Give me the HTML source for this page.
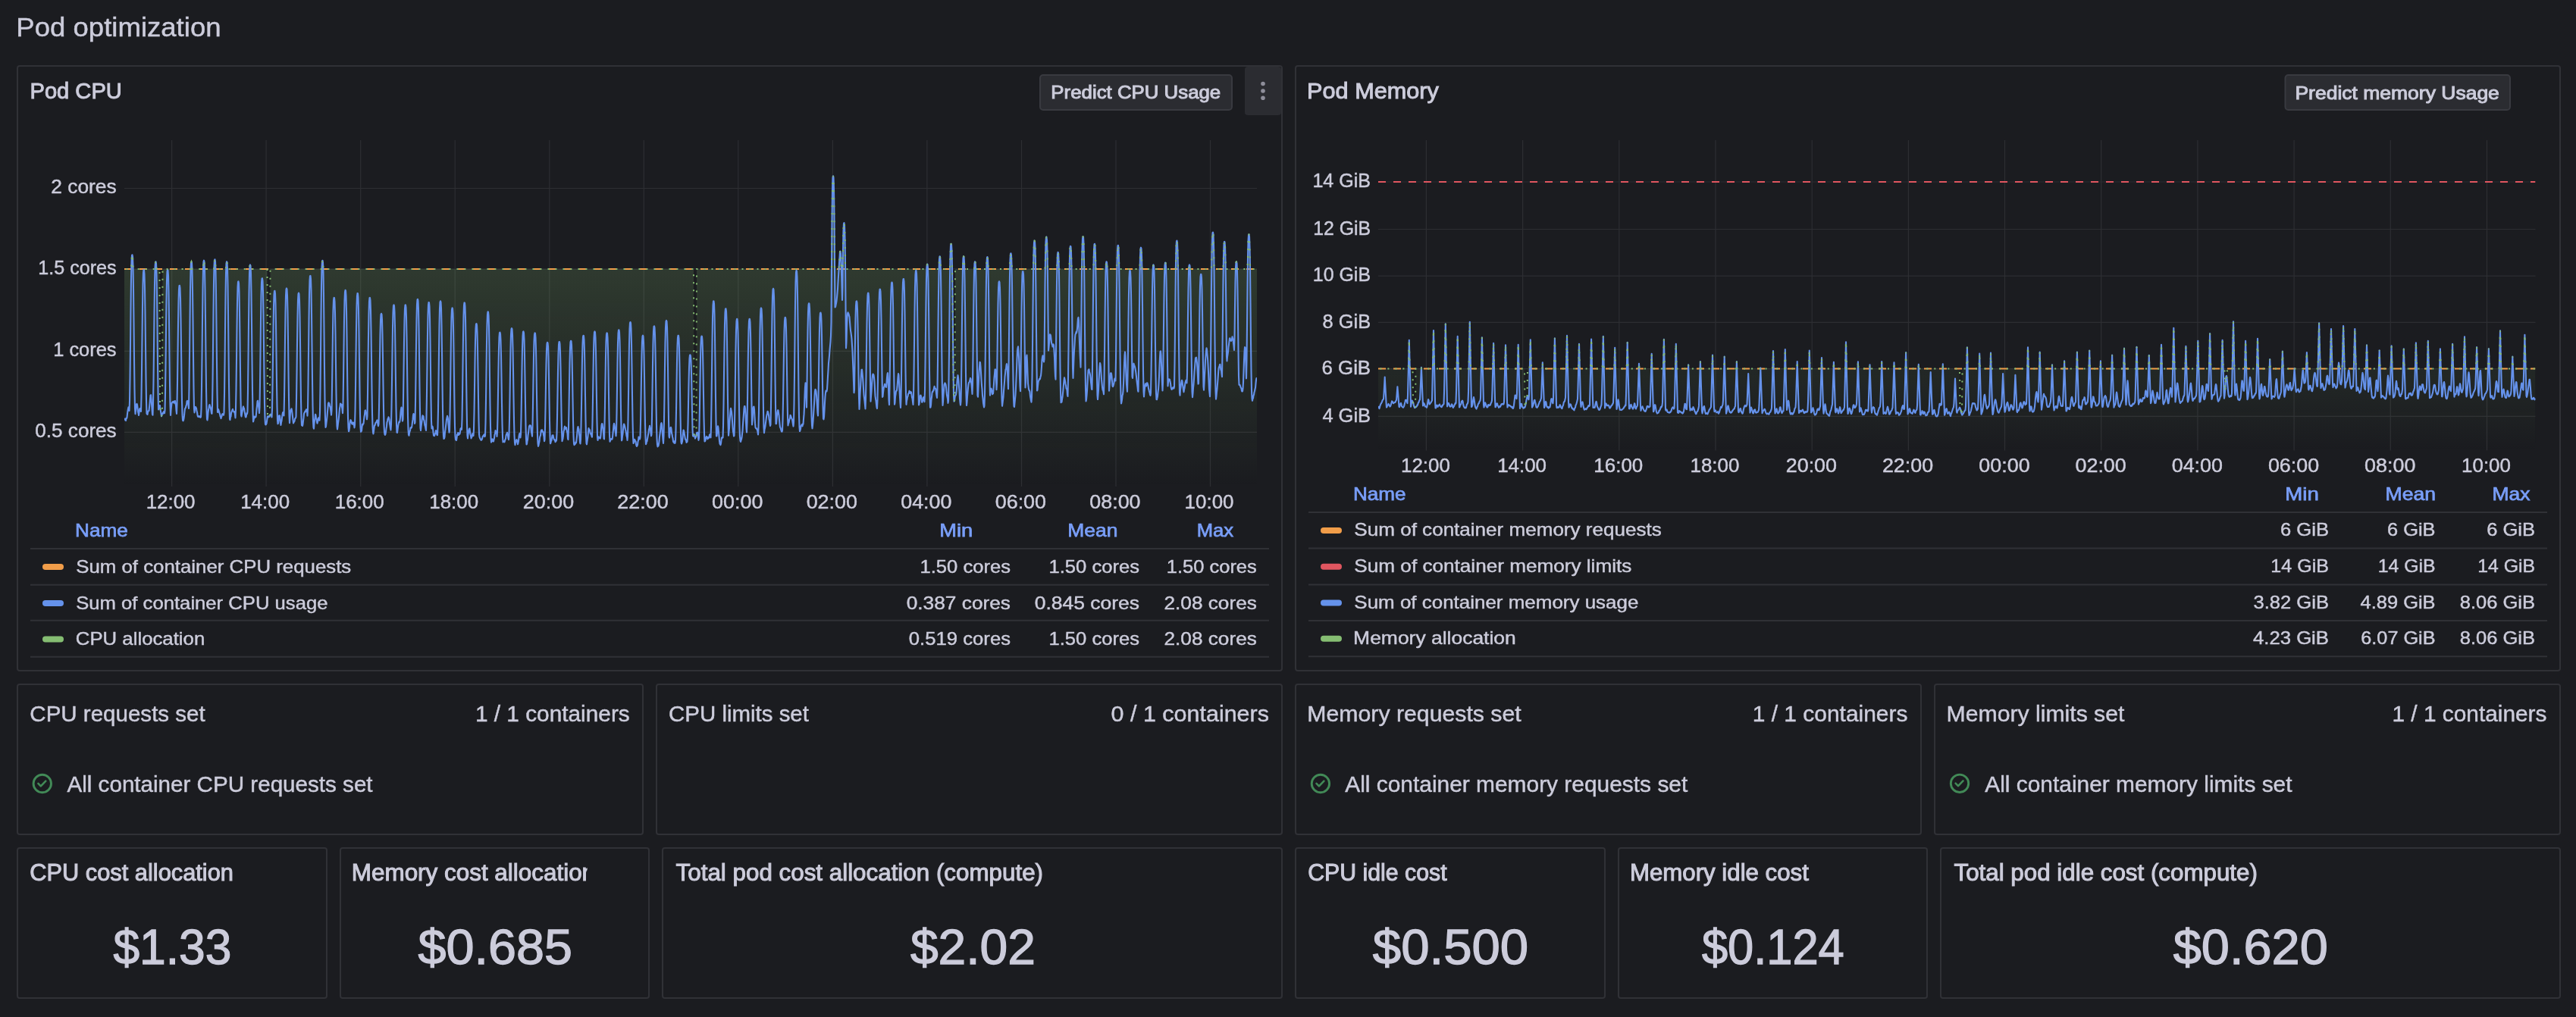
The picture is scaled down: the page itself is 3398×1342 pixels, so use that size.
<!DOCTYPE html>
<html><head><meta charset="utf-8"><title>Pod optimization</title>
<style>
html,body{margin:0;padding:0;background:#1b1c20;}
body{width:3398px;height:1342px;overflow:hidden;position:relative;font-family:"Liberation Sans", sans-serif;}
.p{position:absolute;box-sizing:border-box;border:2px solid #303136;border-radius:4px;background:#1b1c20;}
svg{position:absolute;left:0;top:0;will-change:transform;}
text{font-family:"Liberation Sans", sans-serif;fill:#ccccdb;stroke:#ccccdb;stroke-width:0.45px;}
text.m{stroke-width:1.0px;}
text.b{font-weight:700;}
text.v{stroke-width:1.3px;}
</style></head><body>
<div class="p" style="left:22px;top:86px;width:1670px;height:800px"></div>
<div class="p" style="left:1708px;top:86px;width:1670px;height:800px"></div>
<div class="p" style="left:22px;top:902px;width:827px;height:200px"></div>
<div class="p" style="left:865px;top:902px;width:827px;height:200px"></div>
<div class="p" style="left:1708px;top:902px;width:827px;height:200px"></div>
<div class="p" style="left:2551px;top:902px;width:827px;height:200px"></div>
<div class="p" style="left:22px;top:1118px;width:410px;height:200px"></div>
<div class="p" style="left:448px;top:1118px;width:409px;height:200px"></div>
<div class="p" style="left:873px;top:1118px;width:819px;height:200px"></div>
<div class="p" style="left:1708px;top:1118px;width:410px;height:200px"></div>
<div class="p" style="left:2134px;top:1118px;width:409px;height:200px"></div>
<div class="p" style="left:2559px;top:1118px;width:819px;height:200px"></div>
<svg width="3398" height="1342" viewBox="0 0 3398 1342">
<defs>
<linearGradient id="gc" gradientUnits="userSpaceOnUse" x1="0" y1="185" x2="0" y2="642"><stop offset="0" stop-color="#85bd72" stop-opacity="0.30"/><stop offset="1" stop-color="#85bd72" stop-opacity="0"/></linearGradient>
<linearGradient id="gm" gradientUnits="userSpaceOnUse" x1="0" y1="185" x2="0" y2="594.5"><stop offset="0" stop-color="#85bd72" stop-opacity="0.30"/><stop offset="1" stop-color="#85bd72" stop-opacity="0"/></linearGradient>
<clipPath id="cpc"><rect x="164" y="185" width="1494" height="457"/></clipPath>
<clipPath id="cpm"><rect x="1818" y="185" width="1526.5" height="409.5"/></clipPath>
<clipPath id="clip87"><rect x="448" y="1122.2" width="326.5" height="60"/></clipPath>
</defs>
<path d="M226.6,185V642 M351.1,185V642 M475.7,185V642 M600.2,185V642 M724.8,185V642 M849.3,185V642 M973.8,185V642 M1098.4,185V642 M1222.9,185V642 M1347.5,185V642 M1472.0,185V642 M1596.5,185V642 M164,248.5H1658 M164,354.9H1658 M164,463.4H1658 M164,570.4H1658 M1881.4,185V594.5 M2008.6,185V594.5 M2135.8,185V594.5 M2263.0,185V594.5 M2390.2,185V594.5 M2517.4,185V594.5 M2644.5,185V594.5 M2771.7,185V594.5 M2898.9,185V594.5 M3026.1,185V594.5 M3153.3,185V594.5 M3280.5,185V594.5 M1818,240.0H3344.5 M1818,302.5H3344.5 M1818,364.1H3344.5 M1818,425.4H3344.5 M1818,486.6H3344.5 M1818,549.3H3344.5" stroke="rgba(204,204,220,0.10)" stroke-width="1.2" fill="none"/>
<g clip-path="url(#cpc)">
<path d="M164.00,354.90 L164.50,354.90 L165.00,354.90 L165.50,354.90 L166.00,354.90 L166.50,354.90 L167.00,354.90 L167.50,354.90 L168.00,354.90 L168.50,354.90 L169.00,354.90 L169.50,354.90 L170.00,354.90 L170.50,354.90 L171.00,354.90 L171.50,354.90 L172.00,354.90 L172.50,354.90 L173.00,354.90 L173.50,345.03 L174.00,336.99 L174.40,336.20 L174.50,336.21 L175.00,338.85 L175.50,352.05 L176.00,354.90 L176.50,354.90 L177.00,354.90 L177.50,354.90 L178.00,354.90 L178.50,354.90 L179.00,354.90 L179.50,354.90 L180.00,354.90 L180.50,354.90 L181.00,354.90 L181.50,354.90 L182.00,354.90 L182.50,354.90 L183.00,354.90 L183.50,354.90 L184.00,354.90 L184.50,354.90 L185.00,354.90 L185.50,354.90 L186.00,354.90 L186.50,354.90 L187.00,354.90 L187.50,354.90 L188.00,354.90 L188.50,354.90 L189.00,354.90 L189.50,354.90 L189.70,354.90 L190.00,354.90 L190.50,354.90 L191.00,354.90 L191.50,354.90 L192.00,354.90 L192.50,354.90 L193.00,354.90 L193.50,354.90 L194.00,354.90 L194.50,354.90 L195.00,354.90 L195.50,354.90 L196.00,354.90 L196.50,354.90 L197.00,354.90 L197.50,354.90 L198.00,354.90 L198.50,354.90 L199.00,354.90 L199.50,354.90 L200.00,354.90 L200.50,354.90 L201.00,354.90 L201.50,354.90 L202.00,354.90 L202.50,354.90 L203.00,354.90 L203.50,354.90 L204.00,354.90 L204.50,353.82 L205.00,346.06 L205.40,345.30 L205.50,345.31 L206.00,347.86 L206.50,354.90 L207.00,354.90 L207.50,354.90 L208.00,354.90 L208.50,354.90 L209.00,354.90 L209.50,354.90 L210.00,354.90 L210.50,354.90 L211.00,535.10 L211.50,540.02 L212.00,542.83 L212.50,545.82 L213.00,549.26 L213.50,547.93 L214.00,545.60 L214.50,354.90 L215.00,354.90 L215.50,354.90 L216.00,354.90 L216.50,354.90 L217.00,354.90 L217.50,354.90 L218.00,354.90 L218.50,354.90 L219.00,354.90 L219.50,354.90 L220.00,354.90 L220.50,354.90 L221.00,354.90 L221.10,354.90 L221.50,354.90 L222.00,354.90 L222.50,354.90 L223.00,354.90 L223.50,354.90 L224.00,354.90 L224.50,354.90 L225.00,354.90 L225.50,354.90 L226.00,354.90 L226.50,354.90 L227.00,354.90 L227.50,354.90 L228.00,354.90 L228.50,354.90 L229.00,354.90 L229.50,354.90 L230.00,354.90 L230.50,354.90 L231.00,354.90 L231.50,354.90 L232.00,354.90 L232.50,354.90 L233.00,354.90 L233.50,354.90 L234.00,354.90 L234.50,354.90 L235.00,354.90 L235.50,354.90 L236.00,354.90 L236.50,354.90 L236.80,354.90 L237.00,354.90 L237.50,354.90 L238.00,354.90 L238.50,354.90 L239.00,354.90 L239.50,354.90 L240.00,354.90 L240.50,354.90 L241.00,354.90 L241.50,354.90 L242.00,354.90 L242.50,354.90 L243.00,354.90 L243.50,354.90 L244.00,354.90 L244.50,354.90 L245.00,354.90 L245.50,354.90 L246.00,354.90 L246.50,354.90 L247.00,354.90 L247.50,354.90 L248.00,354.90 L248.50,354.90 L249.00,354.90 L249.50,354.90 L250.00,354.90 L250.50,354.90 L251.00,354.90 L251.50,354.90 L252.00,346.80 L252.50,345.30 L253.00,346.80 L253.50,354.90 L254.00,354.90 L254.50,354.90 L255.00,354.90 L255.50,354.90 L256.00,354.90 L256.50,354.90 L257.00,354.90 L257.50,354.90 L258.00,354.90 L258.50,354.90 L259.00,354.90 L259.50,354.90 L260.00,354.90 L260.50,354.90 L261.00,354.90 L261.50,354.90 L262.00,354.90 L262.50,354.90 L263.00,354.90 L263.50,354.90 L264.00,354.90 L264.50,354.90 L265.00,354.90 L265.50,354.90 L266.00,354.90 L266.50,354.90 L267.00,354.90 L267.50,354.90 L268.00,354.90 L268.50,345.22 L269.00,343.70 L269.50,345.22 L270.00,354.90 L270.50,354.90 L271.00,354.90 L271.50,354.90 L272.00,354.90 L272.50,354.90 L273.00,354.90 L273.50,354.90 L274.00,354.90 L274.50,354.90 L275.00,354.90 L275.50,354.90 L276.00,354.90 L276.50,354.90 L277.00,354.90 L277.50,354.90 L278.00,354.90 L278.50,354.90 L279.00,354.90 L279.50,354.90 L280.00,354.90 L280.50,354.90 L281.00,354.90 L281.50,354.90 L282.00,354.90 L282.50,351.20 L283.00,343.19 L283.40,342.40 L283.50,342.41 L284.00,345.05 L284.50,354.90 L285.00,354.90 L285.50,354.90 L286.00,354.90 L286.50,354.90 L287.00,354.90 L287.50,354.90 L288.00,354.90 L288.50,354.90 L289.00,354.90 L289.50,354.90 L290.00,354.90 L290.50,354.90 L291.00,354.90 L291.50,354.90 L292.00,354.90 L292.50,354.90 L293.00,354.90 L293.50,354.90 L294.00,354.90 L294.50,354.90 L295.00,354.90 L295.50,354.90 L296.00,354.90 L296.50,354.90 L297.00,354.90 L297.50,354.90 L298.00,354.90 L298.50,347.92 L299.00,345.31 L299.10,345.30 L299.50,346.08 L300.00,354.02 L300.50,354.90 L301.00,354.90 L301.50,354.90 L302.00,354.90 L302.50,354.90 L303.00,354.90 L303.50,354.90 L304.00,354.90 L304.50,354.90 L305.00,354.90 L305.50,354.90 L306.00,354.90 L306.50,354.90 L307.00,354.90 L307.50,354.90 L308.00,354.90 L308.50,354.90 L309.00,354.90 L309.50,354.90 L310.00,354.90 L310.50,354.90 L311.00,354.90 L311.50,354.90 L312.00,354.90 L312.50,354.90 L313.00,354.90 L313.50,354.90 L314.00,354.90 L314.40,354.90 L314.50,354.90 L315.00,354.90 L315.50,354.90 L316.00,354.90 L316.50,354.90 L317.00,354.90 L317.50,354.90 L318.00,354.90 L318.50,354.90 L319.00,354.90 L319.50,354.90 L320.00,354.90 L320.50,354.90 L321.00,354.90 L321.50,354.90 L322.00,354.90 L322.50,354.90 L323.00,354.90 L323.50,354.90 L324.00,354.90 L324.50,354.90 L325.00,354.90 L325.50,354.90 L326.00,354.90 L326.50,354.90 L327.00,354.90 L327.50,354.90 L328.00,354.90 L328.50,354.90 L329.00,354.90 L329.50,350.91 L330.00,349.40 L330.50,350.91 L331.00,354.90 L331.50,354.90 L332.00,354.90 L332.50,354.90 L333.00,354.90 L333.50,354.90 L334.00,354.90 L334.50,354.90 L335.00,354.90 L335.50,354.90 L336.00,354.90 L336.50,354.90 L337.00,354.90 L337.50,354.90 L338.00,354.90 L338.50,354.90 L339.00,354.90 L339.50,354.90 L340.00,354.90 L340.50,354.90 L341.00,354.90 L341.50,354.90 L342.00,354.90 L342.50,354.90 L343.00,354.90 L343.50,354.90 L344.00,354.90 L344.50,354.90 L345.00,354.90 L345.50,354.90 L345.80,354.90 L346.00,354.90 L346.50,354.90 L347.00,354.90 L347.50,354.90 L348.00,354.90 L348.50,354.90 L349.00,354.90 L349.50,354.90 L350.00,354.90 L350.50,354.90 L351.00,354.90 L351.50,354.90 L352.00,354.90 L352.50,354.90 L353.00,549.49 L353.50,549.34 L354.00,549.00 L354.50,550.34 L355.00,549.30 L355.50,549.71 L356.00,548.26 L356.50,354.90 L357.00,354.90 L357.50,354.90 L358.00,354.90 L358.50,354.90 L359.00,354.90 L359.50,354.90 L360.00,354.90 L360.50,354.90 L361.00,354.90 L361.50,354.90 L362.00,354.90 L362.30,354.90 L362.50,354.90 L363.00,354.90 L363.50,354.90 L364.00,354.90 L364.50,354.90 L365.00,354.90 L365.50,354.90 L366.00,354.90 L366.50,354.90 L367.00,354.90 L367.50,354.90 L368.00,354.90 L368.50,354.90 L369.00,354.90 L369.50,354.90 L370.00,354.90 L370.50,354.90 L371.00,354.90 L371.50,354.90 L372.00,354.90 L372.50,354.90 L373.00,354.90 L373.50,354.90 L374.00,354.90 L374.50,354.90 L375.00,354.90 L375.50,354.90 L376.00,354.90 L376.50,354.90 L377.00,354.90 L377.50,354.90 L378.00,354.90 L378.50,354.90 L379.00,354.90 L379.50,354.90 L380.00,354.90 L380.50,354.90 L381.00,354.90 L381.50,354.90 L382.00,354.90 L382.50,354.90 L383.00,354.90 L383.50,354.90 L384.00,354.90 L384.50,354.90 L385.00,354.90 L385.50,354.90 L386.00,354.90 L386.50,354.90 L387.00,354.90 L387.50,354.90 L388.00,354.90 L388.50,354.90 L389.00,354.90 L389.50,354.90 L390.00,354.90 L390.50,354.90 L391.00,354.90 L391.50,354.90 L392.00,354.90 L392.50,354.90 L393.00,354.90 L393.50,354.90 L394.00,354.90 L394.50,354.90 L395.00,354.90 L395.50,354.90 L396.00,354.90 L396.50,354.90 L397.00,354.90 L397.50,354.90 L398.00,354.90 L398.50,354.90 L399.00,354.90 L399.50,354.90 L400.00,354.90 L400.50,354.90 L401.00,354.90 L401.50,354.90 L402.00,354.90 L402.50,354.90 L403.00,354.90 L403.50,354.90 L404.00,354.90 L404.50,354.90 L405.00,354.90 L405.50,354.90 L406.00,354.90 L406.50,354.90 L407.00,354.90 L407.50,354.90 L408.00,354.90 L408.50,354.90 L409.00,354.90 L409.30,354.90 L409.50,354.90 L410.00,354.90 L410.50,354.90 L411.00,354.90 L411.50,354.90 L412.00,354.90 L412.50,354.90 L413.00,354.90 L413.50,354.90 L414.00,354.90 L414.50,354.90 L415.00,354.90 L415.50,354.90 L416.00,354.90 L416.50,354.90 L417.00,354.90 L417.50,354.90 L418.00,354.90 L418.50,354.90 L419.00,354.90 L419.50,354.90 L420.00,354.90 L420.50,354.90 L421.00,354.90 L421.50,354.90 L422.00,354.90 L422.50,354.90 L423.00,354.90 L423.50,354.90 L424.00,354.90 L424.50,352.81 L425.00,344.52 L425.40,343.70 L425.50,343.71 L426.00,346.44 L426.50,354.90 L427.00,354.90 L427.50,354.90 L428.00,354.90 L428.50,354.90 L429.00,354.90 L429.50,354.90 L430.00,354.90 L430.50,354.90 L431.00,354.90 L431.50,354.90 L432.00,354.90 L432.50,354.90 L433.00,354.90 L433.50,354.90 L434.00,354.90 L434.50,354.90 L435.00,354.90 L435.50,354.90 L436.00,354.90 L436.50,354.90 L437.00,354.90 L437.50,354.90 L438.00,354.90 L438.50,354.90 L439.00,354.90 L439.50,354.90 L440.00,354.90 L440.50,354.90 L440.70,354.90 L441.00,354.90 L441.50,354.90 L442.00,354.90 L442.50,354.90 L443.00,354.90 L443.50,354.90 L444.00,354.90 L444.50,354.90 L445.00,354.90 L445.50,354.90 L446.00,354.90 L446.50,354.90 L447.00,354.90 L447.50,354.90 L448.00,354.90 L448.50,354.90 L449.00,354.90 L449.50,354.90 L450.00,354.90 L450.50,354.90 L451.00,354.90 L451.50,354.90 L452.00,354.90 L452.50,354.90 L453.00,354.90 L453.50,354.90 L454.00,354.90 L454.50,354.90 L455.00,354.90 L455.50,354.90 L455.60,354.90 L456.00,354.90 L456.50,354.90 L457.00,354.90 L457.50,354.90 L458.00,354.90 L458.50,354.90 L459.00,354.90 L459.50,354.90 L460.00,354.90 L460.50,354.90 L461.00,354.90 L461.50,354.90 L462.00,354.90 L462.50,354.90 L463.00,354.90 L463.50,354.90 L464.00,354.90 L464.50,354.90 L465.00,354.90 L465.50,354.90 L466.00,354.90 L466.50,354.90 L467.00,354.90 L467.50,354.90 L468.00,354.90 L468.50,354.90 L469.00,354.90 L469.50,354.90 L470.00,354.90 L470.50,354.90 L471.00,354.90 L471.50,354.90 L471.70,354.90 L472.00,354.90 L472.50,354.90 L473.00,354.90 L473.50,354.90 L474.00,354.90 L474.50,354.90 L475.00,354.90 L475.50,354.90 L476.00,354.90 L476.50,354.90 L477.00,354.90 L477.50,354.90 L478.00,354.90 L478.50,354.90 L479.00,354.90 L479.50,354.90 L480.00,354.90 L480.50,354.90 L481.00,354.90 L481.50,354.90 L482.00,354.90 L482.50,354.90 L483.00,354.90 L483.50,354.90 L484.00,354.90 L484.50,354.90 L485.00,354.90 L485.50,354.90 L486.00,354.90 L486.50,354.90 L487.00,354.90 L487.50,354.90 L487.80,354.90 L488.00,354.90 L488.50,354.90 L489.00,354.90 L489.50,354.90 L490.00,354.90 L490.50,354.90 L491.00,354.90 L491.50,354.90 L492.00,354.90 L492.50,354.90 L493.00,354.90 L493.50,354.90 L494.00,354.90 L494.50,354.90 L495.00,354.90 L495.50,354.90 L496.00,354.90 L496.50,354.90 L497.00,354.90 L497.50,354.90 L498.00,354.90 L498.50,354.90 L499.00,354.90 L499.50,354.90 L500.00,354.90 L500.50,354.90 L501.00,354.90 L501.50,354.90 L502.00,354.90 L502.50,354.90 L503.00,354.90 L503.50,354.90 L504.00,354.90 L504.50,354.90 L505.00,354.90 L505.50,354.90 L506.00,354.90 L506.50,354.90 L507.00,354.90 L507.50,354.90 L508.00,354.90 L508.50,354.90 L509.00,354.90 L509.50,354.90 L510.00,354.90 L510.50,354.90 L511.00,354.90 L511.50,354.90 L512.00,354.90 L512.50,354.90 L513.00,354.90 L513.50,354.90 L514.00,354.90 L514.50,354.90 L515.00,354.90 L515.50,354.90 L516.00,354.90 L516.50,354.90 L517.00,354.90 L517.50,354.90 L518.00,354.90 L518.50,354.90 L519.00,354.90 L519.50,354.90 L520.00,354.90 L520.50,354.90 L521.00,354.90 L521.50,354.90 L522.00,354.90 L522.50,354.90 L523.00,354.90 L523.50,354.90 L524.00,354.90 L524.50,354.90 L525.00,354.90 L525.50,354.90 L526.00,354.90 L526.50,354.90 L527.00,354.90 L527.50,354.90 L528.00,354.90 L528.50,354.90 L529.00,354.90 L529.50,354.90 L530.00,354.90 L530.50,354.90 L531.00,354.90 L531.50,354.90 L532.00,354.90 L532.50,354.90 L533.00,354.90 L533.50,354.90 L534.00,354.90 L534.50,354.90 L534.80,354.90 L535.00,354.90 L535.50,354.90 L536.00,354.90 L536.50,354.90 L537.00,354.90 L537.50,354.90 L538.00,354.90 L538.50,354.90 L539.00,354.90 L539.50,354.90 L540.00,354.90 L540.50,354.90 L541.00,354.90 L541.50,354.90 L542.00,354.90 L542.50,354.90 L543.00,354.90 L543.50,354.90 L544.00,354.90 L544.50,354.90 L545.00,354.90 L545.50,354.90 L546.00,354.90 L546.50,354.90 L547.00,354.90 L547.50,354.90 L548.00,354.90 L548.50,354.90 L549.00,354.90 L549.50,354.90 L550.00,354.90 L550.50,354.90 L550.90,354.90 L551.00,354.90 L551.50,354.90 L552.00,354.90 L552.50,354.90 L553.00,354.90 L553.50,354.90 L554.00,354.90 L554.50,354.90 L555.00,354.90 L555.50,354.90 L556.00,354.90 L556.50,354.90 L557.00,354.90 L557.50,354.90 L558.00,354.90 L558.50,354.90 L559.00,354.90 L559.50,354.90 L560.00,354.90 L560.50,354.90 L561.00,354.90 L561.50,354.90 L562.00,354.90 L562.50,354.90 L563.00,354.90 L563.50,354.90 L564.00,354.90 L564.50,354.90 L565.00,354.90 L565.50,354.90 L565.70,354.90 L566.00,354.90 L566.50,354.90 L567.00,354.90 L567.50,354.90 L568.00,354.90 L568.50,354.90 L569.00,354.90 L569.50,354.90 L570.00,354.90 L570.50,354.90 L571.00,354.90 L571.50,354.90 L572.00,354.90 L572.50,354.90 L573.00,354.90 L573.50,354.90 L574.00,354.90 L574.50,354.90 L575.00,354.90 L575.50,354.90 L576.00,354.90 L576.50,354.90 L577.00,354.90 L577.50,354.90 L578.00,354.90 L578.50,354.90 L579.00,354.90 L579.50,354.90 L580.00,354.90 L580.50,354.90 L581.00,354.90 L581.50,354.90 L582.00,354.90 L582.50,354.90 L583.00,354.90 L583.50,354.90 L584.00,354.90 L584.50,354.90 L585.00,354.90 L585.50,354.90 L586.00,354.90 L586.50,354.90 L587.00,354.90 L587.50,354.90 L588.00,354.90 L588.50,354.90 L589.00,354.90 L589.50,354.90 L590.00,354.90 L590.50,354.90 L591.00,354.90 L591.50,354.90 L592.00,354.90 L592.50,354.90 L593.00,354.90 L593.50,354.90 L594.00,354.90 L594.50,354.90 L595.00,354.90 L595.50,354.90 L596.00,354.90 L596.50,354.90 L596.60,354.90 L597.00,354.90 L597.50,354.90 L598.00,354.90 L598.50,354.90 L599.00,354.90 L599.50,354.90 L600.00,354.90 L600.50,354.90 L601.00,354.90 L601.50,354.90 L602.00,354.90 L602.50,354.90 L603.00,354.90 L603.50,354.90 L604.00,354.90 L604.50,354.90 L605.00,354.90 L605.50,354.90 L606.00,354.90 L606.50,354.90 L607.00,354.90 L607.50,354.90 L608.00,354.90 L608.50,354.90 L609.00,354.90 L609.50,354.90 L610.00,354.90 L610.50,354.90 L611.00,354.90 L611.50,354.90 L612.00,354.90 L612.50,354.90 L612.70,354.90 L613.00,354.90 L613.50,354.90 L614.00,354.90 L614.50,354.90 L615.00,354.90 L615.50,354.90 L616.00,354.90 L616.50,354.90 L617.00,354.90 L617.50,354.90 L618.00,354.90 L618.50,354.90 L619.00,354.90 L619.50,354.90 L620.00,354.90 L620.50,354.90 L621.00,354.90 L621.50,354.90 L622.00,354.90 L622.50,354.90 L623.00,354.90 L623.50,354.90 L624.00,354.90 L624.50,354.90 L625.00,354.90 L625.50,354.90 L626.00,354.90 L626.50,354.90 L627.00,354.90 L627.50,354.90 L628.00,354.90 L628.40,354.90 L628.50,354.90 L629.00,354.90 L629.50,354.90 L630.00,354.90 L630.50,354.90 L631.00,354.90 L631.50,354.90 L632.00,354.90 L632.50,354.90 L633.00,354.90 L633.50,354.90 L634.00,354.90 L634.50,354.90 L635.00,354.90 L635.50,354.90 L636.00,354.90 L636.50,354.90 L637.00,354.90 L637.50,354.90 L638.00,354.90 L638.50,354.90 L639.00,354.90 L639.50,354.90 L640.00,354.90 L640.50,354.90 L641.00,354.90 L641.50,354.90 L642.00,354.90 L642.50,354.90 L643.00,354.90 L643.50,354.90 L643.70,354.90 L644.00,354.90 L644.50,354.90 L645.00,354.90 L645.50,354.90 L646.00,354.90 L646.50,354.90 L647.00,354.90 L647.50,354.90 L648.00,354.90 L648.50,354.90 L649.00,354.90 L649.50,354.90 L650.00,354.90 L650.50,354.90 L651.00,354.90 L651.50,354.90 L652.00,354.90 L652.50,354.90 L653.00,354.90 L653.50,354.90 L654.00,354.90 L654.50,354.90 L655.00,354.90 L655.50,354.90 L656.00,354.90 L656.50,354.90 L657.00,354.90 L657.50,354.90 L658.00,354.90 L658.50,354.90 L659.00,354.90 L659.40,354.90 L659.50,354.90 L660.00,354.90 L660.50,354.90 L661.00,354.90 L661.50,354.90 L662.00,354.90 L662.50,354.90 L663.00,354.90 L663.50,354.90 L664.00,354.90 L664.50,354.90 L665.00,354.90 L665.50,354.90 L666.00,354.90 L666.50,354.90 L667.00,354.90 L667.50,354.90 L668.00,354.90 L668.50,354.90 L669.00,354.90 L669.50,354.90 L670.00,354.90 L670.50,354.90 L671.00,354.90 L671.50,354.90 L672.00,354.90 L672.50,354.90 L673.00,354.90 L673.50,354.90 L674.00,354.90 L674.50,354.90 L675.00,354.90 L675.50,354.90 L676.00,354.90 L676.50,354.90 L677.00,354.90 L677.50,354.90 L678.00,354.90 L678.50,354.90 L679.00,354.90 L679.50,354.90 L680.00,354.90 L680.50,354.90 L681.00,354.90 L681.50,354.90 L682.00,354.90 L682.50,354.90 L683.00,354.90 L683.50,354.90 L684.00,354.90 L684.50,354.90 L685.00,354.90 L685.50,354.90 L686.00,354.90 L686.50,354.90 L687.00,354.90 L687.50,354.90 L688.00,354.90 L688.50,354.90 L689.00,354.90 L689.50,354.90 L690.00,354.90 L690.40,354.90 L690.50,354.90 L691.00,354.90 L691.50,354.90 L692.00,354.90 L692.50,354.90 L693.00,354.90 L693.50,354.90 L694.00,354.90 L694.50,354.90 L695.00,354.90 L695.50,354.90 L696.00,354.90 L696.50,354.90 L697.00,354.90 L697.50,354.90 L698.00,354.90 L698.50,354.90 L699.00,354.90 L699.50,354.90 L700.00,354.90 L700.50,354.90 L701.00,354.90 L701.50,354.90 L702.00,354.90 L702.50,354.90 L703.00,354.90 L703.50,354.90 L704.00,354.90 L704.50,354.90 L705.00,354.90 L705.50,354.90 L705.60,354.90 L706.00,354.90 L706.50,354.90 L707.00,354.90 L707.50,354.90 L708.00,354.90 L708.50,354.90 L709.00,354.90 L709.50,354.90 L710.00,354.90 L710.50,354.90 L711.00,354.90 L711.50,354.90 L712.00,354.90 L712.50,354.90 L713.00,354.90 L713.50,354.90 L714.00,354.90 L714.50,354.90 L715.00,354.90 L715.50,354.90 L716.00,354.90 L716.50,354.90 L717.00,354.90 L717.50,354.90 L718.00,354.90 L718.50,354.90 L719.00,354.90 L719.50,354.90 L720.00,354.90 L720.50,354.90 L721.00,354.90 L721.50,354.90 L722.00,354.90 L722.10,354.90 L722.50,354.90 L723.00,354.90 L723.50,354.90 L724.00,354.90 L724.50,354.90 L725.00,354.90 L725.50,354.90 L726.00,354.90 L726.50,354.90 L727.00,354.90 L727.50,354.90 L728.00,354.90 L728.50,354.90 L729.00,354.90 L729.50,354.90 L730.00,354.90 L730.50,354.90 L731.00,354.90 L731.50,354.90 L732.00,354.90 L732.50,354.90 L733.00,354.90 L733.50,354.90 L734.00,354.90 L734.50,354.90 L735.00,354.90 L735.50,354.90 L736.00,354.90 L736.50,354.90 L737.00,354.90 L737.50,354.90 L737.80,354.90 L738.00,354.90 L738.50,354.90 L739.00,354.90 L739.50,354.90 L740.00,354.90 L740.50,354.90 L741.00,354.90 L741.50,354.90 L742.00,354.90 L742.50,354.90 L743.00,354.90 L743.50,354.90 L744.00,354.90 L744.50,354.90 L745.00,354.90 L745.50,354.90 L746.00,354.90 L746.50,354.90 L747.00,354.90 L747.50,354.90 L748.00,354.90 L748.50,354.90 L749.00,354.90 L749.50,354.90 L750.00,354.90 L750.50,354.90 L751.00,354.90 L751.50,354.90 L752.00,354.90 L752.50,354.90 L753.00,354.90 L753.10,354.90 L753.50,354.90 L754.00,354.90 L754.50,354.90 L755.00,354.90 L755.50,354.90 L756.00,354.90 L756.50,354.90 L757.00,354.90 L757.50,354.90 L758.00,354.90 L758.50,354.90 L759.00,354.90 L759.50,354.90 L760.00,354.90 L760.50,354.90 L761.00,354.90 L761.50,354.90 L762.00,354.90 L762.50,354.90 L763.00,354.90 L763.50,354.90 L764.00,354.90 L764.50,354.90 L765.00,354.90 L765.50,354.90 L766.00,354.90 L766.50,354.90 L767.00,354.90 L767.50,354.90 L768.00,354.90 L768.50,354.90 L769.00,354.90 L769.50,354.90 L769.60,354.90 L770.00,354.90 L770.50,354.90 L771.00,354.90 L771.50,354.90 L772.00,354.90 L772.50,354.90 L773.00,354.90 L773.50,354.90 L774.00,354.90 L774.50,354.90 L775.00,354.90 L775.50,354.90 L776.00,354.90 L776.50,354.90 L777.00,354.90 L777.50,354.90 L778.00,354.90 L778.50,354.90 L779.00,354.90 L779.50,354.90 L780.00,354.90 L780.50,354.90 L781.00,354.90 L781.50,354.90 L782.00,354.90 L782.50,354.90 L783.00,354.90 L783.50,354.90 L784.00,354.90 L784.50,354.90 L785.00,354.90 L785.50,354.90 L786.00,354.90 L786.50,354.90 L787.00,354.90 L787.50,354.90 L788.00,354.90 L788.50,354.90 L789.00,354.90 L789.50,354.90 L790.00,354.90 L790.50,354.90 L791.00,354.90 L791.50,354.90 L792.00,354.90 L792.50,354.90 L793.00,354.90 L793.50,354.90 L794.00,354.90 L794.50,354.90 L795.00,354.90 L795.50,354.90 L796.00,354.90 L796.50,354.90 L797.00,354.90 L797.50,354.90 L798.00,354.90 L798.50,354.90 L799.00,354.90 L799.50,354.90 L800.00,354.90 L800.50,354.90 L800.60,354.90 L801.00,354.90 L801.50,354.90 L802.00,354.90 L802.50,354.90 L803.00,354.90 L803.50,354.90 L804.00,354.90 L804.50,354.90 L805.00,354.90 L805.50,354.90 L806.00,354.90 L806.50,354.90 L807.00,354.90 L807.50,354.90 L808.00,354.90 L808.50,354.90 L809.00,354.90 L809.50,354.90 L810.00,354.90 L810.50,354.90 L811.00,354.90 L811.50,354.90 L812.00,354.90 L812.50,354.90 L813.00,354.90 L813.50,354.90 L814.00,354.90 L814.50,354.90 L815.00,354.90 L815.50,354.90 L816.00,354.90 L816.30,354.90 L816.50,354.90 L817.00,354.90 L817.50,354.90 L818.00,354.90 L818.50,354.90 L819.00,354.90 L819.50,354.90 L820.00,354.90 L820.50,354.90 L821.00,354.90 L821.50,354.90 L822.00,354.90 L822.50,354.90 L823.00,354.90 L823.50,354.90 L824.00,354.90 L824.50,354.90 L825.00,354.90 L825.50,354.90 L826.00,354.90 L826.50,354.90 L827.00,354.90 L827.50,354.90 L828.00,354.90 L828.50,354.90 L829.00,354.90 L829.50,354.90 L830.00,354.90 L830.50,354.90 L831.00,354.90 L831.50,354.90 L832.00,354.90 L832.50,354.90 L833.00,354.90 L833.50,354.90 L834.00,354.90 L834.50,354.90 L835.00,354.90 L835.50,354.90 L836.00,354.90 L836.50,354.90 L837.00,354.90 L837.50,354.90 L838.00,354.90 L838.50,354.90 L839.00,354.90 L839.50,354.90 L840.00,354.90 L840.50,354.90 L841.00,354.90 L841.50,354.90 L842.00,354.90 L842.50,354.90 L843.00,354.90 L843.50,354.90 L844.00,354.90 L844.50,354.90 L845.00,354.90 L845.50,354.90 L846.00,354.90 L846.50,354.90 L847.00,354.90 L847.50,354.90 L848.00,354.90 L848.50,354.90 L849.00,354.90 L849.50,354.90 L850.00,354.90 L850.50,354.90 L851.00,354.90 L851.50,354.90 L852.00,354.90 L852.50,354.90 L853.00,354.90 L853.50,354.90 L854.00,354.90 L854.50,354.90 L855.00,354.90 L855.50,354.90 L856.00,354.90 L856.50,354.90 L857.00,354.90 L857.50,354.90 L858.00,354.90 L858.50,354.90 L859.00,354.90 L859.50,354.90 L860.00,354.90 L860.50,354.90 L861.00,354.90 L861.50,354.90 L862.00,354.90 L862.50,354.90 L862.90,354.90 L863.00,354.90 L863.50,354.90 L864.00,354.90 L864.50,354.90 L865.00,354.90 L865.50,354.90 L866.00,354.90 L866.50,354.90 L867.00,354.90 L867.50,354.90 L868.00,354.90 L868.50,354.90 L869.00,354.90 L869.50,354.90 L870.00,354.90 L870.50,354.90 L871.00,354.90 L871.50,354.90 L872.00,354.90 L872.50,354.90 L873.00,354.90 L873.50,354.90 L874.00,354.90 L874.50,354.90 L875.00,354.90 L875.50,354.90 L876.00,354.90 L876.50,354.90 L877.00,354.90 L877.50,354.90 L878.00,354.90 L878.50,354.90 L879.00,354.90 L879.50,354.90 L880.00,354.90 L880.50,354.90 L881.00,354.90 L881.50,354.90 L882.00,354.90 L882.50,354.90 L883.00,354.90 L883.50,354.90 L884.00,354.90 L884.50,354.90 L885.00,354.90 L885.50,354.90 L886.00,354.90 L886.50,354.90 L887.00,354.90 L887.50,354.90 L888.00,354.90 L888.50,354.90 L889.00,354.90 L889.50,354.90 L890.00,354.90 L890.50,354.90 L891.00,354.90 L891.50,354.90 L892.00,354.90 L892.50,354.90 L893.00,354.90 L893.50,354.90 L894.00,354.90 L894.50,354.90 L894.70,354.90 L895.00,354.90 L895.50,354.90 L896.00,354.90 L896.50,354.90 L897.00,354.90 L897.50,354.90 L898.00,354.90 L898.50,354.90 L899.00,354.90 L899.50,354.90 L900.00,354.90 L900.50,354.90 L901.00,354.90 L901.50,354.90 L902.00,354.90 L902.50,354.90 L903.00,354.90 L903.50,354.90 L904.00,354.90 L904.50,354.90 L905.00,354.90 L905.50,354.90 L906.00,354.90 L906.50,354.90 L907.00,354.90 L907.50,354.90 L908.00,354.90 L908.50,354.90 L909.00,354.90 L909.50,354.90 L910.00,354.90 L910.40,354.90 L910.50,354.90 L911.00,354.90 L911.50,354.90 L912.00,354.90 L912.50,354.90 L913.00,354.90 L913.50,354.90 L914.00,354.90 L914.50,354.90 L915.00,354.90 L915.50,573.18 L916.00,574.87 L916.50,575.86 L917.00,578.57 L917.50,577.21 L918.00,576.69 L918.50,574.69 L919.00,354.90 L919.50,354.90 L920.00,354.90 L920.50,354.90 L921.00,354.90 L921.50,354.90 L922.00,354.90 L922.50,354.90 L923.00,354.90 L923.50,354.90 L924.00,354.90 L924.50,354.90 L925.00,354.90 L925.50,354.90 L925.60,354.90 L926.00,354.90 L926.50,354.90 L927.00,354.90 L927.50,354.90 L928.00,354.90 L928.50,354.90 L929.00,354.90 L929.50,354.90 L930.00,354.90 L930.50,354.90 L931.00,354.90 L931.50,354.90 L932.00,354.90 L932.50,354.90 L933.00,354.90 L933.50,354.90 L934.00,354.90 L934.50,354.90 L935.00,354.90 L935.50,354.90 L936.00,354.90 L936.50,354.90 L937.00,354.90 L937.50,354.90 L938.00,354.90 L938.50,354.90 L939.00,354.90 L939.50,354.90 L940.00,354.90 L940.50,354.90 L941.00,354.90 L941.30,354.90 L941.50,354.90 L942.00,354.90 L942.50,354.90 L943.00,354.90 L943.50,354.90 L944.00,354.90 L944.50,354.90 L945.00,354.90 L945.50,354.90 L946.00,354.90 L946.50,354.90 L947.00,354.90 L947.50,354.90 L948.00,354.90 L948.50,354.90 L949.00,354.90 L949.50,354.90 L950.00,354.90 L950.50,354.90 L951.00,354.90 L951.50,354.90 L952.00,354.90 L952.50,354.90 L953.00,354.90 L953.50,354.90 L954.00,354.90 L954.50,354.90 L955.00,354.90 L955.50,354.90 L956.00,354.90 L956.50,354.90 L957.00,354.90 L957.30,354.90 L957.50,354.90 L958.00,354.90 L958.50,354.90 L959.00,354.90 L959.50,354.90 L960.00,354.90 L960.50,354.90 L961.00,354.90 L961.50,354.90 L962.00,354.90 L962.50,354.90 L963.00,354.90 L963.50,354.90 L964.00,354.90 L964.50,354.90 L965.00,354.90 L965.50,354.90 L966.00,354.90 L966.50,354.90 L967.00,354.90 L967.50,354.90 L968.00,354.90 L968.50,354.90 L969.00,354.90 L969.50,354.90 L970.00,354.90 L970.50,354.90 L971.00,354.90 L971.50,354.90 L972.00,354.90 L972.20,354.90 L972.50,354.90 L973.00,354.90 L973.50,354.90 L974.00,354.90 L974.50,354.90 L975.00,354.90 L975.50,354.90 L976.00,354.90 L976.50,354.90 L977.00,354.90 L977.50,354.90 L978.00,354.90 L978.50,354.90 L979.00,354.90 L979.50,354.90 L980.00,354.90 L980.50,354.90 L981.00,354.90 L981.50,354.90 L982.00,354.90 L982.50,354.90 L983.00,354.90 L983.50,354.90 L984.00,354.90 L984.50,354.90 L985.00,354.90 L985.50,354.90 L986.00,354.90 L986.50,354.90 L987.00,354.90 L987.50,354.90 L988.00,354.90 L988.50,354.90 L988.70,354.90 L989.00,354.90 L989.50,354.90 L990.00,354.90 L990.50,354.90 L991.00,354.90 L991.50,354.90 L992.00,354.90 L992.50,354.90 L993.00,354.90 L993.50,354.90 L994.00,354.90 L994.50,354.90 L995.00,354.90 L995.50,354.90 L996.00,354.90 L996.50,354.90 L997.00,354.90 L997.50,354.90 L998.00,354.90 L998.50,354.90 L999.00,354.90 L999.50,354.90 L1000.00,354.90 L1000.50,354.90 L1001.00,354.90 L1001.50,354.90 L1002.00,354.90 L1002.50,354.90 L1003.00,354.90 L1003.50,354.90 L1004.00,354.90 L1004.50,354.90 L1005.00,354.90 L1005.50,354.90 L1006.00,354.90 L1006.50,354.90 L1007.00,354.90 L1007.50,354.90 L1008.00,354.90 L1008.50,354.90 L1009.00,354.90 L1009.50,354.90 L1010.00,354.90 L1010.50,354.90 L1011.00,354.90 L1011.50,354.90 L1012.00,354.90 L1012.50,354.90 L1013.00,354.90 L1013.50,354.90 L1014.00,354.90 L1014.50,354.90 L1015.00,354.90 L1015.50,354.90 L1016.00,354.90 L1016.50,354.90 L1017.00,354.90 L1017.50,354.90 L1018.00,354.90 L1018.50,354.90 L1019.00,354.90 L1019.50,354.90 L1020.00,354.90 L1020.50,354.90 L1021.00,354.90 L1021.50,354.90 L1022.00,354.90 L1022.50,354.90 L1023.00,354.90 L1023.50,354.90 L1024.00,354.90 L1024.50,354.90 L1025.00,354.90 L1025.50,354.90 L1026.00,354.90 L1026.50,354.90 L1027.00,354.90 L1027.50,354.90 L1028.00,354.90 L1028.50,354.90 L1029.00,354.90 L1029.50,354.90 L1030.00,354.90 L1030.50,354.90 L1031.00,354.90 L1031.50,354.90 L1032.00,354.90 L1032.50,354.90 L1033.00,354.90 L1033.50,354.90 L1034.00,354.90 L1034.50,354.90 L1035.00,354.90 L1035.50,354.90 L1035.80,354.90 L1036.00,354.90 L1036.50,354.90 L1037.00,354.90 L1037.50,354.90 L1038.00,354.90 L1038.50,354.90 L1039.00,354.90 L1039.50,354.90 L1040.00,354.90 L1040.50,354.90 L1041.00,354.90 L1041.50,354.90 L1042.00,354.90 L1042.50,354.90 L1043.00,354.90 L1043.50,354.90 L1044.00,354.90 L1044.50,354.90 L1045.00,354.90 L1045.50,354.90 L1046.00,354.90 L1046.50,354.90 L1047.00,354.90 L1047.50,354.90 L1048.00,354.90 L1048.50,354.90 L1049.00,354.90 L1049.50,354.90 L1050.00,354.90 L1050.50,354.90 L1050.60,354.90 L1051.00,354.90 L1051.50,354.90 L1052.00,354.90 L1052.50,354.90 L1053.00,354.90 L1053.50,354.90 L1054.00,354.90 L1054.50,354.90 L1055.00,354.90 L1055.50,354.90 L1056.00,354.90 L1056.50,354.90 L1057.00,354.90 L1057.50,354.90 L1058.00,354.90 L1058.50,354.90 L1059.00,354.90 L1059.50,354.90 L1060.00,354.90 L1060.50,354.90 L1061.00,354.90 L1061.50,354.90 L1062.00,354.90 L1062.50,354.90 L1063.00,354.90 L1063.50,354.90 L1064.00,354.90 L1064.50,354.90 L1065.00,354.90 L1065.50,354.90 L1066.00,354.90 L1066.50,354.90 L1067.00,354.90 L1067.10,354.90 L1067.50,354.90 L1068.00,354.90 L1068.50,354.90 L1069.00,354.90 L1069.50,354.90 L1070.00,354.90 L1070.50,354.90 L1071.00,354.90 L1071.50,354.90 L1072.00,354.90 L1072.50,354.90 L1073.00,354.90 L1073.50,354.90 L1074.00,354.90 L1074.50,354.90 L1075.00,354.90 L1075.50,354.90 L1076.00,354.90 L1076.50,354.90 L1077.00,354.90 L1077.50,354.90 L1078.00,354.90 L1078.50,354.90 L1079.00,354.90 L1079.50,354.90 L1080.00,354.90 L1080.50,354.90 L1081.00,354.90 L1081.50,354.90 L1082.00,354.90 L1082.40,354.90 L1082.50,354.90 L1083.00,354.90 L1083.50,354.90 L1084.00,354.90 L1084.50,354.90 L1085.00,354.90 L1085.50,354.90 L1086.00,354.90 L1086.50,354.90 L1087.00,354.90 L1087.50,354.90 L1088.00,354.90 L1088.50,354.90 L1089.00,354.90 L1089.50,354.90 L1090.00,354.90 L1090.50,354.90 L1091.00,354.90 L1091.50,354.90 L1092.00,354.90 L1092.50,354.90 L1093.00,354.90 L1093.50,354.90 L1094.00,354.90 L1094.50,354.90 L1095.00,354.90 L1095.50,354.90 L1096.00,354.90 L1096.50,354.90 L1097.00,352.15 L1097.50,289.49 L1098.00,250.33 L1098.50,234.52 L1099.00,232.20 L1099.50,234.52 L1100.00,250.30 L1100.50,289.36 L1101.00,351.79 L1101.50,354.90 L1102.00,354.90 L1102.50,354.90 L1103.00,354.90 L1103.50,354.90 L1104.00,354.90 L1104.50,354.90 L1105.00,354.90 L1105.50,354.90 L1106.00,354.90 L1106.50,354.90 L1107.00,347.25 L1107.50,340.14 L1108.00,331.94 L1108.50,331.57 L1109.00,334.65 L1109.50,346.58 L1110.00,354.90 L1110.50,354.90 L1111.00,354.90 L1111.50,354.90 L1112.00,332.03 L1112.50,304.76 L1113.00,295.05 L1113.40,294.10 L1113.50,294.11 L1114.00,297.30 L1114.50,313.19 L1115.00,348.49 L1115.50,354.90 L1116.00,354.90 L1116.50,354.90 L1117.00,354.90 L1117.50,354.90 L1118.00,354.90 L1118.50,354.90 L1119.00,354.90 L1119.50,354.90 L1120.00,354.90 L1120.50,354.90 L1121.00,354.90 L1121.50,354.90 L1122.00,354.90 L1122.50,354.90 L1123.00,354.90 L1123.50,354.90 L1124.00,354.90 L1124.50,354.90 L1125.00,354.90 L1125.50,354.90 L1126.00,354.90 L1126.50,354.90 L1127.00,354.90 L1127.50,354.90 L1128.00,354.90 L1128.50,354.90 L1129.00,354.90 L1129.50,354.90 L1129.90,354.90 L1130.00,354.90 L1130.50,354.90 L1131.00,354.90 L1131.50,354.90 L1132.00,354.90 L1132.50,354.90 L1133.00,354.90 L1133.50,354.90 L1134.00,354.90 L1134.50,354.90 L1135.00,354.90 L1135.50,354.90 L1136.00,354.90 L1136.50,354.90 L1137.00,354.90 L1137.50,354.90 L1138.00,354.90 L1138.50,354.90 L1139.00,354.90 L1139.50,354.90 L1140.00,354.90 L1140.50,354.90 L1141.00,354.90 L1141.50,354.90 L1142.00,354.90 L1142.50,354.90 L1143.00,354.90 L1143.50,354.90 L1144.00,354.90 L1144.50,354.90 L1145.00,354.90 L1145.20,354.90 L1145.50,354.90 L1146.00,354.90 L1146.50,354.90 L1147.00,354.90 L1147.50,354.90 L1148.00,354.90 L1148.50,354.90 L1149.00,354.90 L1149.50,354.90 L1150.00,354.90 L1150.50,354.90 L1151.00,354.90 L1151.50,354.90 L1152.00,354.90 L1152.50,354.90 L1153.00,354.90 L1153.50,354.90 L1154.00,354.90 L1154.50,354.90 L1155.00,354.90 L1155.50,354.90 L1156.00,354.90 L1156.50,354.90 L1157.00,354.90 L1157.50,354.90 L1158.00,354.90 L1158.50,354.90 L1159.00,354.90 L1159.50,354.90 L1160.00,354.90 L1160.50,354.90 L1160.80,354.90 L1161.00,354.90 L1161.50,354.90 L1162.00,354.90 L1162.50,354.90 L1163.00,354.90 L1163.50,354.90 L1164.00,354.90 L1164.50,354.90 L1165.00,354.90 L1165.50,354.90 L1166.00,354.90 L1166.50,354.90 L1167.00,354.90 L1167.50,354.90 L1168.00,354.90 L1168.50,354.90 L1169.00,354.90 L1169.50,354.90 L1170.00,354.90 L1170.50,354.90 L1171.00,354.90 L1171.50,354.90 L1172.00,354.90 L1172.50,354.90 L1173.00,354.90 L1173.50,354.90 L1174.00,354.90 L1174.50,354.90 L1175.00,354.90 L1175.50,354.90 L1176.00,354.90 L1176.50,354.90 L1177.00,354.90 L1177.50,354.90 L1178.00,354.90 L1178.50,354.90 L1179.00,354.90 L1179.50,354.90 L1180.00,354.90 L1180.50,354.90 L1181.00,354.90 L1181.50,354.90 L1182.00,354.90 L1182.50,354.90 L1183.00,354.90 L1183.50,354.90 L1184.00,354.90 L1184.50,354.90 L1185.00,354.90 L1185.50,354.90 L1186.00,354.90 L1186.50,354.90 L1187.00,354.90 L1187.50,354.90 L1188.00,354.90 L1188.50,354.90 L1189.00,354.90 L1189.50,354.90 L1190.00,354.90 L1190.50,354.90 L1191.00,354.90 L1191.50,354.90 L1191.80,354.90 L1192.00,354.90 L1192.50,354.90 L1193.00,354.90 L1193.50,354.90 L1194.00,354.90 L1194.50,354.90 L1195.00,354.90 L1195.50,354.90 L1196.00,354.90 L1196.50,354.90 L1197.00,354.90 L1197.50,354.90 L1198.00,354.90 L1198.50,354.90 L1199.00,354.90 L1199.50,354.90 L1200.00,354.90 L1200.50,354.90 L1201.00,354.90 L1201.50,354.90 L1202.00,354.90 L1202.50,354.90 L1203.00,354.90 L1203.50,354.90 L1204.00,354.90 L1204.50,354.90 L1205.00,354.90 L1205.50,354.90 L1206.00,354.90 L1206.50,354.90 L1207.00,354.90 L1207.50,354.90 L1208.00,354.90 L1208.30,354.90 L1208.50,354.90 L1209.00,354.90 L1209.50,354.90 L1210.00,354.90 L1210.50,354.90 L1211.00,354.90 L1211.50,354.90 L1212.00,354.90 L1212.50,354.90 L1213.00,354.90 L1213.50,354.90 L1214.00,354.90 L1214.50,354.90 L1215.00,354.90 L1215.50,354.90 L1216.00,354.90 L1216.50,354.90 L1217.00,354.90 L1217.50,354.90 L1218.00,354.90 L1218.50,354.90 L1219.00,354.90 L1219.50,354.90 L1220.00,354.90 L1220.50,354.90 L1221.00,354.90 L1221.50,354.90 L1222.00,354.90 L1222.50,352.43 L1223.00,348.69 L1223.20,348.60 L1223.50,348.90 L1224.00,354.29 L1224.50,354.90 L1225.00,354.90 L1225.50,354.90 L1226.00,354.90 L1226.50,354.90 L1227.00,354.90 L1227.50,354.90 L1228.00,354.90 L1228.50,354.90 L1229.00,354.90 L1229.50,354.90 L1230.00,354.90 L1230.50,354.90 L1231.00,354.90 L1231.50,354.90 L1232.00,354.90 L1232.50,354.90 L1233.00,354.90 L1233.50,354.90 L1234.00,354.90 L1234.50,354.90 L1235.00,354.90 L1235.50,354.90 L1236.00,354.90 L1236.50,354.90 L1237.00,354.90 L1237.50,354.90 L1238.00,354.90 L1238.50,354.90 L1239.00,342.31 L1239.50,338.39 L1239.70,338.30 L1240.00,338.62 L1240.50,344.25 L1241.00,354.90 L1241.50,354.90 L1242.00,354.90 L1242.50,354.90 L1243.00,354.90 L1243.50,354.90 L1244.00,354.90 L1244.50,354.90 L1245.00,354.90 L1245.50,354.90 L1246.00,354.90 L1246.50,354.90 L1247.00,354.90 L1247.50,354.90 L1248.00,354.90 L1248.50,354.90 L1249.00,354.90 L1249.50,354.90 L1250.00,354.90 L1250.50,354.90 L1251.00,354.90 L1251.50,354.90 L1252.00,354.90 L1252.50,354.90 L1253.00,354.90 L1253.50,338.07 L1254.00,324.53 L1254.50,321.81 L1254.60,321.80 L1255.00,322.61 L1255.50,330.86 L1256.00,354.03 L1256.50,393.84 L1257.00,443.21 L1257.50,489.06 L1258.00,520.87 L1258.50,529.68 L1259.00,529.08 L1259.50,524.70 L1260.00,354.90 L1260.50,354.90 L1261.00,354.90 L1261.50,354.90 L1262.00,354.90 L1262.50,354.90 L1263.00,354.90 L1263.50,354.90 L1264.00,354.90 L1264.50,354.90 L1265.00,354.90 L1265.50,354.90 L1266.00,354.90 L1266.50,354.90 L1267.00,354.90 L1267.50,354.90 L1268.00,354.90 L1268.50,354.90 L1269.00,354.90 L1269.50,354.90 L1270.00,353.30 L1270.50,340.81 L1271.00,338.31 L1271.10,338.30 L1271.50,339.05 L1272.00,346.65 L1272.50,354.90 L1273.00,354.90 L1273.50,354.90 L1274.00,354.90 L1274.50,354.90 L1275.00,354.90 L1275.50,354.90 L1276.00,354.90 L1276.50,354.90 L1277.00,354.90 L1277.50,354.90 L1278.00,354.90 L1278.50,354.90 L1279.00,354.90 L1279.50,354.90 L1280.00,354.90 L1280.50,354.90 L1281.00,354.90 L1281.50,354.90 L1282.00,354.90 L1282.50,354.90 L1283.00,354.90 L1283.50,354.90 L1284.00,354.90 L1284.50,354.90 L1285.00,354.90 L1285.50,347.72 L1286.00,345.31 L1286.10,345.30 L1286.50,346.02 L1287.00,353.33 L1287.50,354.90 L1288.00,354.90 L1288.50,354.90 L1289.00,354.90 L1289.50,354.90 L1290.00,354.90 L1290.50,354.90 L1291.00,354.90 L1291.50,354.90 L1292.00,354.90 L1292.50,354.90 L1293.00,354.90 L1293.50,354.90 L1294.00,354.90 L1294.50,354.90 L1295.00,354.90 L1295.50,354.90 L1296.00,354.90 L1296.50,354.90 L1297.00,354.90 L1297.50,354.90 L1298.00,354.90 L1298.50,354.90 L1299.00,354.90 L1299.50,354.90 L1300.00,354.90 L1300.50,354.90 L1301.00,354.90 L1301.50,347.35 L1302.00,339.84 L1302.40,339.10 L1302.50,339.11 L1303.00,341.58 L1303.50,353.90 L1304.00,354.90 L1304.50,354.90 L1305.00,354.90 L1305.50,354.90 L1306.00,354.90 L1306.50,354.90 L1307.00,354.90 L1307.50,354.90 L1308.00,354.90 L1308.50,354.90 L1309.00,354.90 L1309.50,354.90 L1310.00,354.90 L1310.50,354.90 L1311.00,354.90 L1311.50,354.90 L1312.00,354.90 L1312.50,354.90 L1313.00,354.90 L1313.50,354.90 L1314.00,354.90 L1314.50,354.90 L1315.00,354.90 L1315.50,354.90 L1316.00,354.90 L1316.50,354.90 L1317.00,354.90 L1317.50,354.90 L1318.00,354.90 L1318.50,354.90 L1319.00,354.90 L1319.50,354.90 L1320.00,354.90 L1320.50,354.90 L1321.00,354.90 L1321.50,354.90 L1322.00,354.90 L1322.50,354.90 L1323.00,354.90 L1323.50,354.90 L1324.00,354.90 L1324.50,354.90 L1325.00,354.90 L1325.50,354.90 L1326.00,354.90 L1326.50,354.90 L1327.00,354.90 L1327.50,354.90 L1328.00,354.90 L1328.50,354.90 L1329.00,354.90 L1329.50,354.90 L1330.00,354.90 L1330.50,354.90 L1331.00,354.90 L1331.50,354.90 L1332.00,354.90 L1332.50,342.58 L1333.00,334.95 L1333.40,334.20 L1333.50,334.21 L1334.00,336.72 L1334.50,349.23 L1335.00,354.90 L1335.50,354.90 L1336.00,354.90 L1336.50,354.90 L1337.00,354.90 L1337.50,354.90 L1338.00,354.90 L1338.50,354.90 L1339.00,354.90 L1339.50,354.90 L1340.00,354.90 L1340.50,354.90 L1341.00,354.90 L1341.50,354.90 L1342.00,354.90 L1342.50,354.90 L1343.00,354.90 L1343.50,354.90 L1344.00,354.90 L1344.50,354.90 L1345.00,354.90 L1345.50,354.90 L1346.00,354.90 L1346.50,354.90 L1347.00,354.90 L1347.50,354.90 L1348.00,354.90 L1348.50,354.90 L1349.00,354.90 L1349.30,354.90 L1349.50,354.90 L1350.00,354.90 L1350.50,354.90 L1351.00,354.90 L1351.50,354.90 L1352.00,354.90 L1352.50,354.90 L1353.00,354.90 L1353.50,354.90 L1354.00,354.90 L1354.50,354.90 L1355.00,354.90 L1355.50,354.90 L1356.00,354.90 L1356.50,354.90 L1357.00,354.90 L1357.50,354.90 L1358.00,354.90 L1358.50,354.90 L1359.00,354.90 L1359.50,354.90 L1360.00,354.90 L1360.50,354.90 L1361.00,354.90 L1361.50,354.90 L1362.00,354.90 L1362.50,354.90 L1363.00,354.90 L1363.50,333.77 L1364.00,320.31 L1364.50,317.61 L1364.60,317.60 L1365.00,318.41 L1365.50,326.60 L1366.00,349.63 L1366.50,354.90 L1367.00,354.90 L1367.50,354.90 L1368.00,354.90 L1368.50,354.90 L1369.00,354.90 L1369.50,354.90 L1370.00,354.90 L1370.50,354.90 L1371.00,354.90 L1371.50,354.90 L1372.00,354.90 L1372.50,354.90 L1373.00,354.90 L1373.50,354.90 L1374.00,354.90 L1374.50,354.90 L1375.00,354.90 L1375.50,354.90 L1376.00,354.90 L1376.50,354.90 L1377.00,354.90 L1377.50,354.90 L1378.00,354.90 L1378.50,354.90 L1379.00,339.27 L1379.50,319.19 L1380.00,313.05 L1380.30,312.70 L1380.50,312.80 L1381.00,317.07 L1381.50,333.86 L1382.00,354.90 L1382.50,354.90 L1383.00,354.90 L1383.50,354.90 L1384.00,354.90 L1384.50,354.90 L1385.00,354.90 L1385.50,354.90 L1386.00,354.90 L1386.50,354.90 L1387.00,354.90 L1387.50,354.90 L1388.00,354.90 L1388.50,354.90 L1389.00,354.90 L1389.50,354.90 L1390.00,354.90 L1390.50,354.90 L1391.00,354.90 L1391.50,354.90 L1392.00,354.90 L1392.50,354.90 L1393.00,354.90 L1393.50,354.90 L1394.00,354.90 L1394.50,347.88 L1395.00,335.41 L1395.50,332.91 L1395.60,332.90 L1396.00,333.65 L1396.50,341.24 L1397.00,354.90 L1397.50,354.90 L1398.00,354.90 L1398.50,354.90 L1399.00,354.90 L1399.50,354.90 L1400.00,354.90 L1400.50,354.90 L1401.00,354.90 L1401.50,354.90 L1402.00,354.90 L1402.50,354.90 L1403.00,354.90 L1403.50,354.90 L1404.00,354.90 L1404.50,354.90 L1405.00,354.90 L1405.50,354.90 L1406.00,354.90 L1406.50,354.90 L1407.00,354.90 L1407.50,354.90 L1408.00,354.90 L1408.50,354.90 L1409.00,354.90 L1409.50,354.90 L1410.00,354.90 L1410.50,354.90 L1411.00,340.24 L1411.50,327.30 L1412.00,324.71 L1412.10,324.70 L1412.50,325.47 L1413.00,333.35 L1413.50,354.90 L1414.00,354.90 L1414.50,354.90 L1415.00,354.90 L1415.50,354.90 L1416.00,354.90 L1416.50,354.90 L1417.00,354.90 L1417.50,354.90 L1418.00,354.90 L1418.50,354.90 L1419.00,354.90 L1419.50,354.90 L1420.00,354.90 L1420.50,354.90 L1421.00,354.90 L1421.50,354.90 L1422.00,354.90 L1422.50,354.90 L1423.00,354.90 L1423.50,354.90 L1424.00,354.90 L1424.50,354.90 L1425.00,354.90 L1425.50,354.90 L1426.00,354.90 L1426.50,354.90 L1427.00,354.90 L1427.50,328.71 L1428.00,315.05 L1428.50,312.31 L1428.60,312.30 L1429.00,313.12 L1429.50,321.44 L1430.00,344.81 L1430.50,354.90 L1431.00,354.90 L1431.50,354.90 L1432.00,354.90 L1432.50,354.90 L1433.00,354.90 L1433.50,354.90 L1434.00,354.90 L1434.50,354.90 L1435.00,354.90 L1435.50,354.90 L1436.00,354.90 L1436.50,354.90 L1437.00,354.90 L1437.50,354.90 L1438.00,354.90 L1438.50,354.90 L1439.00,354.90 L1439.50,354.90 L1440.00,354.90 L1440.50,354.90 L1441.00,354.90 L1441.50,354.90 L1442.00,354.90 L1442.50,352.88 L1443.00,330.53 L1443.50,322.58 L1443.90,321.80 L1444.00,321.81 L1444.50,324.43 L1445.00,337.47 L1445.50,354.90 L1446.00,354.90 L1446.50,354.90 L1447.00,354.90 L1447.50,354.90 L1448.00,354.90 L1448.50,354.90 L1449.00,354.90 L1449.50,354.90 L1450.00,354.90 L1450.50,354.90 L1451.00,354.90 L1451.50,354.90 L1452.00,354.90 L1452.50,354.90 L1453.00,354.90 L1453.50,354.90 L1454.00,354.90 L1454.50,354.90 L1455.00,354.90 L1455.50,354.90 L1456.00,354.90 L1456.50,354.90 L1457.00,354.90 L1457.50,354.90 L1458.00,354.90 L1458.50,354.90 L1459.00,347.63 L1459.50,345.31 L1459.60,345.30 L1460.00,345.99 L1460.50,353.06 L1461.00,354.90 L1461.50,354.90 L1462.00,354.90 L1462.50,354.90 L1463.00,354.90 L1463.50,354.90 L1464.00,354.90 L1464.50,354.90 L1465.00,354.90 L1465.50,354.90 L1466.00,354.90 L1466.50,354.90 L1467.00,354.90 L1467.50,354.90 L1468.00,354.90 L1468.50,354.90 L1469.00,354.90 L1469.50,354.90 L1470.00,354.90 L1470.50,354.90 L1471.00,354.90 L1471.50,354.90 L1472.00,354.90 L1472.50,354.90 L1473.00,354.90 L1473.50,348.71 L1474.00,329.89 L1474.50,324.13 L1474.80,323.80 L1475.00,323.90 L1475.50,327.90 L1476.00,343.65 L1476.50,354.90 L1477.00,354.90 L1477.50,354.90 L1478.00,354.90 L1478.50,354.90 L1479.00,354.90 L1479.50,354.90 L1480.00,354.90 L1480.50,354.90 L1481.00,354.90 L1481.50,354.90 L1482.00,354.90 L1482.50,354.90 L1483.00,354.90 L1483.50,354.90 L1484.00,354.90 L1484.50,354.90 L1485.00,354.90 L1485.50,354.90 L1486.00,354.90 L1486.50,354.90 L1487.00,354.90 L1487.50,354.90 L1488.00,354.90 L1488.50,354.90 L1489.00,354.90 L1489.50,354.90 L1490.00,354.90 L1490.50,354.90 L1491.00,354.90 L1491.50,354.90 L1492.00,354.90 L1492.50,354.90 L1493.00,354.90 L1493.50,354.90 L1494.00,354.90 L1494.50,354.90 L1495.00,354.90 L1495.50,354.90 L1496.00,354.90 L1496.50,354.90 L1497.00,354.90 L1497.50,354.90 L1498.00,354.90 L1498.50,354.90 L1499.00,354.90 L1499.50,354.90 L1500.00,354.90 L1500.50,354.90 L1501.00,354.90 L1501.50,354.90 L1502.00,354.90 L1502.50,354.90 L1503.00,354.90 L1503.50,354.90 L1504.00,338.21 L1504.50,328.18 L1505.00,326.70 L1505.50,328.17 L1506.00,338.21 L1506.50,354.90 L1507.00,354.90 L1507.50,354.90 L1508.00,354.90 L1508.50,354.90 L1509.00,354.90 L1509.50,354.90 L1510.00,354.90 L1510.50,354.90 L1511.00,354.90 L1511.50,354.90 L1512.00,354.90 L1512.50,354.90 L1513.00,354.90 L1513.50,354.90 L1514.00,354.90 L1514.50,354.90 L1515.00,354.90 L1515.50,354.90 L1516.00,354.90 L1516.50,354.90 L1517.00,354.90 L1517.50,354.90 L1518.00,354.90 L1518.50,354.90 L1519.00,354.90 L1519.50,354.90 L1520.00,354.90 L1520.50,354.90 L1521.00,350.71 L1521.50,349.40 L1522.00,350.71 L1522.50,354.90 L1523.00,354.90 L1523.50,354.90 L1524.00,354.90 L1524.50,354.90 L1525.00,354.90 L1525.50,354.90 L1526.00,354.90 L1526.50,354.90 L1527.00,354.90 L1527.50,354.90 L1528.00,354.90 L1528.50,354.90 L1529.00,354.90 L1529.50,354.90 L1530.00,354.90 L1530.50,354.90 L1531.00,354.90 L1531.50,354.90 L1532.00,354.90 L1532.50,354.90 L1533.00,354.90 L1533.50,354.90 L1534.00,354.90 L1534.50,354.90 L1535.00,354.90 L1535.50,354.90 L1536.00,354.90 L1536.50,350.12 L1537.00,346.59 L1537.20,346.50 L1537.50,346.79 L1538.00,351.88 L1538.50,354.90 L1539.00,354.90 L1539.50,354.90 L1540.00,354.90 L1540.50,354.90 L1541.00,354.90 L1541.50,354.90 L1542.00,354.90 L1542.50,354.90 L1543.00,354.90 L1543.50,354.90 L1544.00,354.90 L1544.50,354.90 L1545.00,354.90 L1545.50,354.90 L1546.00,354.90 L1546.50,354.90 L1547.00,354.90 L1547.50,354.90 L1548.00,354.90 L1548.50,354.90 L1549.00,354.90 L1549.50,354.90 L1550.00,354.90 L1550.50,354.90 L1551.00,348.79 L1551.50,326.37 L1552.00,318.38 L1552.40,317.60 L1552.50,317.61 L1553.00,320.23 L1553.50,333.33 L1554.00,354.90 L1554.50,354.90 L1555.00,354.90 L1555.50,354.90 L1556.00,354.90 L1556.50,354.90 L1557.00,354.90 L1557.50,354.90 L1558.00,354.90 L1558.50,354.90 L1559.00,354.90 L1559.50,354.90 L1560.00,354.90 L1560.50,354.90 L1561.00,354.90 L1561.50,354.90 L1562.00,354.90 L1562.50,354.90 L1563.00,354.90 L1563.50,354.90 L1564.00,354.90 L1564.50,354.90 L1565.00,354.90 L1565.50,354.90 L1566.00,354.90 L1566.50,354.90 L1567.00,354.90 L1567.50,354.90 L1568.00,354.90 L1568.50,350.70 L1569.00,349.40 L1569.50,350.70 L1570.00,354.90 L1570.50,354.90 L1571.00,354.90 L1571.50,354.90 L1572.00,354.90 L1572.50,354.90 L1573.00,354.90 L1573.50,354.90 L1574.00,354.90 L1574.50,354.90 L1575.00,354.90 L1575.50,354.90 L1576.00,354.90 L1576.50,354.90 L1577.00,354.90 L1577.50,354.90 L1578.00,354.90 L1578.50,354.90 L1579.00,354.90 L1579.50,354.90 L1580.00,354.90 L1580.50,354.90 L1581.00,354.90 L1581.50,354.90 L1582.00,354.90 L1582.50,354.90 L1583.00,354.90 L1583.50,354.90 L1584.00,354.90 L1584.20,354.90 L1584.50,354.90 L1585.00,354.90 L1585.50,354.90 L1586.00,354.90 L1586.50,354.90 L1587.00,354.90 L1587.50,354.90 L1588.00,354.90 L1588.50,354.90 L1589.00,354.90 L1589.50,354.90 L1590.00,354.90 L1590.50,354.90 L1591.00,354.90 L1591.50,354.90 L1592.00,354.90 L1592.50,354.90 L1593.00,354.90 L1593.50,354.90 L1594.00,354.90 L1594.50,354.90 L1595.00,354.90 L1595.50,354.90 L1596.00,354.90 L1596.50,354.90 L1597.00,354.90 L1597.50,354.90 L1598.00,354.90 L1598.50,339.08 L1599.00,315.66 L1599.50,307.32 L1599.90,306.50 L1600.00,306.51 L1600.50,309.25 L1601.00,322.93 L1601.50,353.33 L1602.00,354.90 L1602.50,354.90 L1603.00,354.90 L1603.50,354.90 L1604.00,354.90 L1604.50,354.90 L1605.00,354.90 L1605.50,354.90 L1606.00,354.90 L1606.50,354.90 L1607.00,354.90 L1607.50,354.90 L1608.00,354.90 L1608.50,354.90 L1609.00,354.90 L1609.50,354.90 L1610.00,354.90 L1610.50,354.90 L1611.00,354.90 L1611.50,354.90 L1612.00,354.90 L1612.50,354.90 L1613.00,354.90 L1613.50,354.90 L1614.00,338.80 L1614.50,323.01 L1615.00,319.00 L1615.20,318.90 L1615.50,319.23 L1616.00,325.00 L1616.50,343.86 L1617.00,354.90 L1617.50,354.90 L1618.00,354.90 L1618.50,354.90 L1619.00,354.90 L1619.50,354.90 L1620.00,354.90 L1620.50,354.90 L1621.00,354.90 L1621.50,354.90 L1622.00,354.90 L1622.50,354.90 L1623.00,354.90 L1623.50,354.90 L1624.00,354.90 L1624.50,354.90 L1625.00,354.90 L1625.50,354.90 L1626.00,354.90 L1626.50,354.90 L1627.00,354.90 L1627.50,354.90 L1628.00,354.90 L1628.50,354.90 L1629.00,354.90 L1629.50,354.90 L1630.00,352.84 L1630.50,345.97 L1630.90,345.30 L1631.00,345.31 L1631.50,347.57 L1632.00,354.90 L1632.50,354.90 L1633.00,354.90 L1633.50,354.90 L1634.00,354.90 L1634.50,354.90 L1635.00,354.90 L1635.50,354.90 L1636.00,354.90 L1636.50,354.90 L1637.00,354.90 L1637.50,354.90 L1638.00,354.90 L1638.50,354.90 L1639.00,354.90 L1639.50,354.90 L1640.00,354.90 L1640.50,354.90 L1641.00,354.90 L1641.50,354.90 L1642.00,354.90 L1642.50,354.90 L1643.00,354.90 L1643.50,354.90 L1644.00,354.90 L1644.50,354.90 L1645.00,354.90 L1645.50,354.90 L1646.00,341.34 L1646.50,318.38 L1647.00,310.20 L1647.40,309.40 L1647.50,309.41 L1648.00,312.10 L1648.50,325.51 L1649.00,354.90 L1649.50,354.90 L1650.00,354.90 L1650.50,354.90 L1651.00,354.90 L1651.50,354.90 L1652.00,354.90 L1652.50,354.90 L1653.00,354.90 L1653.50,354.90 L1654.00,354.90 L1654.50,354.90 L1655.00,354.90 L1655.50,354.90 L1656.00,354.90 L1656.50,354.90 L1657.00,354.90 L1657.50,354.90 L1658.00,354.90 L1658,642 L164,642 Z" fill="url(#gc)"/>
<path d="M164,354.9H1658" stroke="#f19d49" stroke-width="2" stroke-dasharray="10 10" fill="none"/>
<path d="M164.00,554.44 L164.50,552.65 L165.00,553.05 L165.50,554.64 L166.00,555.02 L166.50,551.77 L167.00,552.13 L167.50,550.84 L168.00,546.02 L168.50,542.40 L169.00,539.44 L169.50,537.21 L170.00,540.74 L170.50,541.98 L171.00,530.15 L171.50,499.16 L172.00,454.49 L172.50,406.39 L173.00,367.60 L173.50,345.03 L174.00,336.99 L174.40,336.20 L174.50,336.21 L175.00,338.85 L175.50,352.05 L176.00,381.40 L176.50,425.26 L177.00,473.67 L177.50,513.76 L178.00,538.42 L178.50,546.28 L179.00,541.95 L179.50,537.18 L180.00,533.57 L180.50,532.81 L181.00,534.12 L181.50,538.01 L182.00,543.29 L182.50,545.13 L183.00,548.00 L183.50,544.75 L184.00,540.39 L184.50,538.99 L185.00,540.37 L185.50,541.60 L186.00,543.03 L186.50,523.44 L187.00,489.51 L187.50,446.06 L188.00,404.34 L188.50,374.56 L189.00,359.83 L189.50,356.09 L189.70,356.00 L190.00,356.30 L190.50,361.70 L191.00,379.31 L191.50,412.03 L192.00,455.13 L192.50,497.55 L193.00,528.80 L193.50,545.77 L194.00,546.51 L194.50,546.97 L195.00,544.61 L195.50,542.43 L196.00,542.12 L196.50,542.07 L197.00,537.36 L197.50,532.71 L198.00,526.70 L198.50,521.64 L199.00,521.21 L199.50,526.27 L200.00,533.10 L200.50,539.98 L201.00,546.82 L201.50,547.76 L202.00,532.55 L202.50,502.63 L203.00,459.50 L203.50,413.07 L204.00,375.62 L204.50,353.82 L205.00,346.06 L205.40,345.30 L205.50,345.31 L206.00,347.86 L206.50,360.61 L207.00,388.94 L207.50,431.29 L208.00,478.02 L208.50,516.74 L209.00,540.55 L209.50,538.24 L210.00,535.24 L210.50,535.58 L211.00,535.10 L211.50,540.02 L212.00,542.83 L212.50,545.82 L213.00,549.26 L213.50,547.93 L214.00,545.60 L214.50,546.27 L215.00,545.86 L215.50,543.88 L216.00,543.10 L216.50,544.87 L217.00,545.37 L217.50,541.70 L218.00,519.10 L218.50,482.30 L219.00,437.85 L219.50,397.55 L220.00,370.58 L220.50,358.44 L221.00,356.01 L221.10,356.00 L221.50,356.73 L222.00,364.13 L222.50,384.91 L223.00,420.63 L223.50,464.95 L224.00,506.13 L224.50,534.73 L225.00,547.84 L225.50,541.00 L226.00,536.41 L226.50,532.00 L227.00,531.16 L227.50,531.16 L228.00,529.92 L228.50,529.85 L229.00,530.36 L229.50,531.66 L230.00,529.46 L230.50,529.28 L231.00,529.02 L231.50,532.95 L232.00,534.81 L232.50,541.71 L233.00,545.91 L233.50,533.30 L234.00,505.01 L234.50,466.58 L235.00,427.52 L235.50,397.85 L236.00,381.87 L236.50,376.98 L236.80,376.70 L237.00,376.78 L237.50,380.18 L238.00,393.56 L238.50,420.63 L239.00,458.56 L239.50,498.09 L240.00,528.98 L240.50,546.84 L241.00,554.30 L241.50,555.37 L242.00,554.51 L242.50,552.00 L243.00,548.40 L243.50,543.11 L244.00,539.24 L244.50,538.76 L245.00,537.72 L245.50,535.20 L246.00,534.59 L246.50,529.85 L247.00,528.97 L247.50,530.03 L248.00,529.43 L248.50,535.13 L249.00,538.88 L249.50,511.76 L250.00,470.23 L250.50,422.88 L251.00,382.37 L251.50,357.04 L252.00,346.80 L252.50,345.30 L253.00,346.80 L253.50,357.04 L254.00,382.40 L254.50,422.95 L255.00,470.38 L255.50,512.00 L256.00,539.21 L256.50,544.36 L257.00,540.19 L257.50,537.47 L258.00,536.89 L258.50,537.95 L259.00,538.59 L259.50,542.39 L260.00,543.94 L260.50,547.52 L261.00,549.68 L261.50,548.83 L262.00,550.24 L262.50,549.27 L263.00,549.15 L263.50,549.57 L264.00,550.49 L264.50,550.93 L265.00,550.17 L265.50,539.52 L266.00,512.08 L266.50,470.07 L267.00,422.17 L267.50,381.20 L268.00,355.57 L268.50,345.22 L269.00,343.70 L269.50,345.22 L270.00,355.58 L270.50,381.22 L271.00,422.25 L271.50,470.22 L272.00,512.32 L272.50,539.84 L273.00,552.98 L273.50,554.53 L274.00,551.24 L274.50,544.95 L275.00,540.79 L275.50,538.39 L276.00,535.11 L276.50,534.00 L277.00,536.05 L277.50,537.09 L278.00,539.18 L278.50,541.87 L279.00,545.48 L279.50,545.92 L280.00,535.83 L280.50,504.92 L281.00,460.37 L281.50,412.40 L282.00,373.72 L282.50,351.20 L283.00,343.19 L283.40,342.40 L283.50,342.41 L284.00,345.05 L284.50,358.21 L285.00,387.47 L285.50,431.22 L286.00,479.49 L286.50,519.48 L287.00,544.07 L287.50,542.43 L288.00,539.97 L288.50,541.52 L289.00,543.49 L289.50,545.35 L290.00,546.25 L290.50,549.17 L291.00,550.14 L291.50,552.17 L292.00,550.42 L292.50,549.28 L293.00,546.92 L293.50,546.10 L294.00,546.95 L294.50,546.74 L295.00,547.74 L295.50,544.68 L296.00,520.41 L296.50,480.90 L297.00,433.17 L297.50,389.91 L298.00,360.95 L298.50,347.92 L299.00,345.31 L299.10,345.30 L299.50,346.08 L300.00,354.02 L300.50,376.34 L301.00,414.69 L301.50,462.27 L302.00,506.49 L302.50,537.19 L303.00,552.83 L303.50,554.11 L304.00,550.24 L304.50,549.57 L305.00,545.07 L305.50,543.56 L306.00,542.56 L306.50,540.88 L307.00,539.89 L307.50,542.25 L308.00,542.67 L308.50,542.71 L309.00,544.24 L309.50,543.25 L310.00,547.01 L310.50,551.45 L311.00,540.42 L311.50,513.41 L312.00,474.45 L312.50,432.51 L313.00,398.69 L313.50,379.00 L314.00,371.99 L314.40,371.30 L314.50,371.31 L315.00,373.62 L315.50,385.13 L316.00,410.73 L316.50,448.99 L317.00,491.23 L317.50,526.21 L318.00,547.73 L318.50,549.56 L319.00,546.45 L319.50,543.86 L320.00,540.99 L320.50,537.68 L321.00,536.42 L321.50,538.40 L322.00,538.88 L322.50,542.61 L323.00,544.86 L323.50,548.63 L324.00,550.44 L324.50,550.41 L325.00,548.17 L325.50,545.14 L326.00,546.11 L326.50,543.08 L327.00,515.95 L327.50,474.40 L328.00,427.02 L328.50,386.49 L329.00,361.14 L329.50,350.91 L330.00,349.40 L330.50,350.91 L331.00,361.15 L331.50,386.52 L332.00,427.11 L332.50,474.58 L333.00,516.23 L333.50,543.47 L334.00,556.47 L334.50,554.72 L335.00,551.48 L335.50,549.51 L336.00,551.30 L336.50,550.70 L337.00,549.86 L337.50,550.07 L338.00,546.25 L338.50,539.70 L339.00,535.59 L339.50,529.79 L340.00,528.74 L340.50,532.53 L341.00,535.53 L341.50,539.09 L342.00,545.06 L342.50,537.27 L343.00,506.55 L343.50,464.82 L344.00,422.39 L344.50,390.17 L345.00,372.81 L345.50,367.50 L345.80,367.20 L346.00,367.29 L346.50,370.98 L347.00,385.52 L347.50,414.91 L348.00,456.11 L348.50,499.05 L349.00,532.60 L349.50,552.00 L350.00,559.88 L350.50,560.44 L351.00,560.02 L351.50,559.03 L352.00,556.06 L352.50,552.22 L353.00,549.49 L353.50,549.34 L354.00,549.00 L354.50,550.34 L355.00,549.30 L355.50,549.71 L356.00,548.26 L356.50,546.99 L357.00,546.71 L357.50,546.77 L358.00,548.18 L358.50,550.48 L359.00,540.26 L359.50,511.98 L360.00,473.57 L360.50,434.51 L361.00,404.85 L361.50,388.87 L362.00,383.98 L362.30,383.70 L362.50,383.78 L363.00,387.18 L363.50,400.57 L364.00,427.63 L364.50,465.57 L365.00,505.10 L365.50,536.00 L366.00,553.86 L366.50,559.29 L367.00,558.39 L367.50,553.88 L368.00,548.58 L368.50,548.32 L369.00,548.47 L369.50,553.59 L370.00,558.35 L370.50,560.94 L371.00,557.27 L371.50,555.48 L372.00,550.86 L372.50,547.43 L373.00,544.58 L373.50,544.05 L374.00,544.86 L374.50,548.42 L375.00,524.88 L375.50,488.84 L376.00,447.74 L376.50,412.58 L377.00,390.59 L377.50,381.71 L378.00,380.40 L378.50,381.71 L379.00,390.60 L379.50,412.61 L380.00,447.83 L380.50,489.02 L381.00,525.16 L381.50,548.80 L382.00,558.30 L382.50,550.82 L383.00,544.19 L383.50,541.38 L384.00,540.71 L384.50,539.23 L385.00,541.61 L385.50,545.30 L386.00,549.63 L386.50,554.42 L387.00,558.36 L387.50,557.40 L388.00,556.25 L388.50,555.87 L389.00,552.82 L389.50,551.98 L390.00,551.66 L390.50,549.83 L391.00,526.97 L391.50,491.95 L392.00,452.02 L392.50,417.86 L393.00,396.50 L393.50,387.87 L394.00,386.60 L394.50,387.87 L395.00,396.51 L395.50,417.90 L396.00,452.11 L396.50,492.13 L397.00,527.25 L397.50,550.22 L398.00,561.18 L398.50,561.03 L399.00,561.90 L399.50,559.68 L400.00,555.49 L400.50,551.43 L401.00,545.82 L401.50,544.62 L402.00,544.16 L402.50,542.61 L403.00,543.28 L403.50,541.61 L404.00,540.31 L404.50,540.54 L405.00,542.76 L405.50,548.73 L406.00,540.26 L406.50,508.41 L407.00,465.14 L407.50,421.14 L408.00,387.72 L408.50,369.72 L409.00,364.21 L409.30,363.90 L409.50,363.99 L410.00,367.82 L410.50,382.90 L411.00,413.40 L411.50,456.15 L412.00,500.70 L412.50,535.52 L413.00,555.66 L413.50,564.08 L414.00,565.64 L414.50,558.71 L415.00,554.71 L415.50,551.62 L416.00,546.84 L416.50,547.60 L417.00,551.83 L417.50,553.19 L418.00,556.71 L418.50,558.63 L419.00,556.84 L419.50,553.54 L420.00,551.37 L420.50,553.09 L421.00,553.58 L421.50,554.76 L422.00,543.82 L422.50,511.85 L423.00,465.76 L423.50,416.14 L424.00,376.11 L424.50,352.81 L425.00,344.52 L425.40,343.70 L425.50,343.71 L426.00,346.44 L426.50,360.07 L427.00,390.36 L427.50,435.65 L428.00,485.64 L428.50,527.05 L429.00,552.52 L429.50,563.91 L430.00,562.40 L430.50,558.11 L431.00,554.41 L431.50,549.56 L432.00,543.28 L432.50,537.79 L433.00,532.35 L433.50,531.23 L434.00,531.96 L434.50,533.20 L435.00,536.07 L435.50,536.57 L436.00,539.57 L436.50,543.37 L437.00,547.58 L437.50,541.69 L438.00,511.53 L438.50,472.90 L439.00,435.80 L439.50,409.31 L440.00,396.21 L440.50,392.88 L440.70,392.80 L441.00,393.07 L441.50,397.87 L442.00,413.55 L442.50,442.67 L443.00,481.04 L443.50,518.81 L444.00,546.65 L444.50,561.77 L445.00,566.42 L445.50,562.91 L446.00,558.46 L446.50,554.87 L447.00,550.45 L447.50,544.56 L448.00,538.99 L448.50,536.61 L449.00,532.46 L449.50,533.73 L450.00,533.32 L450.50,533.83 L451.00,536.86 L451.50,540.14 L452.00,545.27 L452.50,535.79 L453.00,501.30 L453.50,459.63 L454.00,421.85 L454.50,396.57 L455.00,385.19 L455.50,382.91 L455.60,382.90 L456.00,383.58 L456.50,390.52 L457.00,410.02 L457.50,443.52 L458.00,485.10 L458.50,523.73 L459.00,550.57 L459.50,564.24 L460.00,569.22 L460.50,568.06 L461.00,564.70 L461.50,558.70 L462.00,555.75 L462.50,554.15 L463.00,555.01 L463.50,556.86 L464.00,558.32 L464.50,559.63 L465.00,557.53 L465.50,559.50 L466.00,557.62 L466.50,560.56 L467.00,560.63 L467.50,564.34 L468.00,560.94 L468.50,542.73 L469.00,511.18 L469.50,470.77 L470.00,431.97 L470.50,404.27 L471.00,390.57 L471.50,387.08 L471.70,387.00 L472.00,387.28 L472.50,392.30 L473.00,408.69 L473.50,439.14 L474.00,479.26 L474.50,518.74 L475.00,547.84 L475.50,563.64 L476.00,569.81 L476.50,569.13 L477.00,568.50 L477.50,563.58 L478.00,559.83 L478.50,560.82 L479.00,559.31 L479.50,559.21 L480.00,554.51 L480.50,549.78 L481.00,547.12 L481.50,541.96 L482.00,541.26 L482.50,544.07 L483.00,544.42 L483.50,548.50 L484.00,553.30 L484.50,549.17 L485.00,520.93 L485.50,482.56 L486.00,443.55 L486.50,413.92 L487.00,397.96 L487.50,393.08 L487.80,392.80 L488.00,392.88 L488.50,396.28 L489.00,409.65 L489.50,436.69 L490.00,474.59 L490.50,514.09 L491.00,544.96 L491.50,562.81 L492.00,570.28 L492.50,572.48 L493.00,568.84 L493.50,565.03 L494.00,561.26 L494.50,561.41 L495.00,559.40 L495.50,557.82 L496.00,557.19 L496.50,557.25 L497.00,555.40 L497.50,554.45 L498.00,556.76 L498.50,560.13 L499.00,562.16 L499.50,559.54 L500.00,539.13 L500.50,507.87 L501.00,472.22 L501.50,441.72 L502.00,422.64 L502.50,414.93 L503.00,413.80 L503.50,414.93 L504.00,422.65 L504.50,441.76 L505.00,472.32 L505.50,508.08 L506.00,539.46 L506.50,559.99 L507.00,569.79 L507.50,573.13 L508.00,573.93 L508.50,572.76 L509.00,569.86 L509.50,565.68 L510.00,562.71 L510.50,557.15 L511.00,555.79 L511.50,552.67 L512.00,552.98 L512.50,550.31 L513.00,551.46 L513.50,553.85 L514.00,558.72 L514.50,561.68 L515.00,565.17 L515.50,567.44 L516.00,559.59 L516.50,537.56 L517.00,503.83 L517.50,465.35 L518.00,432.43 L518.50,411.84 L519.00,403.52 L519.50,402.30 L520.00,403.52 L520.50,411.85 L521.00,432.47 L521.50,465.45 L522.00,504.03 L522.50,537.89 L523.00,560.04 L523.50,570.61 L524.00,570.96 L524.50,567.27 L525.00,562.88 L525.50,560.14 L526.00,557.88 L526.50,556.42 L527.00,557.27 L527.50,555.48 L528.00,551.17 L528.50,544.12 L529.00,539.85 L529.50,537.56 L530.00,541.21 L530.50,548.31 L531.00,555.60 L531.50,553.26 L532.00,526.00 L532.50,488.96 L533.00,451.30 L533.50,422.69 L534.00,407.28 L534.50,402.57 L534.80,402.30 L535.00,402.38 L535.50,405.66 L536.00,418.57 L536.50,444.67 L537.00,481.27 L537.50,519.40 L538.00,549.21 L538.50,566.45 L539.00,573.66 L539.50,574.78 L540.00,571.29 L540.50,569.27 L541.00,568.36 L541.50,564.35 L542.00,564.99 L542.50,564.69 L543.00,564.09 L543.50,561.18 L544.00,556.81 L544.50,553.66 L545.00,548.11 L545.50,546.11 L546.00,546.97 L546.50,551.04 L547.00,558.99 L547.50,557.37 L548.00,531.41 L548.50,493.96 L549.00,453.65 L549.50,421.13 L550.00,402.20 L550.50,395.46 L550.90,394.80 L551.00,394.81 L551.50,397.03 L552.00,408.10 L552.50,432.72 L553.00,469.53 L553.50,510.16 L554.00,543.83 L554.50,564.55 L555.00,568.03 L555.50,563.10 L556.00,559.12 L556.50,555.60 L557.00,550.99 L557.50,548.34 L558.00,548.95 L558.50,549.29 L559.00,553.97 L559.50,554.59 L560.00,558.72 L560.50,561.50 L561.00,562.71 L561.50,565.81 L562.00,568.01 L562.50,550.33 L563.00,519.67 L563.50,480.41 L564.00,442.70 L564.50,415.79 L565.00,402.47 L565.50,399.08 L565.70,399.00 L566.00,399.28 L566.50,404.15 L567.00,420.09 L567.50,449.69 L568.00,488.70 L568.50,527.09 L569.00,555.40 L569.50,565.38 L570.00,563.67 L570.50,562.69 L571.00,564.65 L571.50,570.67 L572.00,574.36 L572.50,575.10 L573.00,575.27 L573.50,573.61 L574.00,572.38 L574.50,570.43 L575.00,568.10 L575.50,570.13 L576.00,572.13 L576.50,574.06 L577.00,574.22 L577.50,563.50 L578.00,540.23 L578.50,504.59 L579.00,463.93 L579.50,429.14 L580.00,407.38 L580.50,398.59 L581.00,397.30 L581.50,398.59 L582.00,407.39 L582.50,429.19 L583.00,464.05 L583.50,504.84 L584.00,540.64 L584.50,564.06 L585.00,575.24 L585.50,579.05 L586.00,578.52 L586.50,576.72 L587.00,570.09 L587.50,567.06 L588.00,562.74 L588.50,558.47 L589.00,553.66 L589.50,551.62 L590.00,548.81 L590.50,550.30 L591.00,552.56 L591.50,559.67 L592.00,566.24 L592.50,570.75 L593.00,568.47 L593.50,548.76 L594.00,516.65 L594.50,477.85 L595.00,442.68 L595.50,419.13 L596.00,408.53 L596.50,406.41 L596.60,406.40 L597.00,407.03 L597.50,413.50 L598.00,431.66 L598.50,462.88 L599.00,501.62 L599.50,537.63 L600.00,562.64 L600.50,575.39 L601.00,580.05 L601.50,580.63 L602.00,581.06 L602.50,578.09 L603.00,573.64 L603.50,574.21 L604.00,571.30 L604.50,571.14 L605.00,574.03 L605.50,572.92 L606.00,572.85 L606.50,572.58 L607.00,569.75 L607.50,565.91 L608.00,565.14 L608.50,565.89 L609.00,566.89 L609.50,553.83 L610.00,522.55 L610.50,482.48 L611.00,444.00 L611.50,416.53 L612.00,402.94 L612.50,399.48 L612.70,399.40 L613.00,399.68 L613.50,404.66 L614.00,420.92 L614.50,451.13 L615.00,490.93 L615.50,530.11 L616.00,558.99 L616.50,574.68 L617.00,578.47 L617.50,573.09 L618.00,571.03 L618.50,567.96 L619.00,565.92 L619.50,565.33 L620.00,569.55 L620.50,573.16 L621.00,575.08 L621.50,578.47 L622.00,577.15 L622.50,576.22 L623.00,573.15 L623.50,571.98 L624.00,574.10 L624.50,575.00 L625.00,566.78 L625.50,544.46 L626.00,512.27 L626.50,477.61 L627.00,449.65 L627.50,433.37 L628.00,427.57 L628.40,427.00 L628.50,427.01 L629.00,428.92 L629.50,438.44 L630.00,459.62 L630.50,491.29 L631.00,526.26 L631.50,555.23 L632.00,573.06 L632.50,576.60 L633.00,577.84 L633.50,579.26 L634.00,579.36 L634.50,580.79 L635.00,580.80 L635.50,580.06 L636.00,579.04 L636.50,576.74 L637.00,575.42 L637.50,574.95 L638.00,575.11 L638.50,573.35 L639.00,575.80 L639.50,576.15 L640.00,575.09 L640.50,557.96 L641.00,528.27 L641.50,490.25 L642.00,453.73 L642.50,427.66 L643.00,414.76 L643.50,411.48 L643.70,411.40 L644.00,411.67 L644.50,416.39 L645.00,431.83 L645.50,460.50 L646.00,498.28 L646.50,535.47 L647.00,562.89 L647.50,577.78 L648.00,583.60 L648.50,581.59 L649.00,582.44 L649.50,579.42 L650.00,580.19 L650.50,581.26 L651.00,582.48 L651.50,580.12 L652.00,578.04 L652.50,573.69 L653.00,572.41 L653.50,568.08 L654.00,568.82 L654.50,569.39 L655.00,569.64 L655.50,575.88 L656.00,570.42 L656.50,549.37 L657.00,519.02 L657.50,486.33 L658.00,459.96 L658.50,444.61 L659.00,439.14 L659.40,438.60 L659.50,438.61 L660.00,440.41 L660.50,449.39 L661.00,469.37 L661.50,499.24 L662.00,532.22 L662.50,559.55 L663.00,576.37 L663.50,583.46 L664.00,581.97 L664.50,582.20 L665.00,582.51 L665.50,583.27 L666.00,581.48 L666.50,579.79 L667.00,579.10 L667.50,574.97 L668.00,573.00 L668.50,572.73 L669.00,570.76 L669.50,573.23 L670.00,574.85 L670.50,578.61 L671.00,580.25 L671.50,574.07 L672.00,554.35 L672.50,524.14 L673.00,489.68 L673.50,460.19 L674.00,441.75 L674.50,434.30 L675.00,433.20 L675.50,434.30 L676.00,441.76 L676.50,460.24 L677.00,489.81 L677.50,524.40 L678.00,554.76 L678.50,574.62 L679.00,584.12 L679.50,587.13 L680.00,584.10 L680.50,582.45 L681.00,580.86 L681.50,580.17 L682.00,581.46 L682.50,583.61 L683.00,586.29 L683.50,584.38 L684.00,581.97 L684.50,576.30 L685.00,573.39 L685.50,571.70 L686.00,573.21 L686.50,577.37 L687.00,572.69 L687.50,551.09 L688.00,519.94 L688.50,486.38 L689.00,459.32 L689.50,443.56 L690.00,437.95 L690.40,437.40 L690.50,437.41 L691.00,439.25 L691.50,448.48 L692.00,468.98 L692.50,499.63 L693.00,533.48 L693.50,561.52 L694.00,578.78 L694.50,586.51 L695.00,585.88 L695.50,582.11 L696.00,580.18 L696.50,574.27 L697.00,571.29 L697.50,566.76 L698.00,562.65 L698.50,561.63 L699.00,561.17 L699.50,561.60 L700.00,561.77 L700.50,565.91 L701.00,570.34 L701.50,572.86 L702.00,575.68 L702.50,562.35 L703.00,534.60 L703.50,501.08 L704.00,470.71 L704.50,450.38 L705.00,441.24 L705.50,439.41 L705.60,439.40 L706.00,439.95 L706.50,445.52 L707.00,461.17 L707.50,488.06 L708.00,521.41 L708.50,552.40 L709.00,573.91 L709.50,584.85 L710.00,588.82 L710.50,587.38 L711.00,584.63 L711.50,582.60 L712.00,577.60 L712.50,575.45 L713.00,574.63 L713.50,569.85 L714.00,567.66 L714.50,569.61 L715.00,567.20 L715.50,569.06 L716.00,570.07 L716.50,569.91 L717.00,574.10 L717.50,576.04 L718.00,582.27 L718.50,580.28 L719.00,564.63 L719.50,539.16 L720.00,508.40 L720.50,480.53 L721.00,461.88 L721.50,453.49 L722.00,451.81 L722.10,451.80 L722.50,452.30 L723.00,457.41 L723.50,471.78 L724.00,496.45 L724.50,527.06 L725.00,555.50 L725.50,575.23 L726.00,585.27 L726.50,584.04 L727.00,581.84 L727.50,581.32 L728.00,577.72 L728.50,574.63 L729.00,575.46 L729.50,574.24 L730.00,576.76 L730.50,579.26 L731.00,579.97 L731.50,580.83 L732.00,580.42 L732.50,583.15 L733.00,582.77 L733.50,582.02 L734.00,581.25 L734.50,572.01 L735.00,550.14 L735.50,520.44 L736.00,490.25 L736.50,467.33 L737.00,454.99 L737.50,451.21 L737.80,451.00 L738.00,451.06 L738.50,453.69 L739.00,464.02 L739.50,484.90 L740.00,514.16 L740.50,544.64 L741.00,568.46 L741.50,582.21 L742.00,580.54 L742.50,578.67 L743.00,574.79 L743.50,568.96 L744.00,568.20 L744.50,564.18 L745.00,562.67 L745.50,564.87 L746.00,565.68 L746.50,566.13 L747.00,563.97 L747.50,567.28 L748.00,569.78 L748.50,572.12 L749.00,578.92 L749.50,580.13 L750.00,564.24 L750.50,538.39 L751.00,507.16 L751.50,478.87 L752.00,459.93 L752.50,451.41 L753.00,449.71 L753.10,449.70 L753.50,450.21 L754.00,455.40 L754.50,469.98 L755.00,495.03 L755.50,526.10 L756.00,554.97 L756.50,575.01 L757.00,585.20 L757.50,587.30 L758.00,584.78 L758.50,586.23 L759.00,585.21 L759.50,583.24 L760.00,584.29 L760.50,580.39 L761.00,575.79 L761.50,569.72 L762.00,564.74 L762.50,562.97 L763.00,565.28 L763.50,566.43 L764.00,572.64 L764.50,576.72 L765.00,583.59 L765.50,585.55 L766.00,579.64 L766.50,562.96 L767.00,535.81 L767.50,503.03 L768.00,473.32 L768.50,453.44 L769.00,444.50 L769.50,442.71 L769.60,442.70 L770.00,443.24 L770.50,448.68 L771.00,463.99 L771.50,490.29 L772.00,522.92 L772.50,553.22 L773.00,574.26 L773.50,584.96 L774.00,586.31 L774.50,582.51 L775.00,579.24 L775.50,575.97 L776.00,569.35 L776.50,565.11 L777.00,566.57 L777.50,566.73 L778.00,567.79 L778.50,571.53 L779.00,571.46 L779.50,573.36 L780.00,573.34 L780.50,575.89 L781.00,576.69 L781.50,557.16 L782.00,527.27 L782.50,493.20 L783.00,464.06 L783.50,445.84 L784.00,438.48 L784.50,437.40 L785.00,438.48 L785.50,445.84 L786.00,464.06 L786.50,493.20 L787.00,527.27 L787.50,557.16 L788.00,576.69 L788.50,580.97 L789.00,578.24 L789.50,576.36 L790.00,577.99 L790.50,577.35 L791.00,577.18 L791.50,578.79 L792.00,578.19 L792.50,574.21 L793.00,566.69 L793.50,561.06 L794.00,559.15 L794.50,559.18 L795.00,562.32 L795.50,566.43 L796.00,571.51 L796.50,578.72 L797.00,579.41 L797.50,562.35 L798.00,534.60 L798.50,501.08 L799.00,470.71 L799.50,450.38 L800.00,441.24 L800.50,439.41 L800.60,439.40 L801.00,439.95 L801.50,445.52 L802.00,461.17 L802.50,488.06 L803.00,521.41 L803.50,552.40 L804.00,573.91 L804.50,582.66 L805.00,581.65 L805.50,579.16 L806.00,579.85 L806.50,579.75 L807.00,578.73 L807.50,579.66 L808.00,577.09 L808.50,571.65 L809.00,566.79 L809.50,561.18 L810.00,558.83 L810.50,560.47 L811.00,563.96 L811.50,567.85 L812.00,570.91 L812.50,575.28 L813.00,569.98 L813.50,545.63 L814.00,512.58 L814.50,478.98 L815.00,453.48 L815.50,439.74 L816.00,435.54 L816.30,435.30 L816.50,435.37 L817.00,438.29 L817.50,449.79 L818.00,473.03 L818.50,505.59 L819.00,539.52 L819.50,566.02 L820.00,581.33 L820.50,580.23 L821.00,575.41 L821.50,572.56 L822.00,567.02 L822.50,561.96 L823.00,559.46 L823.50,560.20 L824.00,561.89 L824.50,564.30 L825.00,566.75 L825.50,568.56 L826.00,571.71 L826.50,575.27 L827.00,576.66 L827.50,580.89 L828.00,575.61 L828.50,554.49 L829.00,522.17 L829.50,485.33 L830.00,453.83 L830.50,434.13 L831.00,426.17 L831.50,425.00 L832.00,426.17 L832.50,434.13 L833.00,453.83 L833.50,485.33 L834.00,522.17 L834.50,554.49 L835.00,575.61 L835.50,584.98 L836.00,584.40 L836.50,581.74 L837.00,579.87 L837.50,580.60 L838.00,581.97 L838.50,582.53 L839.00,585.69 L839.50,588.09 L840.00,588.90 L840.50,588.12 L841.00,587.08 L841.50,582.70 L842.00,581.12 L842.50,576.61 L843.00,577.54 L843.50,578.54 L844.00,579.51 L844.50,577.15 L845.00,558.30 L845.50,529.45 L846.00,496.56 L846.50,468.44 L847.00,450.85 L847.50,443.74 L848.00,442.70 L848.50,443.74 L849.00,450.85 L849.50,468.44 L850.00,496.56 L850.50,529.45 L851.00,558.30 L851.50,577.15 L852.00,586.14 L852.50,585.27 L853.00,582.28 L853.50,582.44 L854.00,579.28 L854.50,576.52 L855.00,573.57 L855.50,570.88 L856.00,566.38 L856.50,565.13 L857.00,561.82 L857.50,565.04 L858.00,567.08 L858.50,571.85 L859.00,575.28 L859.50,572.93 L860.00,550.13 L860.50,517.27 L861.00,481.90 L861.50,453.38 L862.00,436.79 L862.50,430.88 L862.90,430.30 L863.00,430.31 L863.50,432.25 L864.00,441.95 L864.50,463.50 L865.00,495.71 L865.50,531.25 L866.00,560.68 L866.50,578.77 L867.00,586.84 L867.50,589.37 L868.00,588.71 L868.50,588.41 L869.00,585.81 L869.50,582.31 L870.00,576.47 L870.50,572.75 L871.00,568.76 L871.50,563.45 L872.00,559.19 L872.50,558.09 L873.00,560.45 L873.50,567.83 L874.00,573.98 L874.50,580.38 L875.00,584.98 L875.50,575.43 L876.00,554.04 L876.50,521.31 L877.00,484.00 L877.50,452.09 L878.00,432.14 L878.50,424.08 L879.00,422.90 L879.50,424.08 L880.00,432.14 L880.50,452.09 L881.00,484.00 L881.50,521.31 L882.00,554.04 L882.50,575.43 L883.00,577.62 L883.50,572.56 L884.00,567.05 L884.50,564.12 L885.00,563.80 L885.50,565.92 L886.00,571.30 L886.50,573.19 L887.00,576.43 L887.50,578.08 L888.00,582.49 L888.50,583.55 L889.00,583.86 L889.50,584.68 L890.00,582.05 L890.50,584.82 L891.00,581.75 L891.50,567.17 L892.00,541.93 L892.50,509.63 L893.00,478.62 L893.50,456.49 L894.00,445.55 L894.50,442.77 L894.70,442.70 L895.00,442.93 L895.50,446.93 L896.00,460.01 L896.50,484.29 L897.00,516.28 L897.50,547.75 L898.00,570.94 L898.50,583.51 L899.00,585.49 L899.50,584.33 L900.00,582.52 L900.50,578.13 L901.00,571.85 L901.50,567.45 L902.00,568.07 L902.50,570.67 L903.00,573.90 L903.50,576.84 L904.00,579.77 L904.50,579.82 L905.00,581.45 L905.50,583.91 L906.00,582.04 L906.50,582.80 L907.00,576.45 L907.50,559.12 L908.00,534.19 L908.50,507.38 L909.00,485.78 L909.50,473.21 L910.00,468.74 L910.40,468.30 L910.50,468.31 L911.00,469.77 L911.50,477.10 L912.00,493.38 L912.50,517.70 L913.00,544.51 L913.50,566.69 L914.00,575.24 L914.50,575.56 L915.00,573.52 L915.50,573.18 L916.00,574.87 L916.50,575.86 L917.00,578.57 L917.50,577.21 L918.00,576.69 L918.50,574.69 L919.00,571.30 L919.50,571.12 L920.00,570.52 L920.50,572.76 L921.00,577.33 L921.50,580.84 L922.00,577.91 L922.50,561.49 L923.00,534.83 L923.50,502.66 L924.00,473.52 L924.50,454.03 L925.00,445.26 L925.50,443.51 L925.60,443.50 L926.00,444.02 L926.50,449.36 L927.00,464.33 L927.50,490.06 L928.00,521.95 L928.50,551.55 L929.00,572.08 L929.50,582.49 L930.00,582.33 L930.50,581.17 L931.00,579.05 L931.50,576.84 L932.00,575.89 L932.50,577.06 L933.00,578.45 L933.50,579.35 L934.00,577.14 L934.50,577.47 L935.00,577.94 L935.50,576.65 L936.00,573.69 L936.50,573.18 L937.00,575.79 L937.50,577.51 L938.00,562.17 L938.50,532.33 L939.00,491.86 L939.50,450.74 L940.00,419.53 L940.50,402.73 L941.00,397.59 L941.30,397.30 L941.50,397.39 L942.00,400.95 L942.50,415.00 L943.00,443.37 L943.50,483.13 L944.00,524.52 L944.50,556.84 L945.00,575.49 L945.50,575.49 L946.00,571.22 L946.50,567.17 L947.00,562.18 L947.50,564.57 L948.00,570.13 L948.50,576.03 L949.00,581.83 L949.50,585.49 L950.00,586.38 L950.50,587.08 L951.00,585.03 L951.50,580.58 L952.00,577.52 L952.50,578.21 L953.00,576.83 L953.50,577.47 L954.00,562.23 L954.50,534.17 L955.00,496.11 L955.50,457.45 L956.00,428.10 L956.50,412.31 L957.00,407.47 L957.30,407.20 L957.50,407.28 L958.00,410.63 L958.50,423.84 L959.00,450.52 L959.50,487.89 L960.00,526.81 L960.50,557.19 L961.00,574.72 L961.50,569.49 L962.00,565.13 L962.50,556.02 L963.00,549.34 L963.50,542.51 L964.00,538.76 L964.50,541.21 L965.00,543.59 L965.50,549.10 L966.00,555.74 L966.50,563.74 L967.00,569.48 L967.50,571.66 L968.00,575.54 L968.50,574.86 L969.00,558.67 L969.50,530.69 L970.00,494.90 L970.50,460.56 L971.00,436.06 L971.50,423.95 L972.00,420.87 L972.20,420.80 L972.50,421.05 L973.00,425.47 L973.50,439.93 L974.00,466.75 L974.50,502.07 L975.00,536.79 L975.50,562.35 L976.00,576.19 L976.50,581.54 L977.00,582.96 L977.50,581.12 L978.00,579.76 L978.50,577.31 L979.00,572.63 L979.50,568.57 L980.00,560.06 L980.50,553.07 L981.00,546.08 L981.50,539.06 L982.00,535.94 L982.50,536.08 L983.00,539.28 L983.50,547.04 L984.00,556.77 L984.50,565.95 L985.00,570.44 L985.50,557.13 L986.00,529.44 L986.50,494.04 L987.00,460.09 L987.50,435.88 L988.00,423.91 L988.50,420.87 L988.70,420.80 L989.00,421.05 L989.50,425.41 L990.00,439.67 L990.50,466.14 L991.00,500.96 L991.50,535.19 L992.00,560.37 L992.50,555.44 L993.00,546.97 L993.50,539.54 L994.00,536.73 L994.50,536.61 L995.00,540.37 L995.50,549.96 L996.00,558.18 L996.50,563.97 L997.00,565.13 L997.50,565.28 L998.00,565.28 L998.50,566.89 L999.00,567.28 L999.50,570.10 L1000.00,573.43 L1000.50,564.66 L1001.00,542.41 L1001.50,508.42 L1002.00,469.71 L1002.50,436.64 L1003.00,415.97 L1003.50,407.63 L1004.00,406.40 L1004.50,407.62 L1005.00,415.95 L1005.50,436.55 L1006.00,469.48 L1006.50,507.95 L1007.00,541.67 L1007.50,563.65 L1008.00,571.08 L1008.50,566.86 L1009.00,564.90 L1009.50,562.21 L1010.00,558.20 L1010.50,554.05 L1011.00,550.06 L1011.50,547.52 L1012.00,545.50 L1012.50,542.70 L1013.00,543.43 L1013.50,545.74 L1014.00,547.98 L1014.50,552.96 L1015.00,555.05 L1015.50,558.48 L1016.00,561.89 L1016.50,560.13 L1017.00,534.92 L1017.50,496.41 L1018.00,452.55 L1018.50,415.07 L1019.00,391.64 L1019.50,382.19 L1020.00,380.80 L1020.50,382.19 L1021.00,391.63 L1021.50,414.99 L1022.00,452.32 L1022.50,495.95 L1023.00,534.18 L1023.50,559.13 L1024.00,559.19 L1024.50,553.39 L1025.00,548.10 L1025.50,543.62 L1026.00,541.37 L1026.50,541.40 L1027.00,544.60 L1027.50,548.11 L1028.00,553.83 L1028.50,559.50 L1029.00,563.81 L1029.50,564.43 L1030.00,566.26 L1030.50,567.94 L1031.00,569.45 L1031.50,569.58 L1032.00,567.95 L1032.50,554.57 L1033.00,529.97 L1033.50,496.63 L1034.00,462.77 L1034.50,437.09 L1035.00,423.27 L1035.50,419.04 L1035.80,418.80 L1036.00,418.87 L1036.50,421.80 L1037.00,433.34 L1037.50,456.64 L1038.00,489.27 L1038.50,523.23 L1039.00,549.72 L1039.50,561.39 L1040.00,558.53 L1040.50,557.84 L1041.00,555.09 L1041.50,553.18 L1042.00,552.11 L1042.50,547.79 L1043.00,548.45 L1043.50,550.17 L1044.00,551.54 L1044.50,552.42 L1045.00,553.63 L1045.50,556.91 L1046.00,560.03 L1046.50,562.58 L1047.00,557.31 L1047.50,532.83 L1048.00,493.07 L1048.50,445.10 L1049.00,401.65 L1049.50,372.59 L1050.00,359.53 L1050.50,356.91 L1050.60,356.90 L1051.00,357.68 L1051.50,365.62 L1052.00,387.92 L1052.50,426.20 L1053.00,473.63 L1053.50,517.64 L1054.00,548.12 L1054.50,563.55 L1055.00,569.07 L1055.50,567.76 L1056.00,566.21 L1056.50,562.35 L1057.00,561.53 L1057.50,560.28 L1058.00,561.12 L1058.50,562.38 L1059.00,559.36 L1059.50,559.65 L1060.00,553.04 L1060.50,546.92 L1061.00,537.03 L1061.50,522.17 L1062.00,510.79 L1062.50,505.41 L1063.00,511.89 L1063.50,523.66 L1064.00,537.60 L1064.50,506.51 L1065.00,469.03 L1065.50,435.11 L1066.00,412.44 L1066.50,402.25 L1067.00,400.21 L1067.10,400.20 L1067.50,400.81 L1068.00,407.00 L1068.50,424.36 L1069.00,454.18 L1069.50,491.10 L1070.00,525.36 L1070.50,549.06 L1071.00,561.05 L1071.50,565.32 L1072.00,561.14 L1072.50,555.91 L1073.00,548.19 L1073.50,540.28 L1074.00,532.63 L1074.50,523.34 L1075.00,516.17 L1075.50,513.77 L1076.00,514.53 L1076.50,516.47 L1077.00,521.32 L1077.50,529.49 L1078.00,536.54 L1078.50,544.96 L1079.00,548.49 L1079.50,526.67 L1080.00,495.32 L1080.50,461.64 L1081.00,434.52 L1081.50,418.76 L1082.00,413.15 L1082.40,412.60 L1082.50,412.61 L1083.00,414.45 L1083.50,423.61 L1084.00,443.97 L1084.50,474.35 L1085.00,507.83 L1085.50,535.49 L1086.00,552.42 L1086.50,553.35 L1087.00,550.20 L1087.50,541.66 L1088.00,531.40 L1088.50,523.50 L1089.00,518.31 L1089.50,515.58 L1090.00,515.65 L1090.50,516.36 L1091.00,513.67 L1091.50,505.73 L1092.00,496.65 L1092.50,488.68 L1093.00,479.18 L1093.50,474.38 L1094.00,469.06 L1094.50,461.59 L1095.00,456.43 L1095.50,450.85 L1096.00,442.69 L1096.50,425.47 L1097.00,352.15 L1097.50,289.49 L1098.00,250.33 L1098.50,234.52 L1099.00,232.20 L1099.50,234.52 L1100.00,250.30 L1100.50,289.36 L1101.00,351.79 L1101.50,405.56 L1102.00,405.07 L1102.50,402.82 L1103.00,400.40 L1103.50,397.39 L1104.00,392.53 L1104.50,387.21 L1105.00,381.46 L1105.50,372.39 L1106.00,364.22 L1106.50,356.58 L1107.00,347.25 L1107.50,340.14 L1108.00,331.94 L1108.50,331.57 L1109.00,334.65 L1109.50,346.58 L1110.00,360.24 L1110.50,377.64 L1111.00,395.95 L1111.50,378.92 L1112.00,332.03 L1112.50,304.76 L1113.00,295.05 L1113.40,294.10 L1113.50,294.11 L1114.00,297.30 L1114.50,313.19 L1115.00,348.49 L1115.50,401.21 L1116.00,459.34 L1116.50,451.74 L1117.00,431.81 L1117.50,419.55 L1118.00,413.76 L1118.50,412.22 L1119.00,413.62 L1119.50,414.15 L1120.00,416.61 L1120.50,418.09 L1121.00,424.56 L1121.50,430.90 L1122.00,436.04 L1122.50,439.19 L1123.00,442.83 L1123.50,447.69 L1124.00,455.92 L1124.50,463.88 L1125.00,476.84 L1125.50,489.24 L1126.00,503.98 L1126.50,518.27 L1127.00,513.94 L1127.50,481.89 L1128.00,447.45 L1128.50,419.72 L1129.00,403.60 L1129.50,397.86 L1129.90,397.30 L1130.00,397.31 L1130.50,399.19 L1131.00,408.58 L1131.50,429.44 L1132.00,460.61 L1132.50,495.00 L1133.00,523.46 L1133.50,539.89 L1134.00,531.54 L1134.50,519.98 L1135.00,511.78 L1135.50,502.38 L1136.00,493.99 L1136.50,487.96 L1137.00,487.69 L1137.50,492.22 L1138.00,497.38 L1138.50,504.43 L1139.00,513.06 L1139.50,520.77 L1140.00,525.12 L1140.50,529.18 L1141.00,534.02 L1141.50,539.44 L1142.00,525.78 L1142.50,497.55 L1143.00,461.42 L1143.50,426.75 L1144.00,402.01 L1144.50,389.78 L1145.00,386.67 L1145.20,386.60 L1145.50,386.85 L1146.00,391.32 L1146.50,405.92 L1147.00,433.03 L1147.50,468.73 L1148.00,503.83 L1148.50,529.67 L1149.00,522.59 L1149.50,516.61 L1150.00,507.53 L1150.50,500.35 L1151.00,495.05 L1151.50,493.61 L1152.00,493.93 L1152.50,494.79 L1153.00,498.49 L1153.50,503.91 L1154.00,513.49 L1154.50,522.38 L1155.00,526.23 L1155.50,529.16 L1156.00,533.62 L1156.50,537.52 L1157.00,539.05 L1157.50,528.58 L1158.00,501.99 L1158.50,465.91 L1159.00,429.25 L1159.50,401.42 L1160.00,386.44 L1160.50,381.86 L1160.80,381.60 L1161.00,381.68 L1161.50,384.86 L1162.00,397.38 L1162.50,422.70 L1163.00,458.17 L1163.50,495.11 L1164.00,523.95 L1164.50,523.25 L1165.00,517.86 L1165.50,513.94 L1166.00,510.56 L1166.50,509.25 L1167.00,506.88 L1167.50,507.56 L1168.00,508.85 L1168.50,510.68 L1169.00,510.83 L1169.50,505.35 L1170.00,498.41 L1170.50,493.68 L1171.00,492.15 L1171.50,500.46 L1172.00,512.86 L1172.50,528.45 L1173.00,534.10 L1173.50,511.42 L1174.00,476.73 L1174.50,437.21 L1175.00,403.41 L1175.50,382.28 L1176.00,373.75 L1176.50,372.50 L1177.00,373.75 L1177.50,382.28 L1178.00,403.38 L1178.50,437.12 L1179.00,476.56 L1179.50,511.15 L1180.00,533.74 L1180.50,531.24 L1181.00,523.42 L1181.50,520.27 L1182.00,516.00 L1182.50,515.87 L1183.00,515.17 L1183.50,510.74 L1184.00,504.25 L1184.50,497.54 L1185.00,493.11 L1185.50,494.78 L1186.00,504.38 L1186.50,514.66 L1187.00,523.50 L1187.50,532.10 L1188.00,537.89 L1188.50,525.28 L1189.00,496.82 L1189.50,458.22 L1190.00,418.99 L1190.50,389.21 L1191.00,373.18 L1191.50,368.28 L1191.80,368.00 L1192.00,368.08 L1192.50,371.49 L1193.00,384.89 L1193.50,411.99 L1194.00,449.94 L1194.50,489.47 L1195.00,520.34 L1195.50,533.83 L1196.00,528.79 L1196.50,527.22 L1197.00,523.76 L1197.50,523.01 L1198.00,520.09 L1198.50,519.15 L1199.00,518.05 L1199.50,515.88 L1200.00,517.13 L1200.50,518.86 L1201.00,517.70 L1201.50,517.00 L1202.00,517.70 L1202.50,520.57 L1203.00,524.43 L1203.50,525.92 L1204.00,530.15 L1204.50,533.88 L1205.00,523.02 L1205.50,492.97 L1206.00,452.19 L1206.50,410.76 L1207.00,379.31 L1207.50,362.37 L1208.00,357.19 L1208.30,356.90 L1208.50,356.99 L1209.00,360.58 L1209.50,374.74 L1210.00,403.36 L1210.50,443.46 L1211.00,485.22 L1211.50,517.83 L1212.00,534.39 L1212.50,533.11 L1213.00,529.05 L1213.50,524.70 L1214.00,521.79 L1214.50,521.66 L1215.00,523.32 L1215.50,525.66 L1216.00,530.67 L1216.50,530.79 L1217.00,528.83 L1217.50,528.25 L1218.00,524.58 L1218.50,524.09 L1219.00,525.97 L1219.50,530.10 L1220.00,516.13 L1220.50,482.14 L1221.00,438.66 L1221.50,396.93 L1222.00,367.15 L1222.50,352.43 L1223.00,348.69 L1223.20,348.60 L1223.50,348.90 L1224.00,354.29 L1224.50,371.87 L1225.00,404.50 L1225.50,447.48 L1226.00,489.75 L1226.50,520.87 L1227.00,537.74 L1227.50,537.68 L1228.00,534.58 L1228.50,527.36 L1229.00,524.12 L1229.50,518.49 L1230.00,516.78 L1230.50,517.03 L1231.00,515.06 L1231.50,515.08 L1232.00,511.99 L1232.50,509.88 L1233.00,511.35 L1233.50,512.45 L1234.00,512.46 L1234.50,514.38 L1235.00,518.73 L1235.50,522.24 L1236.00,524.88 L1236.50,513.74 L1237.00,478.15 L1237.50,432.61 L1238.00,388.91 L1238.50,357.73 L1239.00,342.31 L1239.50,338.39 L1239.70,338.30 L1240.00,338.62 L1240.50,344.25 L1241.00,362.67 L1241.50,396.85 L1242.00,441.86 L1242.50,486.13 L1243.00,518.72 L1243.50,535.02 L1244.00,529.82 L1244.50,521.01 L1245.00,514.87 L1245.50,507.68 L1246.00,506.47 L1246.50,505.39 L1247.00,506.29 L1247.50,507.49 L1248.00,510.79 L1248.50,517.21 L1249.00,521.26 L1249.50,523.88 L1250.00,526.22 L1250.50,531.84 L1251.00,529.38 L1251.50,504.07 L1252.00,462.91 L1252.50,413.22 L1253.00,368.19 L1253.50,338.07 L1254.00,324.53 L1254.50,321.81 L1254.60,321.80 L1255.00,322.61 L1255.50,330.86 L1256.00,354.03 L1256.50,393.84 L1257.00,443.21 L1257.50,489.06 L1258.00,520.87 L1258.50,529.68 L1259.00,529.08 L1259.50,524.70 L1260.00,522.15 L1260.50,521.80 L1261.00,520.72 L1261.50,517.28 L1262.00,512.76 L1262.50,503.82 L1263.00,499.17 L1263.50,495.18 L1264.00,498.18 L1264.50,502.90 L1265.00,510.47 L1265.50,516.43 L1266.00,526.01 L1266.50,530.99 L1267.00,534.50 L1267.50,529.67 L1268.00,506.33 L1268.50,468.38 L1269.00,422.57 L1269.50,381.07 L1270.00,353.30 L1270.50,340.81 L1271.00,338.31 L1271.10,338.30 L1271.50,339.05 L1272.00,346.65 L1272.50,368.01 L1273.00,404.71 L1273.50,450.21 L1274.00,492.47 L1274.50,521.79 L1275.00,535.02 L1275.50,530.85 L1276.00,523.27 L1276.50,517.56 L1277.00,511.54 L1277.50,507.71 L1278.00,504.85 L1278.50,504.82 L1279.00,503.15 L1279.50,501.06 L1280.00,498.92 L1280.50,500.19 L1281.00,504.09 L1281.50,507.74 L1282.00,512.83 L1282.50,519.94 L1283.00,506.91 L1283.50,470.41 L1284.00,426.35 L1284.50,386.43 L1285.00,359.73 L1285.50,347.72 L1286.00,345.31 L1286.10,345.30 L1286.50,346.02 L1287.00,353.33 L1287.50,373.88 L1288.00,409.17 L1288.50,452.93 L1289.00,493.58 L1289.50,521.77 L1290.00,523.64 L1290.50,512.11 L1291.00,501.88 L1291.50,489.59 L1292.00,483.65 L1292.50,477.75 L1293.00,478.34 L1293.50,483.98 L1294.00,492.05 L1294.50,501.40 L1295.00,508.58 L1295.50,513.55 L1296.00,521.99 L1296.50,525.74 L1297.00,531.71 L1297.50,534.70 L1298.00,537.42 L1298.50,535.42 L1299.00,520.62 L1299.50,491.58 L1300.00,449.75 L1300.50,404.74 L1301.00,368.46 L1301.50,347.35 L1302.00,339.84 L1302.40,339.10 L1302.50,339.11 L1303.00,341.58 L1303.50,353.90 L1304.00,381.29 L1304.50,422.21 L1305.00,467.36 L1305.50,504.72 L1306.00,521.66 L1306.50,516.82 L1307.00,514.38 L1307.50,512.66 L1308.00,514.12 L1308.50,516.57 L1309.00,520.15 L1309.50,519.64 L1310.00,519.41 L1310.50,513.73 L1311.00,506.57 L1311.50,498.13 L1312.00,493.64 L1312.50,487.58 L1313.00,487.43 L1313.50,493.06 L1314.00,503.24 L1314.50,514.28 L1315.00,504.82 L1315.50,471.48 L1316.00,433.49 L1316.50,401.01 L1317.00,380.70 L1317.50,372.50 L1318.00,371.30 L1318.50,372.50 L1319.00,380.70 L1319.50,400.98 L1320.00,433.40 L1320.50,471.31 L1321.00,504.55 L1321.50,526.25 L1322.00,535.75 L1322.50,531.99 L1323.00,528.20 L1323.50,524.08 L1324.00,516.32 L1324.50,509.88 L1325.00,504.32 L1325.50,497.22 L1326.00,492.76 L1326.50,487.66 L1327.00,486.86 L1327.50,481.88 L1328.00,480.15 L1328.50,484.28 L1329.00,490.61 L1329.50,502.01 L1330.00,513.11 L1330.50,489.03 L1331.00,446.55 L1331.50,400.85 L1332.00,364.01 L1332.50,342.58 L1333.00,334.95 L1333.40,334.20 L1333.50,334.21 L1334.00,336.72 L1334.50,349.23 L1335.00,377.04 L1335.50,418.60 L1336.00,464.43 L1336.50,502.38 L1337.00,525.69 L1337.50,536.06 L1338.00,536.78 L1338.50,531.70 L1339.00,526.37 L1339.50,521.07 L1340.00,511.59 L1340.50,500.09 L1341.00,488.06 L1341.50,473.82 L1342.00,462.90 L1342.50,459.37 L1343.00,457.26 L1343.50,463.80 L1344.00,471.21 L1344.50,483.63 L1345.00,497.81 L1345.50,509.74 L1346.00,516.29 L1346.50,487.69 L1347.00,448.86 L1347.50,409.40 L1348.00,379.44 L1348.50,363.31 L1349.00,358.38 L1349.30,358.10 L1349.50,358.18 L1350.00,361.61 L1350.50,375.10 L1351.00,402.37 L1351.50,440.59 L1352.00,480.39 L1352.50,511.48 L1353.00,503.96 L1353.50,485.32 L1354.00,470.94 L1354.50,468.51 L1355.00,477.29 L1355.50,492.55 L1356.00,505.78 L1356.50,509.83 L1357.00,513.42 L1357.50,515.06 L1358.00,515.45 L1358.50,517.08 L1359.00,523.16 L1359.50,525.89 L1360.00,528.59 L1360.50,530.73 L1361.00,523.75 L1361.50,498.62 L1362.00,457.75 L1362.50,408.40 L1363.00,363.68 L1363.50,333.77 L1364.00,320.31 L1364.50,317.61 L1364.60,317.60 L1365.00,318.41 L1365.50,326.60 L1366.00,349.63 L1366.50,389.19 L1367.00,438.25 L1367.50,483.83 L1368.00,515.45 L1368.50,514.61 L1369.00,509.19 L1369.50,504.87 L1370.00,502.41 L1370.50,501.79 L1371.00,500.07 L1371.50,500.58 L1372.00,500.03 L1372.50,497.17 L1373.00,495.78 L1373.50,491.01 L1374.00,483.72 L1374.50,474.90 L1375.00,471.51 L1375.50,469.24 L1376.00,472.33 L1376.50,475.69 L1377.00,477.59 L1377.50,473.97 L1378.00,425.65 L1378.50,376.55 L1379.00,339.27 L1379.50,319.19 L1380.00,313.05 L1380.30,312.70 L1380.50,312.80 L1381.00,317.07 L1381.50,333.86 L1382.00,367.81 L1382.50,415.38 L1383.00,462.58 L1383.50,457.82 L1384.00,452.46 L1384.50,447.24 L1385.00,441.18 L1385.50,441.60 L1386.00,442.81 L1386.50,447.12 L1387.00,452.25 L1387.50,454.02 L1388.00,455.18 L1388.50,457.41 L1389.00,455.73 L1389.50,454.35 L1390.00,455.52 L1390.50,462.70 L1391.00,471.75 L1391.50,486.08 L1392.00,496.35 L1392.50,500.64 L1393.00,462.77 L1393.50,417.04 L1394.00,375.60 L1394.50,347.88 L1395.00,335.41 L1395.50,332.91 L1395.60,332.90 L1396.00,333.65 L1396.50,341.24 L1397.00,362.58 L1397.50,399.24 L1398.00,444.69 L1398.50,486.92 L1399.00,516.22 L1399.50,531.12 L1400.00,530.23 L1400.50,530.49 L1401.00,526.84 L1401.50,523.79 L1402.00,519.11 L1402.50,513.62 L1403.00,507.38 L1403.50,502.04 L1404.00,498.19 L1404.50,500.52 L1405.00,503.01 L1405.50,506.73 L1406.00,508.69 L1406.50,512.74 L1407.00,512.76 L1407.50,515.00 L1408.00,520.99 L1408.50,522.87 L1409.00,498.71 L1409.50,459.42 L1410.00,411.99 L1410.50,369.00 L1411.00,340.24 L1411.50,327.30 L1412.00,324.71 L1412.10,324.70 L1412.50,325.47 L1413.00,333.35 L1413.50,355.49 L1414.00,393.52 L1414.50,440.68 L1415.00,484.49 L1415.50,498.94 L1416.00,485.41 L1416.50,472.07 L1417.00,462.10 L1417.50,455.16 L1418.00,445.72 L1418.50,441.11 L1419.00,440.56 L1419.50,438.10 L1420.00,439.34 L1420.50,437.07 L1421.00,433.52 L1421.50,426.58 L1422.00,420.13 L1422.50,418.85 L1423.00,423.03 L1423.50,437.05 L1424.00,452.26 L1424.50,464.67 L1425.00,474.58 L1425.50,484.61 L1426.00,454.54 L1426.50,404.45 L1427.00,359.07 L1427.50,328.71 L1428.00,315.05 L1428.50,312.31 L1428.60,312.30 L1429.00,313.12 L1429.50,321.44 L1430.00,344.81 L1430.50,384.96 L1431.00,434.75 L1431.50,481.01 L1432.00,513.10 L1432.50,529.42 L1433.00,527.19 L1433.50,521.86 L1434.00,515.51 L1434.50,505.86 L1435.00,496.19 L1435.50,488.80 L1436.00,487.87 L1436.50,487.26 L1437.00,490.91 L1437.50,492.16 L1438.00,494.53 L1438.50,498.61 L1439.00,504.02 L1439.50,508.15 L1440.00,513.76 L1440.50,513.88 L1441.00,483.15 L1441.50,438.90 L1442.00,391.27 L1442.50,352.88 L1443.00,330.53 L1443.50,322.58 L1443.90,321.80 L1444.00,321.81 L1444.50,324.43 L1445.00,337.47 L1445.50,366.47 L1446.00,409.81 L1446.50,457.62 L1447.00,497.21 L1447.50,521.53 L1448.00,527.06 L1448.50,521.22 L1449.00,514.96 L1449.50,503.92 L1450.00,493.10 L1450.50,484.16 L1451.00,479.03 L1451.50,480.85 L1452.00,484.72 L1452.50,492.99 L1453.00,500.38 L1453.50,505.43 L1454.00,510.75 L1454.50,514.54 L1455.00,514.54 L1455.50,517.40 L1456.00,520.21 L1456.50,501.28 L1457.00,466.06 L1457.50,423.54 L1458.00,385.01 L1458.50,359.23 L1459.00,347.63 L1459.50,345.31 L1459.60,345.30 L1460.00,345.99 L1460.50,353.06 L1461.00,372.90 L1461.50,406.98 L1462.00,449.25 L1462.50,488.52 L1463.00,515.76 L1463.50,509.08 L1464.00,503.94 L1464.50,499.35 L1465.00,492.61 L1465.50,492.18 L1466.00,493.06 L1466.50,496.86 L1467.00,503.29 L1467.50,509.37 L1468.00,510.15 L1468.50,509.32 L1469.00,507.43 L1469.50,505.00 L1470.00,501.11 L1470.50,499.36 L1471.00,499.12 L1471.50,502.55 L1472.00,475.05 L1472.50,429.73 L1473.00,383.68 L1473.50,348.71 L1474.00,329.89 L1474.50,324.13 L1474.80,323.80 L1475.00,323.90 L1475.50,327.90 L1476.00,343.65 L1476.50,375.48 L1477.00,420.09 L1477.50,466.56 L1478.00,502.85 L1478.50,523.80 L1479.00,532.53 L1479.50,530.32 L1480.00,527.42 L1480.50,522.00 L1481.00,520.53 L1481.50,516.09 L1482.00,506.79 L1482.50,493.90 L1483.00,480.34 L1483.50,468.89 L1484.00,464.42 L1484.50,470.46 L1485.00,483.19 L1485.50,496.11 L1486.00,506.82 L1486.50,512.13 L1487.00,516.78 L1487.50,496.98 L1488.00,462.01 L1488.50,422.15 L1489.00,388.08 L1489.50,366.77 L1490.00,358.16 L1490.50,356.90 L1491.00,358.16 L1491.50,366.76 L1492.00,388.06 L1492.50,422.11 L1493.00,461.92 L1493.50,496.83 L1494.00,499.01 L1494.50,490.78 L1495.00,483.80 L1495.50,479.68 L1496.00,481.37 L1496.50,482.66 L1497.00,484.05 L1497.50,486.32 L1498.00,489.23 L1498.50,492.78 L1499.00,497.23 L1499.50,502.48 L1500.00,506.39 L1500.50,510.27 L1501.00,515.42 L1501.50,516.79 L1502.00,490.12 L1502.50,449.33 L1503.00,402.83 L1503.50,363.07 L1504.00,338.21 L1504.50,328.18 L1505.00,326.70 L1505.50,328.17 L1506.00,338.21 L1506.50,363.06 L1507.00,402.79 L1507.50,449.23 L1508.00,489.98 L1508.50,516.59 L1509.00,523.54 L1509.50,516.52 L1510.00,512.10 L1510.50,508.29 L1511.00,506.26 L1511.50,507.67 L1512.00,509.44 L1512.50,507.79 L1513.00,505.25 L1513.50,505.53 L1514.00,507.04 L1514.50,509.11 L1515.00,512.64 L1515.50,514.37 L1516.00,516.91 L1516.50,517.93 L1517.00,520.74 L1517.50,521.94 L1518.00,518.29 L1518.50,494.60 L1519.00,458.35 L1519.50,417.04 L1520.00,381.72 L1520.50,359.63 L1521.00,350.71 L1521.50,349.40 L1522.00,350.71 L1522.50,359.63 L1523.00,381.70 L1523.50,416.99 L1524.00,458.26 L1524.50,494.45 L1525.00,518.09 L1525.50,527.08 L1526.00,527.27 L1526.50,524.97 L1527.00,523.01 L1527.50,517.34 L1528.00,513.75 L1528.50,506.35 L1529.00,496.94 L1529.50,483.32 L1530.00,471.94 L1530.50,463.78 L1531.00,463.43 L1531.50,468.31 L1532.00,480.40 L1532.50,494.51 L1533.00,506.14 L1533.50,515.54 L1534.00,504.87 L1534.50,472.75 L1535.00,431.65 L1535.50,392.19 L1536.00,364.04 L1536.50,350.12 L1537.00,346.59 L1537.20,346.50 L1537.50,346.79 L1538.00,351.88 L1538.50,368.51 L1539.00,399.38 L1539.50,440.04 L1540.00,480.04 L1540.50,509.49 L1541.00,504.68 L1541.50,500.66 L1542.00,500.34 L1542.50,500.63 L1543.00,500.71 L1543.50,503.58 L1544.00,505.80 L1544.50,510.19 L1545.00,512.32 L1545.50,514.02 L1546.00,513.60 L1546.50,513.25 L1547.00,511.72 L1547.50,511.06 L1548.00,511.13 L1548.50,512.58 L1549.00,510.38 L1549.50,479.55 L1550.00,435.13 L1550.50,387.33 L1551.00,348.79 L1551.50,326.37 L1552.00,318.38 L1552.40,317.60 L1552.50,317.61 L1553.00,320.23 L1553.50,333.33 L1554.00,362.44 L1554.50,405.94 L1555.00,453.92 L1555.50,493.65 L1556.00,518.06 L1556.50,521.67 L1557.00,514.02 L1557.50,510.82 L1558.00,506.24 L1558.50,503.65 L1559.00,501.87 L1559.50,503.12 L1560.00,507.52 L1560.50,510.45 L1561.00,514.52 L1561.50,517.33 L1562.00,514.18 L1562.50,512.09 L1563.00,508.34 L1563.50,504.95 L1564.00,503.26 L1564.50,501.79 L1565.00,504.20 L1565.50,505.41 L1566.00,493.42 L1566.50,457.47 L1567.00,416.49 L1567.50,381.45 L1568.00,359.55 L1568.50,350.70 L1569.00,349.40 L1569.50,350.70 L1570.00,359.54 L1570.50,381.44 L1571.00,416.44 L1571.50,457.37 L1572.00,493.27 L1572.50,516.72 L1573.00,524.26 L1573.50,519.22 L1574.00,511.81 L1574.50,507.04 L1575.00,500.14 L1575.50,490.72 L1576.00,485.24 L1576.50,478.67 L1577.00,472.34 L1577.50,472.48 L1578.00,471.72 L1578.50,474.94 L1579.00,479.15 L1579.50,487.44 L1580.00,496.52 L1580.50,506.73 L1581.00,505.99 L1581.50,476.74 L1582.00,439.32 L1582.50,403.40 L1583.00,377.77 L1583.50,365.10 L1584.00,361.88 L1584.20,361.80 L1584.50,362.06 L1585.00,366.70 L1585.50,381.83 L1586.00,409.94 L1586.50,446.95 L1587.00,483.36 L1587.50,510.17 L1588.00,514.67 L1588.50,505.98 L1589.00,495.60 L1589.50,486.88 L1590.00,475.64 L1590.50,469.19 L1591.00,463.45 L1591.50,459.26 L1592.00,461.36 L1592.50,467.46 L1593.00,472.55 L1593.50,481.27 L1594.00,491.18 L1594.50,503.07 L1595.00,513.72 L1595.50,518.24 L1596.00,523.12 L1596.50,507.85 L1597.00,475.65 L1597.50,429.26 L1598.00,379.33 L1598.50,339.08 L1599.00,315.66 L1599.50,307.32 L1599.90,306.50 L1600.00,306.51 L1600.50,309.25 L1601.00,322.93 L1601.50,353.33 L1602.00,398.77 L1602.50,448.89 L1603.00,490.39 L1603.50,515.88 L1604.00,526.64 L1604.50,522.82 L1605.00,517.42 L1605.50,513.15 L1606.00,506.63 L1606.50,500.54 L1607.00,493.08 L1607.50,486.52 L1608.00,484.34 L1608.50,483.00 L1609.00,480.93 L1609.50,480.89 L1610.00,485.38 L1610.50,488.22 L1611.00,488.69 L1611.50,493.27 L1612.00,497.20 L1612.50,462.08 L1613.00,415.47 L1613.50,370.72 L1614.00,338.80 L1614.50,323.01 L1615.00,319.00 L1615.20,318.90 L1615.50,319.23 L1616.00,325.00 L1616.50,343.86 L1617.00,378.88 L1617.50,425.00 L1618.00,470.36 L1618.50,476.41 L1619.00,470.83 L1619.50,467.77 L1620.00,464.18 L1620.50,457.73 L1621.00,454.61 L1621.50,450.34 L1622.00,446.46 L1622.50,446.32 L1623.00,448.80 L1623.50,449.07 L1624.00,449.82 L1624.50,449.20 L1625.00,447.54 L1625.50,444.38 L1626.00,446.65 L1626.50,447.45 L1627.00,452.71 L1627.50,456.66 L1628.00,462.01 L1628.50,446.39 L1629.00,405.28 L1629.50,372.13 L1630.00,352.84 L1630.50,345.97 L1630.90,345.30 L1631.00,345.31 L1631.50,347.57 L1632.00,358.83 L1632.50,383.86 L1633.00,421.27 L1633.50,462.54 L1634.00,496.71 L1634.50,507.74 L1635.00,508.02 L1635.50,507.82 L1636.00,509.27 L1636.50,510.82 L1637.00,511.95 L1637.50,512.58 L1638.00,515.82 L1638.50,516.51 L1639.00,516.44 L1639.50,512.80 L1640.00,504.38 L1640.50,490.87 L1641.00,476.10 L1641.50,464.23 L1642.00,458.01 L1642.50,458.72 L1643.00,468.93 L1643.50,482.61 L1644.00,499.35 L1644.50,475.24 L1645.00,429.76 L1645.50,380.81 L1646.00,341.34 L1646.50,318.38 L1647.00,310.20 L1647.40,309.40 L1647.50,309.41 L1648.00,312.10 L1648.50,325.51 L1649.00,355.32 L1649.50,399.86 L1650.00,449.01 L1650.50,489.69 L1651.00,514.69 L1651.50,525.83 L1652.00,528.81 L1652.50,525.59 L1653.00,525.59 L1653.50,521.98 L1654.00,521.00 L1654.50,517.70 L1655.00,516.23 L1655.50,513.48 L1656.00,511.51 L1656.50,505.89 L1657.00,501.22 L1657.50,499.09 L1658.00,499.43" stroke="#6592eb" stroke-width="2.1" fill="none" stroke-linejoin="round"/>
<path d="M164.00,354.90 L164.50,354.90 L165.00,354.90 L165.50,354.90 L166.00,354.90 L166.50,354.90 L167.00,354.90 L167.50,354.90 L168.00,354.90 L168.50,354.90 L169.00,354.90 L169.50,354.90 L170.00,354.90 L170.50,354.90 L171.00,354.90 L171.50,354.90 L172.00,354.90 L172.50,354.90 L173.00,354.90 L173.50,345.03 L174.00,336.99 L174.40,336.20 L174.50,336.21 L175.00,338.85 L175.50,352.05 L176.00,354.90 L176.50,354.90 L177.00,354.90 L177.50,354.90 L178.00,354.90 L178.50,354.90 L179.00,354.90 L179.50,354.90 L180.00,354.90 L180.50,354.90 L181.00,354.90 L181.50,354.90 L182.00,354.90 L182.50,354.90 L183.00,354.90 L183.50,354.90 L184.00,354.90 L184.50,354.90 L185.00,354.90 L185.50,354.90 L186.00,354.90 L186.50,354.90 L187.00,354.90 L187.50,354.90 L188.00,354.90 L188.50,354.90 L189.00,354.90 L189.50,354.90 L189.70,354.90 L190.00,354.90 L190.50,354.90 L191.00,354.90 L191.50,354.90 L192.00,354.90 L192.50,354.90 L193.00,354.90 L193.50,354.90 L194.00,354.90 L194.50,354.90 L195.00,354.90 L195.50,354.90 L196.00,354.90 L196.50,354.90 L197.00,354.90 L197.50,354.90 L198.00,354.90 L198.50,354.90 L199.00,354.90 L199.50,354.90 L200.00,354.90 L200.50,354.90 L201.00,354.90 L201.50,354.90 L202.00,354.90 L202.50,354.90 L203.00,354.90 L203.50,354.90 L204.00,354.90 L204.50,353.82 L205.00,346.06 L205.40,345.30 L205.50,345.31 L206.00,347.86 L206.50,354.90 L207.00,354.90 L207.50,354.90 L208.00,354.90 L208.50,354.90 L209.00,354.90 L209.50,354.90 L210.00,354.90 L210.50,354.90 L211.00,535.10 L211.50,540.02 L212.00,542.83 L212.50,545.82 L213.00,549.26 L213.50,547.93 L214.00,545.60 L214.50,354.90 L215.00,354.90 L215.50,354.90 L216.00,354.90 L216.50,354.90 L217.00,354.90 L217.50,354.90 L218.00,354.90 L218.50,354.90 L219.00,354.90 L219.50,354.90 L220.00,354.90 L220.50,354.90 L221.00,354.90 L221.10,354.90 L221.50,354.90 L222.00,354.90 L222.50,354.90 L223.00,354.90 L223.50,354.90 L224.00,354.90 L224.50,354.90 L225.00,354.90 L225.50,354.90 L226.00,354.90 L226.50,354.90 L227.00,354.90 L227.50,354.90 L228.00,354.90 L228.50,354.90 L229.00,354.90 L229.50,354.90 L230.00,354.90 L230.50,354.90 L231.00,354.90 L231.50,354.90 L232.00,354.90 L232.50,354.90 L233.00,354.90 L233.50,354.90 L234.00,354.90 L234.50,354.90 L235.00,354.90 L235.50,354.90 L236.00,354.90 L236.50,354.90 L236.80,354.90 L237.00,354.90 L237.50,354.90 L238.00,354.90 L238.50,354.90 L239.00,354.90 L239.50,354.90 L240.00,354.90 L240.50,354.90 L241.00,354.90 L241.50,354.90 L242.00,354.90 L242.50,354.90 L243.00,354.90 L243.50,354.90 L244.00,354.90 L244.50,354.90 L245.00,354.90 L245.50,354.90 L246.00,354.90 L246.50,354.90 L247.00,354.90 L247.50,354.90 L248.00,354.90 L248.50,354.90 L249.00,354.90 L249.50,354.90 L250.00,354.90 L250.50,354.90 L251.00,354.90 L251.50,354.90 L252.00,346.80 L252.50,345.30 L253.00,346.80 L253.50,354.90 L254.00,354.90 L254.50,354.90 L255.00,354.90 L255.50,354.90 L256.00,354.90 L256.50,354.90 L257.00,354.90 L257.50,354.90 L258.00,354.90 L258.50,354.90 L259.00,354.90 L259.50,354.90 L260.00,354.90 L260.50,354.90 L261.00,354.90 L261.50,354.90 L262.00,354.90 L262.50,354.90 L263.00,354.90 L263.50,354.90 L264.00,354.90 L264.50,354.90 L265.00,354.90 L265.50,354.90 L266.00,354.90 L266.50,354.90 L267.00,354.90 L267.50,354.90 L268.00,354.90 L268.50,345.22 L269.00,343.70 L269.50,345.22 L270.00,354.90 L270.50,354.90 L271.00,354.90 L271.50,354.90 L272.00,354.90 L272.50,354.90 L273.00,354.90 L273.50,354.90 L274.00,354.90 L274.50,354.90 L275.00,354.90 L275.50,354.90 L276.00,354.90 L276.50,354.90 L277.00,354.90 L277.50,354.90 L278.00,354.90 L278.50,354.90 L279.00,354.90 L279.50,354.90 L280.00,354.90 L280.50,354.90 L281.00,354.90 L281.50,354.90 L282.00,354.90 L282.50,351.20 L283.00,343.19 L283.40,342.40 L283.50,342.41 L284.00,345.05 L284.50,354.90 L285.00,354.90 L285.50,354.90 L286.00,354.90 L286.50,354.90 L287.00,354.90 L287.50,354.90 L288.00,354.90 L288.50,354.90 L289.00,354.90 L289.50,354.90 L290.00,354.90 L290.50,354.90 L291.00,354.90 L291.50,354.90 L292.00,354.90 L292.50,354.90 L293.00,354.90 L293.50,354.90 L294.00,354.90 L294.50,354.90 L295.00,354.90 L295.50,354.90 L296.00,354.90 L296.50,354.90 L297.00,354.90 L297.50,354.90 L298.00,354.90 L298.50,347.92 L299.00,345.31 L299.10,345.30 L299.50,346.08 L300.00,354.02 L300.50,354.90 L301.00,354.90 L301.50,354.90 L302.00,354.90 L302.50,354.90 L303.00,354.90 L303.50,354.90 L304.00,354.90 L304.50,354.90 L305.00,354.90 L305.50,354.90 L306.00,354.90 L306.50,354.90 L307.00,354.90 L307.50,354.90 L308.00,354.90 L308.50,354.90 L309.00,354.90 L309.50,354.90 L310.00,354.90 L310.50,354.90 L311.00,354.90 L311.50,354.90 L312.00,354.90 L312.50,354.90 L313.00,354.90 L313.50,354.90 L314.00,354.90 L314.40,354.90 L314.50,354.90 L315.00,354.90 L315.50,354.90 L316.00,354.90 L316.50,354.90 L317.00,354.90 L317.50,354.90 L318.00,354.90 L318.50,354.90 L319.00,354.90 L319.50,354.90 L320.00,354.90 L320.50,354.90 L321.00,354.90 L321.50,354.90 L322.00,354.90 L322.50,354.90 L323.00,354.90 L323.50,354.90 L324.00,354.90 L324.50,354.90 L325.00,354.90 L325.50,354.90 L326.00,354.90 L326.50,354.90 L327.00,354.90 L327.50,354.90 L328.00,354.90 L328.50,354.90 L329.00,354.90 L329.50,350.91 L330.00,349.40 L330.50,350.91 L331.00,354.90 L331.50,354.90 L332.00,354.90 L332.50,354.90 L333.00,354.90 L333.50,354.90 L334.00,354.90 L334.50,354.90 L335.00,354.90 L335.50,354.90 L336.00,354.90 L336.50,354.90 L337.00,354.90 L337.50,354.90 L338.00,354.90 L338.50,354.90 L339.00,354.90 L339.50,354.90 L340.00,354.90 L340.50,354.90 L341.00,354.90 L341.50,354.90 L342.00,354.90 L342.50,354.90 L343.00,354.90 L343.50,354.90 L344.00,354.90 L344.50,354.90 L345.00,354.90 L345.50,354.90 L345.80,354.90 L346.00,354.90 L346.50,354.90 L347.00,354.90 L347.50,354.90 L348.00,354.90 L348.50,354.90 L349.00,354.90 L349.50,354.90 L350.00,354.90 L350.50,354.90 L351.00,354.90 L351.50,354.90 L352.00,354.90 L352.50,354.90 L353.00,549.49 L353.50,549.34 L354.00,549.00 L354.50,550.34 L355.00,549.30 L355.50,549.71 L356.00,548.26 L356.50,354.90 L357.00,354.90 L357.50,354.90 L358.00,354.90 L358.50,354.90 L359.00,354.90 L359.50,354.90 L360.00,354.90 L360.50,354.90 L361.00,354.90 L361.50,354.90 L362.00,354.90 L362.30,354.90 L362.50,354.90 L363.00,354.90 L363.50,354.90 L364.00,354.90 L364.50,354.90 L365.00,354.90 L365.50,354.90 L366.00,354.90 L366.50,354.90 L367.00,354.90 L367.50,354.90 L368.00,354.90 L368.50,354.90 L369.00,354.90 L369.50,354.90 L370.00,354.90 L370.50,354.90 L371.00,354.90 L371.50,354.90 L372.00,354.90 L372.50,354.90 L373.00,354.90 L373.50,354.90 L374.00,354.90 L374.50,354.90 L375.00,354.90 L375.50,354.90 L376.00,354.90 L376.50,354.90 L377.00,354.90 L377.50,354.90 L378.00,354.90 L378.50,354.90 L379.00,354.90 L379.50,354.90 L380.00,354.90 L380.50,354.90 L381.00,354.90 L381.50,354.90 L382.00,354.90 L382.50,354.90 L383.00,354.90 L383.50,354.90 L384.00,354.90 L384.50,354.90 L385.00,354.90 L385.50,354.90 L386.00,354.90 L386.50,354.90 L387.00,354.90 L387.50,354.90 L388.00,354.90 L388.50,354.90 L389.00,354.90 L389.50,354.90 L390.00,354.90 L390.50,354.90 L391.00,354.90 L391.50,354.90 L392.00,354.90 L392.50,354.90 L393.00,354.90 L393.50,354.90 L394.00,354.90 L394.50,354.90 L395.00,354.90 L395.50,354.90 L396.00,354.90 L396.50,354.90 L397.00,354.90 L397.50,354.90 L398.00,354.90 L398.50,354.90 L399.00,354.90 L399.50,354.90 L400.00,354.90 L400.50,354.90 L401.00,354.90 L401.50,354.90 L402.00,354.90 L402.50,354.90 L403.00,354.90 L403.50,354.90 L404.00,354.90 L404.50,354.90 L405.00,354.90 L405.50,354.90 L406.00,354.90 L406.50,354.90 L407.00,354.90 L407.50,354.90 L408.00,354.90 L408.50,354.90 L409.00,354.90 L409.30,354.90 L409.50,354.90 L410.00,354.90 L410.50,354.90 L411.00,354.90 L411.50,354.90 L412.00,354.90 L412.50,354.90 L413.00,354.90 L413.50,354.90 L414.00,354.90 L414.50,354.90 L415.00,354.90 L415.50,354.90 L416.00,354.90 L416.50,354.90 L417.00,354.90 L417.50,354.90 L418.00,354.90 L418.50,354.90 L419.00,354.90 L419.50,354.90 L420.00,354.90 L420.50,354.90 L421.00,354.90 L421.50,354.90 L422.00,354.90 L422.50,354.90 L423.00,354.90 L423.50,354.90 L424.00,354.90 L424.50,352.81 L425.00,344.52 L425.40,343.70 L425.50,343.71 L426.00,346.44 L426.50,354.90 L427.00,354.90 L427.50,354.90 L428.00,354.90 L428.50,354.90 L429.00,354.90 L429.50,354.90 L430.00,354.90 L430.50,354.90 L431.00,354.90 L431.50,354.90 L432.00,354.90 L432.50,354.90 L433.00,354.90 L433.50,354.90 L434.00,354.90 L434.50,354.90 L435.00,354.90 L435.50,354.90 L436.00,354.90 L436.50,354.90 L437.00,354.90 L437.50,354.90 L438.00,354.90 L438.50,354.90 L439.00,354.90 L439.50,354.90 L440.00,354.90 L440.50,354.90 L440.70,354.90 L441.00,354.90 L441.50,354.90 L442.00,354.90 L442.50,354.90 L443.00,354.90 L443.50,354.90 L444.00,354.90 L444.50,354.90 L445.00,354.90 L445.50,354.90 L446.00,354.90 L446.50,354.90 L447.00,354.90 L447.50,354.90 L448.00,354.90 L448.50,354.90 L449.00,354.90 L449.50,354.90 L450.00,354.90 L450.50,354.90 L451.00,354.90 L451.50,354.90 L452.00,354.90 L452.50,354.90 L453.00,354.90 L453.50,354.90 L454.00,354.90 L454.50,354.90 L455.00,354.90 L455.50,354.90 L455.60,354.90 L456.00,354.90 L456.50,354.90 L457.00,354.90 L457.50,354.90 L458.00,354.90 L458.50,354.90 L459.00,354.90 L459.50,354.90 L460.00,354.90 L460.50,354.90 L461.00,354.90 L461.50,354.90 L462.00,354.90 L462.50,354.90 L463.00,354.90 L463.50,354.90 L464.00,354.90 L464.50,354.90 L465.00,354.90 L465.50,354.90 L466.00,354.90 L466.50,354.90 L467.00,354.90 L467.50,354.90 L468.00,354.90 L468.50,354.90 L469.00,354.90 L469.50,354.90 L470.00,354.90 L470.50,354.90 L471.00,354.90 L471.50,354.90 L471.70,354.90 L472.00,354.90 L472.50,354.90 L473.00,354.90 L473.50,354.90 L474.00,354.90 L474.50,354.90 L475.00,354.90 L475.50,354.90 L476.00,354.90 L476.50,354.90 L477.00,354.90 L477.50,354.90 L478.00,354.90 L478.50,354.90 L479.00,354.90 L479.50,354.90 L480.00,354.90 L480.50,354.90 L481.00,354.90 L481.50,354.90 L482.00,354.90 L482.50,354.90 L483.00,354.90 L483.50,354.90 L484.00,354.90 L484.50,354.90 L485.00,354.90 L485.50,354.90 L486.00,354.90 L486.50,354.90 L487.00,354.90 L487.50,354.90 L487.80,354.90 L488.00,354.90 L488.50,354.90 L489.00,354.90 L489.50,354.90 L490.00,354.90 L490.50,354.90 L491.00,354.90 L491.50,354.90 L492.00,354.90 L492.50,354.90 L493.00,354.90 L493.50,354.90 L494.00,354.90 L494.50,354.90 L495.00,354.90 L495.50,354.90 L496.00,354.90 L496.50,354.90 L497.00,354.90 L497.50,354.90 L498.00,354.90 L498.50,354.90 L499.00,354.90 L499.50,354.90 L500.00,354.90 L500.50,354.90 L501.00,354.90 L501.50,354.90 L502.00,354.90 L502.50,354.90 L503.00,354.90 L503.50,354.90 L504.00,354.90 L504.50,354.90 L505.00,354.90 L505.50,354.90 L506.00,354.90 L506.50,354.90 L507.00,354.90 L507.50,354.90 L508.00,354.90 L508.50,354.90 L509.00,354.90 L509.50,354.90 L510.00,354.90 L510.50,354.90 L511.00,354.90 L511.50,354.90 L512.00,354.90 L512.50,354.90 L513.00,354.90 L513.50,354.90 L514.00,354.90 L514.50,354.90 L515.00,354.90 L515.50,354.90 L516.00,354.90 L516.50,354.90 L517.00,354.90 L517.50,354.90 L518.00,354.90 L518.50,354.90 L519.00,354.90 L519.50,354.90 L520.00,354.90 L520.50,354.90 L521.00,354.90 L521.50,354.90 L522.00,354.90 L522.50,354.90 L523.00,354.90 L523.50,354.90 L524.00,354.90 L524.50,354.90 L525.00,354.90 L525.50,354.90 L526.00,354.90 L526.50,354.90 L527.00,354.90 L527.50,354.90 L528.00,354.90 L528.50,354.90 L529.00,354.90 L529.50,354.90 L530.00,354.90 L530.50,354.90 L531.00,354.90 L531.50,354.90 L532.00,354.90 L532.50,354.90 L533.00,354.90 L533.50,354.90 L534.00,354.90 L534.50,354.90 L534.80,354.90 L535.00,354.90 L535.50,354.90 L536.00,354.90 L536.50,354.90 L537.00,354.90 L537.50,354.90 L538.00,354.90 L538.50,354.90 L539.00,354.90 L539.50,354.90 L540.00,354.90 L540.50,354.90 L541.00,354.90 L541.50,354.90 L542.00,354.90 L542.50,354.90 L543.00,354.90 L543.50,354.90 L544.00,354.90 L544.50,354.90 L545.00,354.90 L545.50,354.90 L546.00,354.90 L546.50,354.90 L547.00,354.90 L547.50,354.90 L548.00,354.90 L548.50,354.90 L549.00,354.90 L549.50,354.90 L550.00,354.90 L550.50,354.90 L550.90,354.90 L551.00,354.90 L551.50,354.90 L552.00,354.90 L552.50,354.90 L553.00,354.90 L553.50,354.90 L554.00,354.90 L554.50,354.90 L555.00,354.90 L555.50,354.90 L556.00,354.90 L556.50,354.90 L557.00,354.90 L557.50,354.90 L558.00,354.90 L558.50,354.90 L559.00,354.90 L559.50,354.90 L560.00,354.90 L560.50,354.90 L561.00,354.90 L561.50,354.90 L562.00,354.90 L562.50,354.90 L563.00,354.90 L563.50,354.90 L564.00,354.90 L564.50,354.90 L565.00,354.90 L565.50,354.90 L565.70,354.90 L566.00,354.90 L566.50,354.90 L567.00,354.90 L567.50,354.90 L568.00,354.90 L568.50,354.90 L569.00,354.90 L569.50,354.90 L570.00,354.90 L570.50,354.90 L571.00,354.90 L571.50,354.90 L572.00,354.90 L572.50,354.90 L573.00,354.90 L573.50,354.90 L574.00,354.90 L574.50,354.90 L575.00,354.90 L575.50,354.90 L576.00,354.90 L576.50,354.90 L577.00,354.90 L577.50,354.90 L578.00,354.90 L578.50,354.90 L579.00,354.90 L579.50,354.90 L580.00,354.90 L580.50,354.90 L581.00,354.90 L581.50,354.90 L582.00,354.90 L582.50,354.90 L583.00,354.90 L583.50,354.90 L584.00,354.90 L584.50,354.90 L585.00,354.90 L585.50,354.90 L586.00,354.90 L586.50,354.90 L587.00,354.90 L587.50,354.90 L588.00,354.90 L588.50,354.90 L589.00,354.90 L589.50,354.90 L590.00,354.90 L590.50,354.90 L591.00,354.90 L591.50,354.90 L592.00,354.90 L592.50,354.90 L593.00,354.90 L593.50,354.90 L594.00,354.90 L594.50,354.90 L595.00,354.90 L595.50,354.90 L596.00,354.90 L596.50,354.90 L596.60,354.90 L597.00,354.90 L597.50,354.90 L598.00,354.90 L598.50,354.90 L599.00,354.90 L599.50,354.90 L600.00,354.90 L600.50,354.90 L601.00,354.90 L601.50,354.90 L602.00,354.90 L602.50,354.90 L603.00,354.90 L603.50,354.90 L604.00,354.90 L604.50,354.90 L605.00,354.90 L605.50,354.90 L606.00,354.90 L606.50,354.90 L607.00,354.90 L607.50,354.90 L608.00,354.90 L608.50,354.90 L609.00,354.90 L609.50,354.90 L610.00,354.90 L610.50,354.90 L611.00,354.90 L611.50,354.90 L612.00,354.90 L612.50,354.90 L612.70,354.90 L613.00,354.90 L613.50,354.90 L614.00,354.90 L614.50,354.90 L615.00,354.90 L615.50,354.90 L616.00,354.90 L616.50,354.90 L617.00,354.90 L617.50,354.90 L618.00,354.90 L618.50,354.90 L619.00,354.90 L619.50,354.90 L620.00,354.90 L620.50,354.90 L621.00,354.90 L621.50,354.90 L622.00,354.90 L622.50,354.90 L623.00,354.90 L623.50,354.90 L624.00,354.90 L624.50,354.90 L625.00,354.90 L625.50,354.90 L626.00,354.90 L626.50,354.90 L627.00,354.90 L627.50,354.90 L628.00,354.90 L628.40,354.90 L628.50,354.90 L629.00,354.90 L629.50,354.90 L630.00,354.90 L630.50,354.90 L631.00,354.90 L631.50,354.90 L632.00,354.90 L632.50,354.90 L633.00,354.90 L633.50,354.90 L634.00,354.90 L634.50,354.90 L635.00,354.90 L635.50,354.90 L636.00,354.90 L636.50,354.90 L637.00,354.90 L637.50,354.90 L638.00,354.90 L638.50,354.90 L639.00,354.90 L639.50,354.90 L640.00,354.90 L640.50,354.90 L641.00,354.90 L641.50,354.90 L642.00,354.90 L642.50,354.90 L643.00,354.90 L643.50,354.90 L643.70,354.90 L644.00,354.90 L644.50,354.90 L645.00,354.90 L645.50,354.90 L646.00,354.90 L646.50,354.90 L647.00,354.90 L647.50,354.90 L648.00,354.90 L648.50,354.90 L649.00,354.90 L649.50,354.90 L650.00,354.90 L650.50,354.90 L651.00,354.90 L651.50,354.90 L652.00,354.90 L652.50,354.90 L653.00,354.90 L653.50,354.90 L654.00,354.90 L654.50,354.90 L655.00,354.90 L655.50,354.90 L656.00,354.90 L656.50,354.90 L657.00,354.90 L657.50,354.90 L658.00,354.90 L658.50,354.90 L659.00,354.90 L659.40,354.90 L659.50,354.90 L660.00,354.90 L660.50,354.90 L661.00,354.90 L661.50,354.90 L662.00,354.90 L662.50,354.90 L663.00,354.90 L663.50,354.90 L664.00,354.90 L664.50,354.90 L665.00,354.90 L665.50,354.90 L666.00,354.90 L666.50,354.90 L667.00,354.90 L667.50,354.90 L668.00,354.90 L668.50,354.90 L669.00,354.90 L669.50,354.90 L670.00,354.90 L670.50,354.90 L671.00,354.90 L671.50,354.90 L672.00,354.90 L672.50,354.90 L673.00,354.90 L673.50,354.90 L674.00,354.90 L674.50,354.90 L675.00,354.90 L675.50,354.90 L676.00,354.90 L676.50,354.90 L677.00,354.90 L677.50,354.90 L678.00,354.90 L678.50,354.90 L679.00,354.90 L679.50,354.90 L680.00,354.90 L680.50,354.90 L681.00,354.90 L681.50,354.90 L682.00,354.90 L682.50,354.90 L683.00,354.90 L683.50,354.90 L684.00,354.90 L684.50,354.90 L685.00,354.90 L685.50,354.90 L686.00,354.90 L686.50,354.90 L687.00,354.90 L687.50,354.90 L688.00,354.90 L688.50,354.90 L689.00,354.90 L689.50,354.90 L690.00,354.90 L690.40,354.90 L690.50,354.90 L691.00,354.90 L691.50,354.90 L692.00,354.90 L692.50,354.90 L693.00,354.90 L693.50,354.90 L694.00,354.90 L694.50,354.90 L695.00,354.90 L695.50,354.90 L696.00,354.90 L696.50,354.90 L697.00,354.90 L697.50,354.90 L698.00,354.90 L698.50,354.90 L699.00,354.90 L699.50,354.90 L700.00,354.90 L700.50,354.90 L701.00,354.90 L701.50,354.90 L702.00,354.90 L702.50,354.90 L703.00,354.90 L703.50,354.90 L704.00,354.90 L704.50,354.90 L705.00,354.90 L705.50,354.90 L705.60,354.90 L706.00,354.90 L706.50,354.90 L707.00,354.90 L707.50,354.90 L708.00,354.90 L708.50,354.90 L709.00,354.90 L709.50,354.90 L710.00,354.90 L710.50,354.90 L711.00,354.90 L711.50,354.90 L712.00,354.90 L712.50,354.90 L713.00,354.90 L713.50,354.90 L714.00,354.90 L714.50,354.90 L715.00,354.90 L715.50,354.90 L716.00,354.90 L716.50,354.90 L717.00,354.90 L717.50,354.90 L718.00,354.90 L718.50,354.90 L719.00,354.90 L719.50,354.90 L720.00,354.90 L720.50,354.90 L721.00,354.90 L721.50,354.90 L722.00,354.90 L722.10,354.90 L722.50,354.90 L723.00,354.90 L723.50,354.90 L724.00,354.90 L724.50,354.90 L725.00,354.90 L725.50,354.90 L726.00,354.90 L726.50,354.90 L727.00,354.90 L727.50,354.90 L728.00,354.90 L728.50,354.90 L729.00,354.90 L729.50,354.90 L730.00,354.90 L730.50,354.90 L731.00,354.90 L731.50,354.90 L732.00,354.90 L732.50,354.90 L733.00,354.90 L733.50,354.90 L734.00,354.90 L734.50,354.90 L735.00,354.90 L735.50,354.90 L736.00,354.90 L736.50,354.90 L737.00,354.90 L737.50,354.90 L737.80,354.90 L738.00,354.90 L738.50,354.90 L739.00,354.90 L739.50,354.90 L740.00,354.90 L740.50,354.90 L741.00,354.90 L741.50,354.90 L742.00,354.90 L742.50,354.90 L743.00,354.90 L743.50,354.90 L744.00,354.90 L744.50,354.90 L745.00,354.90 L745.50,354.90 L746.00,354.90 L746.50,354.90 L747.00,354.90 L747.50,354.90 L748.00,354.90 L748.50,354.90 L749.00,354.90 L749.50,354.90 L750.00,354.90 L750.50,354.90 L751.00,354.90 L751.50,354.90 L752.00,354.90 L752.50,354.90 L753.00,354.90 L753.10,354.90 L753.50,354.90 L754.00,354.90 L754.50,354.90 L755.00,354.90 L755.50,354.90 L756.00,354.90 L756.50,354.90 L757.00,354.90 L757.50,354.90 L758.00,354.90 L758.50,354.90 L759.00,354.90 L759.50,354.90 L760.00,354.90 L760.50,354.90 L761.00,354.90 L761.50,354.90 L762.00,354.90 L762.50,354.90 L763.00,354.90 L763.50,354.90 L764.00,354.90 L764.50,354.90 L765.00,354.90 L765.50,354.90 L766.00,354.90 L766.50,354.90 L767.00,354.90 L767.50,354.90 L768.00,354.90 L768.50,354.90 L769.00,354.90 L769.50,354.90 L769.60,354.90 L770.00,354.90 L770.50,354.90 L771.00,354.90 L771.50,354.90 L772.00,354.90 L772.50,354.90 L773.00,354.90 L773.50,354.90 L774.00,354.90 L774.50,354.90 L775.00,354.90 L775.50,354.90 L776.00,354.90 L776.50,354.90 L777.00,354.90 L777.50,354.90 L778.00,354.90 L778.50,354.90 L779.00,354.90 L779.50,354.90 L780.00,354.90 L780.50,354.90 L781.00,354.90 L781.50,354.90 L782.00,354.90 L782.50,354.90 L783.00,354.90 L783.50,354.90 L784.00,354.90 L784.50,354.90 L785.00,354.90 L785.50,354.90 L786.00,354.90 L786.50,354.90 L787.00,354.90 L787.50,354.90 L788.00,354.90 L788.50,354.90 L789.00,354.90 L789.50,354.90 L790.00,354.90 L790.50,354.90 L791.00,354.90 L791.50,354.90 L792.00,354.90 L792.50,354.90 L793.00,354.90 L793.50,354.90 L794.00,354.90 L794.50,354.90 L795.00,354.90 L795.50,354.90 L796.00,354.90 L796.50,354.90 L797.00,354.90 L797.50,354.90 L798.00,354.90 L798.50,354.90 L799.00,354.90 L799.50,354.90 L800.00,354.90 L800.50,354.90 L800.60,354.90 L801.00,354.90 L801.50,354.90 L802.00,354.90 L802.50,354.90 L803.00,354.90 L803.50,354.90 L804.00,354.90 L804.50,354.90 L805.00,354.90 L805.50,354.90 L806.00,354.90 L806.50,354.90 L807.00,354.90 L807.50,354.90 L808.00,354.90 L808.50,354.90 L809.00,354.90 L809.50,354.90 L810.00,354.90 L810.50,354.90 L811.00,354.90 L811.50,354.90 L812.00,354.90 L812.50,354.90 L813.00,354.90 L813.50,354.90 L814.00,354.90 L814.50,354.90 L815.00,354.90 L815.50,354.90 L816.00,354.90 L816.30,354.90 L816.50,354.90 L817.00,354.90 L817.50,354.90 L818.00,354.90 L818.50,354.90 L819.00,354.90 L819.50,354.90 L820.00,354.90 L820.50,354.90 L821.00,354.90 L821.50,354.90 L822.00,354.90 L822.50,354.90 L823.00,354.90 L823.50,354.90 L824.00,354.90 L824.50,354.90 L825.00,354.90 L825.50,354.90 L826.00,354.90 L826.50,354.90 L827.00,354.90 L827.50,354.90 L828.00,354.90 L828.50,354.90 L829.00,354.90 L829.50,354.90 L830.00,354.90 L830.50,354.90 L831.00,354.90 L831.50,354.90 L832.00,354.90 L832.50,354.90 L833.00,354.90 L833.50,354.90 L834.00,354.90 L834.50,354.90 L835.00,354.90 L835.50,354.90 L836.00,354.90 L836.50,354.90 L837.00,354.90 L837.50,354.90 L838.00,354.90 L838.50,354.90 L839.00,354.90 L839.50,354.90 L840.00,354.90 L840.50,354.90 L841.00,354.90 L841.50,354.90 L842.00,354.90 L842.50,354.90 L843.00,354.90 L843.50,354.90 L844.00,354.90 L844.50,354.90 L845.00,354.90 L845.50,354.90 L846.00,354.90 L846.50,354.90 L847.00,354.90 L847.50,354.90 L848.00,354.90 L848.50,354.90 L849.00,354.90 L849.50,354.90 L850.00,354.90 L850.50,354.90 L851.00,354.90 L851.50,354.90 L852.00,354.90 L852.50,354.90 L853.00,354.90 L853.50,354.90 L854.00,354.90 L854.50,354.90 L855.00,354.90 L855.50,354.90 L856.00,354.90 L856.50,354.90 L857.00,354.90 L857.50,354.90 L858.00,354.90 L858.50,354.90 L859.00,354.90 L859.50,354.90 L860.00,354.90 L860.50,354.90 L861.00,354.90 L861.50,354.90 L862.00,354.90 L862.50,354.90 L862.90,354.90 L863.00,354.90 L863.50,354.90 L864.00,354.90 L864.50,354.90 L865.00,354.90 L865.50,354.90 L866.00,354.90 L866.50,354.90 L867.00,354.90 L867.50,354.90 L868.00,354.90 L868.50,354.90 L869.00,354.90 L869.50,354.90 L870.00,354.90 L870.50,354.90 L871.00,354.90 L871.50,354.90 L872.00,354.90 L872.50,354.90 L873.00,354.90 L873.50,354.90 L874.00,354.90 L874.50,354.90 L875.00,354.90 L875.50,354.90 L876.00,354.90 L876.50,354.90 L877.00,354.90 L877.50,354.90 L878.00,354.90 L878.50,354.90 L879.00,354.90 L879.50,354.90 L880.00,354.90 L880.50,354.90 L881.00,354.90 L881.50,354.90 L882.00,354.90 L882.50,354.90 L883.00,354.90 L883.50,354.90 L884.00,354.90 L884.50,354.90 L885.00,354.90 L885.50,354.90 L886.00,354.90 L886.50,354.90 L887.00,354.90 L887.50,354.90 L888.00,354.90 L888.50,354.90 L889.00,354.90 L889.50,354.90 L890.00,354.90 L890.50,354.90 L891.00,354.90 L891.50,354.90 L892.00,354.90 L892.50,354.90 L893.00,354.90 L893.50,354.90 L894.00,354.90 L894.50,354.90 L894.70,354.90 L895.00,354.90 L895.50,354.90 L896.00,354.90 L896.50,354.90 L897.00,354.90 L897.50,354.90 L898.00,354.90 L898.50,354.90 L899.00,354.90 L899.50,354.90 L900.00,354.90 L900.50,354.90 L901.00,354.90 L901.50,354.90 L902.00,354.90 L902.50,354.90 L903.00,354.90 L903.50,354.90 L904.00,354.90 L904.50,354.90 L905.00,354.90 L905.50,354.90 L906.00,354.90 L906.50,354.90 L907.00,354.90 L907.50,354.90 L908.00,354.90 L908.50,354.90 L909.00,354.90 L909.50,354.90 L910.00,354.90 L910.40,354.90 L910.50,354.90 L911.00,354.90 L911.50,354.90 L912.00,354.90 L912.50,354.90 L913.00,354.90 L913.50,354.90 L914.00,354.90 L914.50,354.90 L915.00,354.90 L915.50,573.18 L916.00,574.87 L916.50,575.86 L917.00,578.57 L917.50,577.21 L918.00,576.69 L918.50,574.69 L919.00,354.90 L919.50,354.90 L920.00,354.90 L920.50,354.90 L921.00,354.90 L921.50,354.90 L922.00,354.90 L922.50,354.90 L923.00,354.90 L923.50,354.90 L924.00,354.90 L924.50,354.90 L925.00,354.90 L925.50,354.90 L925.60,354.90 L926.00,354.90 L926.50,354.90 L927.00,354.90 L927.50,354.90 L928.00,354.90 L928.50,354.90 L929.00,354.90 L929.50,354.90 L930.00,354.90 L930.50,354.90 L931.00,354.90 L931.50,354.90 L932.00,354.90 L932.50,354.90 L933.00,354.90 L933.50,354.90 L934.00,354.90 L934.50,354.90 L935.00,354.90 L935.50,354.90 L936.00,354.90 L936.50,354.90 L937.00,354.90 L937.50,354.90 L938.00,354.90 L938.50,354.90 L939.00,354.90 L939.50,354.90 L940.00,354.90 L940.50,354.90 L941.00,354.90 L941.30,354.90 L941.50,354.90 L942.00,354.90 L942.50,354.90 L943.00,354.90 L943.50,354.90 L944.00,354.90 L944.50,354.90 L945.00,354.90 L945.50,354.90 L946.00,354.90 L946.50,354.90 L947.00,354.90 L947.50,354.90 L948.00,354.90 L948.50,354.90 L949.00,354.90 L949.50,354.90 L950.00,354.90 L950.50,354.90 L951.00,354.90 L951.50,354.90 L952.00,354.90 L952.50,354.90 L953.00,354.90 L953.50,354.90 L954.00,354.90 L954.50,354.90 L955.00,354.90 L955.50,354.90 L956.00,354.90 L956.50,354.90 L957.00,354.90 L957.30,354.90 L957.50,354.90 L958.00,354.90 L958.50,354.90 L959.00,354.90 L959.50,354.90 L960.00,354.90 L960.50,354.90 L961.00,354.90 L961.50,354.90 L962.00,354.90 L962.50,354.90 L963.00,354.90 L963.50,354.90 L964.00,354.90 L964.50,354.90 L965.00,354.90 L965.50,354.90 L966.00,354.90 L966.50,354.90 L967.00,354.90 L967.50,354.90 L968.00,354.90 L968.50,354.90 L969.00,354.90 L969.50,354.90 L970.00,354.90 L970.50,354.90 L971.00,354.90 L971.50,354.90 L972.00,354.90 L972.20,354.90 L972.50,354.90 L973.00,354.90 L973.50,354.90 L974.00,354.90 L974.50,354.90 L975.00,354.90 L975.50,354.90 L976.00,354.90 L976.50,354.90 L977.00,354.90 L977.50,354.90 L978.00,354.90 L978.50,354.90 L979.00,354.90 L979.50,354.90 L980.00,354.90 L980.50,354.90 L981.00,354.90 L981.50,354.90 L982.00,354.90 L982.50,354.90 L983.00,354.90 L983.50,354.90 L984.00,354.90 L984.50,354.90 L985.00,354.90 L985.50,354.90 L986.00,354.90 L986.50,354.90 L987.00,354.90 L987.50,354.90 L988.00,354.90 L988.50,354.90 L988.70,354.90 L989.00,354.90 L989.50,354.90 L990.00,354.90 L990.50,354.90 L991.00,354.90 L991.50,354.90 L992.00,354.90 L992.50,354.90 L993.00,354.90 L993.50,354.90 L994.00,354.90 L994.50,354.90 L995.00,354.90 L995.50,354.90 L996.00,354.90 L996.50,354.90 L997.00,354.90 L997.50,354.90 L998.00,354.90 L998.50,354.90 L999.00,354.90 L999.50,354.90 L1000.00,354.90 L1000.50,354.90 L1001.00,354.90 L1001.50,354.90 L1002.00,354.90 L1002.50,354.90 L1003.00,354.90 L1003.50,354.90 L1004.00,354.90 L1004.50,354.90 L1005.00,354.90 L1005.50,354.90 L1006.00,354.90 L1006.50,354.90 L1007.00,354.90 L1007.50,354.90 L1008.00,354.90 L1008.50,354.90 L1009.00,354.90 L1009.50,354.90 L1010.00,354.90 L1010.50,354.90 L1011.00,354.90 L1011.50,354.90 L1012.00,354.90 L1012.50,354.90 L1013.00,354.90 L1013.50,354.90 L1014.00,354.90 L1014.50,354.90 L1015.00,354.90 L1015.50,354.90 L1016.00,354.90 L1016.50,354.90 L1017.00,354.90 L1017.50,354.90 L1018.00,354.90 L1018.50,354.90 L1019.00,354.90 L1019.50,354.90 L1020.00,354.90 L1020.50,354.90 L1021.00,354.90 L1021.50,354.90 L1022.00,354.90 L1022.50,354.90 L1023.00,354.90 L1023.50,354.90 L1024.00,354.90 L1024.50,354.90 L1025.00,354.90 L1025.50,354.90 L1026.00,354.90 L1026.50,354.90 L1027.00,354.90 L1027.50,354.90 L1028.00,354.90 L1028.50,354.90 L1029.00,354.90 L1029.50,354.90 L1030.00,354.90 L1030.50,354.90 L1031.00,354.90 L1031.50,354.90 L1032.00,354.90 L1032.50,354.90 L1033.00,354.90 L1033.50,354.90 L1034.00,354.90 L1034.50,354.90 L1035.00,354.90 L1035.50,354.90 L1035.80,354.90 L1036.00,354.90 L1036.50,354.90 L1037.00,354.90 L1037.50,354.90 L1038.00,354.90 L1038.50,354.90 L1039.00,354.90 L1039.50,354.90 L1040.00,354.90 L1040.50,354.90 L1041.00,354.90 L1041.50,354.90 L1042.00,354.90 L1042.50,354.90 L1043.00,354.90 L1043.50,354.90 L1044.00,354.90 L1044.50,354.90 L1045.00,354.90 L1045.50,354.90 L1046.00,354.90 L1046.50,354.90 L1047.00,354.90 L1047.50,354.90 L1048.00,354.90 L1048.50,354.90 L1049.00,354.90 L1049.50,354.90 L1050.00,354.90 L1050.50,354.90 L1050.60,354.90 L1051.00,354.90 L1051.50,354.90 L1052.00,354.90 L1052.50,354.90 L1053.00,354.90 L1053.50,354.90 L1054.00,354.90 L1054.50,354.90 L1055.00,354.90 L1055.50,354.90 L1056.00,354.90 L1056.50,354.90 L1057.00,354.90 L1057.50,354.90 L1058.00,354.90 L1058.50,354.90 L1059.00,354.90 L1059.50,354.90 L1060.00,354.90 L1060.50,354.90 L1061.00,354.90 L1061.50,354.90 L1062.00,354.90 L1062.50,354.90 L1063.00,354.90 L1063.50,354.90 L1064.00,354.90 L1064.50,354.90 L1065.00,354.90 L1065.50,354.90 L1066.00,354.90 L1066.50,354.90 L1067.00,354.90 L1067.10,354.90 L1067.50,354.90 L1068.00,354.90 L1068.50,354.90 L1069.00,354.90 L1069.50,354.90 L1070.00,354.90 L1070.50,354.90 L1071.00,354.90 L1071.50,354.90 L1072.00,354.90 L1072.50,354.90 L1073.00,354.90 L1073.50,354.90 L1074.00,354.90 L1074.50,354.90 L1075.00,354.90 L1075.50,354.90 L1076.00,354.90 L1076.50,354.90 L1077.00,354.90 L1077.50,354.90 L1078.00,354.90 L1078.50,354.90 L1079.00,354.90 L1079.50,354.90 L1080.00,354.90 L1080.50,354.90 L1081.00,354.90 L1081.50,354.90 L1082.00,354.90 L1082.40,354.90 L1082.50,354.90 L1083.00,354.90 L1083.50,354.90 L1084.00,354.90 L1084.50,354.90 L1085.00,354.90 L1085.50,354.90 L1086.00,354.90 L1086.50,354.90 L1087.00,354.90 L1087.50,354.90 L1088.00,354.90 L1088.50,354.90 L1089.00,354.90 L1089.50,354.90 L1090.00,354.90 L1090.50,354.90 L1091.00,354.90 L1091.50,354.90 L1092.00,354.90 L1092.50,354.90 L1093.00,354.90 L1093.50,354.90 L1094.00,354.90 L1094.50,354.90 L1095.00,354.90 L1095.50,354.90 L1096.00,354.90 L1096.50,354.90 L1097.00,352.15 L1097.50,289.49 L1098.00,250.33 L1098.50,234.52 L1099.00,232.20 L1099.50,234.52 L1100.00,250.30 L1100.50,289.36 L1101.00,351.79 L1101.50,354.90 L1102.00,354.90 L1102.50,354.90 L1103.00,354.90 L1103.50,354.90 L1104.00,354.90 L1104.50,354.90 L1105.00,354.90 L1105.50,354.90 L1106.00,354.90 L1106.50,354.90 L1107.00,347.25 L1107.50,340.14 L1108.00,331.94 L1108.50,331.57 L1109.00,334.65 L1109.50,346.58 L1110.00,354.90 L1110.50,354.90 L1111.00,354.90 L1111.50,354.90 L1112.00,332.03 L1112.50,304.76 L1113.00,295.05 L1113.40,294.10 L1113.50,294.11 L1114.00,297.30 L1114.50,313.19 L1115.00,348.49 L1115.50,354.90 L1116.00,354.90 L1116.50,354.90 L1117.00,354.90 L1117.50,354.90 L1118.00,354.90 L1118.50,354.90 L1119.00,354.90 L1119.50,354.90 L1120.00,354.90 L1120.50,354.90 L1121.00,354.90 L1121.50,354.90 L1122.00,354.90 L1122.50,354.90 L1123.00,354.90 L1123.50,354.90 L1124.00,354.90 L1124.50,354.90 L1125.00,354.90 L1125.50,354.90 L1126.00,354.90 L1126.50,354.90 L1127.00,354.90 L1127.50,354.90 L1128.00,354.90 L1128.50,354.90 L1129.00,354.90 L1129.50,354.90 L1129.90,354.90 L1130.00,354.90 L1130.50,354.90 L1131.00,354.90 L1131.50,354.90 L1132.00,354.90 L1132.50,354.90 L1133.00,354.90 L1133.50,354.90 L1134.00,354.90 L1134.50,354.90 L1135.00,354.90 L1135.50,354.90 L1136.00,354.90 L1136.50,354.90 L1137.00,354.90 L1137.50,354.90 L1138.00,354.90 L1138.50,354.90 L1139.00,354.90 L1139.50,354.90 L1140.00,354.90 L1140.50,354.90 L1141.00,354.90 L1141.50,354.90 L1142.00,354.90 L1142.50,354.90 L1143.00,354.90 L1143.50,354.90 L1144.00,354.90 L1144.50,354.90 L1145.00,354.90 L1145.20,354.90 L1145.50,354.90 L1146.00,354.90 L1146.50,354.90 L1147.00,354.90 L1147.50,354.90 L1148.00,354.90 L1148.50,354.90 L1149.00,354.90 L1149.50,354.90 L1150.00,354.90 L1150.50,354.90 L1151.00,354.90 L1151.50,354.90 L1152.00,354.90 L1152.50,354.90 L1153.00,354.90 L1153.50,354.90 L1154.00,354.90 L1154.50,354.90 L1155.00,354.90 L1155.50,354.90 L1156.00,354.90 L1156.50,354.90 L1157.00,354.90 L1157.50,354.90 L1158.00,354.90 L1158.50,354.90 L1159.00,354.90 L1159.50,354.90 L1160.00,354.90 L1160.50,354.90 L1160.80,354.90 L1161.00,354.90 L1161.50,354.90 L1162.00,354.90 L1162.50,354.90 L1163.00,354.90 L1163.50,354.90 L1164.00,354.90 L1164.50,354.90 L1165.00,354.90 L1165.50,354.90 L1166.00,354.90 L1166.50,354.90 L1167.00,354.90 L1167.50,354.90 L1168.00,354.90 L1168.50,354.90 L1169.00,354.90 L1169.50,354.90 L1170.00,354.90 L1170.50,354.90 L1171.00,354.90 L1171.50,354.90 L1172.00,354.90 L1172.50,354.90 L1173.00,354.90 L1173.50,354.90 L1174.00,354.90 L1174.50,354.90 L1175.00,354.90 L1175.50,354.90 L1176.00,354.90 L1176.50,354.90 L1177.00,354.90 L1177.50,354.90 L1178.00,354.90 L1178.50,354.90 L1179.00,354.90 L1179.50,354.90 L1180.00,354.90 L1180.50,354.90 L1181.00,354.90 L1181.50,354.90 L1182.00,354.90 L1182.50,354.90 L1183.00,354.90 L1183.50,354.90 L1184.00,354.90 L1184.50,354.90 L1185.00,354.90 L1185.50,354.90 L1186.00,354.90 L1186.50,354.90 L1187.00,354.90 L1187.50,354.90 L1188.00,354.90 L1188.50,354.90 L1189.00,354.90 L1189.50,354.90 L1190.00,354.90 L1190.50,354.90 L1191.00,354.90 L1191.50,354.90 L1191.80,354.90 L1192.00,354.90 L1192.50,354.90 L1193.00,354.90 L1193.50,354.90 L1194.00,354.90 L1194.50,354.90 L1195.00,354.90 L1195.50,354.90 L1196.00,354.90 L1196.50,354.90 L1197.00,354.90 L1197.50,354.90 L1198.00,354.90 L1198.50,354.90 L1199.00,354.90 L1199.50,354.90 L1200.00,354.90 L1200.50,354.90 L1201.00,354.90 L1201.50,354.90 L1202.00,354.90 L1202.50,354.90 L1203.00,354.90 L1203.50,354.90 L1204.00,354.90 L1204.50,354.90 L1205.00,354.90 L1205.50,354.90 L1206.00,354.90 L1206.50,354.90 L1207.00,354.90 L1207.50,354.90 L1208.00,354.90 L1208.30,354.90 L1208.50,354.90 L1209.00,354.90 L1209.50,354.90 L1210.00,354.90 L1210.50,354.90 L1211.00,354.90 L1211.50,354.90 L1212.00,354.90 L1212.50,354.90 L1213.00,354.90 L1213.50,354.90 L1214.00,354.90 L1214.50,354.90 L1215.00,354.90 L1215.50,354.90 L1216.00,354.90 L1216.50,354.90 L1217.00,354.90 L1217.50,354.90 L1218.00,354.90 L1218.50,354.90 L1219.00,354.90 L1219.50,354.90 L1220.00,354.90 L1220.50,354.90 L1221.00,354.90 L1221.50,354.90 L1222.00,354.90 L1222.50,352.43 L1223.00,348.69 L1223.20,348.60 L1223.50,348.90 L1224.00,354.29 L1224.50,354.90 L1225.00,354.90 L1225.50,354.90 L1226.00,354.90 L1226.50,354.90 L1227.00,354.90 L1227.50,354.90 L1228.00,354.90 L1228.50,354.90 L1229.00,354.90 L1229.50,354.90 L1230.00,354.90 L1230.50,354.90 L1231.00,354.90 L1231.50,354.90 L1232.00,354.90 L1232.50,354.90 L1233.00,354.90 L1233.50,354.90 L1234.00,354.90 L1234.50,354.90 L1235.00,354.90 L1235.50,354.90 L1236.00,354.90 L1236.50,354.90 L1237.00,354.90 L1237.50,354.90 L1238.00,354.90 L1238.50,354.90 L1239.00,342.31 L1239.50,338.39 L1239.70,338.30 L1240.00,338.62 L1240.50,344.25 L1241.00,354.90 L1241.50,354.90 L1242.00,354.90 L1242.50,354.90 L1243.00,354.90 L1243.50,354.90 L1244.00,354.90 L1244.50,354.90 L1245.00,354.90 L1245.50,354.90 L1246.00,354.90 L1246.50,354.90 L1247.00,354.90 L1247.50,354.90 L1248.00,354.90 L1248.50,354.90 L1249.00,354.90 L1249.50,354.90 L1250.00,354.90 L1250.50,354.90 L1251.00,354.90 L1251.50,354.90 L1252.00,354.90 L1252.50,354.90 L1253.00,354.90 L1253.50,338.07 L1254.00,324.53 L1254.50,321.81 L1254.60,321.80 L1255.00,322.61 L1255.50,330.86 L1256.00,354.03 L1256.50,393.84 L1257.00,443.21 L1257.50,489.06 L1258.00,520.87 L1258.50,529.68 L1259.00,529.08 L1259.50,524.70 L1260.00,354.90 L1260.50,354.90 L1261.00,354.90 L1261.50,354.90 L1262.00,354.90 L1262.50,354.90 L1263.00,354.90 L1263.50,354.90 L1264.00,354.90 L1264.50,354.90 L1265.00,354.90 L1265.50,354.90 L1266.00,354.90 L1266.50,354.90 L1267.00,354.90 L1267.50,354.90 L1268.00,354.90 L1268.50,354.90 L1269.00,354.90 L1269.50,354.90 L1270.00,353.30 L1270.50,340.81 L1271.00,338.31 L1271.10,338.30 L1271.50,339.05 L1272.00,346.65 L1272.50,354.90 L1273.00,354.90 L1273.50,354.90 L1274.00,354.90 L1274.50,354.90 L1275.00,354.90 L1275.50,354.90 L1276.00,354.90 L1276.50,354.90 L1277.00,354.90 L1277.50,354.90 L1278.00,354.90 L1278.50,354.90 L1279.00,354.90 L1279.50,354.90 L1280.00,354.90 L1280.50,354.90 L1281.00,354.90 L1281.50,354.90 L1282.00,354.90 L1282.50,354.90 L1283.00,354.90 L1283.50,354.90 L1284.00,354.90 L1284.50,354.90 L1285.00,354.90 L1285.50,347.72 L1286.00,345.31 L1286.10,345.30 L1286.50,346.02 L1287.00,353.33 L1287.50,354.90 L1288.00,354.90 L1288.50,354.90 L1289.00,354.90 L1289.50,354.90 L1290.00,354.90 L1290.50,354.90 L1291.00,354.90 L1291.50,354.90 L1292.00,354.90 L1292.50,354.90 L1293.00,354.90 L1293.50,354.90 L1294.00,354.90 L1294.50,354.90 L1295.00,354.90 L1295.50,354.90 L1296.00,354.90 L1296.50,354.90 L1297.00,354.90 L1297.50,354.90 L1298.00,354.90 L1298.50,354.90 L1299.00,354.90 L1299.50,354.90 L1300.00,354.90 L1300.50,354.90 L1301.00,354.90 L1301.50,347.35 L1302.00,339.84 L1302.40,339.10 L1302.50,339.11 L1303.00,341.58 L1303.50,353.90 L1304.00,354.90 L1304.50,354.90 L1305.00,354.90 L1305.50,354.90 L1306.00,354.90 L1306.50,354.90 L1307.00,354.90 L1307.50,354.90 L1308.00,354.90 L1308.50,354.90 L1309.00,354.90 L1309.50,354.90 L1310.00,354.90 L1310.50,354.90 L1311.00,354.90 L1311.50,354.90 L1312.00,354.90 L1312.50,354.90 L1313.00,354.90 L1313.50,354.90 L1314.00,354.90 L1314.50,354.90 L1315.00,354.90 L1315.50,354.90 L1316.00,354.90 L1316.50,354.90 L1317.00,354.90 L1317.50,354.90 L1318.00,354.90 L1318.50,354.90 L1319.00,354.90 L1319.50,354.90 L1320.00,354.90 L1320.50,354.90 L1321.00,354.90 L1321.50,354.90 L1322.00,354.90 L1322.50,354.90 L1323.00,354.90 L1323.50,354.90 L1324.00,354.90 L1324.50,354.90 L1325.00,354.90 L1325.50,354.90 L1326.00,354.90 L1326.50,354.90 L1327.00,354.90 L1327.50,354.90 L1328.00,354.90 L1328.50,354.90 L1329.00,354.90 L1329.50,354.90 L1330.00,354.90 L1330.50,354.90 L1331.00,354.90 L1331.50,354.90 L1332.00,354.90 L1332.50,342.58 L1333.00,334.95 L1333.40,334.20 L1333.50,334.21 L1334.00,336.72 L1334.50,349.23 L1335.00,354.90 L1335.50,354.90 L1336.00,354.90 L1336.50,354.90 L1337.00,354.90 L1337.50,354.90 L1338.00,354.90 L1338.50,354.90 L1339.00,354.90 L1339.50,354.90 L1340.00,354.90 L1340.50,354.90 L1341.00,354.90 L1341.50,354.90 L1342.00,354.90 L1342.50,354.90 L1343.00,354.90 L1343.50,354.90 L1344.00,354.90 L1344.50,354.90 L1345.00,354.90 L1345.50,354.90 L1346.00,354.90 L1346.50,354.90 L1347.00,354.90 L1347.50,354.90 L1348.00,354.90 L1348.50,354.90 L1349.00,354.90 L1349.30,354.90 L1349.50,354.90 L1350.00,354.90 L1350.50,354.90 L1351.00,354.90 L1351.50,354.90 L1352.00,354.90 L1352.50,354.90 L1353.00,354.90 L1353.50,354.90 L1354.00,354.90 L1354.50,354.90 L1355.00,354.90 L1355.50,354.90 L1356.00,354.90 L1356.50,354.90 L1357.00,354.90 L1357.50,354.90 L1358.00,354.90 L1358.50,354.90 L1359.00,354.90 L1359.50,354.90 L1360.00,354.90 L1360.50,354.90 L1361.00,354.90 L1361.50,354.90 L1362.00,354.90 L1362.50,354.90 L1363.00,354.90 L1363.50,333.77 L1364.00,320.31 L1364.50,317.61 L1364.60,317.60 L1365.00,318.41 L1365.50,326.60 L1366.00,349.63 L1366.50,354.90 L1367.00,354.90 L1367.50,354.90 L1368.00,354.90 L1368.50,354.90 L1369.00,354.90 L1369.50,354.90 L1370.00,354.90 L1370.50,354.90 L1371.00,354.90 L1371.50,354.90 L1372.00,354.90 L1372.50,354.90 L1373.00,354.90 L1373.50,354.90 L1374.00,354.90 L1374.50,354.90 L1375.00,354.90 L1375.50,354.90 L1376.00,354.90 L1376.50,354.90 L1377.00,354.90 L1377.50,354.90 L1378.00,354.90 L1378.50,354.90 L1379.00,339.27 L1379.50,319.19 L1380.00,313.05 L1380.30,312.70 L1380.50,312.80 L1381.00,317.07 L1381.50,333.86 L1382.00,354.90 L1382.50,354.90 L1383.00,354.90 L1383.50,354.90 L1384.00,354.90 L1384.50,354.90 L1385.00,354.90 L1385.50,354.90 L1386.00,354.90 L1386.50,354.90 L1387.00,354.90 L1387.50,354.90 L1388.00,354.90 L1388.50,354.90 L1389.00,354.90 L1389.50,354.90 L1390.00,354.90 L1390.50,354.90 L1391.00,354.90 L1391.50,354.90 L1392.00,354.90 L1392.50,354.90 L1393.00,354.90 L1393.50,354.90 L1394.00,354.90 L1394.50,347.88 L1395.00,335.41 L1395.50,332.91 L1395.60,332.90 L1396.00,333.65 L1396.50,341.24 L1397.00,354.90 L1397.50,354.90 L1398.00,354.90 L1398.50,354.90 L1399.00,354.90 L1399.50,354.90 L1400.00,354.90 L1400.50,354.90 L1401.00,354.90 L1401.50,354.90 L1402.00,354.90 L1402.50,354.90 L1403.00,354.90 L1403.50,354.90 L1404.00,354.90 L1404.50,354.90 L1405.00,354.90 L1405.50,354.90 L1406.00,354.90 L1406.50,354.90 L1407.00,354.90 L1407.50,354.90 L1408.00,354.90 L1408.50,354.90 L1409.00,354.90 L1409.50,354.90 L1410.00,354.90 L1410.50,354.90 L1411.00,340.24 L1411.50,327.30 L1412.00,324.71 L1412.10,324.70 L1412.50,325.47 L1413.00,333.35 L1413.50,354.90 L1414.00,354.90 L1414.50,354.90 L1415.00,354.90 L1415.50,354.90 L1416.00,354.90 L1416.50,354.90 L1417.00,354.90 L1417.50,354.90 L1418.00,354.90 L1418.50,354.90 L1419.00,354.90 L1419.50,354.90 L1420.00,354.90 L1420.50,354.90 L1421.00,354.90 L1421.50,354.90 L1422.00,354.90 L1422.50,354.90 L1423.00,354.90 L1423.50,354.90 L1424.00,354.90 L1424.50,354.90 L1425.00,354.90 L1425.50,354.90 L1426.00,354.90 L1426.50,354.90 L1427.00,354.90 L1427.50,328.71 L1428.00,315.05 L1428.50,312.31 L1428.60,312.30 L1429.00,313.12 L1429.50,321.44 L1430.00,344.81 L1430.50,354.90 L1431.00,354.90 L1431.50,354.90 L1432.00,354.90 L1432.50,354.90 L1433.00,354.90 L1433.50,354.90 L1434.00,354.90 L1434.50,354.90 L1435.00,354.90 L1435.50,354.90 L1436.00,354.90 L1436.50,354.90 L1437.00,354.90 L1437.50,354.90 L1438.00,354.90 L1438.50,354.90 L1439.00,354.90 L1439.50,354.90 L1440.00,354.90 L1440.50,354.90 L1441.00,354.90 L1441.50,354.90 L1442.00,354.90 L1442.50,352.88 L1443.00,330.53 L1443.50,322.58 L1443.90,321.80 L1444.00,321.81 L1444.50,324.43 L1445.00,337.47 L1445.50,354.90 L1446.00,354.90 L1446.50,354.90 L1447.00,354.90 L1447.50,354.90 L1448.00,354.90 L1448.50,354.90 L1449.00,354.90 L1449.50,354.90 L1450.00,354.90 L1450.50,354.90 L1451.00,354.90 L1451.50,354.90 L1452.00,354.90 L1452.50,354.90 L1453.00,354.90 L1453.50,354.90 L1454.00,354.90 L1454.50,354.90 L1455.00,354.90 L1455.50,354.90 L1456.00,354.90 L1456.50,354.90 L1457.00,354.90 L1457.50,354.90 L1458.00,354.90 L1458.50,354.90 L1459.00,347.63 L1459.50,345.31 L1459.60,345.30 L1460.00,345.99 L1460.50,353.06 L1461.00,354.90 L1461.50,354.90 L1462.00,354.90 L1462.50,354.90 L1463.00,354.90 L1463.50,354.90 L1464.00,354.90 L1464.50,354.90 L1465.00,354.90 L1465.50,354.90 L1466.00,354.90 L1466.50,354.90 L1467.00,354.90 L1467.50,354.90 L1468.00,354.90 L1468.50,354.90 L1469.00,354.90 L1469.50,354.90 L1470.00,354.90 L1470.50,354.90 L1471.00,354.90 L1471.50,354.90 L1472.00,354.90 L1472.50,354.90 L1473.00,354.90 L1473.50,348.71 L1474.00,329.89 L1474.50,324.13 L1474.80,323.80 L1475.00,323.90 L1475.50,327.90 L1476.00,343.65 L1476.50,354.90 L1477.00,354.90 L1477.50,354.90 L1478.00,354.90 L1478.50,354.90 L1479.00,354.90 L1479.50,354.90 L1480.00,354.90 L1480.50,354.90 L1481.00,354.90 L1481.50,354.90 L1482.00,354.90 L1482.50,354.90 L1483.00,354.90 L1483.50,354.90 L1484.00,354.90 L1484.50,354.90 L1485.00,354.90 L1485.50,354.90 L1486.00,354.90 L1486.50,354.90 L1487.00,354.90 L1487.50,354.90 L1488.00,354.90 L1488.50,354.90 L1489.00,354.90 L1489.50,354.90 L1490.00,354.90 L1490.50,354.90 L1491.00,354.90 L1491.50,354.90 L1492.00,354.90 L1492.50,354.90 L1493.00,354.90 L1493.50,354.90 L1494.00,354.90 L1494.50,354.90 L1495.00,354.90 L1495.50,354.90 L1496.00,354.90 L1496.50,354.90 L1497.00,354.90 L1497.50,354.90 L1498.00,354.90 L1498.50,354.90 L1499.00,354.90 L1499.50,354.90 L1500.00,354.90 L1500.50,354.90 L1501.00,354.90 L1501.50,354.90 L1502.00,354.90 L1502.50,354.90 L1503.00,354.90 L1503.50,354.90 L1504.00,338.21 L1504.50,328.18 L1505.00,326.70 L1505.50,328.17 L1506.00,338.21 L1506.50,354.90 L1507.00,354.90 L1507.50,354.90 L1508.00,354.90 L1508.50,354.90 L1509.00,354.90 L1509.50,354.90 L1510.00,354.90 L1510.50,354.90 L1511.00,354.90 L1511.50,354.90 L1512.00,354.90 L1512.50,354.90 L1513.00,354.90 L1513.50,354.90 L1514.00,354.90 L1514.50,354.90 L1515.00,354.90 L1515.50,354.90 L1516.00,354.90 L1516.50,354.90 L1517.00,354.90 L1517.50,354.90 L1518.00,354.90 L1518.50,354.90 L1519.00,354.90 L1519.50,354.90 L1520.00,354.90 L1520.50,354.90 L1521.00,350.71 L1521.50,349.40 L1522.00,350.71 L1522.50,354.90 L1523.00,354.90 L1523.50,354.90 L1524.00,354.90 L1524.50,354.90 L1525.00,354.90 L1525.50,354.90 L1526.00,354.90 L1526.50,354.90 L1527.00,354.90 L1527.50,354.90 L1528.00,354.90 L1528.50,354.90 L1529.00,354.90 L1529.50,354.90 L1530.00,354.90 L1530.50,354.90 L1531.00,354.90 L1531.50,354.90 L1532.00,354.90 L1532.50,354.90 L1533.00,354.90 L1533.50,354.90 L1534.00,354.90 L1534.50,354.90 L1535.00,354.90 L1535.50,354.90 L1536.00,354.90 L1536.50,350.12 L1537.00,346.59 L1537.20,346.50 L1537.50,346.79 L1538.00,351.88 L1538.50,354.90 L1539.00,354.90 L1539.50,354.90 L1540.00,354.90 L1540.50,354.90 L1541.00,354.90 L1541.50,354.90 L1542.00,354.90 L1542.50,354.90 L1543.00,354.90 L1543.50,354.90 L1544.00,354.90 L1544.50,354.90 L1545.00,354.90 L1545.50,354.90 L1546.00,354.90 L1546.50,354.90 L1547.00,354.90 L1547.50,354.90 L1548.00,354.90 L1548.50,354.90 L1549.00,354.90 L1549.50,354.90 L1550.00,354.90 L1550.50,354.90 L1551.00,348.79 L1551.50,326.37 L1552.00,318.38 L1552.40,317.60 L1552.50,317.61 L1553.00,320.23 L1553.50,333.33 L1554.00,354.90 L1554.50,354.90 L1555.00,354.90 L1555.50,354.90 L1556.00,354.90 L1556.50,354.90 L1557.00,354.90 L1557.50,354.90 L1558.00,354.90 L1558.50,354.90 L1559.00,354.90 L1559.50,354.90 L1560.00,354.90 L1560.50,354.90 L1561.00,354.90 L1561.50,354.90 L1562.00,354.90 L1562.50,354.90 L1563.00,354.90 L1563.50,354.90 L1564.00,354.90 L1564.50,354.90 L1565.00,354.90 L1565.50,354.90 L1566.00,354.90 L1566.50,354.90 L1567.00,354.90 L1567.50,354.90 L1568.00,354.90 L1568.50,350.70 L1569.00,349.40 L1569.50,350.70 L1570.00,354.90 L1570.50,354.90 L1571.00,354.90 L1571.50,354.90 L1572.00,354.90 L1572.50,354.90 L1573.00,354.90 L1573.50,354.90 L1574.00,354.90 L1574.50,354.90 L1575.00,354.90 L1575.50,354.90 L1576.00,354.90 L1576.50,354.90 L1577.00,354.90 L1577.50,354.90 L1578.00,354.90 L1578.50,354.90 L1579.00,354.90 L1579.50,354.90 L1580.00,354.90 L1580.50,354.90 L1581.00,354.90 L1581.50,354.90 L1582.00,354.90 L1582.50,354.90 L1583.00,354.90 L1583.50,354.90 L1584.00,354.90 L1584.20,354.90 L1584.50,354.90 L1585.00,354.90 L1585.50,354.90 L1586.00,354.90 L1586.50,354.90 L1587.00,354.90 L1587.50,354.90 L1588.00,354.90 L1588.50,354.90 L1589.00,354.90 L1589.50,354.90 L1590.00,354.90 L1590.50,354.90 L1591.00,354.90 L1591.50,354.90 L1592.00,354.90 L1592.50,354.90 L1593.00,354.90 L1593.50,354.90 L1594.00,354.90 L1594.50,354.90 L1595.00,354.90 L1595.50,354.90 L1596.00,354.90 L1596.50,354.90 L1597.00,354.90 L1597.50,354.90 L1598.00,354.90 L1598.50,339.08 L1599.00,315.66 L1599.50,307.32 L1599.90,306.50 L1600.00,306.51 L1600.50,309.25 L1601.00,322.93 L1601.50,353.33 L1602.00,354.90 L1602.50,354.90 L1603.00,354.90 L1603.50,354.90 L1604.00,354.90 L1604.50,354.90 L1605.00,354.90 L1605.50,354.90 L1606.00,354.90 L1606.50,354.90 L1607.00,354.90 L1607.50,354.90 L1608.00,354.90 L1608.50,354.90 L1609.00,354.90 L1609.50,354.90 L1610.00,354.90 L1610.50,354.90 L1611.00,354.90 L1611.50,354.90 L1612.00,354.90 L1612.50,354.90 L1613.00,354.90 L1613.50,354.90 L1614.00,338.80 L1614.50,323.01 L1615.00,319.00 L1615.20,318.90 L1615.50,319.23 L1616.00,325.00 L1616.50,343.86 L1617.00,354.90 L1617.50,354.90 L1618.00,354.90 L1618.50,354.90 L1619.00,354.90 L1619.50,354.90 L1620.00,354.90 L1620.50,354.90 L1621.00,354.90 L1621.50,354.90 L1622.00,354.90 L1622.50,354.90 L1623.00,354.90 L1623.50,354.90 L1624.00,354.90 L1624.50,354.90 L1625.00,354.90 L1625.50,354.90 L1626.00,354.90 L1626.50,354.90 L1627.00,354.90 L1627.50,354.90 L1628.00,354.90 L1628.50,354.90 L1629.00,354.90 L1629.50,354.90 L1630.00,352.84 L1630.50,345.97 L1630.90,345.30 L1631.00,345.31 L1631.50,347.57 L1632.00,354.90 L1632.50,354.90 L1633.00,354.90 L1633.50,354.90 L1634.00,354.90 L1634.50,354.90 L1635.00,354.90 L1635.50,354.90 L1636.00,354.90 L1636.50,354.90 L1637.00,354.90 L1637.50,354.90 L1638.00,354.90 L1638.50,354.90 L1639.00,354.90 L1639.50,354.90 L1640.00,354.90 L1640.50,354.90 L1641.00,354.90 L1641.50,354.90 L1642.00,354.90 L1642.50,354.90 L1643.00,354.90 L1643.50,354.90 L1644.00,354.90 L1644.50,354.90 L1645.00,354.90 L1645.50,354.90 L1646.00,341.34 L1646.50,318.38 L1647.00,310.20 L1647.40,309.40 L1647.50,309.41 L1648.00,312.10 L1648.50,325.51 L1649.00,354.90 L1649.50,354.90 L1650.00,354.90 L1650.50,354.90 L1651.00,354.90 L1651.50,354.90 L1652.00,354.90 L1652.50,354.90 L1653.00,354.90 L1653.50,354.90 L1654.00,354.90 L1654.50,354.90 L1655.00,354.90 L1655.50,354.90 L1656.00,354.90 L1656.50,354.90 L1657.00,354.90 L1657.50,354.90 L1658.00,354.90" stroke="#85bd72" stroke-width="2" stroke-dasharray="2 8" stroke-dashoffset="7.6" fill="none"/>
</g>
<g clip-path="url(#cpm)">
<path d="M1818.00,486.60 L1818.50,486.60 L1819.00,486.60 L1819.50,486.60 L1820.00,486.60 L1820.50,486.60 L1821.00,486.60 L1821.50,486.60 L1822.00,486.60 L1822.50,486.60 L1823.00,486.60 L1823.50,486.60 L1824.00,486.60 L1824.50,486.60 L1825.00,486.60 L1825.50,486.60 L1826.00,486.60 L1826.50,486.60 L1826.70,486.60 L1827.00,486.60 L1827.50,486.60 L1828.00,486.60 L1828.50,486.60 L1829.00,486.60 L1829.50,486.60 L1830.00,486.60 L1830.50,486.60 L1831.00,486.60 L1831.50,486.60 L1832.00,486.60 L1832.50,486.60 L1833.00,486.60 L1833.50,486.60 L1834.00,486.60 L1834.50,486.60 L1835.00,486.60 L1835.50,486.60 L1836.00,486.60 L1836.50,486.60 L1837.00,486.60 L1837.50,486.60 L1838.00,486.60 L1838.50,486.60 L1839.00,486.60 L1839.50,486.60 L1840.00,486.60 L1840.50,486.60 L1841.00,486.60 L1841.50,486.60 L1842.00,486.60 L1842.50,486.60 L1843.00,486.60 L1843.40,486.60 L1843.50,486.60 L1844.00,486.60 L1844.50,486.60 L1845.00,486.60 L1845.50,486.60 L1846.00,486.60 L1846.50,486.60 L1847.00,486.60 L1847.50,486.60 L1848.00,486.60 L1848.50,486.60 L1849.00,486.60 L1849.50,486.60 L1850.00,486.60 L1850.50,486.60 L1851.00,486.60 L1851.50,486.60 L1852.00,486.60 L1852.50,486.60 L1853.00,486.60 L1853.50,486.60 L1854.00,486.60 L1854.50,486.60 L1855.00,486.60 L1855.50,486.60 L1856.00,486.60 L1856.50,486.60 L1857.00,486.60 L1857.50,486.60 L1858.00,481.24 L1858.50,460.96 L1858.80,448.80 L1859.00,456.91 L1859.50,477.18 L1860.00,486.60 L1860.50,486.60 L1861.00,486.60 L1861.50,486.60 L1862.00,486.60 L1862.50,486.60 L1863.00,486.60 L1863.50,486.60 L1864.00,531.19 L1864.50,532.64 L1865.00,535.58 L1865.50,536.76 L1866.00,538.22 L1866.50,537.25 L1867.00,537.71 L1867.50,486.60 L1868.00,486.60 L1868.50,486.60 L1869.00,486.60 L1869.50,486.60 L1870.00,486.60 L1870.50,486.60 L1871.00,486.60 L1871.50,486.60 L1872.00,486.60 L1872.50,486.60 L1873.00,486.60 L1873.50,486.60 L1874.00,486.60 L1874.50,486.60 L1874.90,484.80 L1875.00,486.60 L1875.50,486.60 L1876.00,486.60 L1876.50,486.60 L1877.00,486.60 L1877.50,486.60 L1878.00,486.60 L1878.50,486.60 L1879.00,486.60 L1879.50,486.60 L1880.00,486.60 L1880.50,486.60 L1881.00,486.60 L1881.50,486.60 L1882.00,486.60 L1882.50,486.60 L1883.00,486.60 L1883.50,486.60 L1884.00,486.60 L1884.50,486.60 L1885.00,486.60 L1885.50,486.60 L1886.00,486.60 L1886.50,486.60 L1887.00,486.60 L1887.50,486.60 L1888.00,486.60 L1888.50,486.60 L1889.00,486.60 L1889.50,486.60 L1890.00,482.36 L1890.50,459.18 L1891.00,436.00 L1891.50,459.18 L1892.00,482.36 L1892.50,486.60 L1893.00,486.60 L1893.50,486.60 L1894.00,486.60 L1894.50,486.60 L1895.00,486.60 L1895.50,486.60 L1896.00,486.60 L1896.50,486.60 L1897.00,486.60 L1897.50,486.60 L1898.00,486.60 L1898.50,486.60 L1899.00,486.60 L1899.50,486.60 L1900.00,486.60 L1900.50,486.60 L1901.00,486.60 L1901.50,486.60 L1902.00,486.60 L1902.50,486.60 L1903.00,486.60 L1903.50,486.60 L1904.00,486.60 L1904.50,486.60 L1905.00,486.60 L1905.50,486.60 L1906.00,467.49 L1906.50,442.31 L1906.80,427.20 L1907.00,437.27 L1907.50,462.45 L1908.00,486.60 L1908.50,486.60 L1909.00,486.60 L1909.50,486.60 L1910.00,486.60 L1910.50,486.60 L1911.00,486.60 L1911.50,486.60 L1912.00,486.60 L1912.50,486.60 L1913.00,486.60 L1913.50,486.60 L1914.00,486.60 L1914.50,486.60 L1915.00,486.60 L1915.50,486.60 L1916.00,486.60 L1916.50,486.60 L1917.00,486.60 L1917.50,486.60 L1918.00,486.60 L1918.50,486.60 L1919.00,486.60 L1919.50,486.60 L1920.00,486.60 L1920.50,486.60 L1921.00,486.60 L1921.50,486.60 L1922.00,473.84 L1922.50,452.45 L1922.70,443.90 L1923.00,456.73 L1923.50,478.12 L1924.00,486.60 L1924.50,486.60 L1925.00,486.60 L1925.50,486.60 L1926.00,486.60 L1926.50,486.60 L1927.00,486.60 L1927.50,486.60 L1928.00,486.60 L1928.50,486.60 L1929.00,486.60 L1929.50,486.60 L1930.00,486.60 L1930.50,486.60 L1931.00,486.60 L1931.50,486.60 L1932.00,486.60 L1932.50,486.60 L1933.00,486.60 L1933.50,486.60 L1934.00,486.60 L1934.50,486.60 L1935.00,486.60 L1935.50,486.60 L1936.00,486.60 L1936.50,486.60 L1937.00,486.60 L1937.50,486.60 L1938.00,465.96 L1938.50,440.24 L1938.80,424.80 L1939.00,435.09 L1939.50,460.82 L1940.00,486.55 L1940.50,486.60 L1941.00,486.60 L1941.50,486.60 L1942.00,486.60 L1942.50,486.60 L1943.00,486.60 L1943.50,486.60 L1944.00,486.60 L1944.50,486.60 L1945.00,486.60 L1945.50,486.60 L1946.00,486.60 L1946.50,486.60 L1947.00,486.60 L1947.50,486.60 L1948.00,486.60 L1948.50,486.60 L1949.00,486.60 L1949.50,486.60 L1950.00,486.60 L1950.50,486.60 L1951.00,486.60 L1951.50,486.60 L1952.00,486.60 L1952.50,486.60 L1953.00,486.60 L1953.50,486.60 L1954.00,483.22 L1954.50,462.15 L1954.90,445.30 L1955.00,449.51 L1955.50,470.58 L1956.00,486.60 L1956.50,486.60 L1957.00,486.60 L1957.50,486.60 L1958.00,486.60 L1958.50,486.60 L1959.00,486.60 L1959.50,486.60 L1960.00,486.60 L1960.50,486.60 L1961.00,486.60 L1961.50,486.60 L1962.00,486.60 L1962.50,486.60 L1963.00,486.60 L1963.50,486.60 L1964.00,486.60 L1964.50,486.60 L1965.00,486.60 L1965.50,486.60 L1966.00,486.60 L1966.50,486.60 L1967.00,486.60 L1967.50,486.60 L1968.00,486.60 L1968.50,486.60 L1969.00,486.60 L1969.50,476.04 L1970.00,456.67 L1970.10,452.80 L1970.50,468.29 L1971.00,486.60 L1971.50,486.60 L1972.00,486.60 L1972.50,486.60 L1973.00,486.60 L1973.50,486.60 L1974.00,486.60 L1974.50,486.60 L1975.00,486.60 L1975.50,486.60 L1976.00,486.60 L1976.50,486.60 L1977.00,486.60 L1977.50,486.60 L1978.00,486.60 L1978.50,486.60 L1979.00,486.60 L1979.50,486.60 L1980.00,486.60 L1980.50,486.60 L1981.00,486.60 L1981.50,486.60 L1982.00,486.60 L1982.50,486.60 L1983.00,486.60 L1983.50,486.60 L1984.00,486.60 L1984.50,486.60 L1985.00,486.60 L1985.50,474.10 L1986.00,455.30 L1986.50,474.10 L1987.00,486.60 L1987.50,486.60 L1988.00,486.60 L1988.50,486.60 L1989.00,486.60 L1989.50,486.60 L1990.00,486.60 L1990.50,486.60 L1991.00,486.60 L1991.50,486.60 L1992.00,486.60 L1992.50,486.60 L1993.00,486.60 L1993.50,486.60 L1994.00,486.60 L1994.50,486.60 L1995.00,486.60 L1995.50,486.60 L1996.00,486.60 L1996.50,486.60 L1997.00,486.60 L1997.50,486.60 L1998.00,486.60 L1998.50,486.60 L1999.00,486.60 L1999.50,486.60 L2000.00,486.60 L2000.50,486.60 L2001.00,486.60 L2001.50,486.60 L2002.00,481.22 L2002.50,462.28 L2002.70,454.70 L2003.00,466.07 L2003.50,485.01 L2004.00,486.60 L2004.50,486.60 L2005.00,486.60 L2005.50,486.60 L2006.00,486.60 L2006.50,486.60 L2007.00,486.60 L2007.50,486.60 L2008.00,486.60 L2008.50,486.60 L2009.00,486.60 L2009.50,486.60 L2010.00,486.60 L2010.50,486.60 L2011.00,486.60 L2011.50,537.55 L2012.00,535.85 L2012.50,533.90 L2013.00,530.76 L2013.50,527.66 L2014.00,525.39 L2014.50,523.28 L2015.00,486.60 L2015.50,486.60 L2016.00,486.60 L2016.50,486.60 L2017.00,486.60 L2017.50,486.60 L2018.00,481.10 L2018.50,460.67 L2018.80,448.40 L2019.00,456.58 L2019.50,477.03 L2020.00,486.60 L2020.50,486.60 L2021.00,486.60 L2021.50,486.60 L2022.00,486.60 L2022.50,486.60 L2023.00,486.60 L2023.50,486.60 L2024.00,486.60 L2024.50,486.60 L2025.00,486.60 L2025.50,486.60 L2026.00,486.60 L2026.50,486.60 L2027.00,486.60 L2027.50,486.60 L2028.00,486.60 L2028.50,486.60 L2029.00,486.60 L2029.50,486.60 L2030.00,486.60 L2030.50,486.60 L2031.00,486.60 L2031.50,486.60 L2032.00,486.60 L2032.50,486.60 L2033.00,486.60 L2033.50,486.60 L2034.00,486.60 L2034.50,486.53 L2034.80,478.30 L2035.00,483.79 L2035.50,486.60 L2036.00,486.60 L2036.50,486.60 L2037.00,486.60 L2037.50,486.60 L2038.00,486.60 L2038.50,486.60 L2039.00,486.60 L2039.50,486.60 L2040.00,486.60 L2040.50,486.60 L2041.00,486.60 L2041.50,486.60 L2042.00,486.60 L2042.50,486.60 L2043.00,486.60 L2043.50,486.60 L2044.00,486.60 L2044.50,486.60 L2045.00,486.60 L2045.50,486.60 L2046.00,486.60 L2046.50,486.60 L2047.00,486.60 L2047.50,486.60 L2048.00,486.60 L2048.50,486.60 L2049.00,486.60 L2049.50,486.60 L2050.00,484.20 L2050.50,463.14 L2050.90,446.30 L2051.00,450.51 L2051.50,471.57 L2052.00,486.60 L2052.50,486.60 L2053.00,486.60 L2053.50,486.60 L2054.00,486.60 L2054.50,486.60 L2055.00,486.60 L2055.50,486.60 L2056.00,486.60 L2056.50,486.60 L2057.00,486.60 L2057.50,486.60 L2058.00,486.60 L2058.50,486.60 L2059.00,486.60 L2059.50,486.60 L2060.00,486.60 L2060.50,486.60 L2061.00,486.60 L2061.50,486.60 L2062.00,486.60 L2062.50,486.60 L2063.00,486.60 L2063.50,486.60 L2064.00,486.60 L2064.50,486.60 L2065.00,486.60 L2065.50,486.60 L2066.00,486.60 L2066.50,464.80 L2067.00,442.90 L2067.50,464.80 L2068.00,486.60 L2068.50,486.60 L2069.00,486.60 L2069.50,486.60 L2070.00,486.60 L2070.50,486.60 L2071.00,486.60 L2071.50,486.60 L2072.00,486.60 L2072.50,486.60 L2073.00,486.60 L2073.50,486.60 L2074.00,486.60 L2074.50,486.60 L2075.00,486.60 L2075.50,486.60 L2076.00,486.60 L2076.50,486.60 L2077.00,486.60 L2077.50,486.60 L2078.00,486.60 L2078.50,486.60 L2079.00,486.60 L2079.50,486.60 L2080.00,486.60 L2080.50,486.60 L2081.00,486.60 L2081.50,486.60 L2082.00,486.60 L2082.50,473.21 L2083.00,453.70 L2083.50,473.21 L2084.00,486.60 L2084.50,486.60 L2085.00,486.60 L2085.50,486.60 L2086.00,486.60 L2086.50,486.60 L2087.00,486.60 L2087.50,486.60 L2088.00,486.60 L2088.50,486.60 L2089.00,486.60 L2089.50,486.60 L2090.00,486.60 L2090.50,486.60 L2091.00,486.60 L2091.50,486.60 L2092.00,486.60 L2092.50,486.60 L2093.00,486.60 L2093.50,486.60 L2094.00,486.60 L2094.50,486.60 L2095.00,486.60 L2095.50,486.60 L2096.00,486.60 L2096.50,486.60 L2097.00,486.60 L2097.50,486.60 L2098.00,486.60 L2098.50,472.69 L2099.00,451.70 L2099.10,447.50 L2099.50,464.29 L2100.00,485.29 L2100.50,486.60 L2101.00,486.60 L2101.50,486.60 L2102.00,486.60 L2102.50,486.60 L2103.00,486.60 L2103.50,486.60 L2104.00,486.60 L2104.50,486.60 L2105.00,486.60 L2105.50,486.60 L2106.00,486.60 L2106.50,486.60 L2107.00,486.60 L2107.50,486.60 L2108.00,486.60 L2108.50,486.60 L2109.00,486.60 L2109.50,486.60 L2110.00,486.60 L2110.50,486.60 L2111.00,486.60 L2111.50,486.60 L2112.00,486.60 L2112.50,486.60 L2113.00,486.60 L2113.50,486.60 L2114.00,478.90 L2114.50,457.02 L2114.80,443.90 L2115.00,452.65 L2115.50,474.53 L2116.00,486.60 L2116.50,486.60 L2117.00,486.60 L2117.50,486.60 L2118.00,486.60 L2118.50,486.60 L2119.00,486.60 L2119.50,486.60 L2120.00,486.60 L2120.50,486.60 L2121.00,486.60 L2121.50,486.60 L2122.00,486.60 L2122.50,486.60 L2123.00,486.60 L2123.50,486.60 L2124.00,486.60 L2124.50,486.60 L2125.00,486.60 L2125.50,486.60 L2126.00,486.60 L2126.50,486.60 L2127.00,486.60 L2127.50,486.60 L2128.00,486.60 L2128.50,486.60 L2129.00,486.60 L2129.50,484.70 L2130.00,466.13 L2130.20,458.70 L2130.50,469.85 L2131.00,486.60 L2131.50,486.60 L2132.00,486.60 L2132.50,486.60 L2133.00,486.60 L2133.50,486.60 L2134.00,486.60 L2134.50,486.60 L2135.00,486.60 L2135.50,486.60 L2136.00,486.60 L2136.50,486.60 L2137.00,486.60 L2137.50,486.60 L2138.00,486.60 L2138.50,486.60 L2139.00,486.60 L2139.50,486.60 L2140.00,486.60 L2140.50,486.60 L2141.00,486.60 L2141.50,486.60 L2142.00,486.60 L2142.50,486.60 L2143.00,486.60 L2143.50,486.60 L2144.00,486.60 L2144.50,486.60 L2145.00,486.60 L2145.50,486.60 L2146.00,480.10 L2146.50,459.89 L2146.70,451.80 L2147.00,463.93 L2147.50,484.15 L2148.00,486.60 L2148.50,486.60 L2149.00,486.60 L2149.50,486.60 L2150.00,486.60 L2150.50,486.60 L2151.00,486.60 L2151.50,486.60 L2152.00,486.60 L2152.50,486.60 L2153.00,486.60 L2153.50,486.60 L2154.00,486.60 L2154.50,486.60 L2155.00,486.60 L2155.50,486.60 L2156.00,486.60 L2156.50,486.60 L2157.00,486.60 L2157.50,486.60 L2158.00,486.60 L2158.50,486.60 L2159.00,486.60 L2159.50,486.60 L2160.00,486.60 L2160.50,486.60 L2161.00,486.60 L2161.50,486.60 L2162.00,479.70 L2162.50,486.60 L2163.00,486.60 L2163.50,486.60 L2164.00,486.60 L2164.50,486.60 L2165.00,486.60 L2165.50,486.60 L2166.00,486.60 L2166.50,486.60 L2167.00,486.60 L2167.50,486.60 L2168.00,486.60 L2168.50,486.60 L2169.00,486.60 L2169.50,486.60 L2170.00,486.60 L2170.50,486.60 L2171.00,486.60 L2171.50,486.60 L2172.00,486.60 L2172.50,486.60 L2173.00,486.60 L2173.50,486.60 L2174.00,486.60 L2174.50,486.60 L2175.00,486.60 L2175.50,486.60 L2176.00,486.60 L2176.50,486.60 L2177.00,486.60 L2177.50,486.60 L2178.00,486.60 L2178.50,473.80 L2178.70,466.90 L2179.00,477.26 L2179.50,486.60 L2180.00,486.60 L2180.50,486.60 L2181.00,486.60 L2181.50,486.60 L2182.00,486.60 L2182.50,486.60 L2183.00,486.60 L2183.50,486.60 L2184.00,486.60 L2184.50,486.60 L2185.00,486.60 L2185.50,486.60 L2186.00,486.60 L2186.50,486.60 L2187.00,486.60 L2187.50,486.60 L2188.00,486.60 L2188.50,486.60 L2189.00,486.60 L2189.50,486.60 L2190.00,486.60 L2190.50,486.60 L2191.00,486.60 L2191.50,486.60 L2192.00,486.60 L2192.50,486.60 L2193.00,486.60 L2193.50,486.60 L2194.00,486.60 L2194.50,465.37 L2194.90,447.80 L2195.00,452.20 L2195.50,474.19 L2196.00,486.60 L2196.50,486.60 L2197.00,486.60 L2197.50,486.60 L2198.00,486.60 L2198.50,486.60 L2199.00,486.60 L2199.50,486.60 L2200.00,486.60 L2200.50,486.60 L2201.00,486.60 L2201.50,486.60 L2202.00,486.60 L2202.50,486.60 L2203.00,486.60 L2203.50,486.60 L2204.00,486.60 L2204.50,486.60 L2205.00,486.60 L2205.50,486.60 L2206.00,486.60 L2206.50,486.60 L2207.00,486.60 L2207.50,486.60 L2208.00,486.60 L2208.50,486.60 L2209.00,486.60 L2209.50,486.60 L2210.00,486.60 L2210.50,466.16 L2210.80,453.70 L2211.00,462.00 L2211.50,482.77 L2212.00,486.60 L2212.50,486.60 L2213.00,486.60 L2213.50,486.60 L2214.00,486.60 L2214.50,486.60 L2215.00,486.60 L2215.50,486.60 L2216.00,486.60 L2216.50,486.60 L2217.00,486.60 L2217.50,486.60 L2218.00,486.60 L2218.50,486.60 L2219.00,486.60 L2219.50,486.60 L2220.00,486.60 L2220.50,486.60 L2221.00,486.60 L2221.50,486.60 L2222.00,486.60 L2222.50,486.60 L2223.00,486.60 L2223.50,486.60 L2224.00,486.60 L2224.50,486.60 L2225.00,486.60 L2225.50,486.60 L2226.00,486.60 L2226.50,486.60 L2227.00,484.20 L2227.10,481.30 L2227.50,486.60 L2228.00,486.60 L2228.50,486.60 L2229.00,486.60 L2229.50,486.60 L2230.00,486.60 L2230.50,486.60 L2231.00,486.60 L2231.50,486.60 L2232.00,486.60 L2232.50,486.60 L2233.00,486.60 L2233.50,486.60 L2234.00,486.60 L2234.50,486.60 L2235.00,486.60 L2235.50,486.60 L2236.00,486.60 L2236.50,486.60 L2237.00,486.60 L2237.50,486.60 L2238.00,486.60 L2238.50,486.60 L2239.00,486.60 L2239.50,486.60 L2240.00,486.60 L2240.50,486.60 L2241.00,486.60 L2241.50,486.60 L2242.00,486.60 L2242.50,486.60 L2242.90,477.00 L2243.00,480.10 L2243.50,486.60 L2244.00,486.60 L2244.50,486.60 L2245.00,486.60 L2245.50,486.60 L2246.00,486.60 L2246.50,486.60 L2247.00,486.60 L2247.50,486.60 L2248.00,486.60 L2248.50,486.60 L2249.00,486.60 L2249.50,486.60 L2250.00,486.60 L2250.50,486.60 L2251.00,486.60 L2251.50,486.60 L2252.00,486.60 L2252.50,486.60 L2253.00,486.60 L2253.50,486.60 L2254.00,486.60 L2254.50,486.60 L2255.00,486.60 L2255.50,486.60 L2256.00,486.60 L2256.50,486.60 L2257.00,486.60 L2257.50,486.60 L2258.00,486.60 L2258.50,485.95 L2259.00,468.50 L2259.50,485.95 L2260.00,486.60 L2260.50,486.60 L2261.00,486.60 L2261.50,486.60 L2262.00,486.60 L2262.50,486.60 L2263.00,486.60 L2263.50,486.60 L2264.00,486.60 L2264.50,486.60 L2265.00,486.60 L2265.50,486.60 L2266.00,486.60 L2266.50,486.60 L2267.00,486.60 L2267.50,486.60 L2268.00,486.60 L2268.50,486.60 L2269.00,486.60 L2269.50,486.60 L2270.00,486.60 L2270.50,486.60 L2271.00,486.60 L2271.50,486.60 L2272.00,486.60 L2272.50,486.60 L2273.00,486.60 L2273.50,486.60 L2274.00,486.60 L2274.50,477.31 L2274.70,470.50 L2275.00,480.71 L2275.50,486.60 L2276.00,486.60 L2276.50,486.60 L2277.00,486.60 L2277.50,486.60 L2278.00,486.60 L2278.50,486.60 L2279.00,486.60 L2279.50,486.60 L2280.00,486.60 L2280.50,486.60 L2281.00,486.60 L2281.50,486.60 L2282.00,486.60 L2282.50,486.60 L2283.00,486.60 L2283.50,486.60 L2284.00,486.60 L2284.50,486.60 L2285.00,486.60 L2285.50,486.60 L2286.00,486.60 L2286.50,486.60 L2287.00,486.60 L2287.50,486.60 L2288.00,486.60 L2288.50,486.60 L2289.00,486.60 L2289.50,486.60 L2290.00,486.60 L2290.50,486.60 L2290.90,477.00 L2291.00,480.11 L2291.50,486.60 L2292.00,486.60 L2292.50,486.60 L2293.00,486.60 L2293.50,486.60 L2294.00,486.60 L2294.50,486.60 L2295.00,486.60 L2295.50,486.60 L2296.00,486.60 L2296.50,486.60 L2297.00,486.60 L2297.50,486.60 L2298.00,486.60 L2298.50,486.60 L2299.00,486.60 L2299.50,486.60 L2300.00,486.60 L2300.50,486.60 L2301.00,486.60 L2301.50,486.60 L2302.00,486.60 L2302.50,486.60 L2303.00,486.60 L2303.50,486.60 L2304.00,486.60 L2304.50,486.60 L2305.00,486.60 L2305.50,486.60 L2306.00,486.60 L2306.20,486.60 L2306.50,486.60 L2307.00,486.60 L2307.50,486.60 L2308.00,486.60 L2308.50,486.60 L2309.00,486.60 L2309.50,486.60 L2310.00,486.60 L2310.50,486.60 L2311.00,486.60 L2311.50,486.60 L2312.00,486.60 L2312.50,486.60 L2313.00,486.60 L2313.50,486.60 L2314.00,486.60 L2314.50,486.60 L2315.00,486.60 L2315.50,486.60 L2316.00,486.60 L2316.50,486.60 L2317.00,486.60 L2317.50,486.60 L2318.00,486.60 L2318.50,486.60 L2319.00,486.60 L2319.50,486.60 L2320.00,486.60 L2320.50,486.60 L2321.00,486.60 L2321.50,486.60 L2322.00,486.60 L2322.30,485.60 L2322.50,486.60 L2323.00,486.60 L2323.50,486.60 L2324.00,486.60 L2324.50,486.60 L2325.00,486.60 L2325.50,486.60 L2326.00,486.60 L2326.50,486.60 L2327.00,486.60 L2327.50,486.60 L2328.00,486.60 L2328.50,486.60 L2329.00,486.60 L2329.50,486.60 L2330.00,486.60 L2330.50,486.60 L2331.00,486.60 L2331.50,486.60 L2332.00,486.60 L2332.50,486.60 L2333.00,486.60 L2333.50,486.60 L2334.00,486.60 L2334.50,486.60 L2335.00,486.60 L2335.50,486.60 L2336.00,486.60 L2336.50,486.60 L2337.00,486.60 L2337.50,486.60 L2338.00,486.60 L2338.50,481.79 L2339.00,463.00 L2339.50,481.79 L2340.00,486.60 L2340.50,486.60 L2341.00,486.60 L2341.50,486.60 L2342.00,486.60 L2342.50,486.60 L2343.00,486.60 L2343.50,486.60 L2344.00,486.60 L2344.50,486.60 L2345.00,486.60 L2345.50,486.60 L2346.00,486.60 L2346.50,486.60 L2347.00,486.60 L2347.50,486.60 L2348.00,486.60 L2348.50,486.60 L2349.00,486.60 L2349.50,486.60 L2350.00,486.60 L2350.50,486.60 L2351.00,486.60 L2351.50,486.60 L2352.00,486.60 L2352.50,486.60 L2353.00,486.60 L2353.50,486.60 L2354.00,486.60 L2354.50,472.56 L2354.80,461.00 L2355.00,468.71 L2355.50,486.60 L2356.00,486.60 L2356.50,486.60 L2357.00,486.60 L2357.50,486.60 L2358.00,486.60 L2358.50,486.60 L2359.00,486.60 L2359.50,486.60 L2360.00,486.60 L2360.50,486.60 L2361.00,486.60 L2361.50,486.60 L2362.00,486.60 L2362.50,486.60 L2363.00,486.60 L2363.50,486.60 L2364.00,486.60 L2364.50,486.60 L2365.00,486.60 L2365.50,486.60 L2366.00,486.60 L2366.50,486.60 L2367.00,486.60 L2367.50,486.60 L2368.00,486.60 L2368.50,486.60 L2369.00,486.60 L2369.50,486.60 L2370.00,486.60 L2370.50,483.26 L2370.70,477.00 L2371.00,486.39 L2371.50,486.60 L2372.00,486.60 L2372.50,486.60 L2373.00,486.60 L2373.50,486.60 L2374.00,486.60 L2374.50,486.60 L2375.00,486.60 L2375.50,486.60 L2376.00,486.60 L2376.50,486.60 L2377.00,486.60 L2377.50,486.60 L2378.00,486.60 L2378.50,486.60 L2379.00,486.60 L2379.50,486.60 L2380.00,486.60 L2380.50,486.60 L2381.00,486.60 L2381.50,486.60 L2382.00,486.60 L2382.50,486.60 L2383.00,486.60 L2383.50,486.60 L2384.00,486.60 L2384.50,486.60 L2385.00,486.60 L2385.50,486.60 L2386.00,486.60 L2386.50,473.96 L2386.80,462.60 L2387.00,470.18 L2387.50,486.60 L2388.00,486.60 L2388.50,486.60 L2389.00,486.60 L2389.50,486.60 L2390.00,486.60 L2390.50,486.60 L2391.00,486.60 L2391.50,486.60 L2392.00,486.60 L2392.50,486.60 L2393.00,486.60 L2393.50,486.60 L2394.00,486.60 L2394.50,486.60 L2395.00,486.60 L2395.50,486.60 L2396.00,486.60 L2396.50,486.60 L2397.00,486.60 L2397.50,486.60 L2398.00,486.60 L2398.50,486.60 L2399.00,486.60 L2399.50,486.60 L2400.00,486.60 L2400.50,486.60 L2401.00,486.60 L2401.50,486.60 L2402.00,486.60 L2402.50,486.60 L2403.00,472.00 L2403.50,486.60 L2404.00,486.60 L2404.50,486.60 L2405.00,486.60 L2405.50,486.60 L2406.00,486.60 L2406.50,486.60 L2407.00,486.60 L2407.50,486.60 L2408.00,486.60 L2408.50,486.60 L2409.00,486.60 L2409.50,486.60 L2410.00,486.60 L2410.50,486.60 L2411.00,486.60 L2411.50,486.60 L2412.00,486.60 L2412.50,486.60 L2413.00,486.60 L2413.50,486.60 L2414.00,486.60 L2414.50,486.60 L2415.00,486.60 L2415.50,486.60 L2416.00,486.60 L2416.50,486.60 L2417.00,486.60 L2417.50,486.60 L2418.00,486.60 L2418.50,486.60 L2418.90,477.90 L2419.00,481.00 L2419.50,486.60 L2420.00,486.60 L2420.50,486.60 L2421.00,486.60 L2421.50,486.60 L2422.00,486.60 L2422.50,486.60 L2423.00,486.60 L2423.50,486.60 L2424.00,486.60 L2424.50,486.60 L2425.00,486.60 L2425.50,486.60 L2426.00,486.60 L2426.50,486.60 L2427.00,486.60 L2427.50,486.60 L2428.00,486.60 L2428.50,486.60 L2429.00,486.60 L2429.50,486.60 L2430.00,486.60 L2430.50,486.60 L2431.00,486.60 L2431.50,486.60 L2432.00,486.60 L2432.50,486.60 L2433.00,486.60 L2433.50,486.60 L2434.00,486.60 L2434.50,472.83 L2435.00,451.20 L2435.50,472.83 L2436.00,486.60 L2436.50,486.60 L2437.00,486.60 L2437.50,486.60 L2438.00,486.60 L2438.50,486.60 L2439.00,486.60 L2439.50,486.60 L2440.00,486.60 L2440.50,486.60 L2441.00,486.60 L2441.50,486.60 L2442.00,486.60 L2442.50,486.60 L2443.00,486.60 L2443.50,486.60 L2444.00,486.60 L2444.50,486.60 L2445.00,486.60 L2445.50,486.60 L2446.00,486.60 L2446.50,486.60 L2447.00,486.60 L2447.50,486.60 L2448.00,486.60 L2448.50,486.60 L2449.00,486.60 L2449.50,486.60 L2450.00,486.60 L2450.50,486.60 L2450.90,477.30 L2451.00,480.45 L2451.50,486.60 L2452.00,486.60 L2452.50,486.60 L2453.00,486.60 L2453.50,486.60 L2454.00,486.60 L2454.50,486.60 L2455.00,486.60 L2455.50,486.60 L2456.00,486.60 L2456.50,486.60 L2457.00,486.60 L2457.50,486.60 L2458.00,486.60 L2458.50,486.60 L2459.00,486.60 L2459.50,486.60 L2460.00,486.60 L2460.50,486.60 L2461.00,486.60 L2461.50,486.60 L2462.00,486.60 L2462.50,486.60 L2463.00,486.60 L2463.50,486.60 L2464.00,486.60 L2464.50,486.60 L2465.00,486.60 L2465.50,486.60 L2466.00,486.60 L2466.50,481.30 L2467.00,486.60 L2467.50,486.60 L2468.00,486.60 L2468.50,486.60 L2469.00,486.60 L2469.50,486.60 L2470.00,486.60 L2470.50,486.60 L2471.00,486.60 L2471.50,486.60 L2472.00,486.60 L2472.50,486.60 L2473.00,486.60 L2473.50,486.60 L2474.00,486.60 L2474.50,486.60 L2475.00,486.60 L2475.50,486.60 L2476.00,486.60 L2476.50,486.60 L2477.00,486.60 L2477.50,486.60 L2478.00,486.60 L2478.50,486.60 L2479.00,486.60 L2479.50,486.60 L2480.00,486.60 L2480.50,486.60 L2481.00,486.60 L2481.50,486.60 L2482.00,483.35 L2482.20,477.00 L2482.50,486.53 L2483.00,486.60 L2483.50,486.60 L2484.00,486.60 L2484.50,486.60 L2485.00,486.60 L2485.50,486.60 L2486.00,486.60 L2486.50,486.60 L2487.00,486.60 L2487.50,486.60 L2488.00,486.60 L2488.50,486.60 L2489.00,486.60 L2489.50,486.60 L2490.00,486.60 L2490.50,486.60 L2491.00,486.60 L2491.50,486.60 L2492.00,486.60 L2492.50,486.60 L2493.00,486.60 L2493.50,486.60 L2494.00,486.60 L2494.50,486.60 L2495.00,486.60 L2495.50,486.60 L2496.00,486.60 L2496.50,486.60 L2497.00,486.60 L2497.50,486.60 L2498.00,486.60 L2498.50,478.30 L2499.00,486.60 L2499.50,486.60 L2500.00,486.60 L2500.50,486.60 L2501.00,486.60 L2501.50,486.60 L2502.00,486.60 L2502.50,486.60 L2503.00,486.60 L2503.50,486.60 L2504.00,486.60 L2504.50,486.60 L2505.00,486.60 L2505.50,486.60 L2506.00,486.60 L2506.50,486.60 L2507.00,486.60 L2507.50,486.60 L2508.00,486.60 L2508.50,486.60 L2509.00,486.60 L2509.50,486.60 L2510.00,486.60 L2510.50,486.60 L2511.00,486.60 L2511.50,486.60 L2512.00,486.60 L2512.50,486.60 L2513.00,486.60 L2513.50,486.60 L2514.00,468.74 L2514.10,465.00 L2514.50,479.95 L2515.00,486.60 L2515.50,486.60 L2516.00,486.60 L2516.50,486.60 L2517.00,486.60 L2517.50,486.60 L2518.00,486.60 L2518.50,486.60 L2519.00,486.60 L2519.50,486.60 L2520.00,486.60 L2520.50,486.60 L2521.00,486.60 L2521.50,486.60 L2522.00,486.60 L2522.50,486.60 L2523.00,486.60 L2523.50,486.60 L2524.00,486.60 L2524.50,486.60 L2525.00,486.60 L2525.50,486.60 L2526.00,486.60 L2526.50,486.60 L2527.00,486.60 L2527.50,486.60 L2528.00,486.60 L2528.50,486.60 L2529.00,486.60 L2529.50,486.60 L2530.00,486.60 L2530.50,486.60 L2530.80,480.70 L2531.00,486.60 L2531.50,486.60 L2532.00,486.60 L2532.50,486.60 L2533.00,486.60 L2533.50,486.60 L2534.00,486.60 L2534.50,486.60 L2535.00,486.60 L2535.50,486.60 L2536.00,486.60 L2536.50,486.60 L2537.00,486.60 L2537.50,486.60 L2538.00,486.60 L2538.50,486.60 L2539.00,486.60 L2539.50,486.60 L2540.00,486.60 L2540.50,486.60 L2541.00,486.60 L2541.50,486.60 L2542.00,486.60 L2542.50,486.60 L2543.00,486.60 L2543.50,486.60 L2544.00,486.60 L2544.50,486.60 L2545.00,486.60 L2545.50,486.60 L2546.00,486.60 L2546.50,486.60 L2546.70,486.60 L2547.00,486.60 L2547.50,486.60 L2548.00,486.60 L2548.50,486.60 L2549.00,486.60 L2549.50,486.60 L2550.00,486.60 L2550.50,486.60 L2551.00,486.60 L2551.50,486.60 L2552.00,486.60 L2552.50,486.60 L2553.00,486.60 L2553.50,486.60 L2554.00,486.60 L2554.50,486.60 L2555.00,486.60 L2555.50,486.60 L2556.00,486.60 L2556.50,486.60 L2557.00,486.60 L2557.50,486.60 L2558.00,486.60 L2558.50,486.60 L2559.00,486.60 L2559.50,486.60 L2560.00,486.60 L2560.50,486.60 L2561.00,486.60 L2561.50,486.60 L2562.00,486.60 L2562.50,486.60 L2562.80,480.30 L2563.00,486.43 L2563.50,486.60 L2564.00,486.60 L2564.50,486.60 L2565.00,486.60 L2565.50,486.60 L2566.00,486.60 L2566.50,486.60 L2567.00,486.60 L2567.50,486.60 L2568.00,486.60 L2568.50,486.60 L2569.00,486.60 L2569.50,486.60 L2570.00,486.60 L2570.50,486.60 L2571.00,486.60 L2571.50,486.60 L2572.00,486.60 L2572.50,486.60 L2573.00,486.60 L2573.50,486.60 L2574.00,486.60 L2574.50,486.60 L2575.00,486.60 L2575.50,486.60 L2576.00,486.60 L2576.50,486.60 L2577.00,486.60 L2577.50,486.60 L2578.00,486.60 L2578.50,486.60 L2579.00,486.60 L2579.50,486.60 L2580.00,486.60 L2580.50,486.60 L2581.00,486.60 L2581.50,486.60 L2582.00,486.60 L2582.50,486.60 L2583.00,486.60 L2583.50,486.60 L2584.00,486.60 L2584.50,486.60 L2585.00,486.60 L2585.50,538.24 L2586.00,539.59 L2586.50,541.33 L2587.00,545.03 L2587.50,545.51 L2588.00,547.46 L2588.50,486.60 L2589.00,486.60 L2589.50,486.60 L2590.00,486.60 L2590.50,486.60 L2591.00,486.60 L2591.50,486.60 L2592.00,486.60 L2592.50,486.60 L2593.00,486.60 L2593.50,486.60 L2594.00,486.60 L2594.50,474.58 L2594.90,458.30 L2595.00,462.37 L2595.50,482.71 L2596.00,486.60 L2596.50,486.60 L2597.00,486.60 L2597.50,486.60 L2598.00,486.60 L2598.50,486.60 L2599.00,486.60 L2599.50,486.60 L2600.00,486.60 L2600.50,486.60 L2601.00,486.60 L2601.50,486.60 L2602.00,486.60 L2602.50,486.60 L2603.00,486.60 L2603.50,486.60 L2604.00,486.60 L2604.50,486.60 L2605.00,486.60 L2605.50,486.60 L2606.00,486.60 L2606.50,486.60 L2607.00,486.60 L2607.50,486.60 L2608.00,486.60 L2608.50,486.60 L2609.00,486.60 L2609.50,486.60 L2610.00,486.60 L2610.50,486.60 L2611.00,473.85 L2611.20,466.50 L2611.50,477.52 L2612.00,486.60 L2612.50,486.60 L2613.00,486.60 L2613.50,486.60 L2614.00,486.60 L2614.50,486.60 L2615.00,486.60 L2615.50,486.60 L2616.00,486.60 L2616.50,486.60 L2617.00,486.60 L2617.50,486.60 L2618.00,486.60 L2618.50,486.60 L2619.00,486.60 L2619.50,486.60 L2620.00,486.60 L2620.50,486.60 L2621.00,486.60 L2621.50,486.60 L2622.00,486.60 L2622.50,486.60 L2623.00,486.60 L2623.50,486.60 L2624.00,486.60 L2624.50,486.60 L2625.00,486.60 L2625.50,483.98 L2626.00,465.50 L2626.50,483.97 L2627.00,486.60 L2627.50,486.60 L2628.00,486.60 L2628.50,486.60 L2629.00,486.60 L2629.50,486.60 L2630.00,486.60 L2630.50,486.60 L2631.00,486.60 L2631.50,486.60 L2632.00,486.60 L2632.50,486.60 L2633.00,486.60 L2633.50,486.60 L2634.00,486.60 L2634.50,486.60 L2635.00,486.60 L2635.50,486.60 L2636.00,486.60 L2636.50,486.60 L2637.00,486.60 L2637.50,486.60 L2638.00,486.60 L2638.50,486.60 L2639.00,486.60 L2639.50,486.60 L2640.00,486.60 L2640.50,486.60 L2641.00,486.60 L2641.50,486.60 L2642.00,486.60 L2642.10,486.60 L2642.50,486.60 L2643.00,486.60 L2643.50,486.60 L2644.00,486.60 L2644.50,486.60 L2645.00,486.60 L2645.50,486.60 L2646.00,486.60 L2646.50,486.60 L2647.00,486.60 L2647.50,486.60 L2648.00,486.60 L2648.50,486.60 L2649.00,486.60 L2649.50,486.60 L2650.00,486.60 L2650.50,486.60 L2651.00,486.60 L2651.50,486.60 L2652.00,486.60 L2652.50,486.60 L2653.00,486.60 L2653.50,486.60 L2654.00,486.60 L2654.50,486.60 L2655.00,486.60 L2655.50,486.60 L2656.00,486.60 L2656.50,486.60 L2657.00,486.60 L2657.50,486.60 L2658.00,486.60 L2658.40,486.60 L2658.50,486.60 L2659.00,486.60 L2659.50,486.60 L2660.00,486.60 L2660.50,486.60 L2661.00,486.60 L2661.50,486.60 L2662.00,486.60 L2662.50,486.60 L2663.00,486.60 L2663.50,486.60 L2664.00,486.60 L2664.50,486.60 L2665.00,486.60 L2665.50,486.60 L2666.00,486.60 L2666.50,486.60 L2667.00,486.60 L2667.50,486.60 L2668.00,486.60 L2668.50,486.60 L2669.00,486.60 L2669.50,486.60 L2670.00,486.60 L2670.50,486.60 L2671.00,486.60 L2671.50,486.60 L2672.00,486.60 L2672.50,486.60 L2673.00,486.60 L2673.50,486.60 L2674.00,486.60 L2674.50,477.90 L2675.00,458.30 L2675.50,477.88 L2676.00,486.60 L2676.50,486.60 L2677.00,486.60 L2677.50,486.60 L2678.00,486.60 L2678.50,486.60 L2679.00,486.60 L2679.50,486.60 L2680.00,486.60 L2680.50,486.60 L2681.00,486.60 L2681.50,486.60 L2682.00,486.60 L2682.50,486.60 L2683.00,486.60 L2683.50,486.60 L2684.00,486.60 L2684.50,486.60 L2685.00,486.60 L2685.50,486.60 L2686.00,486.60 L2686.50,486.60 L2687.00,486.60 L2687.50,486.60 L2688.00,486.60 L2688.50,486.60 L2689.00,486.60 L2689.50,486.60 L2690.00,486.60 L2690.50,471.78 L2690.70,464.60 L2691.00,475.36 L2691.50,486.60 L2692.00,486.60 L2692.50,486.60 L2693.00,486.60 L2693.50,486.60 L2694.00,486.60 L2694.50,486.60 L2695.00,486.60 L2695.50,486.60 L2696.00,486.60 L2696.50,486.60 L2697.00,486.60 L2697.50,486.60 L2698.00,486.60 L2698.50,486.60 L2699.00,486.60 L2699.50,486.60 L2700.00,486.60 L2700.50,486.60 L2701.00,486.60 L2701.50,486.60 L2702.00,486.60 L2702.50,486.60 L2703.00,486.60 L2703.50,486.60 L2704.00,486.60 L2704.50,486.60 L2705.00,486.60 L2705.50,486.60 L2706.00,486.60 L2706.50,486.60 L2707.00,481.30 L2707.50,486.60 L2708.00,486.60 L2708.50,486.60 L2709.00,486.60 L2709.50,486.60 L2710.00,486.60 L2710.50,486.60 L2711.00,486.60 L2711.50,486.60 L2712.00,486.60 L2712.50,486.60 L2713.00,486.60 L2713.50,486.60 L2714.00,486.60 L2714.50,486.60 L2715.00,486.60 L2715.50,486.60 L2716.00,486.60 L2716.50,486.60 L2717.00,486.60 L2717.50,486.60 L2718.00,486.60 L2718.50,486.60 L2719.00,486.60 L2719.50,486.60 L2720.00,486.60 L2720.50,486.60 L2721.00,486.60 L2721.50,486.60 L2722.00,486.60 L2722.50,486.60 L2723.00,479.36 L2723.10,476.40 L2723.50,486.60 L2724.00,486.60 L2724.50,486.60 L2725.00,486.60 L2725.50,486.60 L2726.00,486.60 L2726.50,486.60 L2727.00,486.60 L2727.50,486.60 L2728.00,486.60 L2728.50,486.60 L2729.00,486.60 L2729.50,486.60 L2730.00,486.60 L2730.50,486.60 L2731.00,486.60 L2731.50,486.60 L2732.00,486.60 L2732.50,486.60 L2733.00,486.60 L2733.50,486.60 L2734.00,486.60 L2734.50,486.60 L2735.00,486.60 L2735.50,486.60 L2736.00,486.60 L2736.50,486.60 L2737.00,486.60 L2737.50,486.60 L2738.00,486.60 L2738.50,486.60 L2739.00,486.60 L2739.50,478.42 L2739.90,464.60 L2740.00,468.05 L2740.50,485.32 L2741.00,486.60 L2741.50,486.60 L2742.00,486.60 L2742.50,486.60 L2743.00,486.60 L2743.50,486.60 L2744.00,486.60 L2744.50,486.60 L2745.00,486.60 L2745.50,486.60 L2746.00,486.60 L2746.50,486.60 L2747.00,486.60 L2747.50,486.60 L2748.00,486.60 L2748.50,486.60 L2749.00,486.60 L2749.50,486.60 L2750.00,486.60 L2750.50,486.60 L2751.00,486.60 L2751.50,486.60 L2752.00,486.60 L2752.50,486.60 L2753.00,486.60 L2753.50,486.60 L2754.00,486.60 L2754.50,486.60 L2755.00,486.60 L2755.50,486.60 L2756.00,469.60 L2756.20,462.60 L2756.50,473.09 L2757.00,486.60 L2757.50,486.60 L2758.00,486.60 L2758.50,486.60 L2759.00,486.60 L2759.50,486.60 L2760.00,486.60 L2760.50,486.60 L2761.00,486.60 L2761.50,486.60 L2762.00,486.60 L2762.50,486.60 L2763.00,486.60 L2763.50,486.60 L2764.00,486.60 L2764.50,486.60 L2765.00,486.60 L2765.50,486.60 L2766.00,486.60 L2766.50,486.60 L2767.00,486.60 L2767.50,486.60 L2768.00,486.60 L2768.50,486.60 L2769.00,486.60 L2769.50,486.60 L2770.00,486.60 L2770.50,486.60 L2770.90,476.40 L2771.00,479.22 L2771.50,486.60 L2772.00,486.60 L2772.50,486.60 L2773.00,486.60 L2773.50,486.60 L2774.00,486.60 L2774.50,486.60 L2775.00,486.60 L2775.50,486.60 L2776.00,486.60 L2776.50,486.60 L2777.00,486.60 L2777.50,486.60 L2778.00,486.60 L2778.50,486.60 L2779.00,486.60 L2779.50,486.60 L2780.00,486.60 L2780.50,486.60 L2781.00,486.60 L2781.50,486.60 L2782.00,486.60 L2782.50,486.60 L2783.00,486.60 L2783.50,486.60 L2784.00,486.60 L2784.50,486.60 L2785.00,486.60 L2785.50,486.60 L2786.00,471.64 L2786.10,468.50 L2786.50,481.04 L2787.00,486.60 L2787.50,486.60 L2788.00,486.60 L2788.50,486.60 L2789.00,486.60 L2789.50,486.60 L2790.00,486.60 L2790.50,486.60 L2791.00,486.60 L2791.50,486.60 L2792.00,486.60 L2792.50,486.60 L2793.00,486.60 L2793.50,486.60 L2794.00,486.60 L2794.50,486.60 L2795.00,486.60 L2795.50,486.60 L2796.00,486.60 L2796.50,486.60 L2797.00,486.60 L2797.50,486.60 L2798.00,486.60 L2798.50,486.60 L2799.00,486.60 L2799.50,486.60 L2800.00,486.60 L2800.50,486.60 L2801.00,486.60 L2801.50,477.05 L2802.00,459.60 L2802.50,477.04 L2803.00,486.60 L2803.50,486.60 L2804.00,486.60 L2804.50,486.60 L2805.00,486.60 L2805.50,486.60 L2806.00,486.60 L2806.50,486.60 L2807.00,486.60 L2807.50,486.60 L2808.00,486.60 L2808.50,486.60 L2809.00,486.60 L2809.50,486.60 L2810.00,486.60 L2810.50,486.60 L2811.00,486.60 L2811.50,486.60 L2812.00,486.60 L2812.50,486.60 L2813.00,486.60 L2813.50,486.60 L2814.00,486.60 L2814.50,486.60 L2815.00,486.60 L2815.50,486.60 L2816.00,486.60 L2816.50,486.60 L2817.00,486.60 L2817.50,486.60 L2818.00,475.32 L2818.50,457.70 L2819.00,475.31 L2819.50,486.60 L2820.00,486.60 L2820.50,486.60 L2821.00,486.60 L2821.50,486.60 L2822.00,486.60 L2822.50,486.60 L2823.00,486.60 L2823.50,486.60 L2824.00,486.60 L2824.50,486.60 L2825.00,486.60 L2825.50,486.60 L2826.00,486.60 L2826.50,486.60 L2827.00,486.60 L2827.50,486.60 L2828.00,486.60 L2828.50,486.60 L2829.00,486.60 L2829.50,486.60 L2830.00,486.60 L2830.50,486.60 L2831.00,486.60 L2831.50,486.60 L2832.00,486.60 L2832.50,486.60 L2833.00,486.60 L2833.50,486.60 L2834.00,486.60 L2834.50,477.79 L2834.80,468.90 L2835.00,474.82 L2835.50,486.60 L2836.00,486.60 L2836.50,486.60 L2837.00,486.60 L2837.50,486.60 L2838.00,486.60 L2838.50,486.60 L2839.00,486.60 L2839.50,486.60 L2840.00,486.60 L2840.50,486.60 L2841.00,486.60 L2841.50,486.60 L2842.00,486.60 L2842.50,486.60 L2843.00,486.60 L2843.50,486.60 L2844.00,486.60 L2844.50,486.60 L2845.00,486.60 L2845.50,486.60 L2846.00,486.60 L2846.50,486.60 L2847.00,486.60 L2847.50,486.60 L2848.00,486.60 L2848.50,486.60 L2849.00,486.60 L2849.50,486.60 L2850.00,486.60 L2850.50,472.49 L2851.00,454.70 L2851.50,472.48 L2852.00,486.60 L2852.50,486.60 L2853.00,486.60 L2853.50,486.60 L2854.00,486.60 L2854.50,486.60 L2855.00,486.60 L2855.50,486.60 L2856.00,486.60 L2856.50,486.60 L2857.00,486.60 L2857.50,486.60 L2858.00,486.60 L2858.50,486.60 L2859.00,486.60 L2859.50,486.60 L2860.00,486.60 L2860.50,486.60 L2861.00,486.60 L2861.50,486.60 L2862.00,486.60 L2862.50,486.60 L2863.00,486.60 L2863.50,486.60 L2864.00,486.60 L2864.50,486.60 L2865.00,486.60 L2865.50,486.60 L2866.00,486.60 L2866.50,468.87 L2867.00,446.26 L2867.30,432.70 L2867.50,441.74 L2868.00,464.33 L2868.50,486.60 L2869.00,486.60 L2869.50,486.60 L2870.00,486.60 L2870.50,486.60 L2871.00,486.60 L2871.50,486.60 L2872.00,486.60 L2872.50,486.60 L2873.00,486.60 L2873.50,486.60 L2874.00,486.60 L2874.50,486.60 L2875.00,486.60 L2875.50,486.60 L2876.00,486.60 L2876.50,486.60 L2877.00,486.60 L2877.50,486.60 L2878.00,486.60 L2878.50,486.60 L2879.00,486.60 L2879.50,486.60 L2880.00,486.60 L2880.50,486.60 L2881.00,486.60 L2881.50,486.60 L2882.00,486.60 L2882.50,486.60 L2883.00,470.27 L2883.40,456.70 L2883.50,460.09 L2884.00,477.05 L2884.50,486.60 L2885.00,486.60 L2885.50,486.60 L2886.00,486.60 L2886.50,486.60 L2887.00,486.60 L2887.50,486.60 L2888.00,486.60 L2888.50,486.60 L2889.00,486.60 L2889.50,486.60 L2890.00,486.60 L2890.50,486.60 L2891.00,486.60 L2891.50,486.60 L2892.00,486.60 L2892.50,486.60 L2893.00,486.60 L2893.50,486.60 L2894.00,486.60 L2894.50,486.60 L2895.00,486.60 L2895.50,486.60 L2896.00,486.60 L2896.50,486.60 L2897.00,486.60 L2897.50,486.60 L2898.00,486.60 L2898.50,479.17 L2899.00,460.81 L2899.30,449.80 L2899.50,457.14 L2900.00,475.48 L2900.50,486.60 L2901.00,486.60 L2901.50,486.60 L2902.00,486.60 L2902.50,486.60 L2903.00,486.60 L2903.50,486.60 L2904.00,486.60 L2904.50,486.60 L2905.00,486.60 L2905.50,486.60 L2906.00,486.60 L2906.50,486.60 L2907.00,486.60 L2907.50,486.60 L2908.00,486.60 L2908.50,486.60 L2909.00,486.60 L2909.50,486.60 L2910.00,486.60 L2910.50,486.60 L2911.00,486.60 L2911.50,486.60 L2912.00,486.60 L2912.50,486.60 L2913.00,486.60 L2913.50,486.60 L2914.00,484.90 L2914.50,464.48 L2915.00,444.08 L2915.10,440.00 L2915.50,456.31 L2916.00,476.70 L2916.50,486.60 L2917.00,486.60 L2917.50,486.60 L2918.00,486.60 L2918.50,486.60 L2919.00,486.60 L2919.50,486.60 L2920.00,486.60 L2920.50,486.60 L2921.00,486.60 L2921.50,486.60 L2922.00,486.60 L2922.50,486.60 L2923.00,486.60 L2923.50,486.60 L2924.00,486.60 L2924.50,486.60 L2925.00,486.60 L2925.50,486.60 L2926.00,486.60 L2926.50,486.60 L2927.00,486.60 L2927.50,486.60 L2928.00,486.60 L2928.50,486.60 L2929.00,486.60 L2929.50,486.60 L2930.00,486.60 L2930.50,486.60 L2931.00,470.66 L2931.50,452.44 L2931.60,448.80 L2932.00,463.36 L2932.50,481.56 L2933.00,486.60 L2933.50,486.60 L2934.00,486.60 L2934.50,486.60 L2935.00,516.32 L2935.50,509.02 L2936.00,500.53 L2936.50,496.49 L2937.00,495.96 L2937.50,498.97 L2938.00,486.60 L2938.50,486.60 L2939.00,486.60 L2939.50,486.60 L2940.00,486.60 L2940.50,486.60 L2941.00,486.60 L2941.50,486.60 L2942.00,486.60 L2942.50,486.60 L2943.00,486.60 L2943.50,486.60 L2944.00,486.60 L2944.50,486.60 L2945.00,471.50 L2945.50,447.84 L2946.00,424.20 L2946.50,447.83 L2947.00,471.45 L2947.50,486.60 L2948.00,486.60 L2948.50,486.60 L2949.00,486.60 L2949.50,486.60 L2950.00,486.60 L2950.50,486.60 L2951.00,486.60 L2951.50,486.60 L2952.00,486.60 L2952.50,486.60 L2953.00,486.60 L2953.50,486.60 L2954.00,486.60 L2954.50,486.60 L2955.00,486.60 L2955.50,486.60 L2956.00,486.60 L2956.50,486.60 L2957.00,486.60 L2957.50,486.60 L2958.00,486.60 L2958.50,486.60 L2959.00,486.60 L2959.50,486.60 L2960.00,486.60 L2960.50,486.60 L2961.00,486.60 L2961.50,471.13 L2962.00,453.35 L2962.10,449.80 L2962.50,464.02 L2963.00,481.79 L2963.50,486.60 L2964.00,486.60 L2964.50,486.60 L2965.00,486.60 L2965.50,486.60 L2966.00,486.60 L2966.50,486.60 L2967.00,486.60 L2967.50,486.60 L2968.00,486.60 L2968.50,486.60 L2969.00,486.60 L2969.50,486.60 L2970.00,486.60 L2970.50,486.60 L2971.00,486.60 L2971.50,486.60 L2972.00,486.60 L2972.50,486.60 L2973.00,486.60 L2973.50,486.60 L2974.00,486.60 L2974.50,486.60 L2975.00,486.60 L2975.50,486.60 L2976.00,486.60 L2976.50,486.60 L2977.00,483.76 L2977.50,465.33 L2978.00,446.90 L2978.50,465.33 L2979.00,483.76 L2979.50,486.60 L2980.00,486.60 L2980.50,486.60 L2981.00,486.60 L2981.50,486.60 L2982.00,486.60 L2982.50,486.60 L2983.00,486.60 L2983.50,486.60 L2984.00,486.60 L2984.50,486.60 L2985.00,486.60 L2985.50,486.60 L2986.00,486.60 L2986.50,486.60 L2987.00,486.60 L2987.50,486.60 L2988.00,486.60 L2988.50,486.60 L2989.00,486.60 L2989.50,486.60 L2990.00,486.60 L2990.50,486.60 L2991.00,486.60 L2991.50,486.60 L2992.00,486.60 L2992.50,486.60 L2993.00,486.60 L2993.50,486.60 L2994.00,478.91 L2994.20,474.00 L2994.50,481.36 L2995.00,486.60 L2995.50,486.60 L2996.00,486.60 L2996.50,486.60 L2997.00,486.60 L2997.50,486.60 L2998.00,486.60 L2998.50,486.60 L2999.00,486.60 L2999.50,486.60 L3000.00,486.60 L3000.50,486.60 L3001.00,486.60 L3001.50,486.60 L3002.00,486.60 L3002.50,486.60 L3003.00,486.60 L3003.50,486.60 L3004.00,486.60 L3004.50,486.60 L3005.00,486.60 L3005.50,486.60 L3006.00,486.60 L3006.50,486.60 L3007.00,486.60 L3007.50,486.60 L3008.00,486.60 L3008.50,486.60 L3009.00,486.60 L3009.50,486.60 L3010.00,486.60 L3010.50,474.74 L3010.90,463.60 L3011.00,466.38 L3011.50,480.22 L3012.00,486.60 L3012.50,486.60 L3013.00,486.60 L3013.50,486.60 L3014.00,486.60 L3014.50,486.60 L3015.00,486.60 L3015.50,486.60 L3016.00,486.60 L3016.50,486.60 L3017.00,486.60 L3017.50,486.60 L3018.00,486.60 L3018.50,486.60 L3019.00,486.60 L3019.50,486.60 L3020.00,486.60 L3020.50,486.60 L3021.00,486.60 L3021.50,486.60 L3022.00,486.60 L3022.50,486.60 L3023.00,486.60 L3023.50,486.60 L3024.00,486.60 L3024.50,486.60 L3025.00,486.60 L3025.50,486.60 L3026.00,486.60 L3026.50,486.60 L3026.60,486.20 L3027.00,486.60 L3027.50,486.60 L3028.00,486.60 L3028.50,486.60 L3029.00,486.60 L3029.50,486.60 L3030.00,486.60 L3030.50,486.60 L3031.00,486.60 L3031.50,486.60 L3032.00,486.60 L3032.50,486.60 L3033.00,486.60 L3033.50,486.60 L3034.00,486.60 L3034.50,486.60 L3035.00,486.60 L3035.50,486.60 L3036.00,486.60 L3036.50,486.60 L3037.00,486.60 L3037.50,486.60 L3038.00,486.60 L3038.50,486.60 L3039.00,486.60 L3039.50,486.60 L3040.00,486.60 L3040.50,486.60 L3041.00,486.60 L3041.50,486.60 L3042.00,485.81 L3042.50,474.24 L3042.90,465.00 L3043.00,467.31 L3043.50,478.85 L3044.00,486.60 L3044.50,486.60 L3045.00,486.60 L3045.50,486.60 L3046.00,486.60 L3046.50,486.60 L3047.00,486.60 L3047.50,486.60 L3048.00,486.60 L3048.50,486.60 L3049.00,486.60 L3049.50,486.60 L3050.00,486.60 L3050.50,486.60 L3051.00,486.60 L3051.50,486.60 L3052.00,486.60 L3052.50,486.60 L3053.00,486.60 L3053.50,486.60 L3054.00,486.60 L3054.50,486.60 L3055.00,486.60 L3055.50,486.60 L3056.00,486.60 L3056.50,486.60 L3057.00,486.60 L3057.50,486.60 L3058.00,470.50 L3058.50,450.35 L3059.00,430.22 L3059.10,426.20 L3059.50,442.29 L3060.00,462.39 L3060.50,482.48 L3061.00,486.60 L3061.50,486.60 L3062.00,486.60 L3062.50,486.60 L3063.00,486.60 L3063.50,486.60 L3064.00,486.60 L3064.50,486.60 L3065.00,486.60 L3065.50,486.60 L3066.00,486.60 L3066.50,486.60 L3067.00,486.60 L3067.50,486.60 L3068.00,486.60 L3068.50,486.60 L3069.00,486.60 L3069.50,486.60 L3070.00,486.60 L3070.50,486.60 L3071.00,486.60 L3071.50,486.60 L3072.00,486.60 L3072.50,486.60 L3073.00,486.60 L3073.50,486.60 L3074.00,470.30 L3074.50,452.19 L3075.00,434.10 L3075.50,452.18 L3076.00,470.24 L3076.50,486.60 L3077.00,486.60 L3077.50,486.60 L3078.00,486.60 L3078.50,486.60 L3079.00,486.60 L3079.50,486.60 L3080.00,486.60 L3080.50,486.60 L3081.00,486.60 L3081.50,486.60 L3082.00,486.60 L3082.50,486.60 L3083.00,486.60 L3083.50,486.60 L3084.00,486.60 L3084.50,483.39 L3085.00,478.55 L3085.50,481.26 L3086.00,486.60 L3086.50,486.60 L3087.00,486.60 L3087.50,486.60 L3088.00,486.60 L3088.50,486.60 L3089.00,486.60 L3089.50,486.60 L3090.00,471.38 L3090.50,452.61 L3091.00,433.85 L3091.10,430.10 L3091.50,445.09 L3092.00,463.82 L3092.50,482.54 L3093.00,486.60 L3093.50,486.60 L3094.00,486.60 L3094.50,486.60 L3095.00,486.60 L3095.50,486.60 L3096.00,486.60 L3096.50,486.60 L3097.00,486.60 L3097.50,486.60 L3098.00,486.60 L3098.50,486.60 L3099.00,486.60 L3099.50,486.60 L3100.00,486.60 L3100.50,486.60 L3101.00,486.60 L3101.50,486.60 L3102.00,486.60 L3102.50,486.60 L3103.00,486.60 L3103.50,486.60 L3104.00,486.60 L3104.50,486.60 L3105.00,481.51 L3105.50,463.36 L3106.00,445.10 L3106.30,434.10 L3106.50,441.46 L3107.00,459.93 L3107.50,478.50 L3108.00,486.60 L3108.50,486.60 L3109.00,486.60 L3109.50,486.60 L3110.00,486.60 L3110.50,486.60 L3111.00,486.60 L3111.50,486.60 L3112.00,486.60 L3112.50,486.60 L3113.00,486.60 L3113.50,486.60 L3114.00,486.60 L3114.50,486.60 L3115.00,486.60 L3115.50,486.60 L3116.00,486.60 L3116.50,486.60 L3117.00,486.60 L3117.50,486.60 L3118.00,486.60 L3118.50,486.60 L3119.00,486.60 L3119.50,486.60 L3120.00,486.60 L3120.50,486.60 L3121.00,485.53 L3121.50,470.47 L3122.00,455.30 L3122.50,470.57 L3123.00,485.95 L3123.50,486.60 L3124.00,486.60 L3124.50,486.60 L3125.00,486.60 L3125.50,486.60 L3126.00,486.60 L3126.50,486.60 L3127.00,486.60 L3127.50,486.60 L3128.00,486.60 L3128.50,486.60 L3129.00,486.60 L3129.50,486.60 L3130.00,486.60 L3130.50,486.60 L3131.00,486.60 L3131.50,486.60 L3132.00,486.60 L3132.50,486.60 L3133.00,486.60 L3133.50,486.60 L3134.00,486.60 L3134.50,486.60 L3135.00,486.60 L3135.50,486.60 L3136.00,486.60 L3136.50,486.60 L3137.00,486.60 L3137.50,486.60 L3138.00,482.50 L3138.50,468.00 L3138.70,462.20 L3139.00,470.90 L3139.50,485.40 L3140.00,486.60 L3140.50,486.60 L3141.00,486.60 L3141.50,486.60 L3142.00,486.60 L3142.50,486.60 L3143.00,486.60 L3143.50,486.60 L3144.00,486.60 L3144.50,486.60 L3145.00,486.60 L3145.50,486.60 L3146.00,486.60 L3146.50,486.60 L3147.00,486.60 L3147.50,486.60 L3148.00,486.60 L3148.50,486.60 L3149.00,486.60 L3149.50,486.60 L3150.00,486.60 L3150.50,486.60 L3151.00,486.60 L3151.50,486.60 L3152.00,486.60 L3152.50,486.60 L3153.00,486.60 L3153.50,486.60 L3154.00,475.31 L3154.50,459.47 L3154.60,456.30 L3155.00,468.97 L3155.50,484.81 L3156.00,486.60 L3156.50,486.60 L3157.00,486.60 L3157.50,486.60 L3158.00,486.60 L3158.50,486.60 L3159.00,486.60 L3159.50,486.60 L3160.00,486.60 L3160.50,486.60 L3161.00,486.60 L3161.50,486.60 L3162.00,486.60 L3162.50,486.60 L3163.00,486.60 L3163.50,486.60 L3164.00,486.60 L3164.50,486.60 L3165.00,486.60 L3165.50,486.60 L3166.00,486.60 L3166.50,486.60 L3167.00,486.60 L3167.50,486.60 L3168.00,486.60 L3168.50,486.60 L3169.00,486.60 L3169.50,486.60 L3170.00,484.13 L3170.50,469.17 L3170.80,460.20 L3171.00,466.18 L3171.50,481.14 L3172.00,486.60 L3172.50,486.60 L3173.00,486.60 L3173.50,486.60 L3174.00,486.60 L3174.50,486.60 L3175.00,486.60 L3175.50,486.60 L3176.00,486.60 L3176.50,486.60 L3177.00,486.60 L3177.50,486.60 L3178.00,486.60 L3178.50,486.60 L3179.00,486.60 L3179.50,486.60 L3180.00,486.60 L3180.50,486.60 L3181.00,486.60 L3181.50,486.60 L3182.00,486.60 L3182.50,486.60 L3183.00,486.60 L3183.50,486.60 L3184.00,486.60 L3184.50,486.60 L3185.00,486.60 L3185.50,486.60 L3186.00,482.39 L3186.50,465.62 L3186.90,452.20 L3187.00,455.55 L3187.50,472.33 L3188.00,486.60 L3188.50,486.60 L3189.00,486.60 L3189.50,486.60 L3190.00,486.60 L3190.50,486.60 L3191.00,486.60 L3191.50,486.60 L3192.00,486.60 L3192.50,486.60 L3193.00,486.60 L3193.50,486.60 L3194.00,486.60 L3194.50,486.60 L3195.00,486.60 L3195.50,486.60 L3196.00,486.60 L3196.50,486.60 L3197.00,486.60 L3197.50,486.60 L3198.00,486.60 L3198.50,486.60 L3199.00,486.60 L3199.50,486.60 L3200.00,486.60 L3200.50,486.60 L3201.00,486.60 L3201.50,486.60 L3202.00,477.51 L3202.50,460.19 L3202.80,449.80 L3203.00,456.73 L3203.50,474.05 L3204.00,486.60 L3204.50,486.60 L3205.00,486.60 L3205.50,486.60 L3206.00,486.60 L3206.50,486.60 L3207.00,486.60 L3207.50,486.60 L3208.00,486.60 L3208.50,486.60 L3209.00,486.60 L3209.50,486.60 L3210.00,486.60 L3210.50,486.60 L3211.00,486.60 L3211.50,486.60 L3212.00,486.60 L3212.50,486.60 L3213.00,486.60 L3213.50,486.60 L3214.00,486.60 L3214.50,486.60 L3215.00,486.60 L3215.50,486.60 L3216.00,486.60 L3216.50,486.60 L3217.00,486.60 L3217.50,486.60 L3218.00,486.60 L3218.50,472.16 L3218.90,460.20 L3219.00,463.19 L3219.50,478.15 L3220.00,486.60 L3220.50,486.60 L3221.00,486.60 L3221.50,486.60 L3222.00,486.60 L3222.50,486.60 L3223.00,486.60 L3223.50,486.60 L3224.00,486.60 L3224.50,486.60 L3225.00,486.60 L3225.50,486.60 L3226.00,486.60 L3226.50,486.60 L3227.00,486.60 L3227.50,486.60 L3228.00,486.60 L3228.50,486.60 L3229.00,486.60 L3229.50,486.60 L3230.00,486.60 L3230.50,486.60 L3231.00,486.60 L3231.50,486.60 L3232.00,486.60 L3232.50,486.60 L3233.00,486.60 L3233.50,486.60 L3234.00,486.60 L3234.50,473.42 L3235.00,456.99 L3235.10,453.70 L3235.50,466.85 L3236.00,483.28 L3236.50,486.60 L3237.00,486.60 L3237.50,486.60 L3238.00,486.60 L3238.50,486.60 L3239.00,486.60 L3239.50,486.60 L3240.00,486.60 L3240.50,486.60 L3241.00,486.60 L3241.50,486.60 L3242.00,486.60 L3242.50,486.60 L3243.00,486.60 L3243.50,486.60 L3244.00,486.60 L3244.50,486.60 L3245.00,486.60 L3245.50,486.60 L3246.00,486.60 L3246.50,486.60 L3247.00,486.60 L3247.50,486.60 L3248.00,486.60 L3248.50,486.60 L3249.00,486.60 L3249.50,486.60 L3250.00,481.44 L3250.50,462.87 L3251.00,444.30 L3251.50,462.87 L3252.00,481.44 L3252.50,486.60 L3253.00,486.60 L3253.50,486.60 L3254.00,486.60 L3254.50,486.60 L3255.00,486.60 L3255.50,486.60 L3256.00,486.60 L3256.50,486.60 L3257.00,486.60 L3257.50,486.60 L3258.00,486.60 L3258.50,486.60 L3259.00,486.60 L3259.50,486.60 L3260.00,486.60 L3260.50,486.60 L3261.00,486.60 L3261.50,486.60 L3262.00,486.60 L3262.50,486.60 L3263.00,486.60 L3263.50,486.60 L3264.00,486.60 L3264.50,486.60 L3265.00,486.60 L3265.50,486.60 L3266.00,486.60 L3266.50,476.62 L3267.00,461.19 L3267.10,458.10 L3267.50,470.45 L3268.00,485.88 L3268.50,486.60 L3269.00,486.60 L3269.50,486.60 L3270.00,486.60 L3270.50,486.60 L3271.00,486.60 L3271.50,486.60 L3272.00,486.60 L3272.50,486.60 L3273.00,486.60 L3273.50,486.60 L3274.00,486.60 L3274.50,486.60 L3275.00,486.60 L3275.50,486.60 L3276.00,486.60 L3276.50,486.60 L3277.00,486.60 L3277.50,486.60 L3278.00,486.60 L3278.50,486.60 L3279.00,486.60 L3279.50,486.60 L3280.00,486.60 L3280.50,486.60 L3281.00,486.60 L3281.50,486.60 L3282.00,486.60 L3282.50,472.00 L3282.90,460.00 L3283.00,463.00 L3283.50,478.00 L3284.00,486.60 L3284.50,486.60 L3285.00,486.60 L3285.50,486.60 L3286.00,486.60 L3286.50,486.60 L3287.00,486.60 L3287.50,486.60 L3288.00,486.60 L3288.50,486.60 L3289.00,486.60 L3289.50,486.60 L3290.00,486.60 L3290.50,486.60 L3291.00,486.60 L3291.50,486.60 L3292.00,486.60 L3292.50,486.60 L3293.00,486.60 L3293.50,486.60 L3294.00,486.60 L3294.50,486.60 L3295.00,486.60 L3295.50,486.60 L3296.00,486.60 L3296.50,486.60 L3297.00,477.13 L3297.50,456.76 L3298.00,436.40 L3298.50,456.76 L3299.00,477.13 L3299.50,486.60 L3300.00,486.60 L3300.50,486.60 L3301.00,486.60 L3301.50,486.60 L3302.00,486.60 L3302.50,486.60 L3303.00,486.60 L3303.50,486.60 L3304.00,486.60 L3304.50,486.60 L3305.00,486.60 L3305.50,486.60 L3306.00,486.60 L3306.50,486.60 L3307.00,486.60 L3307.50,486.60 L3308.00,486.60 L3308.50,486.60 L3309.00,486.60 L3309.50,486.60 L3310.00,486.60 L3310.50,486.60 L3311.00,486.60 L3311.50,486.60 L3312.00,486.60 L3312.50,486.60 L3313.00,486.60 L3313.50,486.60 L3314.00,478.07 L3314.30,470.50 L3314.50,475.55 L3315.00,486.60 L3315.50,486.60 L3316.00,486.60 L3316.50,486.60 L3317.00,486.60 L3317.50,486.60 L3318.00,486.60 L3318.50,486.60 L3319.00,486.60 L3319.50,486.60 L3320.00,486.60 L3320.50,486.60 L3321.00,486.60 L3321.50,486.60 L3322.00,486.60 L3322.50,486.60 L3323.00,486.60 L3323.50,486.60 L3324.00,486.60 L3324.50,486.60 L3325.00,486.60 L3325.50,486.60 L3326.00,486.60 L3326.50,486.60 L3327.00,486.60 L3327.50,486.60 L3328.00,486.60 L3328.50,486.60 L3329.00,486.60 L3329.50,476.30 L3330.00,457.19 L3330.40,441.90 L3330.50,445.72 L3331.00,464.84 L3331.50,483.95 L3332.00,486.60 L3332.50,486.60 L3333.00,486.60 L3333.50,486.60 L3334.00,486.60 L3334.50,486.60 L3335.00,486.60 L3335.50,486.60 L3336.00,486.60 L3336.50,486.60 L3337.00,486.60 L3337.50,486.60 L3338.00,486.60 L3338.50,486.60 L3339.00,486.60 L3339.50,486.60 L3340.00,486.60 L3340.50,486.60 L3341.00,486.60 L3341.50,486.60 L3342.00,486.60 L3342.50,486.60 L3343.00,486.60 L3343.50,486.60 L3344.00,486.60 L3344.50,486.60 L3344.5,594.5 L1818,594.5 Z" fill="url(#gm)"/>
<path d="M1818,240H3344.5" stroke="#e05660" stroke-width="2" stroke-dasharray="10 10" fill="none"/>
<path d="M1818,486.6H3344.5" stroke="#f19d49" stroke-width="2" stroke-dasharray="10 10" fill="none"/>
<path d="M1818.00,537.20 L1818.50,536.86 L1819.00,538.13 L1819.50,539.05 L1820.00,537.12 L1820.50,535.31 L1821.00,534.22 L1821.50,532.74 L1822.00,532.41 L1822.50,530.98 L1823.00,530.51 L1823.50,528.44 L1824.00,527.44 L1824.50,527.39 L1825.00,526.38 L1825.50,519.64 L1826.00,510.45 L1826.50,501.27 L1826.70,497.60 L1827.00,503.11 L1827.50,512.29 L1828.00,521.47 L1828.50,530.65 L1829.00,537.56 L1829.50,537.05 L1830.00,535.46 L1830.50,534.47 L1831.00,534.07 L1831.50,532.88 L1832.00,533.56 L1832.50,535.21 L1833.00,535.13 L1833.50,536.54 L1834.00,536.06 L1834.50,534.86 L1835.00,533.14 L1835.50,531.70 L1836.00,529.39 L1836.50,529.95 L1837.00,530.02 L1837.50,531.36 L1838.00,532.22 L1838.50,531.68 L1839.00,531.37 L1839.50,531.03 L1840.00,530.86 L1840.50,531.02 L1841.00,529.61 L1841.50,528.69 L1842.00,527.89 L1842.50,521.57 L1843.00,515.25 L1843.40,510.20 L1843.50,511.46 L1844.00,517.78 L1844.50,524.10 L1845.00,530.42 L1845.50,536.74 L1846.00,537.15 L1846.50,535.59 L1847.00,533.27 L1847.50,532.70 L1848.00,531.96 L1848.50,533.47 L1849.00,536.11 L1849.50,536.60 L1850.00,537.13 L1850.50,537.54 L1851.00,537.77 L1851.50,536.90 L1852.00,536.37 L1852.50,534.36 L1853.00,532.03 L1853.50,530.16 L1854.00,527.77 L1854.50,528.18 L1855.00,527.95 L1855.50,528.78 L1856.00,530.89 L1856.50,532.14 L1857.00,521.78 L1857.50,501.51 L1858.00,481.24 L1858.50,460.96 L1858.80,448.80 L1859.00,456.91 L1859.50,477.18 L1860.00,497.45 L1860.50,517.73 L1861.00,536.69 L1861.50,533.86 L1862.00,530.96 L1862.50,528.56 L1863.00,529.06 L1863.50,530.29 L1864.00,531.19 L1864.50,532.64 L1865.00,535.58 L1865.50,536.76 L1866.00,538.22 L1866.50,537.25 L1867.00,537.71 L1867.50,536.97 L1868.00,537.11 L1868.50,536.57 L1869.00,535.93 L1869.50,534.36 L1870.00,534.61 L1870.50,532.68 L1871.00,530.97 L1871.50,530.88 L1872.00,529.25 L1872.50,527.80 L1873.00,527.39 L1873.50,518.65 L1874.00,506.56 L1874.50,494.47 L1874.90,484.80 L1875.00,487.22 L1875.50,499.31 L1876.00,511.40 L1876.50,523.49 L1877.00,535.41 L1877.50,533.80 L1878.00,531.92 L1878.50,532.68 L1879.00,533.46 L1879.50,535.59 L1880.00,536.53 L1880.50,536.58 L1881.00,536.64 L1881.50,536.60 L1882.00,537.75 L1882.50,536.08 L1883.00,533.06 L1883.50,529.89 L1884.00,527.07 L1884.50,528.02 L1885.00,530.96 L1885.50,533.38 L1886.00,533.33 L1886.50,532.30 L1887.00,531.71 L1887.50,531.29 L1888.00,530.11 L1888.50,529.21 L1889.00,528.73 L1889.50,505.55 L1890.00,482.36 L1890.50,459.18 L1891.00,436.00 L1891.50,459.18 L1892.00,482.36 L1892.50,505.55 L1893.00,528.73 L1893.50,538.52 L1894.00,538.37 L1894.50,536.63 L1895.00,534.95 L1895.50,534.63 L1896.00,535.22 L1896.50,536.87 L1897.00,536.08 L1897.50,535.48 L1898.00,534.48 L1898.50,534.56 L1899.00,533.55 L1899.50,535.25 L1900.00,536.08 L1900.50,536.25 L1901.00,536.90 L1901.50,537.24 L1902.00,536.59 L1902.50,534.70 L1903.00,535.18 L1903.50,534.00 L1904.00,533.50 L1904.50,533.13 L1905.00,517.85 L1905.50,492.67 L1906.00,467.49 L1906.50,442.31 L1906.80,427.20 L1907.00,437.27 L1907.50,462.45 L1908.00,487.64 L1908.50,512.82 L1909.00,536.35 L1909.50,534.60 L1910.00,533.68 L1910.50,532.03 L1911.00,532.11 L1911.50,533.33 L1912.00,534.67 L1912.50,536.41 L1913.00,536.72 L1913.50,535.94 L1914.00,536.00 L1914.50,534.85 L1915.00,533.45 L1915.50,533.82 L1916.00,535.82 L1916.50,537.78 L1917.00,537.92 L1917.50,536.33 L1918.00,536.28 L1918.50,534.48 L1919.00,533.87 L1919.50,532.18 L1920.00,532.72 L1920.50,531.85 L1921.00,516.61 L1921.50,495.23 L1922.00,473.84 L1922.50,452.45 L1922.70,443.90 L1923.00,456.73 L1923.50,478.12 L1924.00,499.50 L1924.50,520.89 L1925.00,537.47 L1925.50,537.06 L1926.00,534.95 L1926.50,534.54 L1927.00,533.78 L1927.50,531.99 L1928.00,529.59 L1928.50,529.28 L1929.00,528.57 L1929.50,529.52 L1930.00,532.78 L1930.50,535.17 L1931.00,536.80 L1931.50,537.22 L1932.00,538.25 L1932.50,537.73 L1933.00,537.78 L1933.50,538.42 L1934.00,537.74 L1934.50,535.46 L1935.00,533.62 L1935.50,533.01 L1936.00,532.27 L1936.50,529.97 L1937.00,517.42 L1937.50,491.69 L1938.00,465.96 L1938.50,440.24 L1938.80,424.80 L1939.00,435.09 L1939.50,460.82 L1940.00,486.55 L1940.50,512.27 L1941.00,536.88 L1941.50,536.78 L1942.00,535.25 L1942.50,533.07 L1943.00,529.05 L1943.50,526.45 L1944.00,524.13 L1944.50,526.71 L1945.00,530.27 L1945.50,534.30 L1946.00,536.84 L1946.50,537.69 L1947.00,538.78 L1947.50,539.52 L1948.00,538.34 L1948.50,536.72 L1949.00,536.47 L1949.50,534.33 L1950.00,533.15 L1950.50,531.98 L1951.00,532.09 L1951.50,529.97 L1952.00,529.33 L1952.50,528.78 L1953.00,525.36 L1953.50,504.29 L1954.00,483.22 L1954.50,462.15 L1954.90,445.30 L1955.00,449.51 L1955.50,470.58 L1956.00,491.65 L1956.50,512.72 L1957.00,533.79 L1957.50,537.55 L1958.00,535.32 L1958.50,532.94 L1959.00,531.25 L1959.50,532.36 L1960.00,533.72 L1960.50,536.08 L1961.00,536.27 L1961.50,537.50 L1962.00,537.57 L1962.50,536.89 L1963.00,534.23 L1963.50,534.11 L1964.00,535.11 L1964.50,535.00 L1965.00,534.24 L1965.50,534.72 L1966.00,534.24 L1966.50,532.12 L1967.00,531.53 L1967.50,530.34 L1968.00,528.52 L1968.50,514.76 L1969.00,495.40 L1969.50,476.04 L1970.00,456.67 L1970.10,452.80 L1970.50,468.29 L1971.00,487.65 L1971.50,507.02 L1972.00,526.38 L1972.50,537.26 L1973.00,537.10 L1973.50,535.08 L1974.00,533.16 L1974.50,532.33 L1975.00,532.57 L1975.50,534.88 L1976.00,535.73 L1976.50,536.52 L1977.00,537.99 L1977.50,537.29 L1978.00,536.53 L1978.50,535.83 L1979.00,536.76 L1979.50,535.42 L1980.00,534.46 L1980.50,533.23 L1981.00,533.41 L1981.50,533.06 L1982.00,533.59 L1982.50,532.84 L1983.00,533.51 L1983.50,533.40 L1984.00,530.48 L1984.50,511.69 L1985.00,492.89 L1985.50,474.10 L1986.00,455.30 L1986.50,474.10 L1987.00,492.89 L1987.50,511.69 L1988.00,530.48 L1988.50,537.56 L1989.00,535.71 L1989.50,534.90 L1990.00,534.14 L1990.50,534.76 L1991.00,535.00 L1991.50,535.56 L1992.00,535.39 L1992.50,536.10 L1993.00,536.26 L1993.50,537.29 L1994.00,537.26 L1994.50,536.75 L1995.00,538.12 L1995.50,538.92 L1996.00,538.89 L1996.50,537.39 L1997.00,534.48 L1997.50,530.31 L1998.00,525.74 L1998.50,521.78 L1999.00,521.56 L1999.50,523.66 L2000.00,525.28 L2000.50,526.08 L2001.00,519.08 L2001.50,500.15 L2002.00,481.22 L2002.50,462.28 L2002.70,454.70 L2003.00,466.07 L2003.50,485.01 L2004.00,503.97 L2004.50,522.92 L2005.00,538.85 L2005.50,537.02 L2006.00,534.48 L2006.50,533.05 L2007.00,532.84 L2007.50,534.81 L2008.00,536.98 L2008.50,537.18 L2009.00,537.82 L2009.50,538.77 L2010.00,538.33 L2010.50,537.40 L2011.00,537.85 L2011.50,537.55 L2012.00,535.85 L2012.50,533.90 L2013.00,530.76 L2013.50,527.66 L2014.00,525.39 L2014.50,523.28 L2015.00,522.46 L2015.50,523.96 L2016.00,526.22 L2016.50,527.27 L2017.00,521.97 L2017.50,501.54 L2018.00,481.10 L2018.50,460.67 L2018.80,448.40 L2019.00,456.58 L2019.50,477.03 L2020.00,497.48 L2020.50,517.93 L2021.00,537.58 L2021.50,536.25 L2022.00,535.72 L2022.50,534.08 L2023.00,532.13 L2023.50,529.39 L2024.00,527.97 L2024.50,527.91 L2025.00,530.33 L2025.50,532.25 L2026.00,534.49 L2026.50,537.22 L2027.00,537.17 L2027.50,537.89 L2028.00,537.19 L2028.50,536.58 L2029.00,535.59 L2029.50,533.41 L2030.00,532.90 L2030.50,531.44 L2031.00,529.85 L2031.50,529.52 L2032.00,528.74 L2032.50,526.77 L2033.00,525.81 L2033.50,513.95 L2034.00,500.24 L2034.50,486.53 L2034.80,478.30 L2035.00,483.79 L2035.50,497.51 L2036.00,511.23 L2036.50,524.96 L2037.00,537.98 L2037.50,536.82 L2038.00,533.79 L2038.50,530.80 L2039.00,529.95 L2039.50,530.95 L2040.00,534.70 L2040.50,536.47 L2041.00,537.25 L2041.50,536.98 L2042.00,537.12 L2042.50,538.58 L2043.00,538.19 L2043.50,537.47 L2044.00,536.95 L2044.50,537.32 L2045.00,534.58 L2045.50,531.54 L2046.00,527.70 L2046.50,526.14 L2047.00,526.32 L2047.50,527.68 L2048.00,531.19 L2048.50,532.19 L2049.00,526.29 L2049.50,505.25 L2050.00,484.20 L2050.50,463.14 L2050.90,446.30 L2051.00,450.51 L2051.50,471.57 L2052.00,492.64 L2052.50,513.71 L2053.00,534.78 L2053.50,537.97 L2054.00,538.19 L2054.50,537.57 L2055.00,537.02 L2055.50,537.45 L2056.00,537.82 L2056.50,537.24 L2057.00,536.11 L2057.50,534.28 L2058.00,534.28 L2058.50,536.38 L2059.00,537.29 L2059.50,538.07 L2060.00,538.89 L2060.50,539.09 L2061.00,536.94 L2061.50,535.58 L2062.00,534.84 L2062.50,532.37 L2063.00,530.37 L2063.50,529.96 L2064.00,529.57 L2064.50,527.04 L2065.00,524.87 L2065.50,508.58 L2066.00,486.69 L2066.50,464.80 L2067.00,442.90 L2067.50,464.80 L2068.00,486.71 L2068.50,508.62 L2069.00,530.53 L2069.50,537.71 L2070.00,536.90 L2070.50,535.19 L2071.00,533.31 L2071.50,533.56 L2072.00,533.81 L2072.50,535.73 L2073.00,537.09 L2073.50,538.60 L2074.00,538.29 L2074.50,539.60 L2075.00,539.31 L2075.50,539.98 L2076.00,540.80 L2076.50,541.36 L2077.00,539.26 L2077.50,538.35 L2078.00,537.61 L2078.50,534.78 L2079.00,533.75 L2079.50,532.58 L2080.00,530.76 L2080.50,528.68 L2081.00,526.59 L2081.50,512.22 L2082.00,492.72 L2082.50,473.21 L2083.00,453.70 L2083.50,473.21 L2084.00,492.73 L2084.50,512.26 L2085.00,531.79 L2085.50,537.02 L2086.00,533.78 L2086.50,532.08 L2087.00,530.67 L2087.50,530.28 L2088.00,532.52 L2088.50,535.52 L2089.00,537.71 L2089.50,539.83 L2090.00,540.71 L2090.50,540.08 L2091.00,539.64 L2091.50,539.92 L2092.00,539.13 L2092.50,540.27 L2093.00,539.00 L2093.50,538.57 L2094.00,537.59 L2094.50,537.27 L2095.00,535.81 L2095.50,534.99 L2096.00,535.91 L2096.50,535.93 L2097.00,534.52 L2097.50,514.65 L2098.00,493.67 L2098.50,472.69 L2099.00,451.70 L2099.10,447.50 L2099.50,464.29 L2100.00,485.29 L2100.50,506.29 L2101.00,527.29 L2101.50,537.95 L2102.00,537.48 L2102.50,537.51 L2103.00,537.74 L2103.50,537.98 L2104.00,536.36 L2104.50,533.76 L2105.00,531.33 L2105.50,529.76 L2106.00,530.62 L2106.50,534.09 L2107.00,536.75 L2107.50,537.46 L2108.00,538.23 L2108.50,539.71 L2109.00,540.63 L2109.50,540.98 L2110.00,540.45 L2110.50,539.93 L2111.00,538.46 L2111.50,536.72 L2112.00,535.60 L2112.50,533.85 L2113.00,522.62 L2113.50,500.76 L2114.00,478.90 L2114.50,457.02 L2114.80,443.90 L2115.00,452.65 L2115.50,474.53 L2116.00,496.41 L2116.50,518.30 L2117.00,538.50 L2117.50,536.34 L2118.00,533.81 L2118.50,532.41 L2119.00,533.29 L2119.50,534.45 L2120.00,535.24 L2120.50,535.29 L2121.00,535.05 L2121.50,534.62 L2122.00,535.14 L2122.50,535.98 L2123.00,538.04 L2123.50,538.56 L2124.00,538.21 L2124.50,537.43 L2125.00,536.35 L2125.50,535.21 L2126.00,535.10 L2126.50,534.52 L2127.00,533.14 L2127.50,532.85 L2128.00,531.17 L2128.50,521.84 L2129.00,503.27 L2129.50,484.70 L2130.00,466.13 L2130.20,458.70 L2130.50,469.85 L2131.00,488.43 L2131.50,507.02 L2132.00,525.61 L2132.50,539.89 L2133.00,537.94 L2133.50,535.13 L2134.00,531.15 L2134.50,527.33 L2135.00,529.01 L2135.50,532.72 L2136.00,536.85 L2136.50,539.28 L2137.00,540.92 L2137.50,540.51 L2138.00,540.69 L2138.50,540.91 L2139.00,541.16 L2139.50,540.59 L2140.00,540.12 L2140.50,539.68 L2141.00,539.41 L2141.50,539.13 L2142.00,537.62 L2142.50,537.07 L2143.00,536.75 L2143.50,535.53 L2144.00,534.29 L2144.50,535.06 L2145.00,520.51 L2145.50,500.31 L2146.00,480.10 L2146.50,459.89 L2146.70,451.80 L2147.00,463.93 L2147.50,484.15 L2148.00,504.38 L2148.50,524.61 L2149.00,539.28 L2149.50,539.42 L2150.00,538.72 L2150.50,536.23 L2151.00,534.61 L2151.50,533.87 L2152.00,535.51 L2152.50,536.61 L2153.00,537.60 L2153.50,538.96 L2154.00,539.66 L2154.50,538.60 L2155.00,537.38 L2155.50,534.84 L2156.00,532.32 L2156.50,532.88 L2157.00,536.27 L2157.50,539.03 L2158.00,539.46 L2158.50,537.62 L2159.00,536.78 L2159.50,536.18 L2160.00,534.72 L2160.50,521.53 L2161.00,507.61 L2161.50,493.67 L2162.00,479.70 L2162.50,493.69 L2163.00,507.70 L2163.50,521.73 L2164.00,535.79 L2164.50,541.88 L2165.00,539.75 L2165.50,538.50 L2166.00,537.55 L2166.50,536.31 L2167.00,537.98 L2167.50,538.77 L2168.00,540.19 L2168.50,541.16 L2169.00,542.09 L2169.50,542.72 L2170.00,542.39 L2170.50,542.96 L2171.00,541.80 L2171.50,540.51 L2172.00,539.54 L2172.50,536.60 L2173.00,535.81 L2173.50,536.68 L2174.00,536.05 L2174.50,537.24 L2175.00,537.47 L2175.50,536.94 L2176.00,536.74 L2176.50,536.45 L2177.00,525.47 L2177.50,508.27 L2178.00,491.05 L2178.50,473.80 L2178.70,466.90 L2179.00,477.26 L2179.50,494.55 L2180.00,511.87 L2180.50,529.20 L2181.00,543.32 L2181.50,542.53 L2182.00,539.87 L2182.50,535.74 L2183.00,534.15 L2183.50,534.61 L2184.00,537.60 L2184.50,540.82 L2185.00,543.54 L2185.50,544.63 L2186.00,545.60 L2186.50,545.09 L2187.00,544.70 L2187.50,544.67 L2188.00,543.73 L2188.50,541.72 L2189.00,542.09 L2189.50,540.70 L2190.00,539.91 L2190.50,538.12 L2191.00,536.96 L2191.50,537.55 L2192.00,536.30 L2192.50,535.24 L2193.00,531.14 L2193.50,509.24 L2194.00,487.32 L2194.50,465.37 L2194.90,447.80 L2195.00,452.20 L2195.50,474.19 L2196.00,496.20 L2196.50,518.24 L2197.00,540.30 L2197.50,541.73 L2198.00,540.72 L2198.50,540.35 L2199.00,541.58 L2199.50,543.50 L2200.00,543.94 L2200.50,544.02 L2201.00,544.03 L2201.50,544.67 L2202.00,544.74 L2202.50,543.98 L2203.00,544.32 L2203.50,543.90 L2204.00,542.62 L2204.50,542.60 L2205.00,540.38 L2205.50,538.87 L2206.00,538.19 L2206.50,537.42 L2207.00,538.20 L2207.50,538.09 L2208.00,539.62 L2208.50,538.59 L2209.00,528.44 L2209.50,507.68 L2210.00,486.92 L2210.50,466.16 L2210.80,453.70 L2211.00,462.00 L2211.50,482.77 L2212.00,503.53 L2212.50,524.30 L2213.00,544.51 L2213.50,544.41 L2214.00,544.89 L2214.50,544.52 L2215.00,542.03 L2215.50,542.38 L2216.00,542.70 L2216.50,543.29 L2217.00,543.45 L2217.50,544.13 L2218.00,544.59 L2218.50,544.67 L2219.00,544.38 L2219.50,545.54 L2220.00,545.13 L2220.50,543.93 L2221.00,542.97 L2221.50,539.34 L2222.00,535.61 L2222.50,532.78 L2223.00,533.01 L2223.50,536.66 L2224.00,538.95 L2224.50,539.89 L2225.00,540.20 L2225.50,527.72 L2226.00,513.21 L2226.50,498.71 L2227.00,484.20 L2227.10,481.30 L2227.50,492.91 L2228.00,507.42 L2228.50,521.93 L2229.00,536.44 L2229.50,541.75 L2230.00,540.18 L2230.50,539.24 L2231.00,539.52 L2231.50,539.69 L2232.00,541.25 L2232.50,540.85 L2233.00,538.80 L2233.50,537.08 L2234.00,538.22 L2234.50,539.46 L2235.00,540.73 L2235.50,543.04 L2236.00,543.22 L2236.50,545.00 L2237.00,546.17 L2237.50,546.30 L2238.00,544.42 L2238.50,543.31 L2239.00,543.13 L2239.50,542.17 L2240.00,540.35 L2240.50,538.83 L2241.00,535.90 L2241.50,520.40 L2242.00,504.90 L2242.50,489.40 L2242.90,477.00 L2243.00,480.10 L2243.50,495.60 L2244.00,511.11 L2244.50,526.62 L2245.00,542.12 L2245.50,545.46 L2246.00,543.29 L2246.50,541.20 L2247.00,537.38 L2247.50,536.46 L2248.00,535.94 L2248.50,538.83 L2249.00,541.95 L2249.50,544.74 L2250.00,546.09 L2250.50,545.29 L2251.00,544.97 L2251.50,545.46 L2252.00,546.32 L2252.50,546.40 L2253.00,544.84 L2253.50,543.71 L2254.00,542.65 L2254.50,541.27 L2255.00,540.16 L2255.50,539.77 L2256.00,538.92 L2256.50,537.83 L2257.00,537.13 L2257.50,520.86 L2258.00,503.40 L2258.50,485.95 L2259.00,468.50 L2259.50,485.95 L2260.00,503.41 L2260.50,520.87 L2261.00,538.32 L2261.50,543.13 L2262.00,542.27 L2262.50,541.45 L2263.00,541.48 L2263.50,543.10 L2264.00,544.13 L2264.50,544.29 L2265.00,544.24 L2265.50,543.79 L2266.00,543.23 L2266.50,544.79 L2267.00,545.74 L2267.50,544.83 L2268.00,543.98 L2268.50,541.60 L2269.00,540.43 L2269.50,538.75 L2270.00,536.94 L2270.50,537.41 L2271.00,537.86 L2271.50,536.03 L2272.00,535.28 L2272.50,533.79 L2273.00,528.35 L2273.50,511.34 L2274.00,494.32 L2274.50,477.31 L2274.70,470.50 L2275.00,480.71 L2275.50,497.73 L2276.00,514.75 L2276.50,531.77 L2277.00,545.68 L2277.50,543.98 L2278.00,542.17 L2278.50,539.73 L2279.00,536.69 L2279.50,535.31 L2280.00,536.76 L2280.50,539.60 L2281.00,541.52 L2281.50,543.48 L2282.00,543.94 L2282.50,543.63 L2283.00,544.69 L2283.50,544.56 L2284.00,544.29 L2284.50,543.59 L2285.00,542.15 L2285.50,542.13 L2286.00,541.09 L2286.50,540.21 L2287.00,539.79 L2287.50,539.67 L2288.00,538.81 L2288.50,536.81 L2289.00,536.11 L2289.50,520.56 L2290.00,505.00 L2290.50,489.45 L2290.90,477.00 L2291.00,480.11 L2291.50,495.67 L2292.00,511.23 L2292.50,526.79 L2293.00,542.35 L2293.50,544.29 L2294.00,543.42 L2294.50,542.40 L2295.00,540.42 L2295.50,539.13 L2296.00,539.15 L2296.50,541.54 L2297.00,543.21 L2297.50,544.25 L2298.00,545.11 L2298.50,545.69 L2299.00,544.88 L2299.50,542.55 L2300.00,539.88 L2300.50,538.10 L2301.00,536.24 L2301.50,535.68 L2302.00,534.92 L2302.50,535.44 L2303.00,536.39 L2303.50,535.89 L2304.00,535.00 L2304.50,533.61 L2305.00,521.70 L2305.50,509.78 L2306.00,497.87 L2306.20,493.10 L2306.50,500.25 L2307.00,512.17 L2307.50,524.09 L2308.00,536.01 L2308.50,544.60 L2309.00,542.70 L2309.50,539.54 L2310.00,537.64 L2310.50,539.01 L2311.00,540.64 L2311.50,542.03 L2312.00,544.40 L2312.50,545.35 L2313.00,545.26 L2313.50,543.43 L2314.00,540.87 L2314.50,540.62 L2315.00,540.32 L2315.50,542.31 L2316.00,544.33 L2316.50,544.74 L2317.00,544.17 L2317.50,544.20 L2318.00,544.20 L2318.50,543.48 L2319.00,543.58 L2319.50,541.73 L2320.00,541.28 L2320.50,534.69 L2321.00,521.06 L2321.50,507.42 L2322.00,493.78 L2322.30,485.60 L2322.50,491.06 L2323.00,504.70 L2323.50,518.34 L2324.00,531.98 L2324.50,545.12 L2325.00,544.21 L2325.50,542.77 L2326.00,541.44 L2326.50,541.53 L2327.00,540.93 L2327.50,539.84 L2328.00,539.98 L2328.50,541.38 L2329.00,543.59 L2329.50,545.04 L2330.00,545.45 L2330.50,546.29 L2331.00,545.74 L2331.50,545.39 L2332.00,546.02 L2332.50,546.31 L2333.00,545.96 L2333.50,546.73 L2334.00,544.97 L2334.50,544.08 L2335.00,543.86 L2335.50,543.43 L2336.00,541.30 L2336.50,540.85 L2337.00,538.17 L2337.50,519.38 L2338.00,500.59 L2338.50,481.79 L2339.00,463.00 L2339.50,481.79 L2340.00,500.59 L2340.50,519.39 L2341.00,538.19 L2341.50,545.54 L2342.00,544.08 L2342.50,543.84 L2343.00,541.12 L2343.50,539.28 L2344.00,541.03 L2344.50,542.77 L2345.00,545.04 L2345.50,545.40 L2346.00,544.93 L2346.50,544.14 L2347.00,543.54 L2347.50,539.52 L2348.00,537.38 L2348.50,537.21 L2349.00,539.40 L2349.50,541.75 L2350.00,543.97 L2350.50,545.10 L2351.00,544.52 L2351.50,542.88 L2352.00,542.33 L2352.50,542.47 L2353.00,530.35 L2353.50,511.09 L2354.00,491.83 L2354.50,472.56 L2354.80,461.00 L2355.00,468.71 L2355.50,487.97 L2356.00,507.24 L2356.50,526.51 L2357.00,540.92 L2357.50,538.43 L2358.00,534.83 L2358.50,530.36 L2359.00,528.67 L2359.50,530.11 L2360.00,534.78 L2360.50,539.44 L2361.00,543.17 L2361.50,545.14 L2362.00,546.55 L2362.50,545.62 L2363.00,544.88 L2363.50,545.98 L2364.00,546.67 L2364.50,545.34 L2365.00,546.35 L2365.50,545.16 L2366.00,544.47 L2366.50,543.27 L2367.00,541.32 L2367.50,538.99 L2368.00,538.41 L2368.50,537.49 L2369.00,530.20 L2369.50,514.55 L2370.00,498.91 L2370.50,483.26 L2370.70,477.00 L2371.00,486.39 L2371.50,502.04 L2372.00,517.69 L2372.50,533.34 L2373.00,544.90 L2373.50,544.63 L2374.00,543.02 L2374.50,541.84 L2375.00,542.01 L2375.50,542.09 L2376.00,543.22 L2376.50,542.72 L2377.00,541.57 L2377.50,541.00 L2378.00,540.61 L2378.50,542.21 L2379.00,542.52 L2379.50,544.87 L2380.00,545.07 L2380.50,544.74 L2381.00,543.66 L2381.50,543.13 L2382.00,544.03 L2382.50,543.14 L2383.00,543.40 L2383.50,543.73 L2384.00,543.18 L2384.50,541.52 L2385.00,530.78 L2385.50,511.84 L2386.00,492.90 L2386.50,473.96 L2386.80,462.60 L2387.00,470.18 L2387.50,489.12 L2388.00,508.06 L2388.50,527.00 L2389.00,544.35 L2389.50,543.70 L2390.00,543.30 L2390.50,541.04 L2391.00,539.46 L2391.50,538.14 L2392.00,540.06 L2392.50,541.85 L2393.00,544.78 L2393.50,546.68 L2394.00,547.61 L2394.50,546.54 L2395.00,547.17 L2395.50,546.25 L2396.00,545.81 L2396.50,543.60 L2397.00,541.56 L2397.50,539.78 L2398.00,539.65 L2398.50,539.63 L2399.00,541.02 L2399.50,541.19 L2400.00,540.05 L2400.50,537.79 L2401.00,536.27 L2401.50,522.47 L2402.00,505.65 L2402.50,488.82 L2403.00,472.00 L2403.50,488.83 L2404.00,505.66 L2404.50,522.49 L2405.00,539.32 L2405.50,545.75 L2406.00,543.26 L2406.50,540.00 L2407.00,535.72 L2407.50,533.29 L2408.00,535.17 L2408.50,540.24 L2409.00,543.60 L2409.50,545.59 L2410.00,545.82 L2410.50,546.49 L2411.00,546.44 L2411.50,547.35 L2412.00,548.09 L2412.50,548.60 L2413.00,548.86 L2413.50,547.04 L2414.00,544.38 L2414.50,542.52 L2415.00,541.82 L2415.50,540.25 L2416.00,538.02 L2416.50,535.63 L2417.00,533.81 L2417.50,521.35 L2418.00,505.84 L2418.50,490.32 L2418.90,477.90 L2419.00,481.00 L2419.50,496.53 L2420.00,512.06 L2420.50,527.58 L2421.00,543.12 L2421.50,544.34 L2422.00,542.34 L2422.50,540.59 L2423.00,539.22 L2423.50,540.23 L2424.00,542.14 L2424.50,543.80 L2425.00,545.44 L2425.50,544.06 L2426.00,542.01 L2426.50,539.22 L2427.00,537.19 L2427.50,538.54 L2428.00,542.04 L2428.50,545.13 L2429.00,544.91 L2429.50,543.83 L2430.00,542.91 L2430.50,542.11 L2431.00,541.17 L2431.50,541.33 L2432.00,540.46 L2432.50,538.83 L2433.00,537.55 L2433.50,516.08 L2434.00,494.45 L2434.50,472.83 L2435.00,451.20 L2435.50,472.83 L2436.00,494.46 L2436.50,516.10 L2437.00,537.74 L2437.50,546.02 L2438.00,544.81 L2438.50,542.83 L2439.00,539.80 L2439.50,538.68 L2440.00,539.09 L2440.50,540.29 L2441.00,542.61 L2441.50,545.20 L2442.00,546.13 L2442.50,545.36 L2443.00,543.52 L2443.50,541.72 L2444.00,539.16 L2444.50,535.68 L2445.00,534.26 L2445.50,534.62 L2446.00,536.40 L2446.50,538.28 L2447.00,537.90 L2447.50,537.25 L2448.00,536.21 L2448.50,535.19 L2449.00,533.11 L2449.50,521.35 L2450.00,505.62 L2450.50,489.89 L2450.90,477.30 L2451.00,480.45 L2451.50,496.18 L2452.00,511.92 L2452.50,527.67 L2453.00,543.38 L2453.50,542.87 L2454.00,539.79 L2454.50,538.25 L2455.00,539.90 L2455.50,541.68 L2456.00,543.22 L2456.50,545.51 L2457.00,547.26 L2457.50,546.55 L2458.00,547.02 L2458.50,546.53 L2459.00,546.81 L2459.50,545.42 L2460.00,544.40 L2460.50,542.83 L2461.00,540.85 L2461.50,540.84 L2462.00,541.94 L2462.50,541.57 L2463.00,540.92 L2463.50,542.16 L2464.00,542.63 L2464.50,540.74 L2465.00,525.88 L2465.50,511.02 L2466.00,496.16 L2466.50,481.30 L2467.00,496.16 L2467.50,511.03 L2468.00,525.90 L2468.50,540.77 L2469.00,544.59 L2469.50,541.32 L2470.00,538.62 L2470.50,538.12 L2471.00,537.08 L2471.50,537.54 L2472.00,537.93 L2472.50,540.01 L2473.00,543.60 L2473.50,545.38 L2474.00,546.21 L2474.50,545.96 L2475.00,546.83 L2475.50,547.45 L2476.00,547.76 L2476.50,545.95 L2477.00,544.35 L2477.50,542.59 L2478.00,541.09 L2478.50,539.30 L2479.00,537.94 L2479.50,537.64 L2480.00,536.65 L2480.50,530.97 L2481.00,515.10 L2481.50,499.23 L2482.00,483.35 L2482.20,477.00 L2482.50,486.53 L2483.00,502.41 L2483.50,518.29 L2484.00,534.18 L2484.50,546.04 L2485.00,545.12 L2485.50,544.68 L2486.00,544.10 L2486.50,545.12 L2487.00,545.07 L2487.50,546.04 L2488.00,544.80 L2488.50,542.08 L2489.00,540.32 L2489.50,538.18 L2490.00,536.67 L2490.50,538.68 L2491.00,540.80 L2491.50,543.63 L2492.00,546.50 L2492.50,546.68 L2493.00,545.97 L2493.50,544.96 L2494.00,543.26 L2494.50,542.24 L2495.00,542.13 L2495.50,541.12 L2496.00,539.11 L2496.50,538.29 L2497.00,525.16 L2497.50,509.54 L2498.00,493.92 L2498.50,478.30 L2499.00,493.92 L2499.50,509.55 L2500.00,525.18 L2500.50,540.81 L2501.00,546.19 L2501.50,545.49 L2502.00,544.01 L2502.50,544.17 L2503.00,544.66 L2503.50,544.41 L2504.00,544.64 L2504.50,546.60 L2505.00,547.89 L2505.50,547.28 L2506.00,546.87 L2506.50,546.52 L2507.00,545.09 L2507.50,543.89 L2508.00,542.80 L2508.50,540.42 L2509.00,537.72 L2509.50,536.30 L2510.00,535.09 L2510.50,536.71 L2511.00,538.89 L2511.50,540.02 L2512.00,539.63 L2512.50,524.77 L2513.00,506.09 L2513.50,487.42 L2514.00,468.74 L2514.10,465.00 L2514.50,479.95 L2515.00,498.63 L2515.50,517.32 L2516.00,536.01 L2516.50,546.34 L2517.00,545.25 L2517.50,544.83 L2518.00,541.61 L2518.50,539.68 L2519.00,539.18 L2519.50,540.51 L2520.00,543.55 L2520.50,544.61 L2521.00,545.12 L2521.50,545.00 L2522.00,545.31 L2522.50,545.90 L2523.00,544.87 L2523.50,543.48 L2524.00,541.62 L2524.50,540.63 L2525.00,541.58 L2525.50,542.43 L2526.00,544.47 L2526.50,544.83 L2527.00,543.03 L2527.50,541.51 L2528.00,541.33 L2528.50,540.25 L2529.00,535.24 L2529.50,520.09 L2530.00,504.94 L2530.50,489.79 L2530.80,480.70 L2531.00,486.76 L2531.50,501.92 L2532.00,517.08 L2532.50,532.24 L2533.00,547.10 L2533.50,547.53 L2534.00,546.38 L2534.50,544.97 L2535.00,544.34 L2535.50,542.17 L2536.00,543.59 L2536.50,545.20 L2537.00,546.19 L2537.50,544.55 L2538.00,543.35 L2538.50,543.81 L2539.00,544.34 L2539.50,546.68 L2540.00,547.44 L2540.50,548.39 L2541.00,548.16 L2541.50,547.80 L2542.00,547.77 L2542.50,545.65 L2543.00,544.12 L2543.50,544.17 L2544.00,543.35 L2544.50,542.94 L2545.00,534.70 L2545.50,521.88 L2546.00,509.06 L2546.50,496.23 L2546.70,491.10 L2547.00,498.80 L2547.50,511.63 L2548.00,524.46 L2548.50,537.30 L2549.00,546.70 L2549.50,546.50 L2550.00,546.00 L2550.50,543.55 L2551.00,541.21 L2551.50,540.80 L2552.00,542.87 L2552.50,545.43 L2553.00,546.94 L2553.50,548.49 L2554.00,549.24 L2554.50,549.41 L2555.00,549.36 L2555.50,549.25 L2556.00,547.82 L2556.50,546.92 L2557.00,544.30 L2557.50,539.90 L2558.00,537.02 L2558.50,533.13 L2559.00,532.70 L2559.50,533.93 L2560.00,534.76 L2560.50,534.44 L2561.00,533.90 L2561.50,520.13 L2562.00,504.81 L2562.50,489.49 L2562.80,480.30 L2563.00,486.43 L2563.50,501.75 L2564.00,517.08 L2564.50,532.41 L2565.00,547.74 L2565.50,546.90 L2566.00,543.93 L2566.50,541.56 L2567.00,540.07 L2567.50,539.15 L2568.00,539.91 L2568.50,543.45 L2569.00,545.48 L2569.50,545.84 L2570.00,545.06 L2570.50,544.13 L2571.00,543.60 L2571.50,544.31 L2572.00,545.78 L2572.50,548.15 L2573.00,549.07 L2573.50,546.58 L2574.00,545.80 L2574.50,544.44 L2575.00,542.42 L2575.50,541.37 L2576.00,539.31 L2576.50,538.49 L2577.00,537.10 L2577.50,532.51 L2578.00,521.54 L2578.50,510.57 L2579.00,499.60 L2579.50,510.57 L2580.00,521.55 L2580.50,532.53 L2581.00,543.51 L2581.50,544.68 L2582.00,542.87 L2582.50,541.94 L2583.00,541.24 L2583.50,540.28 L2584.00,539.86 L2584.50,538.55 L2585.00,537.59 L2585.50,538.24 L2586.00,539.59 L2586.50,541.33 L2587.00,545.03 L2587.50,545.51 L2588.00,547.46 L2588.50,547.60 L2589.00,546.53 L2589.50,545.95 L2590.00,545.48 L2590.50,543.91 L2591.00,543.64 L2591.50,542.05 L2592.00,541.34 L2592.50,541.52 L2593.00,535.68 L2593.50,515.31 L2594.00,494.94 L2594.50,474.58 L2594.90,458.30 L2595.00,462.37 L2595.50,482.71 L2596.00,503.05 L2596.50,523.38 L2597.00,543.70 L2597.50,548.05 L2598.00,547.23 L2598.50,545.36 L2599.00,544.45 L2599.50,543.08 L2600.00,541.44 L2600.50,539.02 L2601.00,536.70 L2601.50,533.91 L2602.00,532.07 L2602.50,532.44 L2603.00,532.68 L2603.50,532.13 L2604.00,532.54 L2604.50,532.26 L2605.00,532.69 L2605.50,534.43 L2606.00,537.00 L2606.50,538.28 L2607.00,539.71 L2607.50,541.52 L2608.00,541.25 L2608.50,540.28 L2609.00,539.42 L2609.50,528.97 L2610.00,510.59 L2610.50,492.21 L2611.00,473.85 L2611.20,466.50 L2611.50,477.52 L2612.00,495.87 L2612.50,514.22 L2613.00,532.55 L2613.50,546.74 L2614.00,545.20 L2614.50,544.15 L2615.00,542.75 L2615.50,539.78 L2616.00,536.23 L2616.50,531.75 L2617.00,526.46 L2617.50,521.89 L2618.00,520.75 L2618.50,523.21 L2619.00,528.34 L2619.50,532.20 L2620.00,535.37 L2620.50,537.25 L2621.00,539.32 L2621.50,538.70 L2622.00,537.92 L2622.50,536.50 L2623.00,536.81 L2623.50,535.15 L2624.00,533.72 L2624.50,520.97 L2625.00,502.47 L2625.50,483.98 L2626.00,465.50 L2626.50,483.97 L2627.00,502.44 L2627.50,520.90 L2628.00,539.35 L2628.50,546.99 L2629.00,546.09 L2629.50,542.95 L2630.00,538.62 L2630.50,535.28 L2631.00,531.06 L2631.50,528.96 L2632.00,527.37 L2632.50,528.09 L2633.00,530.74 L2633.50,534.16 L2634.00,537.48 L2634.50,539.37 L2635.00,541.79 L2635.50,543.58 L2636.00,544.15 L2636.50,544.71 L2637.00,543.69 L2637.50,542.56 L2638.00,540.51 L2638.50,540.00 L2639.00,538.42 L2639.50,537.48 L2640.00,536.63 L2640.50,531.80 L2641.00,519.70 L2641.50,507.60 L2642.00,495.52 L2642.10,493.10 L2642.50,502.76 L2643.00,514.84 L2643.50,526.90 L2644.00,538.96 L2644.50,543.76 L2645.00,542.76 L2645.50,540.60 L2646.00,537.60 L2646.50,535.69 L2647.00,533.31 L2647.50,532.29 L2648.00,530.79 L2648.50,532.04 L2649.00,535.63 L2649.50,539.84 L2650.00,542.01 L2650.50,541.84 L2651.00,540.46 L2651.50,538.22 L2652.00,536.38 L2652.50,534.26 L2653.00,534.22 L2653.50,535.20 L2654.00,536.17 L2654.50,537.84 L2655.00,539.83 L2655.50,540.57 L2656.00,539.80 L2656.50,538.24 L2657.00,527.08 L2657.50,515.50 L2658.00,503.94 L2658.40,494.70 L2658.50,497.01 L2659.00,508.54 L2659.50,520.06 L2660.00,531.57 L2660.50,543.07 L2661.00,544.08 L2661.50,541.69 L2662.00,541.10 L2662.50,541.91 L2663.00,541.03 L2663.50,539.20 L2664.00,536.40 L2664.50,532.99 L2665.00,531.85 L2665.50,531.28 L2666.00,533.45 L2666.50,536.52 L2667.00,537.54 L2667.50,538.45 L2668.00,537.62 L2668.50,535.11 L2669.00,532.02 L2669.50,530.37 L2670.00,530.06 L2670.50,530.92 L2671.00,532.27 L2671.50,534.31 L2672.00,533.52 L2672.50,532.55 L2673.00,533.05 L2673.50,517.13 L2674.00,497.51 L2674.50,477.90 L2675.00,458.30 L2675.50,477.88 L2676.00,497.45 L2676.50,517.01 L2677.00,536.55 L2677.50,542.43 L2678.00,540.25 L2678.50,537.33 L2679.00,536.26 L2679.50,536.61 L2680.00,539.15 L2680.50,542.29 L2681.00,543.20 L2681.50,543.54 L2682.00,542.74 L2682.50,542.89 L2683.00,541.54 L2683.50,539.23 L2684.00,536.60 L2684.50,531.50 L2685.00,525.44 L2685.50,521.52 L2686.00,518.44 L2686.50,517.09 L2687.00,519.77 L2687.50,525.08 L2688.00,528.73 L2688.50,530.60 L2689.00,525.69 L2689.50,507.71 L2690.00,489.74 L2690.50,471.78 L2690.70,464.60 L2691.00,475.36 L2691.50,493.29 L2692.00,511.21 L2692.50,529.11 L2693.00,540.63 L2693.50,537.48 L2694.00,533.30 L2694.50,530.09 L2695.00,526.41 L2695.50,522.03 L2696.00,519.88 L2696.50,521.81 L2697.00,522.35 L2697.50,523.29 L2698.00,523.79 L2698.50,524.64 L2699.00,526.19 L2699.50,529.97 L2700.00,534.55 L2700.50,535.74 L2701.00,537.13 L2701.50,536.64 L2702.00,537.06 L2702.50,537.04 L2703.00,536.49 L2703.50,534.94 L2704.00,532.61 L2704.50,531.86 L2705.00,529.53 L2705.50,523.14 L2706.00,509.18 L2706.50,495.23 L2707.00,481.30 L2707.50,495.22 L2708.00,509.13 L2708.50,523.02 L2709.00,536.90 L2709.50,541.48 L2710.00,539.85 L2710.50,538.66 L2711.00,537.05 L2711.50,536.27 L2712.00,535.78 L2712.50,537.21 L2713.00,537.91 L2713.50,538.57 L2714.00,536.65 L2714.50,534.01 L2715.00,528.71 L2715.50,524.64 L2716.00,522.71 L2716.50,524.38 L2717.00,527.69 L2717.50,530.40 L2718.00,532.39 L2718.50,535.37 L2719.00,535.87 L2719.50,535.62 L2720.00,535.45 L2720.50,535.96 L2721.00,535.80 L2721.50,523.90 L2722.00,509.04 L2722.50,494.20 L2723.00,479.36 L2723.10,476.40 L2723.50,488.25 L2724.00,503.06 L2724.50,517.85 L2725.00,532.62 L2725.50,542.55 L2726.00,542.25 L2726.50,540.51 L2727.00,539.53 L2727.50,537.86 L2728.00,538.64 L2728.50,538.73 L2729.00,538.48 L2729.50,540.12 L2730.00,539.93 L2730.50,537.66 L2731.00,535.63 L2731.50,531.73 L2732.00,527.57 L2732.50,525.12 L2733.00,523.74 L2733.50,525.50 L2734.00,529.55 L2734.50,532.43 L2735.00,535.28 L2735.50,535.88 L2736.00,534.82 L2736.50,533.29 L2737.00,531.87 L2737.50,531.41 L2738.00,530.34 L2738.50,513.02 L2739.00,495.72 L2739.50,478.42 L2739.90,464.60 L2740.00,468.05 L2740.50,485.32 L2741.00,502.57 L2741.50,519.81 L2742.00,537.03 L2742.50,538.33 L2743.00,535.83 L2743.50,535.73 L2744.00,537.33 L2744.50,539.45 L2745.00,539.81 L2745.50,540.21 L2746.00,536.87 L2746.50,534.17 L2747.00,530.13 L2747.50,527.93 L2748.00,527.25 L2748.50,527.66 L2749.00,526.51 L2749.50,524.19 L2750.00,524.90 L2750.50,529.32 L2751.00,533.21 L2751.50,533.48 L2752.00,533.29 L2752.50,532.45 L2753.00,531.05 L2753.50,530.93 L2754.00,529.32 L2754.50,522.17 L2755.00,504.63 L2755.50,487.10 L2756.00,469.60 L2756.20,462.60 L2756.50,473.09 L2757.00,490.57 L2757.50,508.03 L2758.00,525.47 L2758.50,536.83 L2759.00,537.60 L2759.50,535.06 L2760.00,531.95 L2760.50,526.88 L2761.00,523.42 L2761.50,523.62 L2762.00,526.23 L2762.50,529.86 L2763.00,530.33 L2763.50,530.57 L2764.00,531.73 L2764.50,534.54 L2765.00,535.56 L2765.50,535.30 L2766.00,535.18 L2766.50,535.40 L2767.00,534.54 L2767.50,534.22 L2768.00,533.00 L2768.50,532.77 L2769.00,530.18 L2769.50,516.00 L2770.00,501.85 L2770.50,487.70 L2770.90,476.40 L2771.00,479.22 L2771.50,493.33 L2772.00,507.43 L2772.50,521.51 L2773.00,535.57 L2773.50,537.11 L2774.00,535.63 L2774.50,531.87 L2775.00,528.47 L2775.50,525.52 L2776.00,523.41 L2776.50,523.31 L2777.00,522.09 L2777.50,523.00 L2778.00,523.83 L2778.50,528.25 L2779.00,531.67 L2779.50,535.11 L2780.00,535.93 L2780.50,537.10 L2781.00,536.57 L2781.50,534.41 L2782.00,531.91 L2782.50,530.30 L2783.00,529.52 L2783.50,528.47 L2784.00,525.71 L2784.50,518.74 L2785.00,503.02 L2785.50,487.32 L2786.00,471.64 L2786.10,468.50 L2786.50,481.04 L2787.00,496.69 L2787.50,512.33 L2788.00,527.95 L2788.50,537.59 L2789.00,535.44 L2789.50,534.71 L2790.00,534.22 L2790.50,532.28 L2791.00,527.35 L2791.50,520.60 L2792.00,517.62 L2792.50,519.56 L2793.00,524.12 L2793.50,527.97 L2794.00,531.84 L2794.50,534.84 L2795.00,536.25 L2795.50,536.21 L2796.00,536.93 L2796.50,536.16 L2797.00,534.31 L2797.50,532.99 L2798.00,531.40 L2798.50,530.09 L2799.00,529.06 L2799.50,528.10 L2800.00,525.52 L2800.50,512.01 L2801.00,494.52 L2801.50,477.05 L2802.00,459.60 L2802.50,477.04 L2803.00,494.46 L2803.50,511.86 L2804.00,529.25 L2804.50,534.16 L2805.00,528.84 L2805.50,520.30 L2806.00,508.56 L2806.50,502.34 L2807.00,506.10 L2807.50,514.50 L2808.00,523.25 L2808.50,530.46 L2809.00,533.79 L2809.50,534.50 L2810.00,534.88 L2810.50,535.80 L2811.00,536.09 L2811.50,535.94 L2812.00,534.53 L2812.50,535.27 L2813.00,533.59 L2813.50,532.67 L2814.00,532.96 L2814.50,533.31 L2815.00,532.82 L2815.50,531.62 L2816.00,531.39 L2816.50,528.29 L2817.00,510.62 L2817.50,492.96 L2818.00,475.32 L2818.50,457.70 L2819.00,475.31 L2819.50,492.90 L2820.00,510.47 L2820.50,528.03 L2821.00,533.60 L2821.50,531.59 L2822.00,531.02 L2822.50,528.39 L2823.00,527.16 L2823.50,526.74 L2824.00,528.11 L2824.50,530.01 L2825.00,530.07 L2825.50,529.74 L2826.00,529.20 L2826.50,526.38 L2827.00,524.95 L2827.50,525.00 L2828.00,525.68 L2828.50,525.63 L2829.00,525.02 L2829.50,522.06 L2830.00,516.57 L2830.50,515.34 L2831.00,516.42 L2831.50,518.77 L2832.00,522.90 L2832.50,523.80 L2833.00,522.32 L2833.50,507.46 L2834.00,492.62 L2834.50,477.79 L2834.80,468.90 L2835.00,474.82 L2835.50,489.62 L2836.00,504.40 L2836.50,519.16 L2837.00,532.16 L2837.50,530.98 L2838.00,528.41 L2838.50,522.88 L2839.00,518.28 L2839.50,515.63 L2840.00,517.61 L2840.50,520.27 L2841.00,523.69 L2841.50,527.74 L2842.00,530.41 L2842.50,532.05 L2843.00,531.61 L2843.50,531.69 L2844.00,529.09 L2844.50,524.59 L2845.00,520.94 L2845.50,517.70 L2846.00,519.67 L2846.50,523.02 L2847.00,524.95 L2847.50,526.41 L2848.00,525.78 L2848.50,526.37 L2849.00,525.95 L2849.50,508.11 L2850.00,490.29 L2850.50,472.49 L2851.00,454.70 L2851.50,472.48 L2852.00,490.25 L2852.50,508.00 L2853.00,525.75 L2853.50,532.51 L2854.00,533.42 L2854.50,531.79 L2855.00,531.09 L2855.50,530.05 L2856.00,528.04 L2856.50,525.98 L2857.00,521.74 L2857.50,515.93 L2858.00,514.61 L2858.50,518.64 L2859.00,525.50 L2859.50,530.13 L2860.00,532.32 L2860.50,532.02 L2861.00,528.16 L2861.50,523.81 L2862.00,518.89 L2862.50,514.93 L2863.00,511.90 L2863.50,512.71 L2864.00,516.42 L2864.50,519.80 L2865.00,523.67 L2865.50,514.13 L2866.00,491.50 L2866.50,468.87 L2867.00,446.26 L2867.30,432.70 L2867.50,441.74 L2868.00,464.33 L2868.50,486.90 L2869.00,509.47 L2869.50,530.49 L2870.00,526.49 L2870.50,522.04 L2871.00,516.42 L2871.50,508.53 L2872.00,505.59 L2872.50,506.29 L2873.00,510.25 L2873.50,515.37 L2874.00,521.40 L2874.50,526.00 L2875.00,528.26 L2875.50,530.90 L2876.00,532.02 L2876.50,531.25 L2877.00,530.64 L2877.50,529.82 L2878.00,529.68 L2878.50,529.35 L2879.00,528.62 L2879.50,525.95 L2880.00,524.59 L2880.50,522.73 L2881.00,522.44 L2881.50,520.45 L2882.00,504.24 L2882.50,487.25 L2883.00,470.27 L2883.40,456.70 L2883.50,460.09 L2884.00,477.05 L2884.50,493.99 L2885.00,510.92 L2885.50,527.84 L2886.00,530.33 L2886.50,528.66 L2887.00,526.96 L2887.50,523.34 L2888.00,519.50 L2888.50,516.29 L2889.00,510.99 L2889.50,506.74 L2890.00,505.61 L2890.50,509.42 L2891.00,515.45 L2891.50,522.82 L2892.00,527.22 L2892.50,528.93 L2893.00,527.92 L2893.50,526.81 L2894.00,525.77 L2894.50,525.95 L2895.00,525.81 L2895.50,524.57 L2896.00,523.94 L2896.50,522.87 L2897.00,522.08 L2897.50,515.93 L2898.00,497.55 L2898.50,479.17 L2899.00,460.81 L2899.30,449.80 L2899.50,457.14 L2900.00,475.48 L2900.50,493.80 L2901.00,512.12 L2901.50,530.42 L2902.00,530.20 L2902.50,529.78 L2903.00,526.43 L2903.50,523.59 L2904.00,518.02 L2904.50,512.24 L2905.00,509.11 L2905.50,509.89 L2906.00,514.49 L2906.50,519.89 L2907.00,525.56 L2907.50,527.13 L2908.00,526.88 L2908.50,525.35 L2909.00,522.11 L2909.50,517.65 L2910.00,512.26 L2910.50,507.31 L2911.00,506.87 L2911.50,509.09 L2912.00,511.14 L2912.50,515.09 L2913.00,515.88 L2913.50,505.33 L2914.00,484.90 L2914.50,464.48 L2915.00,444.08 L2915.10,440.00 L2915.50,456.31 L2916.00,476.70 L2916.50,497.07 L2917.00,517.43 L2917.50,526.82 L2918.00,524.72 L2918.50,522.38 L2919.00,521.37 L2919.50,521.10 L2920.00,521.27 L2920.50,520.49 L2921.00,520.40 L2921.50,516.78 L2922.00,513.07 L2922.50,508.85 L2923.00,507.11 L2923.50,508.12 L2924.00,513.66 L2924.50,518.33 L2925.00,524.15 L2925.50,527.65 L2926.00,529.73 L2926.50,528.55 L2927.00,528.53 L2927.50,527.30 L2928.00,525.86 L2928.50,524.43 L2929.00,522.77 L2929.50,522.35 L2930.00,507.13 L2930.50,488.89 L2931.00,470.66 L2931.50,452.44 L2931.60,448.80 L2932.00,463.36 L2932.50,481.56 L2933.00,499.74 L2933.50,517.91 L2934.00,525.61 L2934.50,522.10 L2935.00,516.32 L2935.50,509.02 L2936.00,500.53 L2936.50,496.49 L2937.00,495.96 L2937.50,498.97 L2938.00,504.40 L2938.50,510.45 L2939.00,515.90 L2939.50,520.53 L2940.00,522.54 L2940.50,523.50 L2941.00,523.84 L2941.50,523.23 L2942.00,522.63 L2942.50,522.08 L2943.00,523.06 L2943.50,522.33 L2944.00,518.84 L2944.50,495.16 L2945.00,471.50 L2945.50,447.84 L2946.00,424.20 L2946.50,447.83 L2947.00,471.45 L2947.50,495.06 L2948.00,518.65 L2948.50,521.53 L2949.00,514.91 L2949.50,509.97 L2950.00,506.61 L2950.50,510.12 L2951.00,515.12 L2951.50,520.82 L2952.00,525.53 L2952.50,527.54 L2953.00,527.47 L2953.50,526.93 L2954.00,528.09 L2954.50,527.33 L2955.00,526.44 L2955.50,524.87 L2956.00,520.37 L2956.50,513.62 L2957.00,505.58 L2957.50,502.30 L2958.00,503.12 L2958.50,507.89 L2959.00,512.31 L2959.50,515.50 L2960.00,515.72 L2960.50,506.67 L2961.00,488.90 L2961.50,471.13 L2962.00,453.35 L2962.10,449.80 L2962.50,464.02 L2963.00,481.79 L2963.50,499.56 L2964.00,517.34 L2964.50,527.19 L2965.00,525.91 L2965.50,523.15 L2966.00,518.91 L2966.50,513.93 L2967.00,507.53 L2967.50,501.49 L2968.00,497.80 L2968.50,499.85 L2969.00,504.27 L2969.50,511.42 L2970.00,517.95 L2970.50,522.98 L2971.00,525.22 L2971.50,525.10 L2972.00,524.94 L2972.50,523.45 L2973.00,523.66 L2973.50,521.79 L2974.00,521.87 L2974.50,520.82 L2975.00,518.97 L2975.50,519.25 L2976.00,517.45 L2976.50,502.20 L2977.00,483.76 L2977.50,465.33 L2978.00,446.90 L2978.50,465.33 L2979.00,483.76 L2979.50,502.20 L2980.00,520.63 L2980.50,526.33 L2981.00,524.66 L2981.50,519.48 L2982.00,514.15 L2982.50,508.27 L2983.00,506.75 L2983.50,510.09 L2984.00,515.68 L2984.50,520.30 L2985.00,521.97 L2985.50,519.79 L2986.00,517.23 L2986.50,513.34 L2987.00,510.15 L2987.50,510.09 L2988.00,513.14 L2988.50,516.99 L2989.00,519.91 L2989.50,521.38 L2990.00,523.05 L2990.50,523.55 L2991.00,523.15 L2991.50,523.55 L2992.00,522.22 L2992.50,515.73 L2993.00,503.45 L2993.50,491.18 L2994.00,478.91 L2994.20,474.00 L2994.50,481.36 L2995.00,493.64 L2995.50,505.91 L2996.00,518.18 L2996.50,526.41 L2997.00,525.26 L2997.50,523.13 L2998.00,522.75 L2998.50,522.79 L2999.00,523.21 L2999.50,523.50 L3000.00,523.82 L3000.50,522.96 L3001.00,521.34 L3001.50,514.73 L3002.00,507.26 L3002.50,501.31 L3003.00,500.19 L3003.50,504.86 L3004.00,513.80 L3004.50,521.33 L3005.00,524.99 L3005.50,525.59 L3006.00,526.03 L3006.50,525.29 L3007.00,523.43 L3007.50,521.66 L3008.00,520.20 L3008.50,518.84 L3009.00,516.89 L3009.50,502.77 L3010.00,488.72 L3010.50,474.74 L3010.90,463.60 L3011.00,466.38 L3011.50,480.22 L3012.00,494.00 L3012.50,507.71 L3013.00,521.35 L3013.50,523.73 L3014.00,520.94 L3014.50,517.86 L3015.00,514.10 L3015.50,510.31 L3016.00,508.58 L3016.50,507.32 L3017.00,508.54 L3017.50,509.57 L3018.00,512.96 L3018.50,514.72 L3019.00,514.64 L3019.50,512.59 L3020.00,508.81 L3020.50,505.36 L3021.00,504.96 L3021.50,509.34 L3022.00,513.12 L3022.50,515.25 L3023.00,514.47 L3023.50,512.79 L3024.00,512.92 L3024.50,510.48 L3025.00,508.59 L3025.50,503.27 L3026.00,495.47 L3026.50,487.74 L3026.60,486.20 L3027.00,492.33 L3027.50,499.93 L3028.00,507.45 L3028.50,514.92 L3029.00,517.28 L3029.50,515.64 L3030.00,514.76 L3030.50,514.07 L3031.00,513.92 L3031.50,513.36 L3032.00,515.10 L3032.50,516.93 L3033.00,517.45 L3033.50,516.89 L3034.00,516.24 L3034.50,516.28 L3035.00,513.68 L3035.50,511.31 L3036.00,507.61 L3036.50,500.91 L3037.00,494.07 L3037.50,489.08 L3038.00,488.60 L3038.50,494.38 L3039.00,501.77 L3039.50,505.60 L3040.00,505.37 L3040.50,504.80 L3041.00,502.65 L3041.50,497.39 L3042.00,485.81 L3042.50,474.24 L3042.90,465.00 L3043.00,467.31 L3043.50,478.85 L3044.00,490.37 L3044.50,501.87 L3045.00,513.36 L3045.50,514.52 L3046.00,512.77 L3046.50,510.97 L3047.00,508.97 L3047.50,508.75 L3048.00,510.61 L3048.50,512.63 L3049.00,514.01 L3049.50,515.90 L3050.00,516.31 L3050.50,514.25 L3051.00,510.90 L3051.50,506.15 L3052.00,499.74 L3052.50,495.59 L3053.00,493.05 L3053.50,491.89 L3054.00,492.98 L3054.50,496.44 L3055.00,500.32 L3055.50,504.57 L3056.00,508.24 L3056.50,509.90 L3057.00,509.70 L3057.50,490.66 L3058.00,470.50 L3058.50,450.35 L3059.00,430.22 L3059.10,426.20 L3059.50,442.29 L3060.00,462.39 L3060.50,482.48 L3061.00,502.55 L3061.50,512.11 L3062.00,509.78 L3062.50,507.60 L3063.00,506.29 L3063.50,506.34 L3064.00,508.85 L3064.50,510.74 L3065.00,513.05 L3065.50,514.86 L3066.00,514.68 L3066.50,513.62 L3067.00,513.93 L3067.50,511.49 L3068.00,509.11 L3068.50,506.11 L3069.00,500.71 L3069.50,496.36 L3070.00,495.70 L3070.50,496.80 L3071.00,501.36 L3071.50,504.86 L3072.00,506.38 L3072.50,507.13 L3073.00,505.58 L3073.50,488.42 L3074.00,470.30 L3074.50,452.19 L3075.00,434.10 L3075.50,452.18 L3076.00,470.24 L3076.50,488.28 L3077.00,506.31 L3077.50,511.09 L3078.00,509.12 L3078.50,507.57 L3079.00,506.55 L3079.50,507.20 L3080.00,508.61 L3080.50,509.82 L3081.00,510.73 L3081.50,512.45 L3082.00,511.64 L3082.50,511.25 L3083.00,509.19 L3083.50,503.79 L3084.00,493.79 L3084.50,483.39 L3085.00,478.55 L3085.50,481.26 L3086.00,489.62 L3086.50,499.72 L3087.00,505.51 L3087.50,506.87 L3088.00,507.40 L3088.50,505.34 L3089.00,503.13 L3089.50,490.17 L3090.00,471.38 L3090.50,452.61 L3091.00,433.85 L3091.10,430.10 L3091.50,445.09 L3092.00,463.82 L3092.50,482.54 L3093.00,501.23 L3093.50,511.60 L3094.00,509.65 L3094.50,506.10 L3095.00,504.48 L3095.50,503.87 L3096.00,502.23 L3096.50,500.09 L3097.00,496.73 L3097.50,492.15 L3098.00,488.63 L3098.50,488.81 L3099.00,492.60 L3099.50,499.01 L3100.00,505.49 L3100.50,509.51 L3101.00,511.72 L3101.50,512.79 L3102.00,512.06 L3102.50,511.53 L3103.00,509.70 L3103.50,509.81 L3104.00,510.03 L3104.50,499.55 L3105.00,481.51 L3105.50,463.36 L3106.00,445.10 L3106.30,434.10 L3106.50,441.46 L3107.00,459.93 L3107.50,478.50 L3108.00,497.18 L3108.50,515.87 L3109.00,514.48 L3109.50,511.97 L3110.00,511.16 L3110.50,511.93 L3111.00,514.69 L3111.50,515.48 L3112.00,516.90 L3112.50,518.57 L3113.00,517.42 L3113.50,517.55 L3114.00,516.19 L3114.50,512.77 L3115.00,507.79 L3115.50,502.40 L3116.00,495.11 L3116.50,491.92 L3117.00,494.22 L3117.50,498.36 L3118.00,503.86 L3118.50,509.57 L3119.00,512.95 L3119.50,513.08 L3120.00,514.18 L3120.50,500.48 L3121.00,485.53 L3121.50,470.47 L3122.00,455.30 L3122.50,470.57 L3123.00,485.95 L3123.50,501.44 L3124.00,517.03 L3124.50,513.89 L3125.00,507.95 L3125.50,502.83 L3126.00,498.69 L3126.50,498.46 L3127.00,503.74 L3127.50,510.80 L3128.00,515.57 L3128.50,520.91 L3129.00,524.19 L3129.50,524.90 L3130.00,525.18 L3130.50,524.62 L3131.00,525.69 L3131.50,524.10 L3132.00,524.34 L3132.50,523.78 L3133.00,522.14 L3133.50,515.75 L3134.00,509.11 L3134.50,502.29 L3135.00,501.64 L3135.50,507.83 L3136.00,512.51 L3136.50,516.14 L3137.00,511.50 L3137.50,497.00 L3138.00,482.50 L3138.50,468.00 L3138.70,462.20 L3139.00,470.90 L3139.50,485.40 L3140.00,499.90 L3140.50,514.40 L3141.00,524.65 L3141.50,523.91 L3142.00,521.98 L3142.50,522.28 L3143.00,522.28 L3143.50,523.27 L3144.00,523.65 L3144.50,523.75 L3145.00,524.55 L3145.50,525.51 L3146.00,526.01 L3146.50,526.36 L3147.00,526.13 L3147.50,524.33 L3148.00,519.94 L3148.50,515.40 L3149.00,508.90 L3149.50,500.59 L3150.00,495.55 L3150.50,498.94 L3151.00,505.29 L3151.50,513.84 L3152.00,519.46 L3152.50,520.75 L3153.00,506.99 L3153.50,491.15 L3154.00,475.31 L3154.50,459.47 L3154.60,456.30 L3155.00,468.97 L3155.50,484.81 L3156.00,500.65 L3156.50,516.50 L3157.00,524.72 L3157.50,523.45 L3158.00,523.89 L3158.50,522.80 L3159.00,521.04 L3159.50,518.51 L3160.00,512.54 L3160.50,505.97 L3161.00,502.77 L3161.50,505.70 L3162.00,510.68 L3162.50,513.84 L3163.00,514.19 L3163.50,512.05 L3164.00,513.41 L3164.50,517.51 L3165.00,520.95 L3165.50,522.24 L3166.00,522.73 L3166.50,523.00 L3167.00,521.00 L3167.50,519.92 L3168.00,520.01 L3168.50,517.62 L3169.00,514.04 L3169.50,499.08 L3170.00,484.13 L3170.50,469.17 L3170.80,460.20 L3171.00,466.18 L3171.50,481.14 L3172.00,496.09 L3172.50,511.05 L3173.00,526.00 L3173.50,526.42 L3174.00,525.91 L3174.50,525.19 L3175.00,525.01 L3175.50,525.07 L3176.00,525.36 L3176.50,524.84 L3177.00,521.94 L3177.50,520.30 L3178.00,519.11 L3178.50,519.19 L3179.00,519.65 L3179.50,518.85 L3180.00,518.63 L3180.50,521.49 L3181.00,521.76 L3181.50,521.72 L3182.00,521.36 L3182.50,520.15 L3183.00,517.86 L3183.50,516.17 L3184.00,515.64 L3184.50,513.43 L3185.00,512.20 L3185.50,499.16 L3186.00,482.39 L3186.50,465.62 L3186.90,452.20 L3187.00,455.55 L3187.50,472.33 L3188.00,489.10 L3188.50,505.87 L3189.00,522.65 L3189.50,525.96 L3190.00,523.43 L3190.50,519.77 L3191.00,514.53 L3191.50,511.63 L3192.00,509.58 L3192.50,510.96 L3193.00,513.04 L3193.50,514.89 L3194.00,514.23 L3194.50,510.74 L3195.00,507.40 L3195.50,507.43 L3196.00,507.26 L3196.50,510.29 L3197.00,512.87 L3197.50,516.44 L3198.00,517.19 L3198.50,518.38 L3199.00,518.45 L3199.50,516.71 L3200.00,514.74 L3200.50,513.87 L3201.00,511.64 L3201.50,494.83 L3202.00,477.51 L3202.50,460.19 L3202.80,449.80 L3203.00,456.73 L3203.50,474.05 L3204.00,491.36 L3204.50,508.68 L3205.00,525.22 L3205.50,524.61 L3206.00,524.63 L3206.50,524.24 L3207.00,524.29 L3207.50,522.40 L3208.00,521.48 L3208.50,519.76 L3209.00,518.36 L3209.50,515.23 L3210.00,511.82 L3210.50,508.80 L3211.00,507.68 L3211.50,507.68 L3212.00,508.54 L3212.50,512.23 L3213.00,515.80 L3213.50,517.57 L3214.00,518.80 L3214.50,520.09 L3215.00,520.53 L3215.50,520.25 L3216.00,519.05 L3216.50,516.53 L3217.00,514.73 L3217.50,502.07 L3218.00,487.12 L3218.50,472.16 L3218.90,460.20 L3219.00,463.19 L3219.50,478.15 L3220.00,493.10 L3220.50,508.05 L3221.00,523.01 L3221.50,523.31 L3222.00,520.35 L3222.50,513.91 L3223.00,508.84 L3223.50,505.07 L3224.00,504.00 L3224.50,506.16 L3225.00,511.94 L3225.50,516.94 L3226.00,522.04 L3226.50,525.12 L3227.00,526.04 L3227.50,526.22 L3228.00,525.14 L3228.50,522.96 L3229.00,519.80 L3229.50,515.74 L3230.00,512.99 L3230.50,510.63 L3231.00,509.67 L3231.50,511.15 L3232.00,514.60 L3232.50,514.98 L3233.00,516.18 L3233.50,506.28 L3234.00,489.85 L3234.50,473.42 L3235.00,456.99 L3235.10,453.70 L3235.50,466.85 L3236.00,483.28 L3236.50,499.71 L3237.00,516.14 L3237.50,523.78 L3238.00,520.98 L3238.50,520.19 L3239.00,520.43 L3239.50,520.20 L3240.00,517.42 L3240.50,512.95 L3241.00,510.25 L3241.50,510.79 L3242.00,515.27 L3242.50,518.97 L3243.00,521.43 L3243.50,520.25 L3244.00,515.08 L3244.50,509.21 L3245.00,506.20 L3245.50,508.07 L3246.00,511.64 L3246.50,516.01 L3247.00,517.24 L3247.50,517.94 L3248.00,516.29 L3248.50,514.65 L3249.00,512.78 L3249.50,500.00 L3250.00,481.44 L3250.50,462.87 L3251.00,444.30 L3251.50,462.87 L3252.00,481.44 L3252.50,500.00 L3253.00,518.57 L3253.50,523.36 L3254.00,522.11 L3254.50,516.27 L3255.00,510.39 L3255.50,503.00 L3256.00,494.55 L3256.50,491.29 L3257.00,494.22 L3257.50,501.63 L3258.00,509.52 L3258.50,517.43 L3259.00,521.89 L3259.50,524.90 L3260.00,523.95 L3260.50,523.85 L3261.00,522.29 L3261.50,521.95 L3262.00,520.42 L3262.50,518.47 L3263.00,517.73 L3263.50,516.42 L3264.00,515.81 L3264.50,513.98 L3265.00,513.33 L3265.50,507.48 L3266.00,492.05 L3266.50,476.62 L3267.00,461.19 L3267.10,458.10 L3267.50,470.45 L3268.00,485.88 L3268.50,501.31 L3269.00,516.74 L3269.50,522.13 L3270.00,516.68 L3270.50,509.22 L3271.00,497.91 L3271.50,489.79 L3272.00,488.98 L3272.50,496.21 L3273.00,507.93 L3273.50,518.57 L3274.00,524.27 L3274.50,526.29 L3275.00,527.46 L3275.50,527.01 L3276.00,525.83 L3276.50,524.84 L3277.00,523.00 L3277.50,522.23 L3278.00,520.02 L3278.50,519.58 L3279.00,519.02 L3279.50,517.93 L3280.00,517.14 L3280.50,515.64 L3281.00,514.25 L3281.50,502.00 L3282.00,487.00 L3282.50,472.00 L3282.90,460.00 L3283.00,463.00 L3283.50,478.00 L3284.00,493.00 L3284.50,508.00 L3285.00,523.00 L3285.50,524.64 L3286.00,523.86 L3286.50,522.63 L3287.00,522.19 L3287.50,523.69 L3288.00,525.50 L3288.50,526.44 L3289.00,526.21 L3289.50,526.36 L3290.00,525.78 L3290.50,523.51 L3291.00,520.77 L3291.50,516.30 L3292.00,511.48 L3292.50,505.19 L3293.00,503.00 L3293.50,504.36 L3294.00,507.78 L3294.50,513.11 L3295.00,516.82 L3295.50,516.71 L3296.00,517.19 L3296.50,497.49 L3297.00,477.13 L3297.50,456.76 L3298.00,436.40 L3298.50,456.76 L3299.00,477.13 L3299.50,497.49 L3300.00,517.85 L3300.50,523.88 L3301.00,521.15 L3301.50,517.67 L3302.00,515.12 L3302.50,513.61 L3303.00,515.35 L3303.50,518.29 L3304.00,521.19 L3304.50,523.86 L3305.00,524.49 L3305.50,525.15 L3306.00,524.95 L3306.50,522.65 L3307.00,518.34 L3307.50,515.61 L3308.00,515.96 L3308.50,518.80 L3309.00,522.71 L3309.50,523.44 L3310.00,522.46 L3310.50,522.70 L3311.00,521.57 L3311.50,521.11 L3312.00,519.35 L3312.50,515.91 L3313.00,503.30 L3313.50,490.68 L3314.00,478.07 L3314.30,470.50 L3314.50,475.55 L3315.00,488.16 L3315.50,500.77 L3316.00,513.39 L3316.50,522.92 L3317.00,520.07 L3317.50,516.45 L3318.00,511.24 L3318.50,506.40 L3319.00,504.06 L3319.50,504.53 L3320.00,509.32 L3320.50,516.01 L3321.00,520.04 L3321.50,522.62 L3322.00,525.15 L3322.50,525.47 L3323.00,524.89 L3323.50,524.55 L3324.00,521.58 L3324.50,518.17 L3325.00,514.73 L3325.50,510.91 L3326.00,506.57 L3326.50,505.54 L3327.00,508.32 L3327.50,511.54 L3328.00,514.20 L3328.50,514.53 L3329.00,495.42 L3329.50,476.30 L3330.00,457.19 L3330.40,441.90 L3330.50,445.72 L3331.00,464.84 L3331.50,483.95 L3332.00,503.06 L3332.50,522.18 L3333.00,524.06 L3333.50,522.33 L3334.00,519.73 L3334.50,516.58 L3335.00,512.24 L3335.50,508.77 L3336.00,504.40 L3336.50,500.88 L3337.00,500.76 L3337.50,506.26 L3338.00,512.39 L3338.50,519.64 L3339.00,524.66 L3339.50,526.67 L3340.00,526.77 L3340.50,525.97 L3341.00,526.74 L3341.50,525.84 L3342.00,524.81 L3342.50,525.12 L3343.00,526.31 L3343.50,527.31 L3344.00,526.95 L3344.50,525.65" stroke="#6592eb" stroke-width="2.1" fill="none" stroke-linejoin="round"/>
<path d="M1818.00,486.60 L1818.50,486.60 L1819.00,486.60 L1819.50,486.60 L1820.00,486.60 L1820.50,486.60 L1821.00,486.60 L1821.50,486.60 L1822.00,486.60 L1822.50,486.60 L1823.00,486.60 L1823.50,486.60 L1824.00,486.60 L1824.50,486.60 L1825.00,486.60 L1825.50,486.60 L1826.00,486.60 L1826.50,486.60 L1826.70,486.60 L1827.00,486.60 L1827.50,486.60 L1828.00,486.60 L1828.50,486.60 L1829.00,486.60 L1829.50,486.60 L1830.00,486.60 L1830.50,486.60 L1831.00,486.60 L1831.50,486.60 L1832.00,486.60 L1832.50,486.60 L1833.00,486.60 L1833.50,486.60 L1834.00,486.60 L1834.50,486.60 L1835.00,486.60 L1835.50,486.60 L1836.00,486.60 L1836.50,486.60 L1837.00,486.60 L1837.50,486.60 L1838.00,486.60 L1838.50,486.60 L1839.00,486.60 L1839.50,486.60 L1840.00,486.60 L1840.50,486.60 L1841.00,486.60 L1841.50,486.60 L1842.00,486.60 L1842.50,486.60 L1843.00,486.60 L1843.40,486.60 L1843.50,486.60 L1844.00,486.60 L1844.50,486.60 L1845.00,486.60 L1845.50,486.60 L1846.00,486.60 L1846.50,486.60 L1847.00,486.60 L1847.50,486.60 L1848.00,486.60 L1848.50,486.60 L1849.00,486.60 L1849.50,486.60 L1850.00,486.60 L1850.50,486.60 L1851.00,486.60 L1851.50,486.60 L1852.00,486.60 L1852.50,486.60 L1853.00,486.60 L1853.50,486.60 L1854.00,486.60 L1854.50,486.60 L1855.00,486.60 L1855.50,486.60 L1856.00,486.60 L1856.50,486.60 L1857.00,486.60 L1857.50,486.60 L1858.00,481.24 L1858.50,460.96 L1858.80,448.80 L1859.00,456.91 L1859.50,477.18 L1860.00,486.60 L1860.50,486.60 L1861.00,486.60 L1861.50,486.60 L1862.00,486.60 L1862.50,486.60 L1863.00,486.60 L1863.50,486.60 L1864.00,531.19 L1864.50,532.64 L1865.00,535.58 L1865.50,536.76 L1866.00,538.22 L1866.50,537.25 L1867.00,537.71 L1867.50,486.60 L1868.00,486.60 L1868.50,486.60 L1869.00,486.60 L1869.50,486.60 L1870.00,486.60 L1870.50,486.60 L1871.00,486.60 L1871.50,486.60 L1872.00,486.60 L1872.50,486.60 L1873.00,486.60 L1873.50,486.60 L1874.00,486.60 L1874.50,486.60 L1874.90,484.80 L1875.00,486.60 L1875.50,486.60 L1876.00,486.60 L1876.50,486.60 L1877.00,486.60 L1877.50,486.60 L1878.00,486.60 L1878.50,486.60 L1879.00,486.60 L1879.50,486.60 L1880.00,486.60 L1880.50,486.60 L1881.00,486.60 L1881.50,486.60 L1882.00,486.60 L1882.50,486.60 L1883.00,486.60 L1883.50,486.60 L1884.00,486.60 L1884.50,486.60 L1885.00,486.60 L1885.50,486.60 L1886.00,486.60 L1886.50,486.60 L1887.00,486.60 L1887.50,486.60 L1888.00,486.60 L1888.50,486.60 L1889.00,486.60 L1889.50,486.60 L1890.00,482.36 L1890.50,459.18 L1891.00,436.00 L1891.50,459.18 L1892.00,482.36 L1892.50,486.60 L1893.00,486.60 L1893.50,486.60 L1894.00,486.60 L1894.50,486.60 L1895.00,486.60 L1895.50,486.60 L1896.00,486.60 L1896.50,486.60 L1897.00,486.60 L1897.50,486.60 L1898.00,486.60 L1898.50,486.60 L1899.00,486.60 L1899.50,486.60 L1900.00,486.60 L1900.50,486.60 L1901.00,486.60 L1901.50,486.60 L1902.00,486.60 L1902.50,486.60 L1903.00,486.60 L1903.50,486.60 L1904.00,486.60 L1904.50,486.60 L1905.00,486.60 L1905.50,486.60 L1906.00,467.49 L1906.50,442.31 L1906.80,427.20 L1907.00,437.27 L1907.50,462.45 L1908.00,486.60 L1908.50,486.60 L1909.00,486.60 L1909.50,486.60 L1910.00,486.60 L1910.50,486.60 L1911.00,486.60 L1911.50,486.60 L1912.00,486.60 L1912.50,486.60 L1913.00,486.60 L1913.50,486.60 L1914.00,486.60 L1914.50,486.60 L1915.00,486.60 L1915.50,486.60 L1916.00,486.60 L1916.50,486.60 L1917.00,486.60 L1917.50,486.60 L1918.00,486.60 L1918.50,486.60 L1919.00,486.60 L1919.50,486.60 L1920.00,486.60 L1920.50,486.60 L1921.00,486.60 L1921.50,486.60 L1922.00,473.84 L1922.50,452.45 L1922.70,443.90 L1923.00,456.73 L1923.50,478.12 L1924.00,486.60 L1924.50,486.60 L1925.00,486.60 L1925.50,486.60 L1926.00,486.60 L1926.50,486.60 L1927.00,486.60 L1927.50,486.60 L1928.00,486.60 L1928.50,486.60 L1929.00,486.60 L1929.50,486.60 L1930.00,486.60 L1930.50,486.60 L1931.00,486.60 L1931.50,486.60 L1932.00,486.60 L1932.50,486.60 L1933.00,486.60 L1933.50,486.60 L1934.00,486.60 L1934.50,486.60 L1935.00,486.60 L1935.50,486.60 L1936.00,486.60 L1936.50,486.60 L1937.00,486.60 L1937.50,486.60 L1938.00,465.96 L1938.50,440.24 L1938.80,424.80 L1939.00,435.09 L1939.50,460.82 L1940.00,486.55 L1940.50,486.60 L1941.00,486.60 L1941.50,486.60 L1942.00,486.60 L1942.50,486.60 L1943.00,486.60 L1943.50,486.60 L1944.00,486.60 L1944.50,486.60 L1945.00,486.60 L1945.50,486.60 L1946.00,486.60 L1946.50,486.60 L1947.00,486.60 L1947.50,486.60 L1948.00,486.60 L1948.50,486.60 L1949.00,486.60 L1949.50,486.60 L1950.00,486.60 L1950.50,486.60 L1951.00,486.60 L1951.50,486.60 L1952.00,486.60 L1952.50,486.60 L1953.00,486.60 L1953.50,486.60 L1954.00,483.22 L1954.50,462.15 L1954.90,445.30 L1955.00,449.51 L1955.50,470.58 L1956.00,486.60 L1956.50,486.60 L1957.00,486.60 L1957.50,486.60 L1958.00,486.60 L1958.50,486.60 L1959.00,486.60 L1959.50,486.60 L1960.00,486.60 L1960.50,486.60 L1961.00,486.60 L1961.50,486.60 L1962.00,486.60 L1962.50,486.60 L1963.00,486.60 L1963.50,486.60 L1964.00,486.60 L1964.50,486.60 L1965.00,486.60 L1965.50,486.60 L1966.00,486.60 L1966.50,486.60 L1967.00,486.60 L1967.50,486.60 L1968.00,486.60 L1968.50,486.60 L1969.00,486.60 L1969.50,476.04 L1970.00,456.67 L1970.10,452.80 L1970.50,468.29 L1971.00,486.60 L1971.50,486.60 L1972.00,486.60 L1972.50,486.60 L1973.00,486.60 L1973.50,486.60 L1974.00,486.60 L1974.50,486.60 L1975.00,486.60 L1975.50,486.60 L1976.00,486.60 L1976.50,486.60 L1977.00,486.60 L1977.50,486.60 L1978.00,486.60 L1978.50,486.60 L1979.00,486.60 L1979.50,486.60 L1980.00,486.60 L1980.50,486.60 L1981.00,486.60 L1981.50,486.60 L1982.00,486.60 L1982.50,486.60 L1983.00,486.60 L1983.50,486.60 L1984.00,486.60 L1984.50,486.60 L1985.00,486.60 L1985.50,474.10 L1986.00,455.30 L1986.50,474.10 L1987.00,486.60 L1987.50,486.60 L1988.00,486.60 L1988.50,486.60 L1989.00,486.60 L1989.50,486.60 L1990.00,486.60 L1990.50,486.60 L1991.00,486.60 L1991.50,486.60 L1992.00,486.60 L1992.50,486.60 L1993.00,486.60 L1993.50,486.60 L1994.00,486.60 L1994.50,486.60 L1995.00,486.60 L1995.50,486.60 L1996.00,486.60 L1996.50,486.60 L1997.00,486.60 L1997.50,486.60 L1998.00,486.60 L1998.50,486.60 L1999.00,486.60 L1999.50,486.60 L2000.00,486.60 L2000.50,486.60 L2001.00,486.60 L2001.50,486.60 L2002.00,481.22 L2002.50,462.28 L2002.70,454.70 L2003.00,466.07 L2003.50,485.01 L2004.00,486.60 L2004.50,486.60 L2005.00,486.60 L2005.50,486.60 L2006.00,486.60 L2006.50,486.60 L2007.00,486.60 L2007.50,486.60 L2008.00,486.60 L2008.50,486.60 L2009.00,486.60 L2009.50,486.60 L2010.00,486.60 L2010.50,486.60 L2011.00,486.60 L2011.50,537.55 L2012.00,535.85 L2012.50,533.90 L2013.00,530.76 L2013.50,527.66 L2014.00,525.39 L2014.50,523.28 L2015.00,486.60 L2015.50,486.60 L2016.00,486.60 L2016.50,486.60 L2017.00,486.60 L2017.50,486.60 L2018.00,481.10 L2018.50,460.67 L2018.80,448.40 L2019.00,456.58 L2019.50,477.03 L2020.00,486.60 L2020.50,486.60 L2021.00,486.60 L2021.50,486.60 L2022.00,486.60 L2022.50,486.60 L2023.00,486.60 L2023.50,486.60 L2024.00,486.60 L2024.50,486.60 L2025.00,486.60 L2025.50,486.60 L2026.00,486.60 L2026.50,486.60 L2027.00,486.60 L2027.50,486.60 L2028.00,486.60 L2028.50,486.60 L2029.00,486.60 L2029.50,486.60 L2030.00,486.60 L2030.50,486.60 L2031.00,486.60 L2031.50,486.60 L2032.00,486.60 L2032.50,486.60 L2033.00,486.60 L2033.50,486.60 L2034.00,486.60 L2034.50,486.53 L2034.80,478.30 L2035.00,483.79 L2035.50,486.60 L2036.00,486.60 L2036.50,486.60 L2037.00,486.60 L2037.50,486.60 L2038.00,486.60 L2038.50,486.60 L2039.00,486.60 L2039.50,486.60 L2040.00,486.60 L2040.50,486.60 L2041.00,486.60 L2041.50,486.60 L2042.00,486.60 L2042.50,486.60 L2043.00,486.60 L2043.50,486.60 L2044.00,486.60 L2044.50,486.60 L2045.00,486.60 L2045.50,486.60 L2046.00,486.60 L2046.50,486.60 L2047.00,486.60 L2047.50,486.60 L2048.00,486.60 L2048.50,486.60 L2049.00,486.60 L2049.50,486.60 L2050.00,484.20 L2050.50,463.14 L2050.90,446.30 L2051.00,450.51 L2051.50,471.57 L2052.00,486.60 L2052.50,486.60 L2053.00,486.60 L2053.50,486.60 L2054.00,486.60 L2054.50,486.60 L2055.00,486.60 L2055.50,486.60 L2056.00,486.60 L2056.50,486.60 L2057.00,486.60 L2057.50,486.60 L2058.00,486.60 L2058.50,486.60 L2059.00,486.60 L2059.50,486.60 L2060.00,486.60 L2060.50,486.60 L2061.00,486.60 L2061.50,486.60 L2062.00,486.60 L2062.50,486.60 L2063.00,486.60 L2063.50,486.60 L2064.00,486.60 L2064.50,486.60 L2065.00,486.60 L2065.50,486.60 L2066.00,486.60 L2066.50,464.80 L2067.00,442.90 L2067.50,464.80 L2068.00,486.60 L2068.50,486.60 L2069.00,486.60 L2069.50,486.60 L2070.00,486.60 L2070.50,486.60 L2071.00,486.60 L2071.50,486.60 L2072.00,486.60 L2072.50,486.60 L2073.00,486.60 L2073.50,486.60 L2074.00,486.60 L2074.50,486.60 L2075.00,486.60 L2075.50,486.60 L2076.00,486.60 L2076.50,486.60 L2077.00,486.60 L2077.50,486.60 L2078.00,486.60 L2078.50,486.60 L2079.00,486.60 L2079.50,486.60 L2080.00,486.60 L2080.50,486.60 L2081.00,486.60 L2081.50,486.60 L2082.00,486.60 L2082.50,473.21 L2083.00,453.70 L2083.50,473.21 L2084.00,486.60 L2084.50,486.60 L2085.00,486.60 L2085.50,486.60 L2086.00,486.60 L2086.50,486.60 L2087.00,486.60 L2087.50,486.60 L2088.00,486.60 L2088.50,486.60 L2089.00,486.60 L2089.50,486.60 L2090.00,486.60 L2090.50,486.60 L2091.00,486.60 L2091.50,486.60 L2092.00,486.60 L2092.50,486.60 L2093.00,486.60 L2093.50,486.60 L2094.00,486.60 L2094.50,486.60 L2095.00,486.60 L2095.50,486.60 L2096.00,486.60 L2096.50,486.60 L2097.00,486.60 L2097.50,486.60 L2098.00,486.60 L2098.50,472.69 L2099.00,451.70 L2099.10,447.50 L2099.50,464.29 L2100.00,485.29 L2100.50,486.60 L2101.00,486.60 L2101.50,486.60 L2102.00,486.60 L2102.50,486.60 L2103.00,486.60 L2103.50,486.60 L2104.00,486.60 L2104.50,486.60 L2105.00,486.60 L2105.50,486.60 L2106.00,486.60 L2106.50,486.60 L2107.00,486.60 L2107.50,486.60 L2108.00,486.60 L2108.50,486.60 L2109.00,486.60 L2109.50,486.60 L2110.00,486.60 L2110.50,486.60 L2111.00,486.60 L2111.50,486.60 L2112.00,486.60 L2112.50,486.60 L2113.00,486.60 L2113.50,486.60 L2114.00,478.90 L2114.50,457.02 L2114.80,443.90 L2115.00,452.65 L2115.50,474.53 L2116.00,486.60 L2116.50,486.60 L2117.00,486.60 L2117.50,486.60 L2118.00,486.60 L2118.50,486.60 L2119.00,486.60 L2119.50,486.60 L2120.00,486.60 L2120.50,486.60 L2121.00,486.60 L2121.50,486.60 L2122.00,486.60 L2122.50,486.60 L2123.00,486.60 L2123.50,486.60 L2124.00,486.60 L2124.50,486.60 L2125.00,486.60 L2125.50,486.60 L2126.00,486.60 L2126.50,486.60 L2127.00,486.60 L2127.50,486.60 L2128.00,486.60 L2128.50,486.60 L2129.00,486.60 L2129.50,484.70 L2130.00,466.13 L2130.20,458.70 L2130.50,469.85 L2131.00,486.60 L2131.50,486.60 L2132.00,486.60 L2132.50,486.60 L2133.00,486.60 L2133.50,486.60 L2134.00,486.60 L2134.50,486.60 L2135.00,486.60 L2135.50,486.60 L2136.00,486.60 L2136.50,486.60 L2137.00,486.60 L2137.50,486.60 L2138.00,486.60 L2138.50,486.60 L2139.00,486.60 L2139.50,486.60 L2140.00,486.60 L2140.50,486.60 L2141.00,486.60 L2141.50,486.60 L2142.00,486.60 L2142.50,486.60 L2143.00,486.60 L2143.50,486.60 L2144.00,486.60 L2144.50,486.60 L2145.00,486.60 L2145.50,486.60 L2146.00,480.10 L2146.50,459.89 L2146.70,451.80 L2147.00,463.93 L2147.50,484.15 L2148.00,486.60 L2148.50,486.60 L2149.00,486.60 L2149.50,486.60 L2150.00,486.60 L2150.50,486.60 L2151.00,486.60 L2151.50,486.60 L2152.00,486.60 L2152.50,486.60 L2153.00,486.60 L2153.50,486.60 L2154.00,486.60 L2154.50,486.60 L2155.00,486.60 L2155.50,486.60 L2156.00,486.60 L2156.50,486.60 L2157.00,486.60 L2157.50,486.60 L2158.00,486.60 L2158.50,486.60 L2159.00,486.60 L2159.50,486.60 L2160.00,486.60 L2160.50,486.60 L2161.00,486.60 L2161.50,486.60 L2162.00,479.70 L2162.50,486.60 L2163.00,486.60 L2163.50,486.60 L2164.00,486.60 L2164.50,486.60 L2165.00,486.60 L2165.50,486.60 L2166.00,486.60 L2166.50,486.60 L2167.00,486.60 L2167.50,486.60 L2168.00,486.60 L2168.50,486.60 L2169.00,486.60 L2169.50,486.60 L2170.00,486.60 L2170.50,486.60 L2171.00,486.60 L2171.50,486.60 L2172.00,486.60 L2172.50,486.60 L2173.00,486.60 L2173.50,486.60 L2174.00,486.60 L2174.50,486.60 L2175.00,486.60 L2175.50,486.60 L2176.00,486.60 L2176.50,486.60 L2177.00,486.60 L2177.50,486.60 L2178.00,486.60 L2178.50,473.80 L2178.70,466.90 L2179.00,477.26 L2179.50,486.60 L2180.00,486.60 L2180.50,486.60 L2181.00,486.60 L2181.50,486.60 L2182.00,486.60 L2182.50,486.60 L2183.00,486.60 L2183.50,486.60 L2184.00,486.60 L2184.50,486.60 L2185.00,486.60 L2185.50,486.60 L2186.00,486.60 L2186.50,486.60 L2187.00,486.60 L2187.50,486.60 L2188.00,486.60 L2188.50,486.60 L2189.00,486.60 L2189.50,486.60 L2190.00,486.60 L2190.50,486.60 L2191.00,486.60 L2191.50,486.60 L2192.00,486.60 L2192.50,486.60 L2193.00,486.60 L2193.50,486.60 L2194.00,486.60 L2194.50,465.37 L2194.90,447.80 L2195.00,452.20 L2195.50,474.19 L2196.00,486.60 L2196.50,486.60 L2197.00,486.60 L2197.50,486.60 L2198.00,486.60 L2198.50,486.60 L2199.00,486.60 L2199.50,486.60 L2200.00,486.60 L2200.50,486.60 L2201.00,486.60 L2201.50,486.60 L2202.00,486.60 L2202.50,486.60 L2203.00,486.60 L2203.50,486.60 L2204.00,486.60 L2204.50,486.60 L2205.00,486.60 L2205.50,486.60 L2206.00,486.60 L2206.50,486.60 L2207.00,486.60 L2207.50,486.60 L2208.00,486.60 L2208.50,486.60 L2209.00,486.60 L2209.50,486.60 L2210.00,486.60 L2210.50,466.16 L2210.80,453.70 L2211.00,462.00 L2211.50,482.77 L2212.00,486.60 L2212.50,486.60 L2213.00,486.60 L2213.50,486.60 L2214.00,486.60 L2214.50,486.60 L2215.00,486.60 L2215.50,486.60 L2216.00,486.60 L2216.50,486.60 L2217.00,486.60 L2217.50,486.60 L2218.00,486.60 L2218.50,486.60 L2219.00,486.60 L2219.50,486.60 L2220.00,486.60 L2220.50,486.60 L2221.00,486.60 L2221.50,486.60 L2222.00,486.60 L2222.50,486.60 L2223.00,486.60 L2223.50,486.60 L2224.00,486.60 L2224.50,486.60 L2225.00,486.60 L2225.50,486.60 L2226.00,486.60 L2226.50,486.60 L2227.00,484.20 L2227.10,481.30 L2227.50,486.60 L2228.00,486.60 L2228.50,486.60 L2229.00,486.60 L2229.50,486.60 L2230.00,486.60 L2230.50,486.60 L2231.00,486.60 L2231.50,486.60 L2232.00,486.60 L2232.50,486.60 L2233.00,486.60 L2233.50,486.60 L2234.00,486.60 L2234.50,486.60 L2235.00,486.60 L2235.50,486.60 L2236.00,486.60 L2236.50,486.60 L2237.00,486.60 L2237.50,486.60 L2238.00,486.60 L2238.50,486.60 L2239.00,486.60 L2239.50,486.60 L2240.00,486.60 L2240.50,486.60 L2241.00,486.60 L2241.50,486.60 L2242.00,486.60 L2242.50,486.60 L2242.90,477.00 L2243.00,480.10 L2243.50,486.60 L2244.00,486.60 L2244.50,486.60 L2245.00,486.60 L2245.50,486.60 L2246.00,486.60 L2246.50,486.60 L2247.00,486.60 L2247.50,486.60 L2248.00,486.60 L2248.50,486.60 L2249.00,486.60 L2249.50,486.60 L2250.00,486.60 L2250.50,486.60 L2251.00,486.60 L2251.50,486.60 L2252.00,486.60 L2252.50,486.60 L2253.00,486.60 L2253.50,486.60 L2254.00,486.60 L2254.50,486.60 L2255.00,486.60 L2255.50,486.60 L2256.00,486.60 L2256.50,486.60 L2257.00,486.60 L2257.50,486.60 L2258.00,486.60 L2258.50,485.95 L2259.00,468.50 L2259.50,485.95 L2260.00,486.60 L2260.50,486.60 L2261.00,486.60 L2261.50,486.60 L2262.00,486.60 L2262.50,486.60 L2263.00,486.60 L2263.50,486.60 L2264.00,486.60 L2264.50,486.60 L2265.00,486.60 L2265.50,486.60 L2266.00,486.60 L2266.50,486.60 L2267.00,486.60 L2267.50,486.60 L2268.00,486.60 L2268.50,486.60 L2269.00,486.60 L2269.50,486.60 L2270.00,486.60 L2270.50,486.60 L2271.00,486.60 L2271.50,486.60 L2272.00,486.60 L2272.50,486.60 L2273.00,486.60 L2273.50,486.60 L2274.00,486.60 L2274.50,477.31 L2274.70,470.50 L2275.00,480.71 L2275.50,486.60 L2276.00,486.60 L2276.50,486.60 L2277.00,486.60 L2277.50,486.60 L2278.00,486.60 L2278.50,486.60 L2279.00,486.60 L2279.50,486.60 L2280.00,486.60 L2280.50,486.60 L2281.00,486.60 L2281.50,486.60 L2282.00,486.60 L2282.50,486.60 L2283.00,486.60 L2283.50,486.60 L2284.00,486.60 L2284.50,486.60 L2285.00,486.60 L2285.50,486.60 L2286.00,486.60 L2286.50,486.60 L2287.00,486.60 L2287.50,486.60 L2288.00,486.60 L2288.50,486.60 L2289.00,486.60 L2289.50,486.60 L2290.00,486.60 L2290.50,486.60 L2290.90,477.00 L2291.00,480.11 L2291.50,486.60 L2292.00,486.60 L2292.50,486.60 L2293.00,486.60 L2293.50,486.60 L2294.00,486.60 L2294.50,486.60 L2295.00,486.60 L2295.50,486.60 L2296.00,486.60 L2296.50,486.60 L2297.00,486.60 L2297.50,486.60 L2298.00,486.60 L2298.50,486.60 L2299.00,486.60 L2299.50,486.60 L2300.00,486.60 L2300.50,486.60 L2301.00,486.60 L2301.50,486.60 L2302.00,486.60 L2302.50,486.60 L2303.00,486.60 L2303.50,486.60 L2304.00,486.60 L2304.50,486.60 L2305.00,486.60 L2305.50,486.60 L2306.00,486.60 L2306.20,486.60 L2306.50,486.60 L2307.00,486.60 L2307.50,486.60 L2308.00,486.60 L2308.50,486.60 L2309.00,486.60 L2309.50,486.60 L2310.00,486.60 L2310.50,486.60 L2311.00,486.60 L2311.50,486.60 L2312.00,486.60 L2312.50,486.60 L2313.00,486.60 L2313.50,486.60 L2314.00,486.60 L2314.50,486.60 L2315.00,486.60 L2315.50,486.60 L2316.00,486.60 L2316.50,486.60 L2317.00,486.60 L2317.50,486.60 L2318.00,486.60 L2318.50,486.60 L2319.00,486.60 L2319.50,486.60 L2320.00,486.60 L2320.50,486.60 L2321.00,486.60 L2321.50,486.60 L2322.00,486.60 L2322.30,485.60 L2322.50,486.60 L2323.00,486.60 L2323.50,486.60 L2324.00,486.60 L2324.50,486.60 L2325.00,486.60 L2325.50,486.60 L2326.00,486.60 L2326.50,486.60 L2327.00,486.60 L2327.50,486.60 L2328.00,486.60 L2328.50,486.60 L2329.00,486.60 L2329.50,486.60 L2330.00,486.60 L2330.50,486.60 L2331.00,486.60 L2331.50,486.60 L2332.00,486.60 L2332.50,486.60 L2333.00,486.60 L2333.50,486.60 L2334.00,486.60 L2334.50,486.60 L2335.00,486.60 L2335.50,486.60 L2336.00,486.60 L2336.50,486.60 L2337.00,486.60 L2337.50,486.60 L2338.00,486.60 L2338.50,481.79 L2339.00,463.00 L2339.50,481.79 L2340.00,486.60 L2340.50,486.60 L2341.00,486.60 L2341.50,486.60 L2342.00,486.60 L2342.50,486.60 L2343.00,486.60 L2343.50,486.60 L2344.00,486.60 L2344.50,486.60 L2345.00,486.60 L2345.50,486.60 L2346.00,486.60 L2346.50,486.60 L2347.00,486.60 L2347.50,486.60 L2348.00,486.60 L2348.50,486.60 L2349.00,486.60 L2349.50,486.60 L2350.00,486.60 L2350.50,486.60 L2351.00,486.60 L2351.50,486.60 L2352.00,486.60 L2352.50,486.60 L2353.00,486.60 L2353.50,486.60 L2354.00,486.60 L2354.50,472.56 L2354.80,461.00 L2355.00,468.71 L2355.50,486.60 L2356.00,486.60 L2356.50,486.60 L2357.00,486.60 L2357.50,486.60 L2358.00,486.60 L2358.50,486.60 L2359.00,486.60 L2359.50,486.60 L2360.00,486.60 L2360.50,486.60 L2361.00,486.60 L2361.50,486.60 L2362.00,486.60 L2362.50,486.60 L2363.00,486.60 L2363.50,486.60 L2364.00,486.60 L2364.50,486.60 L2365.00,486.60 L2365.50,486.60 L2366.00,486.60 L2366.50,486.60 L2367.00,486.60 L2367.50,486.60 L2368.00,486.60 L2368.50,486.60 L2369.00,486.60 L2369.50,486.60 L2370.00,486.60 L2370.50,483.26 L2370.70,477.00 L2371.00,486.39 L2371.50,486.60 L2372.00,486.60 L2372.50,486.60 L2373.00,486.60 L2373.50,486.60 L2374.00,486.60 L2374.50,486.60 L2375.00,486.60 L2375.50,486.60 L2376.00,486.60 L2376.50,486.60 L2377.00,486.60 L2377.50,486.60 L2378.00,486.60 L2378.50,486.60 L2379.00,486.60 L2379.50,486.60 L2380.00,486.60 L2380.50,486.60 L2381.00,486.60 L2381.50,486.60 L2382.00,486.60 L2382.50,486.60 L2383.00,486.60 L2383.50,486.60 L2384.00,486.60 L2384.50,486.60 L2385.00,486.60 L2385.50,486.60 L2386.00,486.60 L2386.50,473.96 L2386.80,462.60 L2387.00,470.18 L2387.50,486.60 L2388.00,486.60 L2388.50,486.60 L2389.00,486.60 L2389.50,486.60 L2390.00,486.60 L2390.50,486.60 L2391.00,486.60 L2391.50,486.60 L2392.00,486.60 L2392.50,486.60 L2393.00,486.60 L2393.50,486.60 L2394.00,486.60 L2394.50,486.60 L2395.00,486.60 L2395.50,486.60 L2396.00,486.60 L2396.50,486.60 L2397.00,486.60 L2397.50,486.60 L2398.00,486.60 L2398.50,486.60 L2399.00,486.60 L2399.50,486.60 L2400.00,486.60 L2400.50,486.60 L2401.00,486.60 L2401.50,486.60 L2402.00,486.60 L2402.50,486.60 L2403.00,472.00 L2403.50,486.60 L2404.00,486.60 L2404.50,486.60 L2405.00,486.60 L2405.50,486.60 L2406.00,486.60 L2406.50,486.60 L2407.00,486.60 L2407.50,486.60 L2408.00,486.60 L2408.50,486.60 L2409.00,486.60 L2409.50,486.60 L2410.00,486.60 L2410.50,486.60 L2411.00,486.60 L2411.50,486.60 L2412.00,486.60 L2412.50,486.60 L2413.00,486.60 L2413.50,486.60 L2414.00,486.60 L2414.50,486.60 L2415.00,486.60 L2415.50,486.60 L2416.00,486.60 L2416.50,486.60 L2417.00,486.60 L2417.50,486.60 L2418.00,486.60 L2418.50,486.60 L2418.90,477.90 L2419.00,481.00 L2419.50,486.60 L2420.00,486.60 L2420.50,486.60 L2421.00,486.60 L2421.50,486.60 L2422.00,486.60 L2422.50,486.60 L2423.00,486.60 L2423.50,486.60 L2424.00,486.60 L2424.50,486.60 L2425.00,486.60 L2425.50,486.60 L2426.00,486.60 L2426.50,486.60 L2427.00,486.60 L2427.50,486.60 L2428.00,486.60 L2428.50,486.60 L2429.00,486.60 L2429.50,486.60 L2430.00,486.60 L2430.50,486.60 L2431.00,486.60 L2431.50,486.60 L2432.00,486.60 L2432.50,486.60 L2433.00,486.60 L2433.50,486.60 L2434.00,486.60 L2434.50,472.83 L2435.00,451.20 L2435.50,472.83 L2436.00,486.60 L2436.50,486.60 L2437.00,486.60 L2437.50,486.60 L2438.00,486.60 L2438.50,486.60 L2439.00,486.60 L2439.50,486.60 L2440.00,486.60 L2440.50,486.60 L2441.00,486.60 L2441.50,486.60 L2442.00,486.60 L2442.50,486.60 L2443.00,486.60 L2443.50,486.60 L2444.00,486.60 L2444.50,486.60 L2445.00,486.60 L2445.50,486.60 L2446.00,486.60 L2446.50,486.60 L2447.00,486.60 L2447.50,486.60 L2448.00,486.60 L2448.50,486.60 L2449.00,486.60 L2449.50,486.60 L2450.00,486.60 L2450.50,486.60 L2450.90,477.30 L2451.00,480.45 L2451.50,486.60 L2452.00,486.60 L2452.50,486.60 L2453.00,486.60 L2453.50,486.60 L2454.00,486.60 L2454.50,486.60 L2455.00,486.60 L2455.50,486.60 L2456.00,486.60 L2456.50,486.60 L2457.00,486.60 L2457.50,486.60 L2458.00,486.60 L2458.50,486.60 L2459.00,486.60 L2459.50,486.60 L2460.00,486.60 L2460.50,486.60 L2461.00,486.60 L2461.50,486.60 L2462.00,486.60 L2462.50,486.60 L2463.00,486.60 L2463.50,486.60 L2464.00,486.60 L2464.50,486.60 L2465.00,486.60 L2465.50,486.60 L2466.00,486.60 L2466.50,481.30 L2467.00,486.60 L2467.50,486.60 L2468.00,486.60 L2468.50,486.60 L2469.00,486.60 L2469.50,486.60 L2470.00,486.60 L2470.50,486.60 L2471.00,486.60 L2471.50,486.60 L2472.00,486.60 L2472.50,486.60 L2473.00,486.60 L2473.50,486.60 L2474.00,486.60 L2474.50,486.60 L2475.00,486.60 L2475.50,486.60 L2476.00,486.60 L2476.50,486.60 L2477.00,486.60 L2477.50,486.60 L2478.00,486.60 L2478.50,486.60 L2479.00,486.60 L2479.50,486.60 L2480.00,486.60 L2480.50,486.60 L2481.00,486.60 L2481.50,486.60 L2482.00,483.35 L2482.20,477.00 L2482.50,486.53 L2483.00,486.60 L2483.50,486.60 L2484.00,486.60 L2484.50,486.60 L2485.00,486.60 L2485.50,486.60 L2486.00,486.60 L2486.50,486.60 L2487.00,486.60 L2487.50,486.60 L2488.00,486.60 L2488.50,486.60 L2489.00,486.60 L2489.50,486.60 L2490.00,486.60 L2490.50,486.60 L2491.00,486.60 L2491.50,486.60 L2492.00,486.60 L2492.50,486.60 L2493.00,486.60 L2493.50,486.60 L2494.00,486.60 L2494.50,486.60 L2495.00,486.60 L2495.50,486.60 L2496.00,486.60 L2496.50,486.60 L2497.00,486.60 L2497.50,486.60 L2498.00,486.60 L2498.50,478.30 L2499.00,486.60 L2499.50,486.60 L2500.00,486.60 L2500.50,486.60 L2501.00,486.60 L2501.50,486.60 L2502.00,486.60 L2502.50,486.60 L2503.00,486.60 L2503.50,486.60 L2504.00,486.60 L2504.50,486.60 L2505.00,486.60 L2505.50,486.60 L2506.00,486.60 L2506.50,486.60 L2507.00,486.60 L2507.50,486.60 L2508.00,486.60 L2508.50,486.60 L2509.00,486.60 L2509.50,486.60 L2510.00,486.60 L2510.50,486.60 L2511.00,486.60 L2511.50,486.60 L2512.00,486.60 L2512.50,486.60 L2513.00,486.60 L2513.50,486.60 L2514.00,468.74 L2514.10,465.00 L2514.50,479.95 L2515.00,486.60 L2515.50,486.60 L2516.00,486.60 L2516.50,486.60 L2517.00,486.60 L2517.50,486.60 L2518.00,486.60 L2518.50,486.60 L2519.00,486.60 L2519.50,486.60 L2520.00,486.60 L2520.50,486.60 L2521.00,486.60 L2521.50,486.60 L2522.00,486.60 L2522.50,486.60 L2523.00,486.60 L2523.50,486.60 L2524.00,486.60 L2524.50,486.60 L2525.00,486.60 L2525.50,486.60 L2526.00,486.60 L2526.50,486.60 L2527.00,486.60 L2527.50,486.60 L2528.00,486.60 L2528.50,486.60 L2529.00,486.60 L2529.50,486.60 L2530.00,486.60 L2530.50,486.60 L2530.80,480.70 L2531.00,486.60 L2531.50,486.60 L2532.00,486.60 L2532.50,486.60 L2533.00,486.60 L2533.50,486.60 L2534.00,486.60 L2534.50,486.60 L2535.00,486.60 L2535.50,486.60 L2536.00,486.60 L2536.50,486.60 L2537.00,486.60 L2537.50,486.60 L2538.00,486.60 L2538.50,486.60 L2539.00,486.60 L2539.50,486.60 L2540.00,486.60 L2540.50,486.60 L2541.00,486.60 L2541.50,486.60 L2542.00,486.60 L2542.50,486.60 L2543.00,486.60 L2543.50,486.60 L2544.00,486.60 L2544.50,486.60 L2545.00,486.60 L2545.50,486.60 L2546.00,486.60 L2546.50,486.60 L2546.70,486.60 L2547.00,486.60 L2547.50,486.60 L2548.00,486.60 L2548.50,486.60 L2549.00,486.60 L2549.50,486.60 L2550.00,486.60 L2550.50,486.60 L2551.00,486.60 L2551.50,486.60 L2552.00,486.60 L2552.50,486.60 L2553.00,486.60 L2553.50,486.60 L2554.00,486.60 L2554.50,486.60 L2555.00,486.60 L2555.50,486.60 L2556.00,486.60 L2556.50,486.60 L2557.00,486.60 L2557.50,486.60 L2558.00,486.60 L2558.50,486.60 L2559.00,486.60 L2559.50,486.60 L2560.00,486.60 L2560.50,486.60 L2561.00,486.60 L2561.50,486.60 L2562.00,486.60 L2562.50,486.60 L2562.80,480.30 L2563.00,486.43 L2563.50,486.60 L2564.00,486.60 L2564.50,486.60 L2565.00,486.60 L2565.50,486.60 L2566.00,486.60 L2566.50,486.60 L2567.00,486.60 L2567.50,486.60 L2568.00,486.60 L2568.50,486.60 L2569.00,486.60 L2569.50,486.60 L2570.00,486.60 L2570.50,486.60 L2571.00,486.60 L2571.50,486.60 L2572.00,486.60 L2572.50,486.60 L2573.00,486.60 L2573.50,486.60 L2574.00,486.60 L2574.50,486.60 L2575.00,486.60 L2575.50,486.60 L2576.00,486.60 L2576.50,486.60 L2577.00,486.60 L2577.50,486.60 L2578.00,486.60 L2578.50,486.60 L2579.00,486.60 L2579.50,486.60 L2580.00,486.60 L2580.50,486.60 L2581.00,486.60 L2581.50,486.60 L2582.00,486.60 L2582.50,486.60 L2583.00,486.60 L2583.50,486.60 L2584.00,486.60 L2584.50,486.60 L2585.00,486.60 L2585.50,538.24 L2586.00,539.59 L2586.50,541.33 L2587.00,545.03 L2587.50,545.51 L2588.00,547.46 L2588.50,486.60 L2589.00,486.60 L2589.50,486.60 L2590.00,486.60 L2590.50,486.60 L2591.00,486.60 L2591.50,486.60 L2592.00,486.60 L2592.50,486.60 L2593.00,486.60 L2593.50,486.60 L2594.00,486.60 L2594.50,474.58 L2594.90,458.30 L2595.00,462.37 L2595.50,482.71 L2596.00,486.60 L2596.50,486.60 L2597.00,486.60 L2597.50,486.60 L2598.00,486.60 L2598.50,486.60 L2599.00,486.60 L2599.50,486.60 L2600.00,486.60 L2600.50,486.60 L2601.00,486.60 L2601.50,486.60 L2602.00,486.60 L2602.50,486.60 L2603.00,486.60 L2603.50,486.60 L2604.00,486.60 L2604.50,486.60 L2605.00,486.60 L2605.50,486.60 L2606.00,486.60 L2606.50,486.60 L2607.00,486.60 L2607.50,486.60 L2608.00,486.60 L2608.50,486.60 L2609.00,486.60 L2609.50,486.60 L2610.00,486.60 L2610.50,486.60 L2611.00,473.85 L2611.20,466.50 L2611.50,477.52 L2612.00,486.60 L2612.50,486.60 L2613.00,486.60 L2613.50,486.60 L2614.00,486.60 L2614.50,486.60 L2615.00,486.60 L2615.50,486.60 L2616.00,486.60 L2616.50,486.60 L2617.00,486.60 L2617.50,486.60 L2618.00,486.60 L2618.50,486.60 L2619.00,486.60 L2619.50,486.60 L2620.00,486.60 L2620.50,486.60 L2621.00,486.60 L2621.50,486.60 L2622.00,486.60 L2622.50,486.60 L2623.00,486.60 L2623.50,486.60 L2624.00,486.60 L2624.50,486.60 L2625.00,486.60 L2625.50,483.98 L2626.00,465.50 L2626.50,483.97 L2627.00,486.60 L2627.50,486.60 L2628.00,486.60 L2628.50,486.60 L2629.00,486.60 L2629.50,486.60 L2630.00,486.60 L2630.50,486.60 L2631.00,486.60 L2631.50,486.60 L2632.00,486.60 L2632.50,486.60 L2633.00,486.60 L2633.50,486.60 L2634.00,486.60 L2634.50,486.60 L2635.00,486.60 L2635.50,486.60 L2636.00,486.60 L2636.50,486.60 L2637.00,486.60 L2637.50,486.60 L2638.00,486.60 L2638.50,486.60 L2639.00,486.60 L2639.50,486.60 L2640.00,486.60 L2640.50,486.60 L2641.00,486.60 L2641.50,486.60 L2642.00,486.60 L2642.10,486.60 L2642.50,486.60 L2643.00,486.60 L2643.50,486.60 L2644.00,486.60 L2644.50,486.60 L2645.00,486.60 L2645.50,486.60 L2646.00,486.60 L2646.50,486.60 L2647.00,486.60 L2647.50,486.60 L2648.00,486.60 L2648.50,486.60 L2649.00,486.60 L2649.50,486.60 L2650.00,486.60 L2650.50,486.60 L2651.00,486.60 L2651.50,486.60 L2652.00,486.60 L2652.50,486.60 L2653.00,486.60 L2653.50,486.60 L2654.00,486.60 L2654.50,486.60 L2655.00,486.60 L2655.50,486.60 L2656.00,486.60 L2656.50,486.60 L2657.00,486.60 L2657.50,486.60 L2658.00,486.60 L2658.40,486.60 L2658.50,486.60 L2659.00,486.60 L2659.50,486.60 L2660.00,486.60 L2660.50,486.60 L2661.00,486.60 L2661.50,486.60 L2662.00,486.60 L2662.50,486.60 L2663.00,486.60 L2663.50,486.60 L2664.00,486.60 L2664.50,486.60 L2665.00,486.60 L2665.50,486.60 L2666.00,486.60 L2666.50,486.60 L2667.00,486.60 L2667.50,486.60 L2668.00,486.60 L2668.50,486.60 L2669.00,486.60 L2669.50,486.60 L2670.00,486.60 L2670.50,486.60 L2671.00,486.60 L2671.50,486.60 L2672.00,486.60 L2672.50,486.60 L2673.00,486.60 L2673.50,486.60 L2674.00,486.60 L2674.50,477.90 L2675.00,458.30 L2675.50,477.88 L2676.00,486.60 L2676.50,486.60 L2677.00,486.60 L2677.50,486.60 L2678.00,486.60 L2678.50,486.60 L2679.00,486.60 L2679.50,486.60 L2680.00,486.60 L2680.50,486.60 L2681.00,486.60 L2681.50,486.60 L2682.00,486.60 L2682.50,486.60 L2683.00,486.60 L2683.50,486.60 L2684.00,486.60 L2684.50,486.60 L2685.00,486.60 L2685.50,486.60 L2686.00,486.60 L2686.50,486.60 L2687.00,486.60 L2687.50,486.60 L2688.00,486.60 L2688.50,486.60 L2689.00,486.60 L2689.50,486.60 L2690.00,486.60 L2690.50,471.78 L2690.70,464.60 L2691.00,475.36 L2691.50,486.60 L2692.00,486.60 L2692.50,486.60 L2693.00,486.60 L2693.50,486.60 L2694.00,486.60 L2694.50,486.60 L2695.00,486.60 L2695.50,486.60 L2696.00,486.60 L2696.50,486.60 L2697.00,486.60 L2697.50,486.60 L2698.00,486.60 L2698.50,486.60 L2699.00,486.60 L2699.50,486.60 L2700.00,486.60 L2700.50,486.60 L2701.00,486.60 L2701.50,486.60 L2702.00,486.60 L2702.50,486.60 L2703.00,486.60 L2703.50,486.60 L2704.00,486.60 L2704.50,486.60 L2705.00,486.60 L2705.50,486.60 L2706.00,486.60 L2706.50,486.60 L2707.00,481.30 L2707.50,486.60 L2708.00,486.60 L2708.50,486.60 L2709.00,486.60 L2709.50,486.60 L2710.00,486.60 L2710.50,486.60 L2711.00,486.60 L2711.50,486.60 L2712.00,486.60 L2712.50,486.60 L2713.00,486.60 L2713.50,486.60 L2714.00,486.60 L2714.50,486.60 L2715.00,486.60 L2715.50,486.60 L2716.00,486.60 L2716.50,486.60 L2717.00,486.60 L2717.50,486.60 L2718.00,486.60 L2718.50,486.60 L2719.00,486.60 L2719.50,486.60 L2720.00,486.60 L2720.50,486.60 L2721.00,486.60 L2721.50,486.60 L2722.00,486.60 L2722.50,486.60 L2723.00,479.36 L2723.10,476.40 L2723.50,486.60 L2724.00,486.60 L2724.50,486.60 L2725.00,486.60 L2725.50,486.60 L2726.00,486.60 L2726.50,486.60 L2727.00,486.60 L2727.50,486.60 L2728.00,486.60 L2728.50,486.60 L2729.00,486.60 L2729.50,486.60 L2730.00,486.60 L2730.50,486.60 L2731.00,486.60 L2731.50,486.60 L2732.00,486.60 L2732.50,486.60 L2733.00,486.60 L2733.50,486.60 L2734.00,486.60 L2734.50,486.60 L2735.00,486.60 L2735.50,486.60 L2736.00,486.60 L2736.50,486.60 L2737.00,486.60 L2737.50,486.60 L2738.00,486.60 L2738.50,486.60 L2739.00,486.60 L2739.50,478.42 L2739.90,464.60 L2740.00,468.05 L2740.50,485.32 L2741.00,486.60 L2741.50,486.60 L2742.00,486.60 L2742.50,486.60 L2743.00,486.60 L2743.50,486.60 L2744.00,486.60 L2744.50,486.60 L2745.00,486.60 L2745.50,486.60 L2746.00,486.60 L2746.50,486.60 L2747.00,486.60 L2747.50,486.60 L2748.00,486.60 L2748.50,486.60 L2749.00,486.60 L2749.50,486.60 L2750.00,486.60 L2750.50,486.60 L2751.00,486.60 L2751.50,486.60 L2752.00,486.60 L2752.50,486.60 L2753.00,486.60 L2753.50,486.60 L2754.00,486.60 L2754.50,486.60 L2755.00,486.60 L2755.50,486.60 L2756.00,469.60 L2756.20,462.60 L2756.50,473.09 L2757.00,486.60 L2757.50,486.60 L2758.00,486.60 L2758.50,486.60 L2759.00,486.60 L2759.50,486.60 L2760.00,486.60 L2760.50,486.60 L2761.00,486.60 L2761.50,486.60 L2762.00,486.60 L2762.50,486.60 L2763.00,486.60 L2763.50,486.60 L2764.00,486.60 L2764.50,486.60 L2765.00,486.60 L2765.50,486.60 L2766.00,486.60 L2766.50,486.60 L2767.00,486.60 L2767.50,486.60 L2768.00,486.60 L2768.50,486.60 L2769.00,486.60 L2769.50,486.60 L2770.00,486.60 L2770.50,486.60 L2770.90,476.40 L2771.00,479.22 L2771.50,486.60 L2772.00,486.60 L2772.50,486.60 L2773.00,486.60 L2773.50,486.60 L2774.00,486.60 L2774.50,486.60 L2775.00,486.60 L2775.50,486.60 L2776.00,486.60 L2776.50,486.60 L2777.00,486.60 L2777.50,486.60 L2778.00,486.60 L2778.50,486.60 L2779.00,486.60 L2779.50,486.60 L2780.00,486.60 L2780.50,486.60 L2781.00,486.60 L2781.50,486.60 L2782.00,486.60 L2782.50,486.60 L2783.00,486.60 L2783.50,486.60 L2784.00,486.60 L2784.50,486.60 L2785.00,486.60 L2785.50,486.60 L2786.00,471.64 L2786.10,468.50 L2786.50,481.04 L2787.00,486.60 L2787.50,486.60 L2788.00,486.60 L2788.50,486.60 L2789.00,486.60 L2789.50,486.60 L2790.00,486.60 L2790.50,486.60 L2791.00,486.60 L2791.50,486.60 L2792.00,486.60 L2792.50,486.60 L2793.00,486.60 L2793.50,486.60 L2794.00,486.60 L2794.50,486.60 L2795.00,486.60 L2795.50,486.60 L2796.00,486.60 L2796.50,486.60 L2797.00,486.60 L2797.50,486.60 L2798.00,486.60 L2798.50,486.60 L2799.00,486.60 L2799.50,486.60 L2800.00,486.60 L2800.50,486.60 L2801.00,486.60 L2801.50,477.05 L2802.00,459.60 L2802.50,477.04 L2803.00,486.60 L2803.50,486.60 L2804.00,486.60 L2804.50,486.60 L2805.00,486.60 L2805.50,486.60 L2806.00,486.60 L2806.50,486.60 L2807.00,486.60 L2807.50,486.60 L2808.00,486.60 L2808.50,486.60 L2809.00,486.60 L2809.50,486.60 L2810.00,486.60 L2810.50,486.60 L2811.00,486.60 L2811.50,486.60 L2812.00,486.60 L2812.50,486.60 L2813.00,486.60 L2813.50,486.60 L2814.00,486.60 L2814.50,486.60 L2815.00,486.60 L2815.50,486.60 L2816.00,486.60 L2816.50,486.60 L2817.00,486.60 L2817.50,486.60 L2818.00,475.32 L2818.50,457.70 L2819.00,475.31 L2819.50,486.60 L2820.00,486.60 L2820.50,486.60 L2821.00,486.60 L2821.50,486.60 L2822.00,486.60 L2822.50,486.60 L2823.00,486.60 L2823.50,486.60 L2824.00,486.60 L2824.50,486.60 L2825.00,486.60 L2825.50,486.60 L2826.00,486.60 L2826.50,486.60 L2827.00,486.60 L2827.50,486.60 L2828.00,486.60 L2828.50,486.60 L2829.00,486.60 L2829.50,486.60 L2830.00,486.60 L2830.50,486.60 L2831.00,486.60 L2831.50,486.60 L2832.00,486.60 L2832.50,486.60 L2833.00,486.60 L2833.50,486.60 L2834.00,486.60 L2834.50,477.79 L2834.80,468.90 L2835.00,474.82 L2835.50,486.60 L2836.00,486.60 L2836.50,486.60 L2837.00,486.60 L2837.50,486.60 L2838.00,486.60 L2838.50,486.60 L2839.00,486.60 L2839.50,486.60 L2840.00,486.60 L2840.50,486.60 L2841.00,486.60 L2841.50,486.60 L2842.00,486.60 L2842.50,486.60 L2843.00,486.60 L2843.50,486.60 L2844.00,486.60 L2844.50,486.60 L2845.00,486.60 L2845.50,486.60 L2846.00,486.60 L2846.50,486.60 L2847.00,486.60 L2847.50,486.60 L2848.00,486.60 L2848.50,486.60 L2849.00,486.60 L2849.50,486.60 L2850.00,486.60 L2850.50,472.49 L2851.00,454.70 L2851.50,472.48 L2852.00,486.60 L2852.50,486.60 L2853.00,486.60 L2853.50,486.60 L2854.00,486.60 L2854.50,486.60 L2855.00,486.60 L2855.50,486.60 L2856.00,486.60 L2856.50,486.60 L2857.00,486.60 L2857.50,486.60 L2858.00,486.60 L2858.50,486.60 L2859.00,486.60 L2859.50,486.60 L2860.00,486.60 L2860.50,486.60 L2861.00,486.60 L2861.50,486.60 L2862.00,486.60 L2862.50,486.60 L2863.00,486.60 L2863.50,486.60 L2864.00,486.60 L2864.50,486.60 L2865.00,486.60 L2865.50,486.60 L2866.00,486.60 L2866.50,468.87 L2867.00,446.26 L2867.30,432.70 L2867.50,441.74 L2868.00,464.33 L2868.50,486.60 L2869.00,486.60 L2869.50,486.60 L2870.00,486.60 L2870.50,486.60 L2871.00,486.60 L2871.50,486.60 L2872.00,486.60 L2872.50,486.60 L2873.00,486.60 L2873.50,486.60 L2874.00,486.60 L2874.50,486.60 L2875.00,486.60 L2875.50,486.60 L2876.00,486.60 L2876.50,486.60 L2877.00,486.60 L2877.50,486.60 L2878.00,486.60 L2878.50,486.60 L2879.00,486.60 L2879.50,486.60 L2880.00,486.60 L2880.50,486.60 L2881.00,486.60 L2881.50,486.60 L2882.00,486.60 L2882.50,486.60 L2883.00,470.27 L2883.40,456.70 L2883.50,460.09 L2884.00,477.05 L2884.50,486.60 L2885.00,486.60 L2885.50,486.60 L2886.00,486.60 L2886.50,486.60 L2887.00,486.60 L2887.50,486.60 L2888.00,486.60 L2888.50,486.60 L2889.00,486.60 L2889.50,486.60 L2890.00,486.60 L2890.50,486.60 L2891.00,486.60 L2891.50,486.60 L2892.00,486.60 L2892.50,486.60 L2893.00,486.60 L2893.50,486.60 L2894.00,486.60 L2894.50,486.60 L2895.00,486.60 L2895.50,486.60 L2896.00,486.60 L2896.50,486.60 L2897.00,486.60 L2897.50,486.60 L2898.00,486.60 L2898.50,479.17 L2899.00,460.81 L2899.30,449.80 L2899.50,457.14 L2900.00,475.48 L2900.50,486.60 L2901.00,486.60 L2901.50,486.60 L2902.00,486.60 L2902.50,486.60 L2903.00,486.60 L2903.50,486.60 L2904.00,486.60 L2904.50,486.60 L2905.00,486.60 L2905.50,486.60 L2906.00,486.60 L2906.50,486.60 L2907.00,486.60 L2907.50,486.60 L2908.00,486.60 L2908.50,486.60 L2909.00,486.60 L2909.50,486.60 L2910.00,486.60 L2910.50,486.60 L2911.00,486.60 L2911.50,486.60 L2912.00,486.60 L2912.50,486.60 L2913.00,486.60 L2913.50,486.60 L2914.00,484.90 L2914.50,464.48 L2915.00,444.08 L2915.10,440.00 L2915.50,456.31 L2916.00,476.70 L2916.50,486.60 L2917.00,486.60 L2917.50,486.60 L2918.00,486.60 L2918.50,486.60 L2919.00,486.60 L2919.50,486.60 L2920.00,486.60 L2920.50,486.60 L2921.00,486.60 L2921.50,486.60 L2922.00,486.60 L2922.50,486.60 L2923.00,486.60 L2923.50,486.60 L2924.00,486.60 L2924.50,486.60 L2925.00,486.60 L2925.50,486.60 L2926.00,486.60 L2926.50,486.60 L2927.00,486.60 L2927.50,486.60 L2928.00,486.60 L2928.50,486.60 L2929.00,486.60 L2929.50,486.60 L2930.00,486.60 L2930.50,486.60 L2931.00,470.66 L2931.50,452.44 L2931.60,448.80 L2932.00,463.36 L2932.50,481.56 L2933.00,486.60 L2933.50,486.60 L2934.00,486.60 L2934.50,486.60 L2935.00,516.32 L2935.50,509.02 L2936.00,500.53 L2936.50,496.49 L2937.00,495.96 L2937.50,498.97 L2938.00,486.60 L2938.50,486.60 L2939.00,486.60 L2939.50,486.60 L2940.00,486.60 L2940.50,486.60 L2941.00,486.60 L2941.50,486.60 L2942.00,486.60 L2942.50,486.60 L2943.00,486.60 L2943.50,486.60 L2944.00,486.60 L2944.50,486.60 L2945.00,471.50 L2945.50,447.84 L2946.00,424.20 L2946.50,447.83 L2947.00,471.45 L2947.50,486.60 L2948.00,486.60 L2948.50,486.60 L2949.00,486.60 L2949.50,486.60 L2950.00,486.60 L2950.50,486.60 L2951.00,486.60 L2951.50,486.60 L2952.00,486.60 L2952.50,486.60 L2953.00,486.60 L2953.50,486.60 L2954.00,486.60 L2954.50,486.60 L2955.00,486.60 L2955.50,486.60 L2956.00,486.60 L2956.50,486.60 L2957.00,486.60 L2957.50,486.60 L2958.00,486.60 L2958.50,486.60 L2959.00,486.60 L2959.50,486.60 L2960.00,486.60 L2960.50,486.60 L2961.00,486.60 L2961.50,471.13 L2962.00,453.35 L2962.10,449.80 L2962.50,464.02 L2963.00,481.79 L2963.50,486.60 L2964.00,486.60 L2964.50,486.60 L2965.00,486.60 L2965.50,486.60 L2966.00,486.60 L2966.50,486.60 L2967.00,486.60 L2967.50,486.60 L2968.00,486.60 L2968.50,486.60 L2969.00,486.60 L2969.50,486.60 L2970.00,486.60 L2970.50,486.60 L2971.00,486.60 L2971.50,486.60 L2972.00,486.60 L2972.50,486.60 L2973.00,486.60 L2973.50,486.60 L2974.00,486.60 L2974.50,486.60 L2975.00,486.60 L2975.50,486.60 L2976.00,486.60 L2976.50,486.60 L2977.00,483.76 L2977.50,465.33 L2978.00,446.90 L2978.50,465.33 L2979.00,483.76 L2979.50,486.60 L2980.00,486.60 L2980.50,486.60 L2981.00,486.60 L2981.50,486.60 L2982.00,486.60 L2982.50,486.60 L2983.00,486.60 L2983.50,486.60 L2984.00,486.60 L2984.50,486.60 L2985.00,486.60 L2985.50,486.60 L2986.00,486.60 L2986.50,486.60 L2987.00,486.60 L2987.50,486.60 L2988.00,486.60 L2988.50,486.60 L2989.00,486.60 L2989.50,486.60 L2990.00,486.60 L2990.50,486.60 L2991.00,486.60 L2991.50,486.60 L2992.00,486.60 L2992.50,486.60 L2993.00,486.60 L2993.50,486.60 L2994.00,478.91 L2994.20,474.00 L2994.50,481.36 L2995.00,486.60 L2995.50,486.60 L2996.00,486.60 L2996.50,486.60 L2997.00,486.60 L2997.50,486.60 L2998.00,486.60 L2998.50,486.60 L2999.00,486.60 L2999.50,486.60 L3000.00,486.60 L3000.50,486.60 L3001.00,486.60 L3001.50,486.60 L3002.00,486.60 L3002.50,486.60 L3003.00,486.60 L3003.50,486.60 L3004.00,486.60 L3004.50,486.60 L3005.00,486.60 L3005.50,486.60 L3006.00,486.60 L3006.50,486.60 L3007.00,486.60 L3007.50,486.60 L3008.00,486.60 L3008.50,486.60 L3009.00,486.60 L3009.50,486.60 L3010.00,486.60 L3010.50,474.74 L3010.90,463.60 L3011.00,466.38 L3011.50,480.22 L3012.00,486.60 L3012.50,486.60 L3013.00,486.60 L3013.50,486.60 L3014.00,486.60 L3014.50,486.60 L3015.00,486.60 L3015.50,486.60 L3016.00,486.60 L3016.50,486.60 L3017.00,486.60 L3017.50,486.60 L3018.00,486.60 L3018.50,486.60 L3019.00,486.60 L3019.50,486.60 L3020.00,486.60 L3020.50,486.60 L3021.00,486.60 L3021.50,486.60 L3022.00,486.60 L3022.50,486.60 L3023.00,486.60 L3023.50,486.60 L3024.00,486.60 L3024.50,486.60 L3025.00,486.60 L3025.50,486.60 L3026.00,486.60 L3026.50,486.60 L3026.60,486.20 L3027.00,486.60 L3027.50,486.60 L3028.00,486.60 L3028.50,486.60 L3029.00,486.60 L3029.50,486.60 L3030.00,486.60 L3030.50,486.60 L3031.00,486.60 L3031.50,486.60 L3032.00,486.60 L3032.50,486.60 L3033.00,486.60 L3033.50,486.60 L3034.00,486.60 L3034.50,486.60 L3035.00,486.60 L3035.50,486.60 L3036.00,486.60 L3036.50,486.60 L3037.00,486.60 L3037.50,486.60 L3038.00,486.60 L3038.50,486.60 L3039.00,486.60 L3039.50,486.60 L3040.00,486.60 L3040.50,486.60 L3041.00,486.60 L3041.50,486.60 L3042.00,485.81 L3042.50,474.24 L3042.90,465.00 L3043.00,467.31 L3043.50,478.85 L3044.00,486.60 L3044.50,486.60 L3045.00,486.60 L3045.50,486.60 L3046.00,486.60 L3046.50,486.60 L3047.00,486.60 L3047.50,486.60 L3048.00,486.60 L3048.50,486.60 L3049.00,486.60 L3049.50,486.60 L3050.00,486.60 L3050.50,486.60 L3051.00,486.60 L3051.50,486.60 L3052.00,486.60 L3052.50,486.60 L3053.00,486.60 L3053.50,486.60 L3054.00,486.60 L3054.50,486.60 L3055.00,486.60 L3055.50,486.60 L3056.00,486.60 L3056.50,486.60 L3057.00,486.60 L3057.50,486.60 L3058.00,470.50 L3058.50,450.35 L3059.00,430.22 L3059.10,426.20 L3059.50,442.29 L3060.00,462.39 L3060.50,482.48 L3061.00,486.60 L3061.50,486.60 L3062.00,486.60 L3062.50,486.60 L3063.00,486.60 L3063.50,486.60 L3064.00,486.60 L3064.50,486.60 L3065.00,486.60 L3065.50,486.60 L3066.00,486.60 L3066.50,486.60 L3067.00,486.60 L3067.50,486.60 L3068.00,486.60 L3068.50,486.60 L3069.00,486.60 L3069.50,486.60 L3070.00,486.60 L3070.50,486.60 L3071.00,486.60 L3071.50,486.60 L3072.00,486.60 L3072.50,486.60 L3073.00,486.60 L3073.50,486.60 L3074.00,470.30 L3074.50,452.19 L3075.00,434.10 L3075.50,452.18 L3076.00,470.24 L3076.50,486.60 L3077.00,486.60 L3077.50,486.60 L3078.00,486.60 L3078.50,486.60 L3079.00,486.60 L3079.50,486.60 L3080.00,486.60 L3080.50,486.60 L3081.00,486.60 L3081.50,486.60 L3082.00,486.60 L3082.50,486.60 L3083.00,486.60 L3083.50,486.60 L3084.00,486.60 L3084.50,483.39 L3085.00,478.55 L3085.50,481.26 L3086.00,486.60 L3086.50,486.60 L3087.00,486.60 L3087.50,486.60 L3088.00,486.60 L3088.50,486.60 L3089.00,486.60 L3089.50,486.60 L3090.00,471.38 L3090.50,452.61 L3091.00,433.85 L3091.10,430.10 L3091.50,445.09 L3092.00,463.82 L3092.50,482.54 L3093.00,486.60 L3093.50,486.60 L3094.00,486.60 L3094.50,486.60 L3095.00,486.60 L3095.50,486.60 L3096.00,486.60 L3096.50,486.60 L3097.00,486.60 L3097.50,486.60 L3098.00,486.60 L3098.50,486.60 L3099.00,486.60 L3099.50,486.60 L3100.00,486.60 L3100.50,486.60 L3101.00,486.60 L3101.50,486.60 L3102.00,486.60 L3102.50,486.60 L3103.00,486.60 L3103.50,486.60 L3104.00,486.60 L3104.50,486.60 L3105.00,481.51 L3105.50,463.36 L3106.00,445.10 L3106.30,434.10 L3106.50,441.46 L3107.00,459.93 L3107.50,478.50 L3108.00,486.60 L3108.50,486.60 L3109.00,486.60 L3109.50,486.60 L3110.00,486.60 L3110.50,486.60 L3111.00,486.60 L3111.50,486.60 L3112.00,486.60 L3112.50,486.60 L3113.00,486.60 L3113.50,486.60 L3114.00,486.60 L3114.50,486.60 L3115.00,486.60 L3115.50,486.60 L3116.00,486.60 L3116.50,486.60 L3117.00,486.60 L3117.50,486.60 L3118.00,486.60 L3118.50,486.60 L3119.00,486.60 L3119.50,486.60 L3120.00,486.60 L3120.50,486.60 L3121.00,485.53 L3121.50,470.47 L3122.00,455.30 L3122.50,470.57 L3123.00,485.95 L3123.50,486.60 L3124.00,486.60 L3124.50,486.60 L3125.00,486.60 L3125.50,486.60 L3126.00,486.60 L3126.50,486.60 L3127.00,486.60 L3127.50,486.60 L3128.00,486.60 L3128.50,486.60 L3129.00,486.60 L3129.50,486.60 L3130.00,486.60 L3130.50,486.60 L3131.00,486.60 L3131.50,486.60 L3132.00,486.60 L3132.50,486.60 L3133.00,486.60 L3133.50,486.60 L3134.00,486.60 L3134.50,486.60 L3135.00,486.60 L3135.50,486.60 L3136.00,486.60 L3136.50,486.60 L3137.00,486.60 L3137.50,486.60 L3138.00,482.50 L3138.50,468.00 L3138.70,462.20 L3139.00,470.90 L3139.50,485.40 L3140.00,486.60 L3140.50,486.60 L3141.00,486.60 L3141.50,486.60 L3142.00,486.60 L3142.50,486.60 L3143.00,486.60 L3143.50,486.60 L3144.00,486.60 L3144.50,486.60 L3145.00,486.60 L3145.50,486.60 L3146.00,486.60 L3146.50,486.60 L3147.00,486.60 L3147.50,486.60 L3148.00,486.60 L3148.50,486.60 L3149.00,486.60 L3149.50,486.60 L3150.00,486.60 L3150.50,486.60 L3151.00,486.60 L3151.50,486.60 L3152.00,486.60 L3152.50,486.60 L3153.00,486.60 L3153.50,486.60 L3154.00,475.31 L3154.50,459.47 L3154.60,456.30 L3155.00,468.97 L3155.50,484.81 L3156.00,486.60 L3156.50,486.60 L3157.00,486.60 L3157.50,486.60 L3158.00,486.60 L3158.50,486.60 L3159.00,486.60 L3159.50,486.60 L3160.00,486.60 L3160.50,486.60 L3161.00,486.60 L3161.50,486.60 L3162.00,486.60 L3162.50,486.60 L3163.00,486.60 L3163.50,486.60 L3164.00,486.60 L3164.50,486.60 L3165.00,486.60 L3165.50,486.60 L3166.00,486.60 L3166.50,486.60 L3167.00,486.60 L3167.50,486.60 L3168.00,486.60 L3168.50,486.60 L3169.00,486.60 L3169.50,486.60 L3170.00,484.13 L3170.50,469.17 L3170.80,460.20 L3171.00,466.18 L3171.50,481.14 L3172.00,486.60 L3172.50,486.60 L3173.00,486.60 L3173.50,486.60 L3174.00,486.60 L3174.50,486.60 L3175.00,486.60 L3175.50,486.60 L3176.00,486.60 L3176.50,486.60 L3177.00,486.60 L3177.50,486.60 L3178.00,486.60 L3178.50,486.60 L3179.00,486.60 L3179.50,486.60 L3180.00,486.60 L3180.50,486.60 L3181.00,486.60 L3181.50,486.60 L3182.00,486.60 L3182.50,486.60 L3183.00,486.60 L3183.50,486.60 L3184.00,486.60 L3184.50,486.60 L3185.00,486.60 L3185.50,486.60 L3186.00,482.39 L3186.50,465.62 L3186.90,452.20 L3187.00,455.55 L3187.50,472.33 L3188.00,486.60 L3188.50,486.60 L3189.00,486.60 L3189.50,486.60 L3190.00,486.60 L3190.50,486.60 L3191.00,486.60 L3191.50,486.60 L3192.00,486.60 L3192.50,486.60 L3193.00,486.60 L3193.50,486.60 L3194.00,486.60 L3194.50,486.60 L3195.00,486.60 L3195.50,486.60 L3196.00,486.60 L3196.50,486.60 L3197.00,486.60 L3197.50,486.60 L3198.00,486.60 L3198.50,486.60 L3199.00,486.60 L3199.50,486.60 L3200.00,486.60 L3200.50,486.60 L3201.00,486.60 L3201.50,486.60 L3202.00,477.51 L3202.50,460.19 L3202.80,449.80 L3203.00,456.73 L3203.50,474.05 L3204.00,486.60 L3204.50,486.60 L3205.00,486.60 L3205.50,486.60 L3206.00,486.60 L3206.50,486.60 L3207.00,486.60 L3207.50,486.60 L3208.00,486.60 L3208.50,486.60 L3209.00,486.60 L3209.50,486.60 L3210.00,486.60 L3210.50,486.60 L3211.00,486.60 L3211.50,486.60 L3212.00,486.60 L3212.50,486.60 L3213.00,486.60 L3213.50,486.60 L3214.00,486.60 L3214.50,486.60 L3215.00,486.60 L3215.50,486.60 L3216.00,486.60 L3216.50,486.60 L3217.00,486.60 L3217.50,486.60 L3218.00,486.60 L3218.50,472.16 L3218.90,460.20 L3219.00,463.19 L3219.50,478.15 L3220.00,486.60 L3220.50,486.60 L3221.00,486.60 L3221.50,486.60 L3222.00,486.60 L3222.50,486.60 L3223.00,486.60 L3223.50,486.60 L3224.00,486.60 L3224.50,486.60 L3225.00,486.60 L3225.50,486.60 L3226.00,486.60 L3226.50,486.60 L3227.00,486.60 L3227.50,486.60 L3228.00,486.60 L3228.50,486.60 L3229.00,486.60 L3229.50,486.60 L3230.00,486.60 L3230.50,486.60 L3231.00,486.60 L3231.50,486.60 L3232.00,486.60 L3232.50,486.60 L3233.00,486.60 L3233.50,486.60 L3234.00,486.60 L3234.50,473.42 L3235.00,456.99 L3235.10,453.70 L3235.50,466.85 L3236.00,483.28 L3236.50,486.60 L3237.00,486.60 L3237.50,486.60 L3238.00,486.60 L3238.50,486.60 L3239.00,486.60 L3239.50,486.60 L3240.00,486.60 L3240.50,486.60 L3241.00,486.60 L3241.50,486.60 L3242.00,486.60 L3242.50,486.60 L3243.00,486.60 L3243.50,486.60 L3244.00,486.60 L3244.50,486.60 L3245.00,486.60 L3245.50,486.60 L3246.00,486.60 L3246.50,486.60 L3247.00,486.60 L3247.50,486.60 L3248.00,486.60 L3248.50,486.60 L3249.00,486.60 L3249.50,486.60 L3250.00,481.44 L3250.50,462.87 L3251.00,444.30 L3251.50,462.87 L3252.00,481.44 L3252.50,486.60 L3253.00,486.60 L3253.50,486.60 L3254.00,486.60 L3254.50,486.60 L3255.00,486.60 L3255.50,486.60 L3256.00,486.60 L3256.50,486.60 L3257.00,486.60 L3257.50,486.60 L3258.00,486.60 L3258.50,486.60 L3259.00,486.60 L3259.50,486.60 L3260.00,486.60 L3260.50,486.60 L3261.00,486.60 L3261.50,486.60 L3262.00,486.60 L3262.50,486.60 L3263.00,486.60 L3263.50,486.60 L3264.00,486.60 L3264.50,486.60 L3265.00,486.60 L3265.50,486.60 L3266.00,486.60 L3266.50,476.62 L3267.00,461.19 L3267.10,458.10 L3267.50,470.45 L3268.00,485.88 L3268.50,486.60 L3269.00,486.60 L3269.50,486.60 L3270.00,486.60 L3270.50,486.60 L3271.00,486.60 L3271.50,486.60 L3272.00,486.60 L3272.50,486.60 L3273.00,486.60 L3273.50,486.60 L3274.00,486.60 L3274.50,486.60 L3275.00,486.60 L3275.50,486.60 L3276.00,486.60 L3276.50,486.60 L3277.00,486.60 L3277.50,486.60 L3278.00,486.60 L3278.50,486.60 L3279.00,486.60 L3279.50,486.60 L3280.00,486.60 L3280.50,486.60 L3281.00,486.60 L3281.50,486.60 L3282.00,486.60 L3282.50,472.00 L3282.90,460.00 L3283.00,463.00 L3283.50,478.00 L3284.00,486.60 L3284.50,486.60 L3285.00,486.60 L3285.50,486.60 L3286.00,486.60 L3286.50,486.60 L3287.00,486.60 L3287.50,486.60 L3288.00,486.60 L3288.50,486.60 L3289.00,486.60 L3289.50,486.60 L3290.00,486.60 L3290.50,486.60 L3291.00,486.60 L3291.50,486.60 L3292.00,486.60 L3292.50,486.60 L3293.00,486.60 L3293.50,486.60 L3294.00,486.60 L3294.50,486.60 L3295.00,486.60 L3295.50,486.60 L3296.00,486.60 L3296.50,486.60 L3297.00,477.13 L3297.50,456.76 L3298.00,436.40 L3298.50,456.76 L3299.00,477.13 L3299.50,486.60 L3300.00,486.60 L3300.50,486.60 L3301.00,486.60 L3301.50,486.60 L3302.00,486.60 L3302.50,486.60 L3303.00,486.60 L3303.50,486.60 L3304.00,486.60 L3304.50,486.60 L3305.00,486.60 L3305.50,486.60 L3306.00,486.60 L3306.50,486.60 L3307.00,486.60 L3307.50,486.60 L3308.00,486.60 L3308.50,486.60 L3309.00,486.60 L3309.50,486.60 L3310.00,486.60 L3310.50,486.60 L3311.00,486.60 L3311.50,486.60 L3312.00,486.60 L3312.50,486.60 L3313.00,486.60 L3313.50,486.60 L3314.00,478.07 L3314.30,470.50 L3314.50,475.55 L3315.00,486.60 L3315.50,486.60 L3316.00,486.60 L3316.50,486.60 L3317.00,486.60 L3317.50,486.60 L3318.00,486.60 L3318.50,486.60 L3319.00,486.60 L3319.50,486.60 L3320.00,486.60 L3320.50,486.60 L3321.00,486.60 L3321.50,486.60 L3322.00,486.60 L3322.50,486.60 L3323.00,486.60 L3323.50,486.60 L3324.00,486.60 L3324.50,486.60 L3325.00,486.60 L3325.50,486.60 L3326.00,486.60 L3326.50,486.60 L3327.00,486.60 L3327.50,486.60 L3328.00,486.60 L3328.50,486.60 L3329.00,486.60 L3329.50,476.30 L3330.00,457.19 L3330.40,441.90 L3330.50,445.72 L3331.00,464.84 L3331.50,483.95 L3332.00,486.60 L3332.50,486.60 L3333.00,486.60 L3333.50,486.60 L3334.00,486.60 L3334.50,486.60 L3335.00,486.60 L3335.50,486.60 L3336.00,486.60 L3336.50,486.60 L3337.00,486.60 L3337.50,486.60 L3338.00,486.60 L3338.50,486.60 L3339.00,486.60 L3339.50,486.60 L3340.00,486.60 L3340.50,486.60 L3341.00,486.60 L3341.50,486.60 L3342.00,486.60 L3342.50,486.60 L3343.00,486.60 L3343.50,486.60 L3344.00,486.60 L3344.50,486.60" stroke="#85bd72" stroke-width="2" stroke-dasharray="2 8" stroke-dashoffset="7.6" fill="none"/>
</g>
<path d="M40,724H1674 M40,771.8H1674 M40,818.8H1674 M40,866.8H1674 M1726,676H3360 M1726,723.6H3360 M1726,771.6H3360 M1726,819H3360 M1726,866.2H3360" stroke="#303136" stroke-width="2" fill="none"/>
<rect x="56" y="744.0" width="28" height="8" rx="4" fill="#f19d49"/>
<rect x="56" y="791.9" width="28" height="8" rx="4" fill="#6592eb"/>
<rect x="56" y="839.5" width="28" height="8" rx="4" fill="#85bd72"/>
<rect x="1742" y="696.0" width="28" height="8" rx="4" fill="#f19d49"/>
<rect x="1742" y="743.8" width="28" height="8" rx="4" fill="#e05660"/>
<rect x="1742" y="791.6" width="28" height="8" rx="4" fill="#6592eb"/>
<rect x="1742" y="838.8" width="28" height="8" rx="4" fill="#85bd72"/>
<rect x="1372" y="99" width="253" height="46" rx="4" fill="#2b2c31" stroke="#393a40" stroke-width="2"/>
<rect x="3014.5" y="99" width="296.5" height="46" rx="4" fill="#2b2c31" stroke="#393a40" stroke-width="2"/>
<rect x="1642" y="88" width="48" height="64" rx="4" fill="#2b2c31"/>
<circle cx="1666" cy="110.5" r="2.8" fill="#8e8e9a"/>
<circle cx="1666" cy="120" r="2.8" fill="#8e8e9a"/>
<circle cx="1666" cy="129.3" r="2.8" fill="#8e8e9a"/>
<circle cx="55.8" cy="1034" r="11.7" stroke="#428a57" stroke-width="2.9" fill="none"/><path d="M50.4,1033.9 L53.8,1037.3 L60.3,1030.6" stroke="#428a57" stroke-width="2.6" fill="none" stroke-linecap="round" stroke-linejoin="round"/>
<circle cx="1741.9" cy="1034" r="11.7" stroke="#428a57" stroke-width="2.9" fill="none"/><path d="M1736.5,1033.9 L1739.9,1037.3 L1746.4,1030.6" stroke="#428a57" stroke-width="2.6" fill="none" stroke-linecap="round" stroke-linejoin="round"/>
<circle cx="2585" cy="1033.8" r="11.7" stroke="#428a57" stroke-width="2.9" fill="none"/><path d="M2579.6,1033.7 L2583,1037.1 L2589.5,1030.3999999999999" stroke="#428a57" stroke-width="2.6" fill="none" stroke-linecap="round" stroke-linejoin="round"/>
<text class="r" x="21.34" y="47.80" font-size="35.3" textLength="270.21" lengthAdjust="spacingAndGlyphs">Pod optimization</text>
<text class="m" x="39.53" y="129.90" font-size="29.7" textLength="121.29" lengthAdjust="spacingAndGlyphs">Pod CPU</text>
<text class="m" x="1724.10" y="130.40" font-size="29.7" textLength="173.80" lengthAdjust="spacingAndGlyphs">Pod Memory</text>
<text class="m" x="1386.38" y="129.60" font-size="24.8" textLength="223.86" lengthAdjust="spacingAndGlyphs">Predict CPU Usage</text>
<text class="m" x="3027.43" y="130.90" font-size="24.8" textLength="269.44" lengthAdjust="spacingAndGlyphs">Predict memory Usage</text>
<text class="r" x="67.37" y="255.40" font-size="25" textLength="86.25" lengthAdjust="spacingAndGlyphs">2 cores</text>
<text class="r" x="50.23" y="361.80" font-size="25" textLength="103.36" lengthAdjust="spacingAndGlyphs">1.5 cores</text>
<text class="r" x="70.21" y="470.30" font-size="25" textLength="83.38" lengthAdjust="spacingAndGlyphs">1 cores</text>
<text class="r" x="46.39" y="577.30" font-size="25" textLength="107.23" lengthAdjust="spacingAndGlyphs">0.5 cores</text>
<text class="r" x="1731.43" y="247.20" font-size="25" textLength="76.62" lengthAdjust="spacingAndGlyphs">14 GiB</text>
<text class="r" x="1732.15" y="309.70" font-size="25" textLength="75.89" lengthAdjust="spacingAndGlyphs">12 GiB</text>
<text class="r" x="1731.84" y="371.30" font-size="25" textLength="76.20" lengthAdjust="spacingAndGlyphs">10 GiB</text>
<text class="r" x="1744.61" y="432.60" font-size="25" textLength="63.46" lengthAdjust="spacingAndGlyphs">8 GiB</text>
<text class="r" x="1743.59" y="493.80" font-size="25" textLength="64.49" lengthAdjust="spacingAndGlyphs">6 GiB</text>
<text class="r" x="1744.40" y="556.50" font-size="25" textLength="63.67" lengthAdjust="spacingAndGlyphs">4 GiB</text>
<text class="r" x="192.67" y="670.90" font-size="25" textLength="64.88" lengthAdjust="spacingAndGlyphs">12:00</text>
<text class="r" x="1847.97" y="622.70" font-size="25" textLength="64.88" lengthAdjust="spacingAndGlyphs">12:00</text>
<text class="r" x="317.21" y="670.90" font-size="25" textLength="64.88" lengthAdjust="spacingAndGlyphs">14:00</text>
<text class="r" x="1975.16" y="622.70" font-size="25" textLength="64.88" lengthAdjust="spacingAndGlyphs">14:00</text>
<text class="r" x="441.75" y="670.90" font-size="25" textLength="64.88" lengthAdjust="spacingAndGlyphs">16:00</text>
<text class="r" x="2102.35" y="622.70" font-size="25" textLength="64.88" lengthAdjust="spacingAndGlyphs">16:00</text>
<text class="r" x="566.29" y="670.90" font-size="25" textLength="64.88" lengthAdjust="spacingAndGlyphs">18:00</text>
<text class="r" x="2229.54" y="622.70" font-size="25" textLength="64.88" lengthAdjust="spacingAndGlyphs">18:00</text>
<text class="r" x="689.84" y="670.90" font-size="25" textLength="67.25" lengthAdjust="spacingAndGlyphs">20:00</text>
<text class="r" x="2355.74" y="622.70" font-size="25" textLength="67.25" lengthAdjust="spacingAndGlyphs">20:00</text>
<text class="r" x="814.38" y="670.90" font-size="25" textLength="67.25" lengthAdjust="spacingAndGlyphs">22:00</text>
<text class="r" x="2482.93" y="622.70" font-size="25" textLength="67.25" lengthAdjust="spacingAndGlyphs">22:00</text>
<text class="r" x="939.13" y="670.90" font-size="25" textLength="67.25" lengthAdjust="spacingAndGlyphs">00:00</text>
<text class="r" x="2610.33" y="622.70" font-size="25" textLength="67.25" lengthAdjust="spacingAndGlyphs">00:00</text>
<text class="r" x="1063.67" y="670.90" font-size="25" textLength="67.25" lengthAdjust="spacingAndGlyphs">02:00</text>
<text class="r" x="2737.52" y="622.70" font-size="25" textLength="67.25" lengthAdjust="spacingAndGlyphs">02:00</text>
<text class="r" x="1188.21" y="670.90" font-size="25" textLength="67.25" lengthAdjust="spacingAndGlyphs">04:00</text>
<text class="r" x="2864.71" y="622.70" font-size="25" textLength="67.25" lengthAdjust="spacingAndGlyphs">04:00</text>
<text class="r" x="1312.75" y="670.90" font-size="25" textLength="67.25" lengthAdjust="spacingAndGlyphs">06:00</text>
<text class="r" x="2991.90" y="622.70" font-size="25" textLength="67.25" lengthAdjust="spacingAndGlyphs">06:00</text>
<text class="r" x="1437.29" y="670.90" font-size="25" textLength="67.25" lengthAdjust="spacingAndGlyphs">08:00</text>
<text class="r" x="3119.09" y="622.70" font-size="25" textLength="67.25" lengthAdjust="spacingAndGlyphs">08:00</text>
<text class="r" x="1562.61" y="670.90" font-size="25" textLength="64.88" lengthAdjust="spacingAndGlyphs">10:00</text>
<text class="r" x="3247.06" y="622.70" font-size="25" textLength="64.88" lengthAdjust="spacingAndGlyphs">10:00</text>
<text class="m" x="99.06" y="707.80" font-size="24.5" textLength="69.60" lengthAdjust="spacingAndGlyphs" style="fill:#799ef8;stroke:#799ef8;stroke-width:0.75px">Name</text>
<text class="m" x="1239.17" y="707.80" font-size="24.5" textLength="43.96" lengthAdjust="spacingAndGlyphs" style="fill:#799ef8;stroke:#799ef8;stroke-width:0.75px">Min</text>
<text class="m" x="1408.23" y="707.80" font-size="24.5" textLength="66.15" lengthAdjust="spacingAndGlyphs" style="fill:#799ef8;stroke:#799ef8;stroke-width:0.75px">Mean</text>
<text class="m" x="1578.70" y="707.80" font-size="24.5" textLength="48.40" lengthAdjust="spacingAndGlyphs" style="fill:#799ef8;stroke:#799ef8;stroke-width:0.75px">Max</text>
<text class="r" x="100.19" y="755.70" font-size="24.5" textLength="363.11" lengthAdjust="spacingAndGlyphs">Sum of container CPU requests</text>
<text class="r" x="1213.50" y="755.70" font-size="24.5" textLength="119.50" lengthAdjust="spacingAndGlyphs">1.50 cores</text>
<text class="r" x="1383.50" y="755.70" font-size="24.5" textLength="119.50" lengthAdjust="spacingAndGlyphs">1.50 cores</text>
<text class="r" x="1538.81" y="755.70" font-size="24.5" textLength="118.99" lengthAdjust="spacingAndGlyphs">1.50 cores</text>
<text class="r" x="100.20" y="803.60" font-size="24.5" textLength="332.34" lengthAdjust="spacingAndGlyphs">Sum of container CPU usage</text>
<text class="r" x="1195.68" y="803.60" font-size="24.5" textLength="137.34" lengthAdjust="spacingAndGlyphs">0.387 cores</text>
<text class="r" x="1364.67" y="803.60" font-size="24.5" textLength="138.35" lengthAdjust="spacingAndGlyphs">0.845 cores</text>
<text class="r" x="1535.47" y="803.60" font-size="24.5" textLength="122.35" lengthAdjust="spacingAndGlyphs">2.08 cores</text>
<text class="r" x="99.79" y="851.20" font-size="24.5" textLength="170.46" lengthAdjust="spacingAndGlyphs">CPU allocation</text>
<text class="r" x="1198.80" y="851.20" font-size="24.5" textLength="134.21" lengthAdjust="spacingAndGlyphs">0.519 cores</text>
<text class="r" x="1383.50" y="851.20" font-size="24.5" textLength="119.50" lengthAdjust="spacingAndGlyphs">1.50 cores</text>
<text class="r" x="1535.47" y="851.20" font-size="24.5" textLength="122.35" lengthAdjust="spacingAndGlyphs">2.08 cores</text>
<text class="m" x="1784.96" y="660.30" font-size="24.5" textLength="69.60" lengthAdjust="spacingAndGlyphs" style="fill:#799ef8;stroke:#799ef8;stroke-width:0.75px">Name</text>
<text class="m" x="3014.24" y="660.30" font-size="24.5" textLength="44.62" lengthAdjust="spacingAndGlyphs" style="fill:#799ef8;stroke:#799ef8;stroke-width:0.75px">Min</text>
<text class="m" x="3146.52" y="660.30" font-size="24.5" textLength="66.47" lengthAdjust="spacingAndGlyphs" style="fill:#799ef8;stroke:#799ef8;stroke-width:0.75px">Mean</text>
<text class="m" x="3287.43" y="660.30" font-size="24.5" textLength="49.97" lengthAdjust="spacingAndGlyphs" style="fill:#799ef8;stroke:#799ef8;stroke-width:0.75px">Max</text>
<text class="r" x="1786.39" y="707.30" font-size="24.5" textLength="405.33" lengthAdjust="spacingAndGlyphs">Sum of container memory requests</text>
<text class="r" x="3008.00" y="707.30" font-size="24.5" textLength="63.97" lengthAdjust="spacingAndGlyphs">6 GiB</text>
<text class="r" x="3149.01" y="707.30" font-size="24.5" textLength="63.56" lengthAdjust="spacingAndGlyphs">6 GiB</text>
<text class="r" x="3280.20" y="707.30" font-size="24.5" textLength="63.87" lengthAdjust="spacingAndGlyphs">6 GiB</text>
<text class="r" x="1786.38" y="755.10" font-size="24.5" textLength="365.93" lengthAdjust="spacingAndGlyphs">Sum of container memory limits</text>
<text class="r" x="2995.33" y="755.10" font-size="24.5" textLength="76.62" lengthAdjust="spacingAndGlyphs">14 GiB</text>
<text class="r" x="3136.65" y="755.10" font-size="24.5" textLength="75.89" lengthAdjust="spacingAndGlyphs">14 GiB</text>
<text class="r" x="3268.15" y="755.10" font-size="24.5" textLength="75.89" lengthAdjust="spacingAndGlyphs">14 GiB</text>
<text class="r" x="1786.39" y="802.90" font-size="24.5" textLength="374.96" lengthAdjust="spacingAndGlyphs">Sum of container memory usage</text>
<text class="r" x="2972.50" y="802.90" font-size="24.5" textLength="99.47" lengthAdjust="spacingAndGlyphs">3.82 GiB</text>
<text class="r" x="3113.60" y="802.90" font-size="24.5" textLength="98.97" lengthAdjust="spacingAndGlyphs">4.89 GiB</text>
<text class="r" x="3244.70" y="802.90" font-size="24.5" textLength="99.37" lengthAdjust="spacingAndGlyphs">8.06 GiB</text>
<text class="r" x="1785.13" y="850.10" font-size="24.5" textLength="214.65" lengthAdjust="spacingAndGlyphs">Memory allocation</text>
<text class="r" x="2972.00" y="850.10" font-size="24.5" textLength="99.98" lengthAdjust="spacingAndGlyphs">4.23 GiB</text>
<text class="r" x="3114.32" y="850.10" font-size="24.5" textLength="98.24" lengthAdjust="spacingAndGlyphs">6.07 GiB</text>
<text class="r" x="3244.70" y="850.10" font-size="24.5" textLength="99.37" lengthAdjust="spacingAndGlyphs">8.06 GiB</text>
<text class="r" x="39.32" y="952.10" font-size="29.3" textLength="231.38" lengthAdjust="spacingAndGlyphs">CPU requests set</text>
<text class="r" x="626.94" y="952.10" font-size="29.3" textLength="203.79" lengthAdjust="spacingAndGlyphs">1 / 1 containers</text>
<text class="r" x="88.50" y="1044.50" font-size="29.5" textLength="403.10" lengthAdjust="spacingAndGlyphs">All container CPU requests set</text>
<text class="r" x="882.12" y="952.10" font-size="29.3" textLength="184.78" lengthAdjust="spacingAndGlyphs">CPU limits set</text>
<text class="r" x="1465.55" y="952.10" font-size="29.3" textLength="208.41" lengthAdjust="spacingAndGlyphs">0 / 1 containers</text>
<text class="r" x="1724.34" y="952.10" font-size="29.3" textLength="282.36" lengthAdjust="spacingAndGlyphs">Memory requests set</text>
<text class="r" x="2311.73" y="952.10" font-size="29.3" textLength="204.71" lengthAdjust="spacingAndGlyphs">1 / 1 containers</text>
<text class="r" x="1774.20" y="1044.50" font-size="29.5" textLength="452.10" lengthAdjust="spacingAndGlyphs">All container memory requests set</text>
<text class="r" x="2567.64" y="952.10" font-size="29.3" textLength="234.75" lengthAdjust="spacingAndGlyphs">Memory limits set</text>
<text class="r" x="3155.44" y="952.10" font-size="29.3" textLength="204.00" lengthAdjust="spacingAndGlyphs">1 / 1 containers</text>
<text class="r" x="2618.30" y="1044.50" font-size="29.5" textLength="405.20" lengthAdjust="spacingAndGlyphs">All container memory limits set</text>
<text class="m" x="39.26" y="1162.20" font-size="30.5" textLength="268.67" lengthAdjust="spacingAndGlyphs">CPU cost allocation</text>
<text class="m" x="463.85" y="1162.20" font-size="30.5" textLength="321.25" lengthAdjust="spacingAndGlyphs" clip-path="url(#clip87)">Memory cost allocation</text>
<text class="m" x="891.61" y="1162.20" font-size="30.5" textLength="484.41" lengthAdjust="spacingAndGlyphs">Total pod cost allocation (compute)</text>
<text class="m" x="1725.28" y="1162.20" font-size="30.5" textLength="183.32" lengthAdjust="spacingAndGlyphs">CPU idle cost</text>
<text class="m" x="2149.96" y="1162.20" font-size="30.5" textLength="235.93" lengthAdjust="spacingAndGlyphs">Memory idle cost</text>
<text class="m" x="2577.51" y="1162.20" font-size="30.5" textLength="400.41" lengthAdjust="spacingAndGlyphs">Total pod idle cost (compute)</text>
<text class="v" x="149.40" y="1272.40" font-size="64.4" textLength="155.93" lengthAdjust="spacingAndGlyphs">$1.33</text>
<text class="v" x="551.60" y="1272.40" font-size="64.4" textLength="203.50" lengthAdjust="spacingAndGlyphs">$0.685</text>
<text class="v" x="1200.90" y="1272.40" font-size="64.4" textLength="165.07" lengthAdjust="spacingAndGlyphs">$2.02</text>
<text class="v" x="1810.80" y="1272.40" font-size="64.4" textLength="205.37" lengthAdjust="spacingAndGlyphs">$0.500</text>
<text class="v" x="2244.90" y="1272.40" font-size="64.4" textLength="187.83" lengthAdjust="spacingAndGlyphs">$0.124</text>
<text class="v" x="2866.70" y="1272.40" font-size="64.4" textLength="204.06" lengthAdjust="spacingAndGlyphs">$0.620</text>
</svg>
</body></html>
